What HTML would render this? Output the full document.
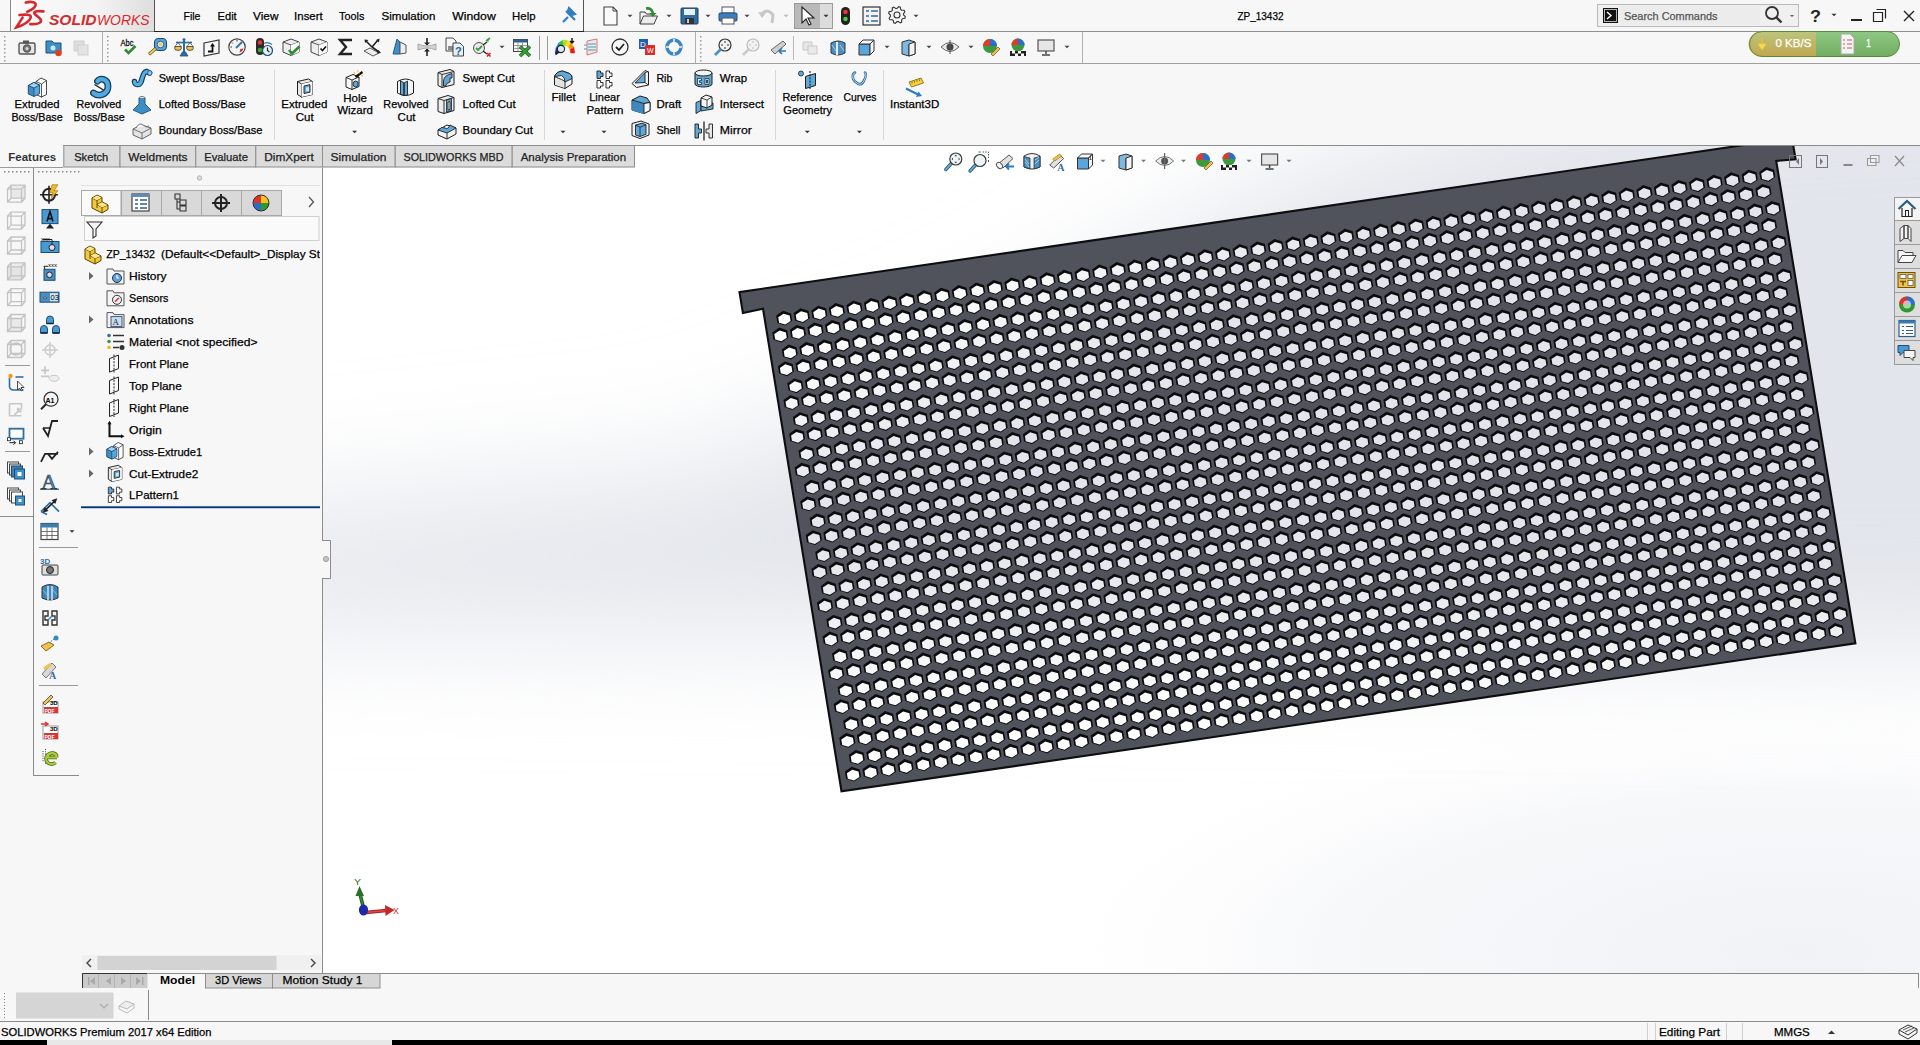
<!DOCTYPE html><html><head><meta charset="utf-8"><title>SOLIDWORKS</title><style>html,body{margin:0;padding:0;width:1920px;height:1045px;overflow:hidden;background:#f7f7f7}svg{display:block;font-family:"Liberation Sans",sans-serif}</style></head><body><svg width="1920" height="1045" viewBox="0 0 1920 1045"><rect x="0" y="0" width="1920" height="31" fill="#f7f7f7" /><defs><linearGradient id="lg" x1="0" x2="1" y1="0" y2="0"><stop offset="0" stop-color="#fbfbfb"/><stop offset=".6" stop-color="#f3f3f3"/><stop offset="1" stop-color="#dedede"/></linearGradient></defs><rect x="11" y="0" width="143" height="31" fill="url(#lg)" /><line x1="10.5" y1="0" x2="10.5" y2="31" stroke="#8a8a8a" stroke-width="1" /><line x1="154.5" y1="0" x2="154.5" y2="31" stroke="#8a8a8a" stroke-width="1" /><g fill="none" stroke="#d42a2f" stroke-linecap="round"><path d="M25.8 2.6C31 1.2 36.5 2 35.6 5.2 34.8 8 31 10.3 27.3 11.8" stroke-width="2.6"/><path d="M19.5 15C24.5 14.4 31 14.2 30.8 16.8 30.4 21 23 25.5 16.3 27.4L22.6 17.6" stroke-width="2.6"/><path d="M43.4 11.4C39.5 11 34.5 11 34.3 12.8 34.1 15 41.2 17.6 41 21 40.8 23.6 35.5 24.3 30.4 24.2" stroke-width="2.7"/></g><text x="49" y="24.5" font-size="15.5" font-weight="bold" font-style="italic" fill="#d52b2f" textLength="47.5" lengthAdjust="spacingAndGlyphs">SOLID</text><text x="97" y="24.5" font-size="15.5" font-style="italic" fill="#d52b2f" textLength="52.5" lengthAdjust="spacingAndGlyphs">WORKS</text><rect x="155" y="0" width="429" height="31" fill="#f7f7f7" /><line x1="154.5" y1="0" x2="154.5" y2="31.5" stroke="#555" stroke-width="1" /><line x1="583.5" y1="0" x2="583.5" y2="31.5" stroke="#555" stroke-width="1" /><line x1="154" y1="31.5" x2="584" y2="31.5" stroke="#222" stroke-width="1" /><text x="183.5" y="20.3" font-size="11.8" stroke="#000" stroke-width="0.25" textLength="16.9" lengthAdjust="spacingAndGlyphs">File</text><text x="217.5" y="20.3" font-size="11.8" stroke="#000" stroke-width="0.25" textLength="19.2" lengthAdjust="spacingAndGlyphs">Edit</text><text x="253.1" y="20.3" font-size="11.8" stroke="#000" stroke-width="0.25">View</text><text x="294.1" y="20.3" font-size="11.8" stroke="#000" stroke-width="0.25" textLength="28.6" lengthAdjust="spacingAndGlyphs">Insert</text><text x="339.1" y="20.3" font-size="11.8" stroke="#000" stroke-width="0.25" textLength="25.3" lengthAdjust="spacingAndGlyphs">Tools</text><text x="381.5" y="20.3" font-size="11.8" stroke="#000" stroke-width="0.25" textLength="53.9" lengthAdjust="spacingAndGlyphs">Simulation</text><text x="452.3" y="20.3" font-size="11.8" stroke="#000" stroke-width="0.25" textLength="43.4" lengthAdjust="spacingAndGlyphs">Window</text><text x="512.1" y="20.3" font-size="11.8" stroke="#000" stroke-width="0.25" textLength="23.4" lengthAdjust="spacingAndGlyphs">Help</text><path d="M563 22l5-5M566 11l9 9M569 8l6 6-3 1-4-4z" stroke="#2f7fc0" stroke-width="2.2" fill="#2f7fc0"/><g transform="translate(601 6)"><path d="M3 1h9l4 4v14H3z" fill="#fafafa" stroke="#444" stroke-width="1.1"/><path d="M12 1v4h4" fill="none" stroke="#444"/></g><path d="M627.5 14.75h5.0l-2.5 2.5z" fill="#444"/><g transform="translate(639 6)"><path d="M1 6h5l1.5 2H14v3" fill="#ddd" stroke="#444" stroke-width="1"/><path d="M1 18l3.5-8h14L15 18z" fill="#ececec" stroke="#444" stroke-width="1"/><path d="M1 6v12" stroke="#444"/><path d="M7 2.5q6-1 7 5" fill="none" stroke="#2e8b2e" stroke-width="2.6"/><path d="M10.5 7h7l-3.5 4z" fill="#2e8b2e"/></g><path d="M666.5 14.75h5.0l-2.5 2.5z" fill="#444"/><g transform="translate(680 6)"><rect x="1" y="2" width="17" height="16" rx="1" fill="#2f6ea3" stroke="#1c3f60"/><rect x="4" y="3" width="11" height="6" fill="#e8f1f8"/><rect x="5" y="12" width="9" height="6" fill="#333"/><rect x="7" y="13" width="2" height="4" fill="#ccc"/></g><path d="M705.5 14.75h5.0l-2.5 2.5z" fill="#444"/><g transform="translate(718 6)"><rect x="4" y="1" width="12" height="6" fill="#fff" stroke="#555"/><rect x="1" y="7" width="18" height="8" rx="1" fill="#3a7fc0" stroke="#244e78"/><rect x="4" y="12" width="12" height="6" fill="#fff" stroke="#555"/></g><path d="M744.5 14.75h5.0l-2.5 2.5z" fill="#444"/><g transform="translate(757 6)"><path d="M4 9q6-8 12 0l-1 8" fill="none" stroke="#c8c8c8" stroke-width="3"/><path d="M1 6l4 6 4-5z" fill="#c8c8c8"/></g><path d="M783.5 14.75h5.0l-2.5 2.5z" fill="#bbb"/><rect x="794.5" y="3.5" width="38" height="25" fill="#dcdcdc" stroke="#9a9a9a" stroke-width="1" /><rect x="795" y="4" width="25" height="24" fill="#b9b9b9" /><g transform="translate(799 6)"><path d="M3 1v16l4-4 3 6 2-1-3-6h6z" fill="#fff" stroke="#222" stroke-width="1.1"/></g><path d="M823.5 14.75h5.0l-2.5 2.5z" fill="#333"/><g transform="translate(836 6)"><rect x="5" y="1" width="9" height="18" rx="4.5" fill="#222"/><circle cx="9.5" cy="6" r="2.3" fill="#e33"/><circle cx="9.5" cy="13" r="2.3" fill="#4c4"/></g><g transform="translate(862 6)"><rect x="1" y="1" width="17" height="18" fill="#f3f3f3" stroke="#333" stroke-width="1.2"/><path d="M4 5h3M9 5h7M4 10h3M9 10h7M4 15h3M9 15h7" stroke="#2b6ea6" stroke-width="1.6"/></g><g transform="translate(887 5)"><path d="M10.0 3.4L11.7 1.7L13.3 2.1L13.7 4.5L14.7 5.3L17.1 5.3L17.9 6.7L16.5 8.7L16.6 10.0L18.3 11.7L17.9 13.3L15.5 13.7L14.7 14.7L14.7 17.1L13.3 17.9L11.3 16.5L10.0 16.6L8.3 18.3L6.7 17.9L6.3 15.5L5.3 14.7L2.9 14.7L2.1 13.3L3.5 11.3L3.4 10.0L1.7 8.3L2.1 6.7L4.5 6.3L5.3 5.3L5.3 2.9L6.7 2.1L8.7 3.5Z" fill="#f4f4f4" stroke="#333" stroke-width="1.1"/><circle cx="10" cy="10" r="3" fill="#f7f7f7" stroke="#333" stroke-width="1.1"/></g><path d="M913.5 14.75h5.0l-2.5 2.5z" fill="#444"/><text x="1237.5" y="19.8" font-size="11.5" stroke="#000" stroke-width="0.25" textLength="46.0" lengthAdjust="spacingAndGlyphs">ZP_13432</text><rect x="1597.5" y="4.5" width="201" height="22" fill="#f0f0f0" stroke="#b9b9b9" stroke-width="1" /><rect x="1620" y="6" width="140" height="19" fill="#ececec" /><g transform="translate(1602 7)"><rect x="1" y="1" width="15" height="15" fill="#111"/><rect x="2.5" y="2.5" width="12" height="12" fill="none" stroke="#ddd" stroke-width=".8"/><path d="M5 5l4 3.5-4 3.5" fill="none" stroke="#fff" stroke-width="1.4"/></g><text x="1624.0" y="19.8" font-size="11.5" fill="#555" stroke="#555" stroke-width="0.25" textLength="93.5" lengthAdjust="spacingAndGlyphs">Search Commands</text><g transform="translate(1764 5)"><circle cx="8" cy="8" r="6" fill="none" stroke="#333" stroke-width="1.8"/><path d="M12.5 12.5l5 5" stroke="#333" stroke-width="2.4"/></g><path d="M1789.8 14.9h4.4l-2.2 2.2z" fill="#666"/><text x="1810" y="22" font-size="16" font-weight="bold" fill="#222" textLength="11" lengthAdjust="spacingAndGlyphs">?</text><path d="M1831.5 13.75h5.0l-2.5 2.5z" fill="#333"/><rect x="1851" y="19" width="11" height="2" fill="#222" /><path d="M1876.5 9.5h9v9M1873.5 12.5h9v9h-9z" fill="none" stroke="#222" stroke-width="1.2"/><path d="M1904 11l10 10M1914 11l-10 10" stroke="#222" stroke-width="1.4"/><rect x="0" y="32" width="1920" height="31" fill="#f7f7f7" /><line x1="0" y1="31.5" x2="154" y2="31.5" stroke="#8f8f8f" stroke-width="1" /><line x1="584" y1="31.5" x2="1920" y2="31.5" stroke="#8f8f8f" stroke-width="1" /><line x1="0" y1="63.5" x2="1920" y2="63.5" stroke="#a0a0a0" stroke-width="1" /><rect x="4" y="36" width="1.5" height="1.5" fill="#999"/><rect x="4" y="40" width="1.5" height="1.5" fill="#999"/><rect x="4" y="44" width="1.5" height="1.5" fill="#999"/><rect x="4" y="48" width="1.5" height="1.5" fill="#999"/><rect x="4" y="52" width="1.5" height="1.5" fill="#999"/><rect x="4" y="56" width="1.5" height="1.5" fill="#999"/><rect x="4" y="60" width="1.5" height="1.5" fill="#999"/><rect x="107" y="36" width="1.5" height="1.5" fill="#999"/><rect x="107" y="40" width="1.5" height="1.5" fill="#999"/><rect x="107" y="44" width="1.5" height="1.5" fill="#999"/><rect x="107" y="48" width="1.5" height="1.5" fill="#999"/><rect x="107" y="52" width="1.5" height="1.5" fill="#999"/><rect x="107" y="56" width="1.5" height="1.5" fill="#999"/><rect x="107" y="60" width="1.5" height="1.5" fill="#999"/><line x1="102.5" y1="32" x2="102.5" y2="63" stroke="#b0b0b0" stroke-width="1" /><g transform="translate(17 37)"><rect x="2" y="6" width="16" height="11" rx="1.5" fill="#e8e8e8" stroke="#555" stroke-width="1.4"/><rect x="6" y="3.5" width="6" height="3" fill="#555"/><circle cx="10" cy="11.5" r="3.6" fill="#777" stroke="#555" stroke-width="1.2"/><circle cx="10" cy="11.5" r="1.5" fill="#ddd"/></g><g transform="translate(44 37)"><path d="M2 4h6l2 2h7v10H2z" fill="#3d8fc6" stroke="#1d4f78" stroke-width="1"/><circle cx="9" cy="11" r="2.5" fill="#cfe6f5"/><circle cx="14.5" cy="16" r="3.2" fill="#e0401f"/></g><g transform="translate(71 37)"><rect x="3" y="4" width="10" height="10" fill="#ddd" stroke="#cfcfcf"/><rect x="7" y="8" width="10" height="10" fill="#e4e4e4" stroke="#cfcfcf"/></g><g transform="translate(120 37)"><text x="0.5" y="8.5" font-size="9" font-family="Liberation Sans" fill="#111" stroke="#111" stroke-width=".3" textLength="13" lengthAdjust="spacingAndGlyphs">Abc</text><path d="M5 12.5l3.5 3.5 7-7" fill="none" stroke="#2e8b2e" stroke-width="2.6"/></g><g transform="translate(148 37)"><rect x="6.5" y="1.5" width="12" height="12" rx="4" fill="#5aa0d0" stroke="#1d4e78" stroke-width="1.1"/><circle cx="12.5" cy="7.5" r="3.3" fill="#cfe5f3" stroke="#1d4e78" stroke-width=".8"/><circle cx="12.5" cy="7.5" r="1.8" fill="#f2d040"/><path d="M7 12l-5 4.5" stroke="#6d5a10" stroke-width="3.2" stroke-linecap="round"/><path d="M7 12l-5 4.5" stroke="#e6cf5a" stroke-width="1.8" stroke-linecap="round"/></g><g transform="translate(174 37)"><path d="M10 2v13" stroke="#2f6ea3" stroke-width="2"/><path d="M2 5.5h16" stroke="#2f6ea3" stroke-width="1.6"/><circle cx="10" cy="2.5" r="1.5" fill="#2f6ea3"/><path d="M0.8 9.5h6.4v2.3a3.2 1.5 0 0 1-6.4 0zM12.8 9.5h6.4v2.3a3.2 1.5 0 0 1-6.4 0z" fill="#f2c14b" stroke="#333" stroke-width=".8"/><path d="M1 9.5l3-4 3 4M13 9.5l3-4 3 4" fill="none" stroke="#333" stroke-width=".6"/><path d="M6 19h8l-2.5-4h-3z" fill="#2f6ea3" stroke="#1d4e78" stroke-width=".8"/></g><g transform="translate(202 37)"><path d="M2 6l15-3v13L2 19z" fill="#f6f6f6" stroke="#333" stroke-width="1.2"/><path d="M6 14.5h4.5V9" fill="none" stroke="#111" stroke-width="1.8"/><path d="M8 9.5l2.5-3.5 2.5 3.5z" fill="#111"/></g><g transform="translate(227 37)"><circle cx="10" cy="10" r="8.2" fill="#f4f4f4" stroke="#444" stroke-width="1.2"/><path d="M5 5.5l1 1M10 3v1.5M3.5 10H5M15 5.5l-1 1" stroke="#333" stroke-width="1"/><path d="M9 11l6-6" stroke="#2f79b5" stroke-width="2"/><path d="M12.5 15.5a5.5 5.5 0 0 0 4-4l-3 .5z" fill="#c62828"/></g><g transform="translate(254 37)"><rect x="2" y="1" width="8" height="17" rx="4" fill="#2a2a2a"/><circle cx="6" cy="5.5" r="2.3" fill="#e33"/><circle cx="6" cy="13" r="2.3" fill="#3a3"/><circle cx="13.5" cy="13.5" r="5" fill="#e4eef6" stroke="#1d4e78" stroke-width="1.2"/><path d="M13.5 10.5v3l2 1.5" fill="none" stroke="#222" stroke-width="1.1"/><path d="M10 6.5q4-2 8 1" fill="none" stroke="#2f79b5" stroke-width="1.2"/></g><g transform="translate(281 37)"><path d="M2 5l8-3 8 3v10l-8 3.5-8-3.5z" fill="#eeeeee" stroke="#444" stroke-width="1"/><path d="M2 5l8 3 8-3M10 8v10.5" fill="none" stroke="#444" stroke-width=".9"/><path d="M10 8l8-3v10l-8 3.5z" fill="#fafafa"/><path d="M8 13l3 3.5 7.5-7" fill="none" stroke="#2e8b2e" stroke-width="2.6"/></g><g transform="translate(309 37)"><path d="M2 5l8-3 8 3v10l-8 3.5-8-3.5z" fill="#eeeeee" stroke="#444" stroke-width="1"/><path d="M2 5l8 3 8-3M10 8v10.5" fill="none" stroke="#444" stroke-width=".9"/><path d="M10 8l8-3v10l-8 3.5z" fill="#fafafa"/><path d="M11.5 11.5l2 2 3.5-4" fill="none" stroke="#111" stroke-width="1.6"/></g><g transform="translate(336 37)"><path d="M16 3H4l6 7-6 7h12" fill="none" stroke="#222" stroke-width="2.4" stroke-linejoin="miter"/></g><g transform="translate(363 37)"><path d="M1 14l6-3 9 5-6 3z" fill="#eee" stroke="#444" stroke-width=".9"/><path d="M9 10L3 4M9 10l6-7M9 10l7 5" stroke="#222" stroke-width="1.6"/><path d="M1.5 2.5l4 .5-3.5 3zM16.5 1.5l-.5 4-3-2.5zM18 16l-4 .5 1.5-3.5z" fill="#222"/></g><g transform="translate(390 37)"><path d="M3 17l4-15 3 3v12z" fill="#3f8fcb" stroke="#245c8a"/><path d="M10 5l6 3v8l-6 1z" fill="#eee" stroke="#555"/></g><g transform="translate(417 37)"><path d="M1 7q9 4 18 0v6q-9-4-18 0z" fill="#d4d4d4" stroke="#999" stroke-width=".8"/><path d="M10 1v7M10 19v-7" stroke="#222" stroke-width="1.6"/><path d="M7 5.5l3 3 3-3zM7 14.5l3-3 3 3z" fill="#222"/></g><g transform="translate(445 37)"><path d="M1 1h7l3 3v10H1z" fill="#f6f6f6" stroke="#333" stroke-width=".9"/><path d="M3 10h5M3 12h5" stroke="#222" stroke-width="1.2"/><path d="M8 6h7l3.5 3.5V19H8z" fill="#e6f0f7" stroke="#333" stroke-width=".9"/><text x="10" y="17.5" font-size="11" font-weight="bold" fill="#2a5f90" font-family="Liberation Sans">?</text></g><g transform="translate(472 37)"><circle cx="7" cy="11" r="5.5" fill="#e9e9e9" stroke="#555" stroke-width="1"/><path d="M4 11l2 2 4-4" stroke="#3a9e3a" stroke-width="1.8" fill="none"/><path d="M11 8l4-3M11 14l4 3" stroke="#222" stroke-width="1.3"/><path d="M14 4l4-3M15 3l1.5 1.5" stroke="#3a9e3a" stroke-width="1.6" fill="none"/><path d="M15 16l3.5 3.5M18.5 16L15 19.5" stroke="#d22" stroke-width="1.6"/></g><g transform="translate(512 37)"><rect x="1.5" y="2.5" width="14" height="12" fill="#fafafa" stroke="#333" stroke-width=".9"/><rect x="1.5" y="2.5" width="14" height="3" fill="#2f5f8a"/><path d="M1.5 8.5h14M1.5 11.5h14M6 5.5v9M10.5 5.5v9" stroke="#777" stroke-width=".7"/><path d="M8 9.5l10 9.5M18 9.5L8 19" stroke="#1f6e1f" stroke-width="3.6"/><path d="M8 9.5l10 9.5M18 9.5L8 19" stroke="#3aa23a" stroke-width="2"/></g><g transform="translate(555 37)"><path d="M0.2 16.0L1.2 10.4L4.9 12.7L4.4 16.0z" fill="#1a2fb0" stroke="#1a2fb0" stroke-width=".5"/><path d="M1.2 10.4L3.9 5.8L6.5 10.1L4.9 12.7z" fill="#1f7fe0" stroke="#1f7fe0" stroke-width=".5"/><path d="M3.9 5.8L7.8 3.3L8.7 8.7L6.5 10.1z" fill="#22c05a" stroke="#22c05a" stroke-width=".5"/><path d="M7.8 3.3L12.2 3.3L11.3 8.7L8.7 8.7z" fill="#a8e020" stroke="#a8e020" stroke-width=".5"/><path d="M12.2 3.3L16.1 5.8L13.5 10.1L11.3 8.7z" fill="#f8e020" stroke="#f8e020" stroke-width=".5"/><path d="M16.1 5.8L18.8 10.4L15.1 12.7L13.5 10.1z" fill="#f89010" stroke="#f89010" stroke-width=".5"/><path d="M18.8 10.4L19.8 16.0L15.6 16.0L15.1 12.7z" fill="#e02010" stroke="#e02010" stroke-width=".5"/><circle cx="6" cy="12" r="3.6" fill="#dfe8ee" stroke="#222" stroke-width="1.1"/><path d="M3.5 14.5l-3 3" stroke="#222" stroke-width="2"/><path d="M17 1v4M15 4l2 2 2-2" fill="none" stroke="#111" stroke-width="1.4"/></g><g transform="translate(583 37)"><path d="M4 4l10-2v13L4 18z" fill="#f3e7e4" stroke="#d05a5a" stroke-width=".8"/><path d="M5 7h8M5 10h8M5 13h8" stroke="#3ba0c6"/><path d="M1 8h3M1 12h3" stroke="#3ba0c6"/></g><g transform="translate(610 37)"><circle cx="10" cy="10" r="8" fill="#f7f7f7" stroke="#333" stroke-width="1.3"/><path d="M6 10l3 3 5-6" fill="none" stroke="#222" stroke-width="1.8"/></g><g transform="translate(637 37)"><rect x="2" y="2" width="9" height="10" fill="#1f5fb0"/><rect x="8" y="8" width="10" height="10" fill="#e02b2b"/><text x="3" y="10" font-size="8" fill="#fff" font-family="Liberation Sans">D</text><text x="10" y="16" font-size="7" fill="#fff" font-family="Liberation Sans">W</text></g><g transform="translate(664 37)"><circle cx="10" cy="10" r="7" fill="none" stroke="#3d86c6" stroke-width="3.4"/><path d="M10 2v4M10 14v4M2 10h4M14 10h4" stroke="#f4f4f4" stroke-width="1.5"/></g><g transform="translate(713 37)"><circle cx="12" cy="8" r="6" fill="#f2f2f2" stroke="#333" stroke-width="1.2"/><path d="M8 12l-6 6" stroke="#4a90c8" stroke-width="2.6"/><path d="M12 4v2M12 10v2M8 8h2M14 8h2" stroke="#333" stroke-width="1"/></g><g transform="translate(741 37)"><circle cx="12" cy="8" r="6" fill="#f2f2f2" stroke="#bbb" stroke-width="1.2"/><path d="M8 12l-6 6" stroke="#ccc" stroke-width="2.6"/><path d="M12 4v2M12 10v2M8 8h2M14 8h2" stroke="#bbb" stroke-width="1"/></g><g transform="translate(768 37)"><path d="M3 13l12-9 3 3-11 10z" fill="#cfcfcf" stroke="#666"/><path d="M11 14h7M14 11l-3 3 3 3" stroke="#2f79b5" stroke-width="1.6" fill="none"/></g><g transform="translate(800 37)"><path d="M3 5h9v8H3z" fill="#e6e6e6" stroke="#c8c8c8"/><path d="M8 9h9v8H8z" fill="#e9e9e9" stroke="#c8c8c8"/></g><g transform="translate(828 37)"><path d="M3 6q7-4 14 0v10q-7 4-14 0z" fill="#4a8fc4" stroke="#333"/><path d="M9 5v13" stroke="#eee" stroke-width="2"/><path d="M4 8l4 6M12 8l4 6" stroke="#9ed0ef" stroke-width="1"/></g><g transform="translate(856 37)"><path d="M3 7h11v11H3z" fill="#5aa6dc" stroke="#333"/><path d="M3 7l4-4h11l-4 4zM14 7l4-4v11l-4 4z" fill="#f0f6fb" stroke="#333"/></g><g transform="translate(898 37)"><path d="M4 5l7-2 6 2v12l-6 2-7-2z" fill="#7eb8e0" stroke="#333"/><path d="M11 7v12" stroke="#333"/><path d="M11 7l6-2v12l-6 2z" fill="#f3f3f3" stroke="#333"/></g><g transform="translate(940 37)"><path d="M1 10q9-9 18 0q-9 9-18 0z" fill="#e8e8e8" stroke="#666"/><circle cx="10" cy="10" r="3.5" fill="#444"/><path d="M10 3v14" stroke="#555"/></g><g transform="translate(981 37)"><circle cx="9" cy="9" r="7" fill="#3c9a3c"/><path d="M9 2a7 7 0 0 1 7 7H9z" fill="#2a6fd0"/><path d="M2 9a7 7 0 0 1 7-7v7z" fill="#e03a2a"/><path d="M10 17l7-7 2 2-7 7z" fill="#f0c040" stroke="#555" stroke-width=".7"/></g><g transform="translate(1008 37)"><circle cx="10" cy="8" r="6.5" fill="#3c9a3c"/><path d="M10 1.5a6.5 6.5 0 0 1 6.5 6.5H10z" fill="#2a6fd0"/><path d="M3.5 8a6.5 6.5 0 0 1 6.5-6.5V8z" fill="#e03a2a"/><path d="M2 14h16v5H2z" fill="#222"/><path d="M4 14h3v2.5H4zM10 14h3v2.5h-3zM7 16.5h3V19H7zM13 16.5h3V19h-3z" fill="#fff"/></g><g transform="translate(1036 37)"><rect x="2" y="3" width="16" height="11" fill="#e6e6e6" stroke="#555" stroke-width="1.2"/><path d="M10 14v3M6 18h8" stroke="#444" stroke-width="1.5"/></g><path d="M499.5 45.75h5.0l-2.5 2.5z" fill="#444"/><path d="M884.5 45.75h5.0l-2.5 2.5z" fill="#444"/><path d="M926.5 45.75h5.0l-2.5 2.5z" fill="#444"/><path d="M968.5 45.75h5.0l-2.5 2.5z" fill="#444"/><path d="M1064.5 45.75h5.0l-2.5 2.5z" fill="#444"/><line x1="539.5" y1="36" x2="539.5" y2="60" stroke="#9a9a9a" stroke-width="1" /><line x1="547.5" y1="36" x2="547.5" y2="60" stroke="#9a9a9a" stroke-width="1" /><line x1="695.5" y1="32" x2="695.5" y2="63" stroke="#b0b0b0" stroke-width="1" /><rect x="700" y="36" width="1.5" height="1.5" fill="#999"/><rect x="700" y="40" width="1.5" height="1.5" fill="#999"/><rect x="700" y="44" width="1.5" height="1.5" fill="#999"/><rect x="700" y="48" width="1.5" height="1.5" fill="#999"/><rect x="700" y="52" width="1.5" height="1.5" fill="#999"/><rect x="700" y="56" width="1.5" height="1.5" fill="#999"/><rect x="700" y="60" width="1.5" height="1.5" fill="#999"/><line x1="793.5" y1="36" x2="793.5" y2="60" stroke="#b8b8b8" stroke-width="1" /><line x1="1082.5" y1="32" x2="1082.5" y2="63" stroke="#b0b0b0" stroke-width="1" /><defs><linearGradient id="pg1" x1="0" x2="0" y1="0" y2="1"><stop offset="0" stop-color="#bcc57c"/><stop offset="1" stop-color="#c2a650"/></linearGradient><linearGradient id="pg2" x1="0" x2="0" y1="0" y2="1"><stop offset="0" stop-color="#8ec883"/><stop offset="1" stop-color="#72ad62"/></linearGradient></defs><path d="M1761 31.5h55v25h-55a12.5 12.5 0 0 1 0-25z" fill="url(#pg1)"/><path d="M1816 31.5h71a12.5 12.5 0 0 1 0 25h-71z" fill="url(#pg2)"/><rect x="1749.5" y="31.5" width="150" height="25" rx="12.5" fill="none" stroke="#5b8a3c"/><path d="M1762 38v9M1758 44l4 6 4-6z" fill="#f6e25a" stroke="#e8c93a"/><text x="1775.5" y="46.5" font-size="11.5" fill="#fff" stroke="#fff" stroke-width="0.25">0 KB/S</text><g transform="translate(1840 33)"><path d="M1 1h9l4 4v16H1z" fill="#f5f5f5" stroke="#aaa"/><path d="M3 7h2M7 7h5M3 11h2M7 11h5M3 15h2M7 15h5" stroke="#c55" stroke-width="1.2"/></g><text x="1866.0" y="46.5" font-size="11.5" fill="#fff" stroke="#fff" stroke-width="0.25" textLength="5.0" lengthAdjust="spacingAndGlyphs">1</text><rect x="0" y="64" width="1920" height="81" fill="#f7f7f7" /><line x1="63" y1="145.5" x2="1920" y2="145.5" stroke="#8c8c8c" stroke-width="1" /><line x1="274.5" y1="70" x2="274.5" y2="140" stroke="#d8d8d8" stroke-width="1" /><line x1="544.5" y1="70" x2="544.5" y2="140" stroke="#d8d8d8" stroke-width="1" /><line x1="775.5" y1="70" x2="775.5" y2="140" stroke="#d8d8d8" stroke-width="1" /><line x1="883.5" y1="70" x2="883.5" y2="140" stroke="#d8d8d8" stroke-width="1" /><g transform="translate(27.5 77)"><path d="M8.5 4.5l5-3.5 5.5 2.5v14l-5 2.5-5.5-2.5z" fill="#fdfdfd" stroke="#333" stroke-width=".9"/><path d="M8.5 4.5l5.5 2.5 5-3.5M14 7v13.5" fill="none" stroke="#333" stroke-width=".8"/><path d="M0.8 8.5l5.5-3 5.8 2.5v8.5l-5.5 3-5.8-2.6z" fill="#3f8fc7" stroke="#173e5e" stroke-width=".9"/><path d="M0.8 8.5l5.5-3 5.8 2.5-5.6 3z" fill="#9fd3f0" stroke="#173e5e" stroke-width=".8"/><path d="M6.5 11v8.5" stroke="#173e5e" stroke-width=".8"/><path d="M7 11.5l4.6-2.6v7.2l-4.6 2.6z" fill="#5aa7dc"/></g><g transform="translate(90 77)"><path d="M7.5 4.2C10 0.5 18 1.5 18 9.5 18 17 9 20.5 3.5 16" fill="none" stroke="#123f63" stroke-width="6.8" stroke-linecap="round"/><path d="M7.5 4.2C10 0.5 18 1.5 18 9.5 18 17 9 20.5 3.5 16" fill="none" stroke="#53a8dc" stroke-width="4.2" stroke-linecap="round"/><path d="M4.5 7.5l9 5.5" stroke="#1a1a1a" stroke-width="1.3"/></g><g transform="translate(132 68)"><path d="M2.5 13.5C3 17.5 7.5 17.5 9 14 10.5 10 11 4 14.5 3.5L17.5 5" fill="none" stroke="#123f63" stroke-width="5.6" stroke-linecap="round"/><path d="M2.5 13.5C3 17.5 7.5 17.5 9 14 10.5 10 11 4 14.5 3.5L17.5 5" fill="none" stroke="#5aaee0" stroke-width="3.2" stroke-linecap="round"/><ellipse cx="17.8" cy="5" rx="2.2" ry="2.4" fill="#8fcbef" stroke="#1d5d8e" stroke-width=".9"/></g><g transform="translate(132 95)"><ellipse cx="10" cy="3" rx="3" ry="1.5" fill="#e8f3fa" stroke="#555" stroke-width=".8"/><path d="M7 3v6l-6 6 9 4 9-4-6-6V3" fill="#3d8fc6" stroke="#1d4e7a" stroke-width=".9"/></g><g transform="translate(132 120)"><path d="M1 9l8-4 10 3v6l-9 5-9-4z" fill="#e4e4e4" stroke="#555" stroke-width=".9"/><path d="M1 9l9 4 9-5M10 13v6" fill="none" stroke="#555" stroke-width=".8"/><path d="M4 8q3-6 7-3t6 1" fill="#f6f6f6" stroke="#555" stroke-width=".8"/></g><g transform="translate(296 77)"><path d="M1.5 4.5l11-2.5 4 2.5v13l-11 2.5-4-2.5z" fill="#e9e9e9" stroke="#1e1e1e" stroke-width="1"/><path d="M1.5 4.5l4 2.5 11-2.5M5.5 7v13.5" fill="none" stroke="#1e1e1e" stroke-width=".9"/><path d="M5.5 7l11-2.5v13l-11 2.5z" fill="#fafafa"/><path d="M8 9l6-1.3v7.5L8 16.5z" fill="#5fa8d8" stroke="#1e1e1e" stroke-width=".9"/><path d="M10 10.5l3-.6v4l-3 .6z" fill="#cfe6f4"/></g><g transform="translate(345 70)"><path d="M1 7.5l7-3 6 2.5v9.5l-7 3-6-2.5z" fill="#fafafa" stroke="#1e1e1e" stroke-width="1"/><path d="M1 7.5l6 2.5 7-3M7 10v9.5" fill="none" stroke="#1e1e1e" stroke-width=".9"/><ellipse cx="10.6" cy="14" rx="2.6" ry="3" fill="#5fa8d8" stroke="#1e1e1e" stroke-width=".9"/><path d="M10.5 7l7-5" stroke="#111" stroke-width="2.2"/><path d="M9 3.5l1-1M12.5 1.5l.8-1M16.5 5.5l1.5.3M14 2.5l.6.8" stroke="#f0b820" stroke-width="1.3"/></g><g transform="translate(396 77)"><path d="M1.5 4.5q8-5 16 0v11.5q-8 5-16 0z" fill="#f4f4f4" stroke="#1e1e1e" stroke-width="1"/><path d="M4.5 3.6l3.5 2.5v12.5l-3.5-1.5zM8 6.1l3.5-2v14l-3.5.5z" fill="#5fa8d8" stroke="#1e1e1e" stroke-width=".9"/></g><g transform="translate(437 68)"><path d="M1 4.5l12-3 4 2v13l-12 3-4-2z" fill="#ececec" stroke="#1e1e1e" stroke-width="1"/><path d="M1 4.5l4 2 12-3M5 6.5V19.5" fill="none" stroke="#1e1e1e" stroke-width=".9"/><path d="M6.5 18V13Q7 7 15 5.5v4.5h-2v4q-4 1-4.5 4z" fill="#5fa8d8" stroke="#1e1e1e" stroke-width=".9"/></g><g transform="translate(437 94)"><path d="M1 4.5l10-3 6 2v13l-10 3-6-2z" fill="#ececec" stroke="#1e1e1e" stroke-width="1"/><path d="M1 4.5l6 2 10-3M7 6.5V19.5" fill="none" stroke="#1e1e1e" stroke-width=".9"/><path d="M9.5 6l5-1.5v12l-5 1.5zM11 8v8l2-.6V7.4z" fill="#5fa8d8" stroke="#1e1e1e" stroke-width=".8"/></g><g transform="translate(437 120)"><path d="M1 10l9-5 9 3v6l-9 5-9-4z" fill="#f3f3f3" stroke="#1e1e1e" stroke-width="1"/><path d="M1 10q4-4 7-2t5-3l6 3-9 5-9-3z" fill="#5fa8d8" stroke="#1e1e1e" stroke-width=".9"/><path d="M10 13v6" stroke="#1e1e1e" stroke-width=".9"/></g><g transform="translate(553.5 70)"><path d="M1 6.5Q3 1.5 9 1l7 2.5q3 1.5 2.5 5V14l-7 4.5L1 15z" fill="#f2f2f2" stroke="#1e1e1e" stroke-width="1"/><path d="M1.5 7l6.5 2.8 3.5 2.2V18l-10-3.3z" fill="#e4e4e4"/><path d="M9 1l7 2.5q3 1.5 2.5 5l-7 3.5q0-5-3.5-6.5L1 6.5Q3 1.5 9 1z" fill="#5fa8d8" stroke="#1e1e1e" stroke-width=".9"/><path d="M1 6.5l7 3q3.5 1.5 3.5 2.5V18.5" fill="none" stroke="#1e1e1e" stroke-width=".9"/></g><g transform="translate(595.5 70)"><path d="M1.5 1h3.5v2h2.5v3.5h-2.5v2h-3.5z" fill="#5fa8d8" stroke="#1e1e1e" stroke-width=".9"/><path d="M10.5 1h3.5v2h2.5v3.5h-2.5v2h-3.5zM1.5 10.5h3.5v2h2.5v3.5h-2.5v2h-3.5zM10.5 10.5h3.5v2h2.5v3.5h-2.5v2h-3.5z" fill="#fafafa" stroke="#1e1e1e" stroke-width=".9"/></g><g transform="translate(631 69)"><path d="M1 14.5l13-13 3.5 1.5v13l-12 2.5z" fill="#f2f2f2" stroke="#1e1e1e" stroke-width="1"/><path d="M4 14l10-10.5v10z" fill="#5fa8d8" stroke="#1e1e1e" stroke-width=".9"/><path d="M14 3.5l3.5-1M14 13.5l3.5 2.5" stroke="#1e1e1e" stroke-width=".8"/></g><g transform="translate(631 95)"><path d="M1 5l8-4 7 2 3 4.5v8l-6 3-12-3.5z" fill="#5fa8d8" stroke="#1e1e1e" stroke-width="1"/><path d="M1.5 5.5l11.5 3.5v10l-12-3.5z" fill="#3f88bd"/><path d="M1 5l12 3.5 6-1" fill="none" stroke="#1e1e1e" stroke-width=".9"/><path d="M13 8.5l6-1v8l-6 3z" fill="#f8f8f8" stroke="#1e1e1e" stroke-width=".9"/></g><g transform="translate(631 120)"><path d="M1 3.5l9-2.5 8 3v11l-9 3.5-8-3z" fill="#f4f4f4" stroke="#1e1e1e" stroke-width="1"/><path d="M4.5 5l6.5-1.8 4 1.6v9.5L9 16.5 4.5 15z" fill="#5fa8d8" stroke="#1e1e1e" stroke-width=".9"/><path d="M4.5 5l4.5 2.2 6-2.4M9 7.2v9.3" fill="none" stroke="#1e1e1e" stroke-width=".8"/></g><g transform="translate(694 69)"><path d="M1 4v11a8.5 3 0 0 0 17 0V4" fill="#5fa8d8" stroke="#1e1e1e" stroke-width="1"/><ellipse cx="9.5" cy="4" rx="8.5" ry="3" fill="#f4f4f4" stroke="#1e1e1e" stroke-width="1"/><path d="M3.5 9.5h4v2H5.5v2h2v2h-4zM11 9.5h4v6h-4zM12.5 11v3h1v-3z" fill="#d8eef9" stroke="#1e1e1e" stroke-width=".7"/></g><g transform="translate(695 94)"><path d="M1 8.5l5-2v10l-5 3z" fill="#5fa8d8" stroke="#1e1e1e" stroke-width=".9"/><path d="M6 9h12v6l-12 2z" fill="#5fa8d8" stroke="#1e1e1e" stroke-width=".9"/><path d="M6 4l5-3 6 2v8l-5 3-6-2z" fill="#f4f4f4" stroke="#1e1e1e" stroke-width="1"/><path d="M6 4l6 2 5-3M12 6v8" fill="none" stroke="#1e1e1e" stroke-width=".8"/></g><g transform="translate(694 121)"><path d="M1 3h3.5v5h3v4h-3v5H1z" fill="#5fa8d8" stroke="#1e1e1e" stroke-width=".9"/><path d="M10 0.5v19" stroke="#111" stroke-width="1.2"/><path d="M18.5 3H15v5h-3v4h3v5h3.5z" fill="#e6e6e6" stroke="#1e1e1e" stroke-width=".9"/></g><g transform="translate(797.5 70)"><circle cx="3.5" cy="3.5" r="2.5" fill="#5fa8d8" stroke="#1e1e1e" stroke-width=".8"/><path d="M8 6.5l10-3v12l-10 3z" fill="#5fa8d8" stroke="#1e1e1e" stroke-width="1"/><path d="M12.5 1v19" stroke="#111" stroke-width="1" stroke-dasharray="2 1.2"/></g><g transform="translate(850 70)"><path d="M5 2.5C2 4 2 9 5 11.5S11 16 13.5 11.5 17 4 15 2.5" fill="none" stroke="#2f6ea3" stroke-width="2.6" stroke-linecap="round"/><path d="M5 2.5C2 4 2 9 5 11.5S11 16 13.5 11.5 17 4 15 2.5" fill="none" stroke="#cfe8f8" stroke-width=".9" stroke-linecap="round"/></g><g transform="translate(905 77)"><path d="M4 5l12-4 2.5 5-12 4z" fill="#f2d040" stroke="#7a6000" stroke-width=".8"/><path d="M7 6.5v-2M9.5 5.7V4M12 4.8V2.8M14.5 4V2.3" stroke="#7a6000" stroke-width=".8"/><path d="M1 11.5l12 6" stroke="#2f7fc0" stroke-width="2.2"/><path d="M11 20l6-1-3.5-4.5z" fill="#2f7fc0"/></g><text x="14.6" y="108.0" font-size="11.5" stroke="#000" stroke-width="0.25" textLength="44.9" lengthAdjust="spacingAndGlyphs">Extruded</text><text x="11.4" y="121.4" font-size="11.5" stroke="#000" stroke-width="0.25" textLength="51.3" lengthAdjust="spacingAndGlyphs">Boss/Base</text><text x="76.6" y="108.0" font-size="11.5" stroke="#000" stroke-width="0.25" textLength="44.7" lengthAdjust="spacingAndGlyphs">Revolved</text><text x="73.6" y="121.4" font-size="11.5" stroke="#000" stroke-width="0.25" textLength="51.1" lengthAdjust="spacingAndGlyphs">Boss/Base</text><text x="158.7" y="82.0" font-size="11.5" stroke="#000" stroke-width="0.25" textLength="86.0" lengthAdjust="spacingAndGlyphs">Swept Boss/Base</text><text x="158.7" y="108.3" font-size="11.5" stroke="#000" stroke-width="0.25" textLength="87.0" lengthAdjust="spacingAndGlyphs">Lofted Boss/Base</text><text x="158.7" y="134.1" font-size="11.5" stroke="#000" stroke-width="0.25" textLength="103.8" lengthAdjust="spacingAndGlyphs">Boundary Boss/Base</text><text x="281.3" y="108.3" font-size="11.5" stroke="#000" stroke-width="0.25">Extruded</text><text x="295.7" y="121.1" font-size="11.5" stroke="#000" stroke-width="0.25">Cut</text><text x="343.3" y="101.5" font-size="11.5" stroke="#000" stroke-width="0.25">Hole</text><text x="337.2" y="114.3" font-size="11.5" stroke="#000" stroke-width="0.25">Wizard</text><text x="383.3" y="108.3" font-size="11.5" stroke="#000" stroke-width="0.25" textLength="45.3" lengthAdjust="spacingAndGlyphs">Revolved</text><text x="397.6" y="121.1" font-size="11.5" stroke="#000" stroke-width="0.25">Cut</text><text x="462.6" y="82.0" font-size="11.5" stroke="#000" stroke-width="0.25" textLength="52.1" lengthAdjust="spacingAndGlyphs">Swept Cut</text><text x="462.6" y="108.0" font-size="11.5" stroke="#000" stroke-width="0.25">Lofted Cut</text><text x="462.6" y="134.0" font-size="11.5" stroke="#000" stroke-width="0.25">Boundary Cut</text><text x="551.4" y="101.0" font-size="11.5" stroke="#000" stroke-width="0.25">Fillet</text><text x="589.2" y="101.0" font-size="11.5" stroke="#000" stroke-width="0.25" textLength="30.7" lengthAdjust="spacingAndGlyphs">Linear</text><text x="586.4" y="114.1" font-size="11.5" stroke="#000" stroke-width="0.25">Pattern</text><text x="656.4" y="82.0" font-size="11.5" stroke="#000" stroke-width="0.25" textLength="16.0" lengthAdjust="spacingAndGlyphs">Rib</text><text x="656.4" y="107.6" font-size="11.5" stroke="#000" stroke-width="0.25">Draft</text><text x="656.4" y="133.8" font-size="11.5" stroke="#000" stroke-width="0.25" textLength="24.0" lengthAdjust="spacingAndGlyphs">Shell</text><text x="719.8" y="82.0" font-size="11.5" stroke="#000" stroke-width="0.25">Wrap</text><text x="719.8" y="107.6" font-size="11.5" stroke="#000" stroke-width="0.25">Intersect</text><text x="719.8" y="133.8" font-size="11.5" stroke="#000" stroke-width="0.25" textLength="32.0" lengthAdjust="spacingAndGlyphs">Mirror</text><text x="782.4" y="101.0" font-size="11.5" stroke="#000" stroke-width="0.25" textLength="50.3" lengthAdjust="spacingAndGlyphs">Reference</text><text x="783.3" y="114.0" font-size="11.5" stroke="#000" stroke-width="0.25" textLength="48.7" lengthAdjust="spacingAndGlyphs">Geometry</text><text x="843.6" y="101.0" font-size="11.5" stroke="#000" stroke-width="0.25" textLength="32.9" lengthAdjust="spacingAndGlyphs">Curves</text><text x="890.0" y="108.0" font-size="11.5" stroke="#000" stroke-width="0.25">Instant3D</text><path d="M352.1 130.75h5.0l-2.5 2.5z" fill="#333"/><path d="M560.5 130.75h5.0l-2.5 2.5z" fill="#333"/><path d="M601.5 130.75h5.0l-2.5 2.5z" fill="#333"/><path d="M804.8 130.75h5.0l-2.5 2.5z" fill="#333"/><path d="M856.9 130.75h5.0l-2.5 2.5z" fill="#333"/><rect x="0" y="146" width="634" height="22" fill="#f7f7f7" /><rect x="0" y="168" width="323" height="805" fill="#f7f7f7" /><rect x="4" y="171" width="1.5" height="1.5" fill="#8a8a8a"/><rect x="8" y="171" width="1.5" height="1.5" fill="#8a8a8a"/><rect x="12" y="171" width="1.5" height="1.5" fill="#8a8a8a"/><rect x="16" y="171" width="1.5" height="1.5" fill="#8a8a8a"/><rect x="20" y="171" width="1.5" height="1.5" fill="#8a8a8a"/><rect x="24" y="171" width="1.5" height="1.5" fill="#8a8a8a"/><rect x="28" y="171" width="1.5" height="1.5" fill="#8a8a8a"/><rect x="38" y="171" width="1.5" height="1.5" fill="#8a8a8a"/><rect x="42" y="171" width="1.5" height="1.5" fill="#8a8a8a"/><rect x="46" y="171" width="1.5" height="1.5" fill="#8a8a8a"/><rect x="50" y="171" width="1.5" height="1.5" fill="#8a8a8a"/><rect x="54" y="171" width="1.5" height="1.5" fill="#8a8a8a"/><rect x="58" y="171" width="1.5" height="1.5" fill="#8a8a8a"/><rect x="62" y="171" width="1.5" height="1.5" fill="#8a8a8a"/><rect x="66" y="171" width="1.5" height="1.5" fill="#8a8a8a"/><rect x="70" y="171" width="1.5" height="1.5" fill="#8a8a8a"/><rect x="74" y="171" width="1.5" height="1.5" fill="#8a8a8a"/><rect x="78" y="171" width="1.5" height="1.5" fill="#8a8a8a"/><line x1="33.5" y1="168" x2="33.5" y2="776" stroke="#8a8a8a" stroke-width="1" /><line x1="0" y1="516.5" x2="33" y2="516.5" stroke="#8a8a8a" stroke-width="1" /><line x1="34" y1="775.5" x2="79" y2="775.5" stroke="#8a8a8a" stroke-width="1" /><line x1="5" y1="365.5" x2="30" y2="365.5" stroke="#9a9a9a" stroke-width="1" /><line x1="5" y1="451.5" x2="30" y2="451.5" stroke="#9a9a9a" stroke-width="1" /><line x1="39" y1="547.5" x2="78" y2="547.5" stroke="#9a9a9a" stroke-width="1" /><line x1="39" y1="685.5" x2="78" y2="685.5" stroke="#9a9a9a" stroke-width="1" /><g transform="translate(7 183.7)"><path d="M4 1.5h14v13H4z" fill="#e9e9e9"/><path d="M0.5 5.5h14v13h-14zM4 1.5h14v13H4zM0.5 5.5L4 1.5M14.5 5.5L18 1.5M14.5 18.5L18 14.5M0.5 18.5L4 14.5" fill="none" stroke="#c3c3c3" stroke-width="1.3"/></g><g transform="translate(7 210.6)"><path d="M0.5 5.5h14v13h-14zM4 1.5h14v13H4zM0.5 5.5L4 1.5M14.5 5.5L18 1.5M14.5 18.5L18 14.5M0.5 18.5L4 14.5" fill="none" stroke="#c3c3c3" stroke-width="1.3"/></g><g transform="translate(7 235.5)"><path d="M0.5 5.5h14v13h-14zM4 1.5h14v13H4zM0.5 5.5L4 1.5M14.5 5.5L18 1.5M14.5 18.5L18 14.5M0.5 18.5L4 14.5" fill="none" stroke="#c3c3c3" stroke-width="1.3"/></g><g transform="translate(7 261.3)"><path d="M4 1.5h14v13H4z" fill="#ececec"/><path d="M0.5 5.5h14v13h-14z" fill="#e4e4e4"/><path d="M0.5 5.5h14v13h-14zM4 1.5h14v13H4zM0.5 5.5L4 1.5M14.5 5.5L18 1.5M14.5 18.5L18 14.5M0.5 18.5L4 14.5" fill="none" stroke="#c3c3c3" stroke-width="1.3"/></g><g transform="translate(7 287.2)"><path d="M0.5 5.5h14v13h-14zM4 1.5h14v13H4zM0.5 5.5L4 1.5M14.5 5.5L18 1.5M14.5 18.5L18 14.5M0.5 18.5L4 14.5" fill="none" stroke="#c3c3c3" stroke-width="1.3"/></g><g transform="translate(7 313)"><path d="M0.5 5.5h14v13h-14z" fill="#e9e9e9"/><path d="M0.5 5.5h14v13h-14zM4 1.5h14v13H4zM0.5 5.5L4 1.5M14.5 5.5L18 1.5M14.5 18.5L18 14.5M0.5 18.5L4 14.5" fill="none" stroke="#c3c3c3" stroke-width="1.3"/></g><g transform="translate(7 339)"><path d="M0.5 5.5h14v13h-14zM4 1.5h14v13H4zM0.5 5.5L4 1.5M14.5 5.5L18 1.5M14.5 18.5L18 14.5M0.5 18.5L4 14.5" fill="none" stroke="#c3c3c3" stroke-width="1.3"/><circle cx="9" cy="10" r="6" fill="none" stroke="#c3c3c3" stroke-width="1.3"/></g><g transform="translate(6.5 373)"><path d="M3 5v8q0 4 4 4h10" fill="none" stroke="#2f6ea3" stroke-width="1.6"/><path d="M9 4h8" stroke="#2f6ea3" stroke-width="1.6"/><circle cx="4" cy="3" r="2.2" fill="#f39a1e"/><path d="M11 8v9l2-2 2 3 1-.5-1.5-3h3z" fill="#fff" stroke="#222" stroke-width=".8"/></g><g transform="translate(6.5 399.8)"><path d="M3 4h12v6M3 4v12h12" fill="none" stroke="#c8c8c8" stroke-width="1.6"/><path d="M8 15l6-6M12 8a2 2 0 1 0 3 3" fill="none" stroke="#c8c8c8" stroke-width="1.8"/></g><g transform="translate(6.5 425.7)"><rect x="3" y="3" width="14" height="10" fill="#fff" stroke="#2f6ea3" stroke-width="1.8"/><rect x="1" y="12" width="3" height="3" fill="#fff" stroke="#222" stroke-width=".8"/><path d="M3 17h6M7 15l2 2-2 2" fill="none" stroke="#222" stroke-width="1"/><rect x="13" y="15" width="3" height="3" fill="#fff" stroke="#222" stroke-width=".8"/></g><g transform="translate(6.5 460)"><rect x="1" y="2" width="11" height="11" fill="#fff" stroke="#444"/><rect x="3" y="4" width="11" height="11" fill="#ddd" stroke="#444"/><rect x="5" y="6" width="11" height="11" fill="#3d7fb3" stroke="#1d4e7a"/><rect x="8" y="9" width="10" height="10" fill="#3d8fc6" stroke="#1d4e7a"/><rect x="11" y="12" width="4" height="4" fill="#fff"/></g><g transform="translate(6.5 486)"><rect x="1" y="2" width="11" height="11" fill="#fff" stroke="#444"/><rect x="3" y="4" width="11" height="11" fill="#f4f4f4" stroke="#444"/><rect x="5" y="6" width="11" height="11" fill="#fff" stroke="#444"/><rect x="9" y="10" width="9" height="9" fill="#3d8fc6" stroke="#1d4e7a"/><rect x="12" y="13" width="3" height="3" fill="#fff"/></g><g transform="translate(40 183.7)"><circle cx="9" cy="11" r="6" fill="none" stroke="#222" stroke-width="2"/><path d="M9 2v18M0 11h18" stroke="#222" stroke-width="1.6"/><path d="M12 1l6 0-4 6h4l-7 8 2-6h-3z" fill="#f2b820" stroke="#a07000" stroke-width=".6"/></g><g transform="translate(40 208.6)"><rect x="2" y="1" width="16" height="14" fill="#4a9ad2" stroke="#1d4e7a"/><path d="M7 13l3-10 3 10M8 10h4" fill="none" stroke="#111" stroke-width="1.6"/><path d="M6 20l4-5 4 5z" fill="#222"/></g><g transform="translate(40 235.5)"><rect x="1" y="6" width="18" height="11" fill="#4a9ad2" stroke="#1d4e7a"/><circle cx="12" cy="12" r="3" fill="#dde" stroke="#222"/><path d="M12 9V4H3" fill="none" stroke="#222"/><text x="1" y="5" font-size="6" font-family="Liberation Sans">xxx</text></g><g transform="translate(40 261.3)"><rect x="4" y="8" width="11" height="11" fill="#4a8fc0" stroke="#1d4e7a"/><circle cx="9.5" cy="13.5" r="2.8" fill="#dde" stroke="#222"/><path d="M5 8l-1-3h4" fill="none" stroke="#222"/><text x="8" y="6" font-size="6" font-family="Liberation Sans">xxx</text></g><g transform="translate(40 287.2)"><rect x="0" y="5" width="19" height="10" fill="#4a8fc0" stroke="#1d4e7a"/><rect x="10" y="6" width="8" height="8" fill="#cfe5f3"/><text x="10.5" y="13" font-size="7.5" font-family="Liberation Sans">03</text><path d="M3 11q2-3 4 0z" fill="#fff" stroke="#222" stroke-width=".6"/></g><g transform="translate(40 314)"><path d="M6.5 9.5v-4a3.5 3.5 0 0 1 7 0v4zM0.5 19v-4a3.5 3.5 0 0 1 7 0v4zM12.5 19v-4a3.5 3.5 0 0 1 7 0v4z" fill="#4a9ad2" stroke="#1d4e7a" stroke-width="1"/><path d="M6.5 9.5h7M0.5 19h7M12.5 19h7" stroke="#123" stroke-width="1.3"/></g><g transform="translate(40 340)"><circle cx="10" cy="10" r="5" fill="none" stroke="#ccc" stroke-width="1.5"/><path d="M10 2v16M2 10h16" stroke="#ccc" stroke-width="1.5"/></g><g transform="translate(40 365.3)"><path d="M5 1v8M1 5h8M1 11h8" stroke="#c8c8c8" stroke-width="1.8"/><ellipse cx="14" cy="13" rx="5" ry="3" fill="#eee" stroke="#c8c8c8"/></g><g transform="translate(40 391.2)"><circle cx="11" cy="8" r="7" fill="#f3f3f3" stroke="#333" stroke-width="1.3"/><text x="5.5" y="12" font-size="7" font-weight="bold" font-family="Liberation Sans">A1</text><path d="M6 13l-5 5" stroke="#222" stroke-width="2"/></g><g transform="translate(40 418)"><path d="M3 10l5 8 4-15h6" fill="none" stroke="#222" stroke-width="1.8"/><path d="M3 10h8" stroke="#222" stroke-width="1.5"/></g><g transform="translate(40 443.9)"><path d="M1 18l4-8h13M8 10l4 5 6-7" fill="none" stroke="#222" stroke-width="1.8"/></g><g transform="translate(40 469.7)"><text x="1" y="19" font-size="22" font-family="Liberation Serif" fill="#4d8fc0" stroke="#234" stroke-width=".6">A</text><path d="M0 19.5h19" stroke="#234" stroke-width="1"/></g><g transform="translate(40 495.6)"><path d="M1 16l6 3M1 16l9-9 9 9" fill="none" stroke="#2f6ea3" stroke-width="1.7"/><path d="M6 14l8-8M4 16l3-1-2-2zM16 4l-3 1 2 2z" stroke="#222" stroke-width="1.6" fill="#222"/></g><g transform="translate(40 521.5)"><rect x="1" y="2" width="17" height="16" fill="#fff" stroke="#444" stroke-width="1.2"/><rect x="1" y="2" width="17" height="4" fill="#3a7fb3"/><path d="M1 10h17M1 14h17M7 6v12M12 6v12" stroke="#555" stroke-width=".8"/></g><g transform="translate(40 556)"><text x="0" y="8" font-size="8" font-weight="bold" fill="#2f6ea3" font-family="Liberation Sans">3D</text><rect x="2" y="9" width="16" height="10" rx="1" fill="#ddd" stroke="#444"/><circle cx="10" cy="14" r="3.5" fill="#777" stroke="#222"/></g><g transform="translate(40 582)"><path d="M2 5q8-5 16 0v11q-8 4-16 0z" fill="#3a88c0" stroke="#333"/><path d="M8 4v14M12 4v14" stroke="#ddd" stroke-width="1.6"/><path d="M3 8l4 5M13 8l4 5" stroke="#9cd" stroke-width=".8"/></g><g transform="translate(40 608)"><path d="M3 3h5v5H5v4h3v5H3zM17 3h-5v5h3v4h-3v5h5z" fill="none" stroke="#333" stroke-width="1.4"/><path d="M8 12l4-4" stroke="#3a88c0" stroke-width="1.6"/></g><g transform="translate(40 634)"><path d="M1 12l8-4 5 3-8 6z" fill="#f2c14b" stroke="#6a5000" stroke-width=".8"/><circle cx="16" cy="4" r="2.5" fill="#3a88c0"/><path d="M9 9l5-4" stroke="#3a88c0" stroke-dasharray="1.5 1"/></g><g transform="translate(40 660)"><path d="M2 14l10-11 4 4-10 11z" fill="#d8d8d8" stroke="#777"/><path d="M4 9l7-5" stroke="#f2c14b" stroke-width="3"/><text x="9" y="19" font-size="10" font-family="Liberation Serif" fill="#2f6ea3" font-weight="bold">A</text></g><g transform="translate(40 694)"><rect x="3" y="8" width="15" height="11" fill="#fff" stroke="#999"/><rect x="4" y="13" width="14" height="6" fill="#d33"/><text x="4.5" y="18.5" font-size="5" fill="#fff" font-family="Liberation Sans" font-weight="bold">PDF</text><text x="10" y="11" font-size="6" font-family="Liberation Sans" font-weight="bold">3D</text><path d="M3 9l8-8 2 2-8 8z" fill="#f2c14b" stroke="#333" stroke-width=".7"/></g><g transform="translate(40 720)"><rect x="3" y="6" width="15" height="13" fill="#fff" stroke="#999"/><rect x="4" y="13" width="14" height="6" fill="#d33"/><text x="4.5" y="18.5" font-size="5" fill="#fff" font-family="Liberation Sans" font-weight="bold">PDF</text><text x="10" y="11" font-size="6" font-family="Liberation Sans" font-weight="bold">3D</text><path d="M1 4h6M5 2l3 2-3 2" stroke="#d33" stroke-width="1.5" fill="none"/></g><g transform="translate(40 746)"><path d="M3 5v11M5.5 3v15" stroke="#444" stroke-dasharray="1 1.3"/><path d="M17 11.5H7.5a5 5 0 0 1 9.5-1.5M17 11.5A5.5 5.5 0 1 0 15.5 16.5" fill="none" stroke="#4c6b10" stroke-width="3.6"/><path d="M17 11.5H7.5a5 5 0 0 1 9.5-1.5M17 11.5A5.5 5.5 0 1 0 15.5 16.5" fill="none" stroke="#a8cc3c" stroke-width="2"/></g><path d="M69.5 530.25h5.0l-2.5 2.5z" fill="#333"/><circle cx="199.5" cy="178" r="2.2" fill="#ddd" stroke="#aaa" stroke-width=".8"/><line x1="81" y1="185.5" x2="320" y2="185.5" stroke="#e2e2e2" stroke-width="1" /><rect x="81.5" y="190.5" width="39.5" height="25" fill="#fafafa" stroke="#a8a8a8" stroke-width="1" /><g transform="translate(91 193)"><path d="M1 5l5-3 5 2.5v4.5l6 3v4.5l-6 3.5-10-5z" fill="#f0c93e" stroke="#5a4400" stroke-width="1"/><path d="M1 5l5 2.5 5-3M6 7.5V15M6 11.5l5-2.5 6 3M6 11.5l5 3 6-2.5M11 14.5V20" fill="none" stroke="#5a4400" stroke-width=".9"/><path d="M1.5 5.3l4.5-2.8 4.5 2.2-4.5 2.6zM6.5 11.4l4.5-2.2 5.5 2.8-5.5 2.4z" fill="#fbe58a"/></g><rect x="121.5" y="190.5" width="40" height="25" fill="#d9d9d9" stroke="#a8a8a8" stroke-width="1" /><rect x="161.5" y="190.5" width="40" height="25" fill="#d9d9d9" stroke="#a8a8a8" stroke-width="1" /><rect x="201.5" y="190.5" width="40" height="25" fill="#d9d9d9" stroke="#a8a8a8" stroke-width="1" /><rect x="241.5" y="190.5" width="40" height="25" fill="#d9d9d9" stroke="#a8a8a8" stroke-width="1" /><g transform="translate(131 193)"><rect x="1" y="1" width="17" height="17" fill="#fff" stroke="#333" stroke-width="1.1"/><rect x="1" y="1" width="17" height="3" fill="#5b8db8"/><path d="M4 7h3M9 7h7M4 11h3M9 11h7M4 15h3M9 15h7" stroke="#2f5f8a" stroke-width="1.4"/></g><g transform="translate(171 193)"><path d="M4 1h5v5H4zM9 7h6v5H9zM9 13h6v5H9zM6 6v10h3M6 9h3" fill="none" stroke="#333" stroke-width="1.1"/></g><g transform="translate(211 193)"><circle cx="10" cy="10" r="6" fill="none" stroke="#222" stroke-width="2"/><path d="M10 1v18M1 10h18" stroke="#222" stroke-width="2"/></g><g transform="translate(251 193)"><circle cx="10" cy="10" r="8" fill="#e0322a"/><path d="M10 2a8 8 0 0 1 8 8H10z" fill="#f3c21b"/><path d="M10 10h8a8 8 0 0 1-8 8z" fill="#2e9a2e"/><path d="M2 10a8 8 0 0 0 8 8v-8z" fill="#2a6fd0"/><circle cx="10" cy="10" r="8" fill="none" stroke="#333"/></g><path d="M309 197l4.5 5-4.5 5" fill="none" stroke="#555" stroke-width="1.3"/><rect x="84.5" y="216.5" width="234.5" height="24" fill="#fafafa" stroke="#d0d0d0" stroke-width="1" /><path d="M87 222h15l-6 7v7l-3 2v-9z" fill="#f5f5f5" stroke="#333" stroke-width="1.1"/><defs><clipPath id="tc"><rect x="80" y="240" width="240" height="30"/></clipPath></defs><g transform="translate(84 244)"><path d="M1 5l5-3 5 2.5v4.5l6 3v4.5l-6 3.5-10-5z" fill="#f0c93e" stroke="#5a4400" stroke-width="1"/><path d="M1 5l5 2.5 5-3M6 7.5V15M6 11.5l5-2.5 6 3M6 11.5l5 3 6-2.5M11 14.5V20" fill="none" stroke="#5a4400" stroke-width=".9"/><path d="M1.5 5.3l4.5-2.8 4.5 2.2-4.5 2.6zM6.5 11.4l4.5-2.2 5.5 2.8-5.5 2.4z" fill="#fbe58a"/></g><g clip-path="url(#tc)"><text x="106.2" y="258.0" font-size="11.5" stroke="#000" stroke-width="0.25" textLength="48.8" lengthAdjust="spacingAndGlyphs">ZP_13432</text><text x="161.0" y="258.0" font-size="11.5" stroke="#000" stroke-width="0.25" textLength="159.0" lengthAdjust="spacingAndGlyphs">(Default&lt;&lt;Default&gt;_Display St</text></g><g transform="translate(106 266)"><path d="M1 3h6l1 2h10v13H1z" fill="#f4f4f4" stroke="#555"/><circle cx="11" cy="12" r="4.5" fill="#5ea0d8" stroke="#234"/><path d="M11 9v3h2" stroke="#fff" stroke-width="1.2" fill="none"/></g><text x="129.1" y="280.0" font-size="11.5" stroke="#000" stroke-width="0.25" textLength="37.4" lengthAdjust="spacingAndGlyphs">History</text><path d="M89 272l4.5 4-4.5 4z" fill="#666"/><g transform="translate(106 287.8)"><path d="M1 3h6l1 2h10v13H1z" fill="#f4f4f4" stroke="#555"/><circle cx="11" cy="12" r="4.5" fill="#f4f4f4" stroke="#333"/><path d="M9 14l4-4" stroke="#d33" stroke-width="1.6"/></g><text x="129.1" y="301.8" font-size="11.5" stroke="#000" stroke-width="0.25" textLength="39.3" lengthAdjust="spacingAndGlyphs">Sensors</text><g transform="translate(106 309.6)"><path d="M1 3h6l1 2h10v13H1z" fill="#f4f4f4" stroke="#555"/><rect x="5" y="7" width="11" height="10" fill="#c7dff0" stroke="#457"/><text x="6.5" y="15.5" font-size="9" font-family="Liberation Serif" fill="#223">A</text></g><text x="129.1" y="323.6" font-size="11.5" stroke="#000" stroke-width="0.25" textLength="64.4" lengthAdjust="spacingAndGlyphs">Annotations</text><path d="M89 315.6l4.5 4-4.5 4z" fill="#666"/><g transform="translate(106 331.5)"><circle cx="3" cy="4" r="1.8" fill="#2f6ea3"/><circle cx="3" cy="10" r="1.8" fill="#3a9a3a"/><circle cx="3" cy="16" r="1.8" fill="#f2b820"/><path d="M7 4h11M7 10h11M7 16h6" stroke="#333" stroke-width="1.6"/><circle cx="16" cy="16" r="2.5" fill="#333"/></g><text x="129.1" y="345.5" font-size="11.5" stroke="#000" stroke-width="0.25" textLength="128.4" lengthAdjust="spacingAndGlyphs">Material &lt;not specified&gt;</text><g transform="translate(106 353.6)"><path d="M3.5 5l9-3.5v13.5l-9 3.5z" fill="none" stroke="#222" stroke-width="1"/><path d="M8 1v18" stroke="#222" stroke-width="1" stroke-dasharray="2 1.3"/></g><text x="129.1" y="367.6" font-size="11.5" stroke="#000" stroke-width="0.25">Front Plane</text><g transform="translate(106 375.5)"><path d="M3.5 5l9-3.5v13.5l-9 3.5z" fill="none" stroke="#222" stroke-width="1"/><path d="M8 1v18" stroke="#222" stroke-width="1" stroke-dasharray="2 1.3"/></g><text x="129.1" y="389.5" font-size="11.5" stroke="#000" stroke-width="0.25" textLength="52.7" lengthAdjust="spacingAndGlyphs">Top Plane</text><g transform="translate(106 398)"><path d="M3.5 5l9-3.5v13.5l-9 3.5z" fill="none" stroke="#222" stroke-width="1"/><path d="M8 1v18" stroke="#222" stroke-width="1" stroke-dasharray="2 1.3"/></g><text x="129.1" y="412.0" font-size="11.5" stroke="#000" stroke-width="0.25">Right Plane</text><g transform="translate(106 419.8)"><path d="M3.5 3v13.5H16" fill="none" stroke="#111" stroke-width="2"/><path d="M1.5 4.5l2-3.5 2 3.5zM15 14.5l3.5 2-3.5 2z" fill="#111"/></g><text x="129.1" y="433.8" font-size="11.5" stroke="#000" stroke-width="0.25" textLength="32.7" lengthAdjust="spacingAndGlyphs">Origin</text><g transform="translate(106 441.6)"><g transform="scale(.9)"><path d="M8.5 4.5l5-3.5 5.5 2.5v14l-5 2.5-5.5-2.5z" fill="#fdfdfd" stroke="#333" stroke-width=".9"/><path d="M8.5 4.5l5.5 2.5 5-3.5M14 7v13.5" fill="none" stroke="#333" stroke-width=".8"/><path d="M0.8 8.5l5.5-3 5.8 2.5v8.5l-5.5 3-5.8-2.6z" fill="#3f8fc7" stroke="#173e5e" stroke-width=".9"/><path d="M0.8 8.5l5.5-3 5.8 2.5-5.6 3z" fill="#9fd3f0" stroke="#173e5e" stroke-width=".8"/><path d="M6.5 11v8.5" stroke="#173e5e" stroke-width=".8"/><path d="M7 11.5l4.6-2.6v7.2l-4.6 2.6z" fill="#5aa7dc"/></g></g><text x="129.1" y="455.6" font-size="11.5" stroke="#000" stroke-width="0.25" textLength="73.1" lengthAdjust="spacingAndGlyphs">Boss-Extrude1</text><path d="M89 447.6l4.5 4-4.5 4z" fill="#666"/><g transform="translate(106 463.5)"><g transform="translate(1 0) scale(.9)"><path d="M1.5 4.5l11-2.5 4 2.5v13l-11 2.5-4-2.5z" fill="#e9e9e9" stroke="#1e1e1e" stroke-width="1"/><path d="M1.5 4.5l4 2.5 11-2.5M5.5 7v13.5" fill="none" stroke="#1e1e1e" stroke-width=".9"/><path d="M5.5 7l11-2.5v13l-11 2.5z" fill="#fafafa"/><path d="M8 9l6-1.3v7.5L8 16.5z" fill="#5fa8d8" stroke="#1e1e1e" stroke-width=".9"/><path d="M10 10.5l3-.6v4l-3 .6z" fill="#cfe6f4"/></g></g><text x="129.1" y="477.5" font-size="11.5" stroke="#000" stroke-width="0.25" textLength="69.1" lengthAdjust="spacingAndGlyphs">Cut-Extrude2</text><path d="M89 469.5l4.5 4-4.5 4z" fill="#666"/><g transform="translate(106 485.3)"><g transform="translate(1 1) scale(.9)"><path d="M1.5 1h3.5v2h2.5v3.5h-2.5v2h-3.5z" fill="#5fa8d8" stroke="#1e1e1e" stroke-width=".9"/><path d="M10.5 1h3.5v2h2.5v3.5h-2.5v2h-3.5zM1.5 10.5h3.5v2h2.5v3.5h-2.5v2h-3.5zM10.5 10.5h3.5v2h2.5v3.5h-2.5v2h-3.5z" fill="#fafafa" stroke="#1e1e1e" stroke-width=".9"/></g></g><text x="129.1" y="499.3" font-size="11.5" stroke="#000" stroke-width="0.25">LPattern1</text><rect x="81" y="506" width="239" height="1" fill="#3b74ba" /><rect x="81" y="507" width="239" height="1.2" fill="#12306e" /><line x1="322.5" y1="168" x2="322.5" y2="973" stroke="#8c8c8c" stroke-width="1" /><rect x="320" y="541" width="10" height="37" fill="#f7f7f7" /><path d="M322.5 540.5h8v38h-8" fill="none" stroke="#8c8c8c"/><circle cx="326" cy="559" r="2.6" fill="#c4c4c4" stroke="#8a8a8a" stroke-width=".7"/><rect x="82" y="955" width="239" height="15" fill="#f0f0f0" /><rect x="97.5" y="956" width="179" height="14" fill="#d3d3d3" /><path d="M91 959l-4 4 4 4M311 959l4 4-4 4" fill="none" stroke="#444" stroke-width="1.4"/><defs><filter id="bgblur" x="-50%" y="-50%" width="200%" height="200%"><feGaussianBlur stdDeviation="60"/></filter><clipPath id="gaclip"><rect x="323" y="146" width="1597" height="827"/></clipPath></defs><rect x="323" y="146" width="1597" height="827" fill="#ffffff" /><defs><radialGradient id="brg" cx="1800" cy="950" r="1" gradientUnits="userSpaceOnUse" gradientTransform="translate(1800 950) scale(800 260) translate(-1800 -950)"><stop offset="0" stop-color="#f0f2f5"/><stop offset=".6" stop-color="#f4f5f8" stop-opacity=".7"/><stop offset="1" stop-color="#ffffff" stop-opacity="0"/></radialGradient></defs><rect x="323" y="700" width="1597" height="273" fill="url(#brg)" /><g clip-path="url(#gaclip)"><path d="M200 520L700 470L1000 340L1300 170L1600 70L2100 40L2100 650L200 625Z" fill="#e2e5eb" filter="url(#bgblur)"/></g><defs><clipPath id="gclip"><rect x="323" y="146" width="1597" height="827"/></clipPath><mask id="hm" maskUnits="userSpaceOnUse" x="323" y="100" width="1597" height="873"><rect x="323" y="100" width="1597" height="873" fill="#fff"/><path d="M783.5 313.8l6.2 1.8l0.9 5.4l-5.3 3.5l-6.2 -1.8l-0.9 -5.4zM801.1 311.2l6.2 1.8l0.9 5.4l-5.4 3.6l-6.2 -1.9l-0.9 -5.4zM818.6 308.6l6.3 1.9l0.8 5.4l-5.3 3.5l-6.2 -1.8l-0.9 -5.4zM836.2 306.1l6.2 1.8l0.9 5.4l-5.3 3.5l-6.3 -1.8l-0.9 -5.4zM853.7 303.5l6.3 1.9l0.9 5.3l-5.4 3.6l-6.2 -1.9l-0.9 -5.4zM871.3 300.9l6.2 1.9l0.9 5.4l-5.3 3.5l-6.3 -1.8l-0.9 -5.4zM888.8 298.4l6.3 1.8l0.9 5.4l-5.4 3.5l-6.2 -1.8l-0.9 -5.4zM906.4 295.8l6.2 1.9l0.9 5.3l-5.3 3.6l-6.3 -1.9l-0.8 -5.4zM924 293.2l6.2 1.9l0.9 5.4l-5.4 3.5l-6.2 -1.8l-0.9 -5.4zM941.5 290.7l6.2 1.8l0.9 5.4l-5.3 3.5l-6.2 -1.8l-0.9 -5.4zM959.1 288.1l6.2 1.9l0.9 5.3l-5.4 3.6l-6.2 -1.9l-0.9 -5.4zM976.6 285.5l6.2 1.9l0.9 5.4l-5.3 3.5l-6.2 -1.8l-0.9 -5.4zM994.2 283l6.2 1.8l0.9 5.4l-5.4 3.5l-6.2 -1.8l-0.9 -5.4zM1011.7 280.4l6.3 1.9l0.8 5.3l-5.3 3.6l-6.2 -1.9l-0.9 -5.4zM1029.3 277.8l6.2 1.9l0.9 5.4l-5.3 3.5l-6.3 -1.8l-0.9 -5.4zM1046.8 275.3l6.3 1.8l0.9 5.4l-5.4 3.5l-6.2 -1.8l-0.9 -5.4zM1064.4 272.7l6.2 1.9l0.9 5.3l-5.3 3.6l-6.3 -1.9l-0.9 -5.3zM1081.9 270.2l6.3 1.8l0.9 5.4l-5.4 3.5l-6.2 -1.8l-0.9 -5.4zM1099.5 267.6l6.2 1.8l0.9 5.4l-5.3 3.5l-6.3 -1.8l-0.8 -5.4zM1117.1 265l6.2 1.9l0.9 5.3l-5.4 3.6l-6.2 -1.9l-0.9 -5.3zM1134.6 262.5l6.2 1.8l0.9 5.4l-5.3 3.5l-6.2 -1.8l-0.9 -5.4zM1152.2 259.9l6.2 1.8l0.9 5.4l-5.4 3.5l-6.2 -1.8l-0.9 -5.4zM1169.7 257.3l6.3 1.9l0.8 5.3l-5.3 3.6l-6.2 -1.9l-0.9 -5.3zM1187.3 254.8l6.2 1.8l0.9 5.4l-5.3 3.5l-6.3 -1.8l-0.9 -5.4zM1204.8 252.2l6.3 1.8l0.9 5.4l-5.4 3.5l-6.2 -1.8l-0.9 -5.4zM1222.4 249.6l6.2 1.9l0.9 5.3l-5.3 3.6l-6.3 -1.9l-0.9 -5.3zM1239.9 247.1l6.3 1.8l0.9 5.4l-5.4 3.5l-6.2 -1.8l-0.9 -5.4zM1257.5 244.5l6.2 1.8l0.9 5.4l-5.3 3.5l-6.3 -1.8l-0.8 -5.4zM1275.1 241.9l6.2 1.9l0.9 5.3l-5.4 3.6l-6.2 -1.9l-0.9 -5.3zM1292.6 239.4l6.2 1.8l0.9 5.4l-5.3 3.5l-6.2 -1.8l-0.9 -5.4zM1310.2 236.8l6.2 1.8l0.9 5.4l-5.4 3.5l-6.2 -1.8l-0.9 -5.4zM1327.7 234.2l6.2 1.9l0.9 5.3l-5.3 3.6l-6.2 -1.9l-0.9 -5.3zM1345.3 231.7l6.2 1.8l0.9 5.4l-5.4 3.5l-6.2 -1.8l-0.9 -5.4zM1362.8 229.1l6.3 1.8l0.8 5.4l-5.3 3.5l-6.2 -1.8l-0.9 -5.4zM1380.4 226.5l6.2 1.9l0.9 5.3l-5.3 3.6l-6.3 -1.9l-0.9 -5.3zM1397.9 224l6.3 1.8l0.9 5.4l-5.4 3.5l-6.2 -1.8l-0.9 -5.4zM1415.5 221.4l6.2 1.8l0.9 5.4l-5.3 3.6l-6.3 -1.9l-0.9 -5.4zM1433 218.8l6.3 1.9l0.9 5.4l-5.4 3.5l-6.2 -1.9l-0.9 -5.3zM1450.6 216.3l6.2 1.8l0.9 5.4l-5.3 3.5l-6.3 -1.8l-0.8 -5.4zM1468.2 213.7l6.2 1.8l0.9 5.4l-5.4 3.6l-6.2 -1.9l-0.9 -5.4zM1485.7 211.1l6.2 1.9l0.9 5.4l-5.3 3.5l-6.2 -1.9l-0.9 -5.3zM1503.3 208.6l6.2 1.8l0.9 5.4l-5.4 3.5l-6.2 -1.8l-0.9 -5.4zM1520.8 206l6.3 1.8l0.8 5.4l-5.3 3.6l-6.2 -1.9l-0.9 -5.4zM1538.4 203.4l6.2 1.9l0.9 5.4l-5.3 3.5l-6.3 -1.9l-0.9 -5.3zM1555.9 200.9l6.3 1.8l0.9 5.4l-5.4 3.5l-6.2 -1.8l-0.9 -5.4zM1573.5 198.3l6.2 1.8l0.9 5.4l-5.3 3.6l-6.3 -1.9l-0.9 -5.4zM1591 195.7l6.3 1.9l0.9 5.4l-5.4 3.5l-6.2 -1.9l-0.9 -5.3zM1608.6 193.2l6.2 1.8l0.9 5.4l-5.3 3.5l-6.3 -1.8l-0.8 -5.4zM1626.2 190.6l6.2 1.8l0.9 5.4l-5.4 3.6l-6.2 -1.9l-0.9 -5.4zM1643.7 188l6.2 1.9l0.9 5.4l-5.3 3.5l-6.2 -1.8l-0.9 -5.4zM1661.3 185.5l6.2 1.8l0.9 5.4l-5.4 3.5l-6.2 -1.8l-0.9 -5.4zM1678.8 182.9l6.2 1.8l0.9 5.4l-5.3 3.6l-6.2 -1.9l-0.9 -5.4zM1696.4 180.3l6.2 1.9l0.9 5.4l-5.4 3.5l-6.2 -1.8l-0.9 -5.4zM1713.9 177.8l6.3 1.8l0.8 5.4l-5.3 3.5l-6.2 -1.8l-0.9 -5.4zM1731.5 175.2l6.2 1.9l0.9 5.3l-5.3 3.6l-6.3 -1.9l-0.9 -5.4zM1749 172.6l6.3 1.9l0.9 5.4l-5.4 3.5l-6.2 -1.8l-0.9 -5.4zM1766.6 170.1l6.2 1.8l0.9 5.4l-5.3 3.5l-6.3 -1.8l-0.9 -5.4zM779.7 330.6l6.2 1.8l0.9 5.4l-5.4 3.5l-6.2 -1.8l-0.9 -5.4zM797.2 328l6.2 1.8l0.9 5.4l-5.3 3.6l-6.2 -1.9l-0.9 -5.4zM814.8 325.4l6.2 1.9l0.9 5.4l-5.4 3.5l-6.2 -1.9l-0.9 -5.3zM832.3 322.9l6.3 1.8l0.8 5.4l-5.3 3.5l-6.2 -1.8l-0.9 -5.4zM849.9 320.3l6.2 1.8l0.9 5.4l-5.3 3.6l-6.3 -1.9l-0.9 -5.4zM867.4 317.7l6.3 1.9l0.8 5.4l-5.3 3.5l-6.2 -1.9l-0.9 -5.3zM885 315.2l6.2 1.8l0.9 5.4l-5.3 3.5l-6.3 -1.8l-0.9 -5.4zM902.5 312.6l6.3 1.8l0.9 5.4l-5.4 3.6l-6.2 -1.9l-0.9 -5.4zM920.1 310l6.2 1.9l0.9 5.4l-5.3 3.5l-6.3 -1.9l-0.9 -5.3zM937.6 307.5l6.3 1.8l0.9 5.4l-5.4 3.5l-6.2 -1.8l-0.9 -5.4zM955.2 304.9l6.2 1.8l0.9 5.4l-5.3 3.6l-6.3 -1.9l-0.8 -5.4zM972.8 302.3l6.2 1.9l0.9 5.4l-5.4 3.5l-6.2 -1.8l-0.9 -5.4zM990.3 299.8l6.2 1.8l0.9 5.4l-5.3 3.5l-6.2 -1.8l-0.9 -5.4zM1007.9 297.2l6.2 1.8l0.9 5.4l-5.4 3.6l-6.2 -1.9l-0.9 -5.4zM1025.4 294.6l6.3 1.9l0.8 5.4l-5.3 3.5l-6.2 -1.8l-0.9 -5.4zM1043 292.1l6.2 1.8l0.9 5.4l-5.3 3.5l-6.3 -1.8l-0.9 -5.4zM1060.5 289.5l6.3 1.9l0.9 5.3l-5.4 3.6l-6.2 -1.9l-0.9 -5.4zM1078.1 286.9l6.2 1.9l0.9 5.4l-5.3 3.5l-6.3 -1.8l-0.9 -5.4zM1095.6 284.4l6.3 1.8l0.9 5.4l-5.4 3.5l-6.2 -1.8l-0.9 -5.4zM1113.2 281.8l6.2 1.9l0.9 5.3l-5.3 3.6l-6.3 -1.9l-0.8 -5.4zM1130.8 279.2l6.2 1.9l0.9 5.4l-5.4 3.5l-6.2 -1.8l-0.9 -5.4zM1148.3 276.7l6.2 1.8l0.9 5.4l-5.3 3.5l-6.2 -1.8l-0.9 -5.4zM1165.9 274.1l6.2 1.9l0.9 5.3l-5.4 3.6l-6.2 -1.9l-0.9 -5.4zM1183.4 271.5l6.3 1.9l0.8 5.4l-5.3 3.5l-6.2 -1.8l-0.9 -5.4zM1201 269l6.2 1.8l0.9 5.4l-5.3 3.5l-6.3 -1.8l-0.9 -5.4zM1218.5 266.4l6.3 1.9l0.8 5.3l-5.3 3.6l-6.2 -1.9l-0.9 -5.4zM1236.1 263.8l6.2 1.9l0.9 5.4l-5.3 3.5l-6.3 -1.8l-0.9 -5.4zM1253.6 261.3l6.3 1.8l0.9 5.4l-5.4 3.5l-6.2 -1.8l-0.9 -5.4zM1271.2 258.7l6.2 1.9l0.9 5.3l-5.3 3.6l-6.3 -1.9l-0.9 -5.3zM1288.7 256.2l6.3 1.8l0.9 5.4l-5.4 3.5l-6.2 -1.8l-0.9 -5.4zM1306.3 253.6l6.2 1.8l0.9 5.4l-5.3 3.5l-6.3 -1.8l-0.8 -5.4zM1323.9 251l6.2 1.9l0.9 5.3l-5.4 3.6l-6.2 -1.9l-0.9 -5.3zM1341.4 248.5l6.2 1.8l0.9 5.4l-5.3 3.5l-6.2 -1.8l-0.9 -5.4zM1359 245.9l6.2 1.8l0.9 5.4l-5.4 3.5l-6.2 -1.8l-0.9 -5.4zM1376.5 243.3l6.3 1.9l0.8 5.3l-5.3 3.6l-6.2 -1.9l-0.9 -5.3zM1394.1 240.8l6.2 1.8l0.9 5.4l-5.3 3.5l-6.3 -1.8l-0.9 -5.4zM1411.6 238.2l6.3 1.8l0.9 5.4l-5.4 3.5l-6.2 -1.8l-0.9 -5.4zM1429.2 235.6l6.2 1.9l0.9 5.3l-5.3 3.6l-6.3 -1.9l-0.9 -5.3zM1446.7 233.1l6.3 1.8l0.9 5.4l-5.4 3.5l-6.2 -1.8l-0.9 -5.4zM1464.3 230.5l6.2 1.8l0.9 5.4l-5.3 3.5l-6.3 -1.8l-0.8 -5.4zM1481.9 227.9l6.2 1.9l0.9 5.3l-5.4 3.6l-6.2 -1.9l-0.9 -5.3zM1499.4 225.4l6.2 1.8l0.9 5.4l-5.3 3.5l-6.2 -1.8l-0.9 -5.4zM1517 222.8l6.2 1.8l0.9 5.4l-5.4 3.5l-6.2 -1.8l-0.9 -5.4zM1534.5 220.2l6.3 1.9l0.8 5.3l-5.3 3.6l-6.2 -1.9l-0.9 -5.3zM1552.1 217.7l6.2 1.8l0.9 5.4l-5.3 3.5l-6.3 -1.8l-0.9 -5.4zM1569.6 215.1l6.3 1.8l0.8 5.4l-5.3 3.5l-6.2 -1.8l-0.9 -5.4zM1587.2 212.5l6.2 1.9l0.9 5.3l-5.3 3.6l-6.3 -1.9l-0.9 -5.3zM1604.7 210l6.3 1.8l0.9 5.4l-5.4 3.5l-6.2 -1.8l-0.9 -5.4zM1622.3 207.4l6.2 1.8l0.9 5.4l-5.3 3.6l-6.3 -1.9l-0.9 -5.4zM1639.8 204.8l6.3 1.9l0.9 5.4l-5.4 3.5l-6.2 -1.9l-0.9 -5.3zM1657.4 202.3l6.2 1.8l0.9 5.4l-5.3 3.5l-6.3 -1.8l-0.8 -5.4zM1675 199.7l6.2 1.8l0.9 5.4l-5.4 3.6l-6.2 -1.9l-0.9 -5.4zM1692.5 197.1l6.2 1.9l0.9 5.4l-5.3 3.5l-6.2 -1.9l-0.9 -5.3zM1710.1 194.6l6.2 1.8l0.9 5.4l-5.4 3.5l-6.2 -1.8l-0.9 -5.4zM1727.6 192l6.3 1.8l0.8 5.4l-5.3 3.6l-6.2 -1.9l-0.9 -5.4zM1745.2 189.4l6.2 1.9l0.9 5.4l-5.3 3.5l-6.3 -1.9l-0.9 -5.3zM1762.7 186.9l6.3 1.8l0.9 5.4l-5.4 3.5l-6.2 -1.8l-0.9 -5.4zM789.1 347.6l6.2 1.8l0.9 5.4l-5.3 3.5l-6.3 -1.8l-0.8 -5.4zM806.7 345l6.2 1.8l0.9 5.4l-5.4 3.5l-6.2 -1.8l-0.9 -5.4zM824.2 342.4l6.2 1.9l0.9 5.3l-5.3 3.6l-6.3 -1.9l-0.8 -5.3zM841.8 339.9l6.2 1.8l0.9 5.4l-5.4 3.5l-6.2 -1.8l-0.9 -5.4zM859.3 337.3l6.2 1.8l0.9 5.4l-5.3 3.5l-6.2 -1.8l-0.9 -5.4zM876.9 334.7l6.2 1.9l0.9 5.3l-5.4 3.6l-6.2 -1.9l-0.9 -5.3zM894.4 332.2l6.3 1.8l0.8 5.4l-5.3 3.5l-6.2 -1.8l-0.9 -5.4zM912 329.6l6.2 1.8l0.9 5.4l-5.3 3.5l-6.3 -1.8l-0.9 -5.4zM929.5 327l6.3 1.9l0.9 5.3l-5.4 3.6l-6.2 -1.9l-0.9 -5.3zM947.1 324.5l6.2 1.8l0.9 5.4l-5.3 3.5l-6.3 -1.8l-0.9 -5.4zM964.6 321.9l6.3 1.8l0.9 5.4l-5.4 3.6l-6.2 -1.9l-0.9 -5.4zM982.2 319.3l6.2 1.9l0.9 5.4l-5.3 3.5l-6.3 -1.9l-0.8 -5.3zM999.8 316.8l6.2 1.8l0.9 5.4l-5.4 3.5l-6.2 -1.8l-0.9 -5.4zM1017.3 314.2l6.2 1.8l0.9 5.4l-5.3 3.6l-6.2 -1.9l-0.9 -5.4zM1034.9 311.6l6.2 1.9l0.9 5.4l-5.4 3.5l-6.2 -1.9l-0.9 -5.3zM1052.4 309.1l6.3 1.8l0.8 5.4l-5.3 3.5l-6.2 -1.8l-0.9 -5.4zM1070 306.5l6.2 1.8l0.9 5.4l-5.3 3.6l-6.3 -1.9l-0.9 -5.4zM1087.5 303.9l6.3 1.9l0.9 5.4l-5.4 3.5l-6.2 -1.9l-0.9 -5.3zM1105.1 301.4l6.2 1.8l0.9 5.4l-5.3 3.5l-6.3 -1.8l-0.9 -5.4zM1122.6 298.8l6.3 1.8l0.9 5.4l-5.4 3.6l-6.2 -1.9l-0.9 -5.4zM1140.2 296.2l6.2 1.9l0.9 5.4l-5.3 3.5l-6.3 -1.9l-0.8 -5.3zM1157.8 293.7l6.2 1.8l0.9 5.4l-5.4 3.5l-6.2 -1.8l-0.9 -5.4zM1175.3 291.1l6.2 1.8l0.9 5.4l-5.3 3.6l-6.3 -1.9l-0.8 -5.4zM1192.9 288.5l6.2 1.9l0.9 5.4l-5.4 3.5l-6.2 -1.8l-0.9 -5.4zM1210.4 286l6.2 1.8l0.9 5.4l-5.3 3.5l-6.2 -1.8l-0.9 -5.4zM1228 283.4l6.2 1.8l0.9 5.4l-5.4 3.6l-6.2 -1.9l-0.9 -5.4zM1245.5 280.8l6.3 1.9l0.8 5.4l-5.3 3.5l-6.2 -1.8l-0.9 -5.4zM1263.1 278.3l6.2 1.8l0.9 5.4l-5.3 3.5l-6.3 -1.8l-0.9 -5.4zM1280.6 275.7l6.3 1.9l0.9 5.3l-5.4 3.6l-6.2 -1.9l-0.9 -5.4zM1298.2 273.1l6.2 1.9l0.9 5.4l-5.3 3.5l-6.3 -1.8l-0.9 -5.4zM1315.7 270.6l6.3 1.8l0.9 5.4l-5.4 3.5l-6.2 -1.8l-0.9 -5.4zM1333.3 268l6.2 1.9l0.9 5.3l-5.3 3.6l-6.3 -1.9l-0.8 -5.4zM1350.9 265.4l6.2 1.9l0.9 5.4l-5.4 3.5l-6.2 -1.8l-0.9 -5.4zM1368.4 262.9l6.2 1.8l0.9 5.4l-5.3 3.5l-6.2 -1.8l-0.9 -5.4zM1386 260.3l6.2 1.9l0.9 5.3l-5.4 3.6l-6.2 -1.9l-0.9 -5.4zM1403.5 257.7l6.3 1.9l0.8 5.4l-5.3 3.5l-6.2 -1.8l-0.9 -5.4zM1421.1 255.2l6.2 1.8l0.9 5.4l-5.3 3.5l-6.3 -1.8l-0.9 -5.4zM1438.6 252.6l6.3 1.9l0.9 5.3l-5.4 3.6l-6.2 -1.9l-0.9 -5.4zM1456.2 250l6.2 1.9l0.9 5.4l-5.3 3.5l-6.3 -1.8l-0.9 -5.4zM1473.7 247.5l6.3 1.8l0.9 5.4l-5.4 3.5l-6.2 -1.8l-0.9 -5.4zM1491.3 244.9l6.2 1.9l0.9 5.3l-5.3 3.6l-6.3 -1.9l-0.8 -5.3zM1508.9 242.4l6.2 1.8l0.9 5.4l-5.4 3.5l-6.2 -1.8l-0.9 -5.4zM1526.4 239.8l6.2 1.8l0.9 5.4l-5.3 3.5l-6.3 -1.8l-0.8 -5.4zM1544 237.2l6.2 1.9l0.9 5.3l-5.4 3.6l-6.2 -1.9l-0.9 -5.3zM1561.5 234.7l6.2 1.8l0.9 5.4l-5.3 3.5l-6.2 -1.8l-0.9 -5.4zM1579.1 232.1l6.2 1.8l0.9 5.4l-5.4 3.5l-6.2 -1.8l-0.9 -5.4zM1596.6 229.5l6.3 1.9l0.8 5.3l-5.3 3.6l-6.2 -1.9l-0.9 -5.3zM1614.2 227l6.2 1.8l0.9 5.4l-5.3 3.5l-6.3 -1.8l-0.9 -5.4zM1631.7 224.4l6.3 1.8l0.9 5.4l-5.4 3.5l-6.2 -1.8l-0.9 -5.4zM1649.3 221.8l6.2 1.9l0.9 5.3l-5.3 3.6l-6.3 -1.9l-0.9 -5.3zM1666.8 219.3l6.3 1.8l0.9 5.4l-5.4 3.5l-6.2 -1.8l-0.9 -5.4zM1684.4 216.7l6.2 1.8l0.9 5.4l-5.3 3.5l-6.3 -1.8l-0.8 -5.4zM1702 214.1l6.2 1.9l0.9 5.3l-5.4 3.6l-6.2 -1.9l-0.9 -5.3zM1719.5 211.6l6.2 1.8l0.9 5.4l-5.3 3.5l-6.2 -1.8l-0.9 -5.4zM1737.1 209l6.2 1.8l0.9 5.4l-5.4 3.5l-6.2 -1.8l-0.9 -5.4zM1754.6 206.4l6.3 1.9l0.8 5.3l-5.3 3.6l-6.2 -1.9l-0.9 -5.3zM1772.2 203.9l6.2 1.8l0.9 5.4l-5.3 3.5l-6.3 -1.8l-0.9 -5.4zM785.2 364.3l6.3 1.9l0.9 5.4l-5.4 3.5l-6.2 -1.8l-0.9 -5.4zM802.8 361.8l6.2 1.8l0.9 5.4l-5.3 3.5l-6.3 -1.8l-0.9 -5.4zM820.3 359.2l6.3 1.9l0.9 5.3l-5.4 3.6l-6.2 -1.9l-0.9 -5.3zM837.9 356.7l6.2 1.8l0.9 5.4l-5.3 3.5l-6.3 -1.8l-0.8 -5.4zM855.5 354.1l6.2 1.8l0.9 5.4l-5.4 3.5l-6.2 -1.8l-0.9 -5.4zM873 351.5l6.2 1.9l0.9 5.3l-5.3 3.6l-6.2 -1.9l-0.9 -5.3zM890.6 349l6.2 1.8l0.9 5.4l-5.4 3.5l-6.2 -1.8l-0.9 -5.4zM908.1 346.4l6.3 1.8l0.8 5.4l-5.3 3.5l-6.2 -1.8l-0.9 -5.4zM925.7 343.8l6.2 1.9l0.9 5.3l-5.3 3.6l-6.3 -1.9l-0.9 -5.3zM943.2 341.3l6.3 1.8l0.9 5.4l-5.4 3.5l-6.2 -1.8l-0.9 -5.4zM960.8 338.7l6.2 1.8l0.9 5.4l-5.3 3.5l-6.3 -1.8l-0.9 -5.4zM978.3 336.1l6.3 1.9l0.9 5.3l-5.4 3.6l-6.2 -1.9l-0.9 -5.3zM995.9 333.6l6.2 1.8l0.9 5.4l-5.3 3.5l-6.3 -1.8l-0.8 -5.4zM1013.5 331l6.2 1.8l0.9 5.4l-5.4 3.5l-6.2 -1.8l-0.9 -5.4zM1031 328.4l6.2 1.9l0.9 5.3l-5.3 3.6l-6.2 -1.9l-0.9 -5.3zM1048.6 325.9l6.2 1.8l0.9 5.4l-5.4 3.5l-6.2 -1.8l-0.9 -5.4zM1066.1 323.3l6.3 1.8l0.8 5.4l-5.3 3.5l-6.2 -1.8l-0.9 -5.4zM1083.7 320.7l6.2 1.9l0.9 5.3l-5.4 3.6l-6.2 -1.9l-0.9 -5.3zM1101.2 318.2l6.3 1.8l0.8 5.4l-5.3 3.5l-6.2 -1.8l-0.9 -5.4zM1118.8 315.6l6.2 1.8l0.9 5.4l-5.3 3.5l-6.3 -1.8l-0.9 -5.4zM1136.3 313l6.3 1.9l0.9 5.3l-5.4 3.6l-6.2 -1.9l-0.9 -5.3zM1153.9 310.5l6.2 1.8l0.9 5.4l-5.3 3.5l-6.3 -1.8l-0.9 -5.4zM1171.4 307.9l6.3 1.8l0.9 5.4l-5.4 3.6l-6.2 -1.9l-0.9 -5.4zM1189 305.3l6.2 1.9l0.9 5.4l-5.3 3.5l-6.3 -1.9l-0.8 -5.3zM1206.6 302.8l6.2 1.8l0.9 5.4l-5.4 3.5l-6.2 -1.8l-0.9 -5.4zM1224.1 300.2l6.2 1.8l0.9 5.4l-5.3 3.6l-6.2 -1.9l-0.9 -5.4zM1241.7 297.6l6.2 1.9l0.9 5.4l-5.4 3.5l-6.2 -1.9l-0.9 -5.3zM1259.2 295.1l6.3 1.8l0.8 5.4l-5.3 3.5l-6.2 -1.8l-0.9 -5.4zM1276.8 292.5l6.2 1.8l0.9 5.4l-5.3 3.6l-6.3 -1.9l-0.9 -5.4zM1294.3 289.9l6.3 1.9l0.9 5.4l-5.4 3.5l-6.2 -1.9l-0.9 -5.3zM1311.9 287.4l6.2 1.8l0.9 5.4l-5.3 3.5l-6.3 -1.8l-0.9 -5.4zM1329.4 284.8l6.3 1.8l0.9 5.4l-5.4 3.6l-6.2 -1.9l-0.9 -5.4zM1347 282.2l6.2 1.9l0.9 5.4l-5.3 3.5l-6.3 -1.9l-0.8 -5.3zM1364.6 279.7l6.2 1.8l0.9 5.4l-5.4 3.5l-6.2 -1.8l-0.9 -5.4zM1382.1 277.1l6.2 1.8l0.9 5.4l-5.3 3.6l-6.2 -1.9l-0.9 -5.4zM1399.7 274.5l6.2 1.9l0.9 5.4l-5.4 3.5l-6.2 -1.8l-0.9 -5.4zM1417.2 272l6.3 1.8l0.8 5.4l-5.3 3.5l-6.2 -1.8l-0.9 -5.4zM1434.8 269.4l6.2 1.8l0.9 5.4l-5.4 3.6l-6.2 -1.9l-0.9 -5.4zM1452.3 266.8l6.3 1.9l0.8 5.4l-5.3 3.5l-6.2 -1.8l-0.9 -5.4zM1469.9 264.3l6.2 1.8l0.9 5.4l-5.3 3.5l-6.3 -1.8l-0.9 -5.4zM1487.4 261.7l6.3 1.9l0.9 5.3l-5.4 3.6l-6.2 -1.9l-0.9 -5.4zM1505 259.1l6.2 1.9l0.9 5.4l-5.3 3.5l-6.3 -1.8l-0.9 -5.4zM1522.5 256.6l6.3 1.8l0.9 5.4l-5.4 3.5l-6.2 -1.8l-0.9 -5.4zM1540.1 254l6.2 1.9l0.9 5.3l-5.3 3.6l-6.3 -1.9l-0.8 -5.4zM1557.7 251.4l6.2 1.9l0.9 5.4l-5.4 3.5l-6.2 -1.8l-0.9 -5.4zM1575.2 248.9l6.2 1.8l0.9 5.4l-5.3 3.5l-6.2 -1.8l-0.9 -5.4zM1592.8 246.3l6.2 1.9l0.9 5.3l-5.4 3.6l-6.2 -1.9l-0.9 -5.4zM1610.3 243.7l6.3 1.9l0.8 5.4l-5.3 3.5l-6.2 -1.8l-0.9 -5.4zM1627.9 241.2l6.2 1.8l0.9 5.4l-5.3 3.5l-6.3 -1.8l-0.9 -5.4zM1645.4 238.6l6.3 1.9l0.9 5.3l-5.4 3.6l-6.2 -1.9l-0.9 -5.4zM1663 236l6.2 1.9l0.9 5.4l-5.3 3.5l-6.3 -1.8l-0.9 -5.4zM1680.5 233.5l6.3 1.8l0.9 5.4l-5.4 3.5l-6.2 -1.8l-0.9 -5.4zM1698.1 230.9l6.2 1.9l0.9 5.3l-5.3 3.6l-6.3 -1.9l-0.8 -5.3zM1715.7 228.4l6.2 1.8l0.9 5.4l-5.4 3.5l-6.2 -1.8l-0.9 -5.4zM1733.2 225.8l6.2 1.8l0.9 5.4l-5.3 3.5l-6.2 -1.8l-0.9 -5.4zM1750.8 223.2l6.2 1.9l0.9 5.3l-5.4 3.6l-6.2 -1.9l-0.9 -5.3zM1768.3 220.7l6.3 1.8l0.8 5.4l-5.3 3.5l-6.2 -1.8l-0.9 -5.4zM794.7 381.3l6.2 1.9l0.9 5.4l-5.3 3.5l-6.3 -1.8l-0.9 -5.4zM812.2 378.8l6.3 1.8l0.9 5.4l-5.4 3.5l-6.2 -1.8l-0.9 -5.4zM829.8 376.2l6.2 1.9l0.9 5.3l-5.3 3.6l-6.3 -1.9l-0.9 -5.4zM847.3 373.6l6.3 1.9l0.9 5.4l-5.4 3.5l-6.2 -1.8l-0.9 -5.4zM864.9 371.1l6.2 1.8l0.9 5.4l-5.3 3.5l-6.3 -1.8l-0.8 -5.4zM882.5 368.5l6.2 1.9l0.9 5.3l-5.4 3.6l-6.2 -1.9l-0.9 -5.4zM900 365.9l6.2 1.9l0.9 5.4l-5.3 3.5l-6.2 -1.8l-0.9 -5.4zM917.6 363.4l6.2 1.8l0.9 5.4l-5.4 3.5l-6.2 -1.8l-0.9 -5.4zM935.1 360.8l6.3 1.9l0.8 5.3l-5.3 3.6l-6.2 -1.9l-0.9 -5.4zM952.7 358.2l6.2 1.9l0.9 5.4l-5.3 3.5l-6.3 -1.8l-0.9 -5.4zM970.2 355.7l6.3 1.8l0.9 5.4l-5.4 3.5l-6.2 -1.8l-0.9 -5.4zM987.8 353.1l6.2 1.9l0.9 5.3l-5.3 3.6l-6.3 -1.9l-0.9 -5.4zM1005.3 350.5l6.3 1.9l0.9 5.4l-5.4 3.5l-6.2 -1.8l-0.9 -5.4zM1022.9 348l6.2 1.8l0.9 5.4l-5.3 3.5l-6.3 -1.8l-0.8 -5.4zM1040.4 345.4l6.3 1.9l0.9 5.3l-5.4 3.6l-6.2 -1.9l-0.9 -5.3zM1058 342.9l6.2 1.8l0.9 5.4l-5.3 3.5l-6.3 -1.8l-0.8 -5.4zM1075.6 340.3l6.2 1.8l0.9 5.4l-5.4 3.5l-6.2 -1.8l-0.9 -5.4zM1093.1 337.7l6.2 1.9l0.9 5.3l-5.3 3.6l-6.2 -1.9l-0.9 -5.3zM1110.7 335.2l6.2 1.8l0.9 5.4l-5.4 3.5l-6.2 -1.8l-0.9 -5.4zM1128.2 332.6l6.3 1.8l0.8 5.4l-5.3 3.5l-6.2 -1.8l-0.9 -5.4zM1145.8 330l6.2 1.9l0.9 5.3l-5.3 3.6l-6.3 -1.9l-0.9 -5.3zM1163.3 327.5l6.3 1.8l0.9 5.4l-5.4 3.5l-6.2 -1.8l-0.9 -5.4zM1180.9 324.9l6.2 1.8l0.9 5.4l-5.3 3.5l-6.3 -1.8l-0.9 -5.4zM1198.4 322.3l6.3 1.9l0.9 5.3l-5.4 3.6l-6.2 -1.9l-0.9 -5.3zM1216 319.8l6.2 1.8l0.9 5.4l-5.3 3.5l-6.3 -1.8l-0.8 -5.4zM1233.6 317.2l6.2 1.8l0.9 5.4l-5.4 3.5l-6.2 -1.8l-0.9 -5.4zM1251.1 314.6l6.2 1.9l0.9 5.3l-5.3 3.6l-6.2 -1.9l-0.9 -5.3zM1268.7 312.1l6.2 1.8l0.9 5.4l-5.4 3.5l-6.2 -1.8l-0.9 -5.4zM1286.2 309.5l6.3 1.8l0.8 5.4l-5.3 3.5l-6.2 -1.8l-0.9 -5.4zM1303.8 306.9l6.2 1.9l0.9 5.3l-5.3 3.6l-6.3 -1.9l-0.9 -5.3zM1321.3 304.4l6.3 1.8l0.9 5.4l-5.4 3.5l-6.2 -1.8l-0.9 -5.4zM1338.9 301.8l6.2 1.8l0.9 5.4l-5.3 3.5l-6.3 -1.8l-0.9 -5.4zM1356.4 299.2l6.3 1.9l0.9 5.3l-5.4 3.6l-6.2 -1.9l-0.9 -5.3zM1374 296.7l6.2 1.8l0.9 5.4l-5.3 3.5l-6.3 -1.8l-0.8 -5.4zM1391.5 294.1l6.3 1.8l0.9 5.4l-5.4 3.6l-6.2 -1.9l-0.9 -5.4zM1409.1 291.5l6.2 1.9l0.9 5.4l-5.3 3.5l-6.3 -1.9l-0.8 -5.3zM1426.7 289l6.2 1.8l0.9 5.4l-5.4 3.5l-6.2 -1.8l-0.9 -5.4zM1444.2 286.4l6.2 1.8l0.9 5.4l-5.3 3.6l-6.2 -1.9l-0.9 -5.4zM1461.8 283.8l6.2 1.9l0.9 5.4l-5.4 3.5l-6.2 -1.9l-0.9 -5.3zM1479.3 281.3l6.3 1.8l0.8 5.4l-5.3 3.5l-6.2 -1.8l-0.9 -5.4zM1496.9 278.7l6.2 1.8l0.9 5.4l-5.3 3.6l-6.3 -1.9l-0.9 -5.4zM1514.4 276.1l6.3 1.9l0.9 5.4l-5.4 3.5l-6.2 -1.9l-0.9 -5.3zM1532 273.6l6.2 1.8l0.9 5.4l-5.3 3.5l-6.3 -1.8l-0.9 -5.4zM1549.5 271l6.3 1.8l0.9 5.4l-5.4 3.6l-6.2 -1.9l-0.9 -5.4zM1567.1 268.4l6.2 1.9l0.9 5.4l-5.3 3.5l-6.3 -1.9l-0.8 -5.3zM1584.7 265.9l6.2 1.8l0.9 5.4l-5.4 3.5l-6.2 -1.8l-0.9 -5.4zM1602.2 263.3l6.2 1.8l0.9 5.4l-5.3 3.6l-6.2 -1.9l-0.9 -5.4zM1619.8 260.7l6.2 1.9l0.9 5.4l-5.4 3.5l-6.2 -1.8l-0.9 -5.4zM1637.3 258.2l6.3 1.8l0.8 5.4l-5.3 3.5l-6.2 -1.8l-0.9 -5.4zM1654.9 255.6l6.2 1.8l0.9 5.4l-5.3 3.6l-6.3 -1.9l-0.9 -5.4zM1672.4 253l6.3 1.9l0.9 5.4l-5.4 3.5l-6.2 -1.8l-0.9 -5.4zM1690 250.5l6.2 1.8l0.9 5.4l-5.3 3.5l-6.3 -1.8l-0.9 -5.4zM1707.5 247.9l6.3 1.9l0.9 5.3l-5.4 3.6l-6.2 -1.9l-0.9 -5.4zM1725.1 245.3l6.2 1.9l0.9 5.4l-5.3 3.5l-6.3 -1.8l-0.8 -5.4zM1742.6 242.8l6.3 1.8l0.9 5.4l-5.4 3.5l-6.2 -1.8l-0.9 -5.4zM1760.2 240.2l6.2 1.9l0.9 5.3l-5.3 3.6l-6.3 -1.9l-0.8 -5.4zM1777.8 237.6l6.2 1.9l0.9 5.4l-5.4 3.5l-6.2 -1.8l-0.9 -5.4zM790.8 398.1l6.3 1.9l0.8 5.4l-5.3 3.5l-6.2 -1.9l-0.9 -5.3zM808.4 395.6l6.2 1.8l0.9 5.4l-5.3 3.5l-6.3 -1.8l-0.9 -5.4zM825.9 393l6.3 1.8l0.9 5.4l-5.4 3.6l-6.2 -1.9l-0.9 -5.4zM843.5 390.4l6.2 1.9l0.9 5.4l-5.3 3.5l-6.3 -1.9l-0.9 -5.3zM861 387.9l6.3 1.8l0.9 5.4l-5.4 3.5l-6.2 -1.8l-0.9 -5.4zM878.6 385.3l6.2 1.8l0.9 5.4l-5.3 3.6l-6.3 -1.9l-0.8 -5.4zM896.2 382.7l6.2 1.9l0.9 5.4l-5.4 3.5l-6.2 -1.9l-0.9 -5.3zM913.7 380.2l6.2 1.8l0.9 5.4l-5.3 3.5l-6.2 -1.8l-0.9 -5.4zM931.3 377.6l6.2 1.8l0.9 5.4l-5.4 3.6l-6.2 -1.9l-0.9 -5.4zM948.8 375l6.2 1.9l0.9 5.4l-5.3 3.5l-6.2 -1.8l-0.9 -5.4zM966.4 372.5l6.2 1.8l0.9 5.4l-5.4 3.5l-6.2 -1.8l-0.9 -5.4zM983.9 369.9l6.3 1.8l0.8 5.4l-5.3 3.6l-6.2 -1.9l-0.9 -5.4zM1001.5 367.3l6.2 1.9l0.9 5.4l-5.3 3.5l-6.3 -1.8l-0.9 -5.4zM1019 364.8l6.3 1.8l0.9 5.4l-5.4 3.5l-6.2 -1.8l-0.9 -5.4zM1036.6 362.2l6.2 1.9l0.9 5.3l-5.3 3.6l-6.3 -1.9l-0.9 -5.4zM1054.1 359.6l6.3 1.9l0.9 5.4l-5.4 3.5l-6.2 -1.8l-0.9 -5.4zM1071.7 357.1l6.2 1.8l0.9 5.4l-5.3 3.5l-6.3 -1.8l-0.8 -5.4zM1089.3 354.5l6.2 1.9l0.9 5.3l-5.4 3.6l-6.2 -1.9l-0.9 -5.4zM1106.8 351.9l6.2 1.9l0.9 5.4l-5.3 3.5l-6.2 -1.8l-0.9 -5.4zM1124.4 349.4l6.2 1.8l0.9 5.4l-5.4 3.5l-6.2 -1.8l-0.9 -5.4zM1141.9 346.8l6.3 1.9l0.8 5.3l-5.3 3.6l-6.2 -1.9l-0.9 -5.4zM1159.5 344.2l6.2 1.9l0.9 5.4l-5.3 3.5l-6.3 -1.8l-0.9 -5.4zM1177 341.7l6.3 1.8l0.9 5.4l-5.4 3.5l-6.2 -1.8l-0.9 -5.4zM1194.6 339.1l6.2 1.9l0.9 5.3l-5.3 3.6l-6.3 -1.9l-0.9 -5.4zM1212.1 336.5l6.3 1.9l0.9 5.4l-5.4 3.5l-6.2 -1.8l-0.9 -5.4zM1229.7 334l6.2 1.8l0.9 5.4l-5.3 3.5l-6.3 -1.8l-0.8 -5.4zM1247.3 331.4l6.2 1.9l0.9 5.3l-5.4 3.6l-6.2 -1.9l-0.9 -5.3zM1264.8 328.9l6.2 1.8l0.9 5.4l-5.3 3.5l-6.2 -1.8l-0.9 -5.4zM1282.4 326.3l6.2 1.8l0.9 5.4l-5.4 3.5l-6.2 -1.8l-0.9 -5.4zM1299.9 323.7l6.2 1.9l0.9 5.3l-5.3 3.6l-6.2 -1.9l-0.9 -5.3zM1317.5 321.2l6.2 1.8l0.9 5.4l-5.4 3.5l-6.2 -1.8l-0.9 -5.4zM1335 318.6l6.3 1.8l0.8 5.4l-5.3 3.5l-6.2 -1.8l-0.9 -5.4zM1352.6 316l6.2 1.9l0.9 5.3l-5.3 3.6l-6.3 -1.9l-0.9 -5.3zM1370.1 313.5l6.3 1.8l0.9 5.4l-5.4 3.5l-6.2 -1.8l-0.9 -5.4zM1387.7 310.9l6.2 1.8l0.9 5.4l-5.3 3.5l-6.3 -1.8l-0.9 -5.4zM1405.2 308.3l6.3 1.9l0.9 5.3l-5.4 3.6l-6.2 -1.9l-0.9 -5.3zM1422.8 305.8l6.2 1.8l0.9 5.4l-5.3 3.5l-6.3 -1.8l-0.8 -5.4zM1440.4 303.2l6.2 1.8l0.9 5.4l-5.4 3.5l-6.2 -1.8l-0.9 -5.4zM1457.9 300.6l6.2 1.9l0.9 5.3l-5.3 3.6l-6.2 -1.9l-0.9 -5.3zM1475.5 298.1l6.2 1.8l0.9 5.4l-5.4 3.5l-6.2 -1.8l-0.9 -5.4zM1493 295.5l6.3 1.8l0.8 5.4l-5.3 3.5l-6.2 -1.8l-0.9 -5.4zM1510.6 292.9l6.2 1.9l0.9 5.3l-5.3 3.6l-6.3 -1.9l-0.9 -5.3zM1528.1 290.4l6.3 1.8l0.9 5.4l-5.4 3.5l-6.2 -1.8l-0.9 -5.4zM1545.7 287.8l6.2 1.8l0.9 5.4l-5.3 3.5l-6.3 -1.8l-0.9 -5.4zM1563.2 285.2l6.3 1.9l0.9 5.3l-5.4 3.6l-6.2 -1.9l-0.9 -5.3zM1580.8 282.7l6.2 1.8l0.9 5.4l-5.3 3.5l-6.3 -1.8l-0.8 -5.4zM1598.4 280.1l6.2 1.8l0.9 5.4l-5.4 3.6l-6.2 -1.9l-0.9 -5.4zM1615.9 277.5l6.2 1.9l0.9 5.4l-5.3 3.5l-6.2 -1.9l-0.9 -5.3zM1633.5 275l6.2 1.8l0.9 5.4l-5.4 3.5l-6.2 -1.8l-0.9 -5.4zM1651 272.4l6.2 1.8l0.9 5.4l-5.3 3.6l-6.2 -1.9l-0.9 -5.4zM1668.6 269.8l6.2 1.9l0.9 5.4l-5.4 3.5l-6.2 -1.9l-0.9 -5.3zM1686.1 267.3l6.3 1.8l0.8 5.4l-5.3 3.5l-6.2 -1.8l-0.9 -5.4zM1703.7 264.7l6.2 1.8l0.9 5.4l-5.3 3.6l-6.3 -1.9l-0.9 -5.4zM1721.2 262.1l6.3 1.9l0.9 5.4l-5.4 3.5l-6.2 -1.9l-0.9 -5.3zM1738.8 259.6l6.2 1.8l0.9 5.4l-5.3 3.5l-6.3 -1.8l-0.9 -5.4zM1756.3 257l6.3 1.8l0.9 5.4l-5.4 3.6l-6.2 -1.9l-0.9 -5.4zM1773.9 254.4l6.2 1.9l0.9 5.4l-5.3 3.5l-6.3 -1.9l-0.8 -5.3zM800.3 415.1l6.2 1.9l0.9 5.3l-5.4 3.6l-6.2 -1.9l-0.9 -5.3zM817.8 412.6l6.3 1.8l0.8 5.4l-5.3 3.5l-6.2 -1.8l-0.9 -5.4zM835.4 410l6.2 1.8l0.9 5.4l-5.3 3.5l-6.3 -1.8l-0.9 -5.4zM852.9 407.4l6.3 1.9l0.8 5.3l-5.3 3.6l-6.2 -1.9l-0.9 -5.3zM870.5 404.9l6.2 1.8l0.9 5.4l-5.3 3.5l-6.3 -1.8l-0.9 -5.4zM888 402.3l6.3 1.8l0.9 5.4l-5.4 3.5l-6.2 -1.8l-0.9 -5.4zM905.6 399.7l6.2 1.9l0.9 5.3l-5.3 3.6l-6.3 -1.9l-0.9 -5.3zM923.1 397.2l6.3 1.8l0.9 5.4l-5.4 3.5l-6.2 -1.8l-0.9 -5.4zM940.7 394.6l6.2 1.8l0.9 5.4l-5.3 3.6l-6.3 -1.9l-0.8 -5.4zM958.3 392l6.2 1.9l0.9 5.4l-5.4 3.5l-6.2 -1.9l-0.9 -5.3zM975.8 389.5l6.2 1.8l0.9 5.4l-5.3 3.5l-6.2 -1.8l-0.9 -5.4zM993.4 386.9l6.2 1.8l0.9 5.4l-5.4 3.6l-6.2 -1.9l-0.9 -5.4zM1010.9 384.3l6.3 1.9l0.8 5.4l-5.3 3.5l-6.2 -1.9l-0.9 -5.3zM1028.5 381.8l6.2 1.8l0.9 5.4l-5.3 3.5l-6.3 -1.8l-0.9 -5.4zM1046 379.2l6.3 1.8l0.9 5.4l-5.4 3.6l-6.2 -1.9l-0.9 -5.4zM1063.6 376.6l6.2 1.9l0.9 5.4l-5.3 3.5l-6.3 -1.9l-0.9 -5.3zM1081.1 374.1l6.3 1.8l0.9 5.4l-5.4 3.5l-6.2 -1.8l-0.9 -5.4zM1098.7 371.5l6.2 1.8l0.9 5.4l-5.3 3.6l-6.3 -1.9l-0.8 -5.4zM1116.3 368.9l6.2 1.9l0.9 5.4l-5.4 3.5l-6.2 -1.9l-0.9 -5.3zM1133.8 366.4l6.2 1.8l0.9 5.4l-5.3 3.5l-6.2 -1.8l-0.9 -5.4zM1151.4 363.8l6.2 1.8l0.9 5.4l-5.4 3.6l-6.2 -1.9l-0.9 -5.4zM1168.9 361.2l6.3 1.9l0.8 5.4l-5.3 3.5l-6.2 -1.8l-0.9 -5.4zM1186.5 358.7l6.2 1.8l0.9 5.4l-5.3 3.5l-6.3 -1.8l-0.9 -5.4zM1204 356.1l6.3 1.8l0.8 5.4l-5.3 3.6l-6.2 -1.9l-0.9 -5.4zM1221.6 353.5l6.2 1.9l0.9 5.4l-5.3 3.5l-6.3 -1.8l-0.9 -5.4zM1239.1 351l6.3 1.8l0.9 5.4l-5.4 3.5l-6.2 -1.8l-0.9 -5.4zM1256.7 348.4l6.2 1.9l0.9 5.3l-5.3 3.6l-6.3 -1.9l-0.9 -5.4zM1274.2 345.8l6.3 1.9l0.9 5.4l-5.4 3.5l-6.2 -1.8l-0.9 -5.4zM1291.8 343.3l6.2 1.8l0.9 5.4l-5.3 3.5l-6.3 -1.8l-0.8 -5.4zM1309.4 340.7l6.2 1.9l0.9 5.3l-5.4 3.6l-6.2 -1.9l-0.9 -5.4zM1326.9 338.1l6.2 1.9l0.9 5.4l-5.3 3.5l-6.2 -1.8l-0.9 -5.4zM1344.5 335.6l6.2 1.8l0.9 5.4l-5.4 3.5l-6.2 -1.8l-0.9 -5.4zM1362 333l6.3 1.9l0.8 5.3l-5.3 3.6l-6.2 -1.9l-0.9 -5.4zM1379.6 330.4l6.2 1.9l0.9 5.4l-5.3 3.5l-6.3 -1.8l-0.9 -5.4zM1397.1 327.9l6.3 1.8l0.9 5.4l-5.4 3.5l-6.2 -1.8l-0.9 -5.4zM1414.7 325.3l6.2 1.9l0.9 5.3l-5.3 3.6l-6.3 -1.9l-0.9 -5.4zM1432.2 322.7l6.3 1.9l0.9 5.4l-5.4 3.5l-6.2 -1.8l-0.9 -5.4zM1449.8 320.2l6.2 1.8l0.9 5.4l-5.3 3.5l-6.3 -1.8l-0.8 -5.4zM1467.4 317.6l6.2 1.9l0.9 5.3l-5.4 3.6l-6.2 -1.9l-0.9 -5.3zM1484.9 315.1l6.2 1.8l0.9 5.4l-5.3 3.5l-6.2 -1.8l-0.9 -5.4zM1502.5 312.5l6.2 1.8l0.9 5.4l-5.4 3.5l-6.2 -1.8l-0.9 -5.4zM1520 309.9l6.3 1.9l0.8 5.3l-5.3 3.6l-6.2 -1.9l-0.9 -5.3zM1537.6 307.4l6.2 1.8l0.9 5.4l-5.3 3.5l-6.3 -1.8l-0.9 -5.4zM1555.1 304.8l6.3 1.8l0.8 5.4l-5.3 3.5l-6.2 -1.8l-0.9 -5.4zM1572.7 302.2l6.2 1.9l0.9 5.3l-5.3 3.6l-6.3 -1.9l-0.9 -5.3zM1590.2 299.7l6.3 1.8l0.9 5.4l-5.4 3.5l-6.2 -1.8l-0.9 -5.4zM1607.8 297.1l6.2 1.8l0.9 5.4l-5.3 3.5l-6.3 -1.8l-0.9 -5.4zM1625.3 294.5l6.3 1.9l0.9 5.3l-5.4 3.6l-6.2 -1.9l-0.9 -5.3zM1642.9 292l6.2 1.8l0.9 5.4l-5.3 3.5l-6.3 -1.8l-0.8 -5.4zM1660.5 289.4l6.2 1.8l0.9 5.4l-5.4 3.5l-6.2 -1.8l-0.9 -5.4zM1678 286.8l6.2 1.9l0.9 5.3l-5.3 3.6l-6.2 -1.9l-0.9 -5.3zM1695.6 284.3l6.2 1.8l0.9 5.4l-5.4 3.5l-6.2 -1.8l-0.9 -5.4zM1713.1 281.7l6.3 1.8l0.8 5.4l-5.3 3.5l-6.2 -1.8l-0.9 -5.4zM1730.7 279.1l6.2 1.9l0.9 5.3l-5.3 3.6l-6.3 -1.9l-0.9 -5.3zM1748.2 276.6l6.3 1.8l0.9 5.4l-5.4 3.5l-6.2 -1.8l-0.9 -5.4zM1765.8 274l6.2 1.8l0.9 5.4l-5.3 3.5l-6.3 -1.8l-0.9 -5.4zM1783.3 271.4l6.3 1.9l0.9 5.3l-5.4 3.6l-6.2 -1.9l-0.9 -5.3zM796.4 431.9l6.2 1.9l0.9 5.3l-5.3 3.6l-6.3 -1.9l-0.8 -5.3zM814 429.4l6.2 1.8l0.9 5.4l-5.4 3.5l-6.2 -1.8l-0.9 -5.4zM831.5 426.8l6.2 1.8l0.9 5.4l-5.3 3.5l-6.2 -1.8l-0.9 -5.4zM849.1 424.2l6.2 1.9l0.9 5.3l-5.4 3.6l-6.2 -1.9l-0.9 -5.3zM866.6 421.7l6.3 1.8l0.8 5.4l-5.3 3.5l-6.2 -1.8l-0.9 -5.4zM884.2 419.1l6.2 1.8l0.9 5.4l-5.3 3.5l-6.3 -1.8l-0.9 -5.4zM901.7 416.5l6.3 1.9l0.9 5.3l-5.4 3.6l-6.2 -1.9l-0.9 -5.3zM919.3 414l6.2 1.8l0.9 5.4l-5.3 3.5l-6.3 -1.8l-0.9 -5.4zM936.8 411.4l6.3 1.8l0.9 5.4l-5.4 3.5l-6.2 -1.8l-0.9 -5.4zM954.4 408.8l6.2 1.9l0.9 5.3l-5.3 3.6l-6.3 -1.9l-0.8 -5.3zM972 406.3l6.2 1.8l0.9 5.4l-5.4 3.5l-6.2 -1.8l-0.9 -5.4zM989.5 403.7l6.2 1.8l0.9 5.4l-5.3 3.5l-6.2 -1.8l-0.9 -5.4zM1007.1 401.1l6.2 1.9l0.9 5.3l-5.4 3.6l-6.2 -1.9l-0.9 -5.3zM1024.6 398.6l6.3 1.8l0.8 5.4l-5.3 3.5l-6.2 -1.8l-0.9 -5.4zM1042.2 396l6.2 1.8l0.9 5.4l-5.3 3.5l-6.3 -1.8l-0.9 -5.4zM1059.7 393.4l6.3 1.9l0.9 5.3l-5.4 3.6l-6.2 -1.9l-0.9 -5.3zM1077.3 390.9l6.2 1.8l0.9 5.4l-5.3 3.5l-6.3 -1.8l-0.9 -5.4zM1094.8 388.3l6.3 1.8l0.9 5.4l-5.4 3.5l-6.2 -1.8l-0.9 -5.4zM1112.4 385.7l6.2 1.9l0.9 5.3l-5.3 3.6l-6.3 -1.9l-0.8 -5.3zM1130 383.2l6.2 1.8l0.9 5.4l-5.4 3.5l-6.2 -1.8l-0.9 -5.4zM1147.5 380.6l6.2 1.8l0.9 5.4l-5.3 3.6l-6.3 -1.9l-0.8 -5.4zM1165.1 378l6.2 1.9l0.9 5.4l-5.4 3.5l-6.2 -1.9l-0.9 -5.3zM1182.6 375.5l6.2 1.8l0.9 5.4l-5.3 3.5l-6.2 -1.8l-0.9 -5.4zM1200.2 372.9l6.2 1.8l0.9 5.4l-5.4 3.6l-6.2 -1.9l-0.9 -5.4zM1217.7 370.3l6.3 1.9l0.8 5.4l-5.3 3.5l-6.2 -1.9l-0.9 -5.3zM1235.3 367.8l6.2 1.8l0.9 5.4l-5.3 3.5l-6.3 -1.8l-0.9 -5.4zM1252.8 365.2l6.3 1.8l0.9 5.4l-5.4 3.6l-6.2 -1.9l-0.9 -5.4zM1270.4 362.6l6.2 1.9l0.9 5.4l-5.3 3.5l-6.3 -1.9l-0.9 -5.3zM1287.9 360.1l6.3 1.8l0.9 5.4l-5.4 3.5l-6.2 -1.8l-0.9 -5.4zM1305.5 357.5l6.2 1.8l0.9 5.4l-5.3 3.6l-6.3 -1.9l-0.8 -5.4zM1323.1 354.9l6.2 1.9l0.9 5.4l-5.4 3.5l-6.2 -1.9l-0.9 -5.3zM1340.6 352.4l6.2 1.8l0.9 5.4l-5.3 3.5l-6.2 -1.8l-0.9 -5.4zM1358.2 349.8l6.2 1.8l0.9 5.4l-5.4 3.6l-6.2 -1.9l-0.9 -5.4zM1375.7 347.2l6.3 1.9l0.8 5.4l-5.3 3.5l-6.2 -1.8l-0.9 -5.4zM1393.3 344.7l6.2 1.8l0.9 5.4l-5.3 3.5l-6.3 -1.8l-0.9 -5.4zM1410.8 342.1l6.3 1.8l0.9 5.4l-5.4 3.6l-6.2 -1.9l-0.9 -5.4zM1428.4 339.5l6.2 1.9l0.9 5.4l-5.3 3.5l-6.3 -1.8l-0.9 -5.4zM1445.9 337l6.3 1.8l0.9 5.4l-5.4 3.5l-6.2 -1.8l-0.9 -5.4zM1463.5 334.4l6.2 1.9l0.9 5.3l-5.3 3.6l-6.3 -1.9l-0.8 -5.4zM1481.1 331.8l6.2 1.9l0.9 5.4l-5.4 3.5l-6.2 -1.8l-0.9 -5.4zM1498.6 329.3l6.2 1.8l0.9 5.4l-5.3 3.5l-6.3 -1.8l-0.8 -5.4zM1516.2 326.7l6.2 1.9l0.9 5.3l-5.4 3.6l-6.2 -1.9l-0.9 -5.4zM1533.7 324.1l6.2 1.9l0.9 5.4l-5.3 3.5l-6.2 -1.8l-0.9 -5.4zM1551.3 321.6l6.2 1.8l0.9 5.4l-5.4 3.5l-6.2 -1.8l-0.9 -5.4zM1568.8 319l6.3 1.9l0.8 5.3l-5.3 3.6l-6.2 -1.9l-0.9 -5.4zM1586.4 316.4l6.2 1.9l0.9 5.4l-5.3 3.5l-6.3 -1.8l-0.9 -5.4zM1603.9 313.9l6.3 1.8l0.9 5.4l-5.4 3.5l-6.2 -1.8l-0.9 -5.4zM1621.5 311.3l6.2 1.9l0.9 5.3l-5.3 3.6l-6.3 -1.9l-0.9 -5.4zM1639 308.7l6.3 1.9l0.9 5.4l-5.4 3.5l-6.2 -1.8l-0.9 -5.4zM1656.6 306.2l6.2 1.8l0.9 5.4l-5.3 3.5l-6.3 -1.8l-0.8 -5.4zM1674.2 303.6l6.2 1.9l0.9 5.3l-5.4 3.6l-6.2 -1.9l-0.9 -5.3zM1691.7 301.1l6.2 1.8l0.9 5.4l-5.3 3.5l-6.2 -1.8l-0.9 -5.4zM1709.3 298.5l6.2 1.8l0.9 5.4l-5.4 3.5l-6.2 -1.8l-0.9 -5.4zM1726.8 295.9l6.3 1.9l0.8 5.3l-5.3 3.6l-6.2 -1.9l-0.9 -5.3zM1744.4 293.4l6.2 1.8l0.9 5.4l-5.3 3.5l-6.3 -1.8l-0.9 -5.4zM1761.9 290.8l6.3 1.8l0.9 5.4l-5.4 3.5l-6.2 -1.8l-0.9 -5.4zM1779.5 288.2l6.2 1.9l0.9 5.3l-5.3 3.6l-6.3 -1.9l-0.9 -5.3zM805.8 448.9l6.3 1.9l0.9 5.3l-5.4 3.6l-6.2 -1.9l-0.9 -5.4zM823.4 446.3l6.2 1.9l0.9 5.4l-5.3 3.5l-6.3 -1.8l-0.8 -5.4zM841 443.8l6.2 1.8l0.9 5.4l-5.4 3.5l-6.2 -1.8l-0.9 -5.4zM858.5 441.2l6.2 1.9l0.9 5.3l-5.3 3.6l-6.2 -1.9l-0.9 -5.4zM876.1 438.6l6.2 1.9l0.9 5.4l-5.4 3.5l-6.2 -1.8l-0.9 -5.4zM893.6 436.1l6.3 1.8l0.8 5.4l-5.3 3.5l-6.2 -1.8l-0.9 -5.4zM911.2 433.5l6.2 1.9l0.9 5.3l-5.3 3.6l-6.3 -1.9l-0.9 -5.4zM928.7 430.9l6.3 1.9l0.9 5.4l-5.4 3.5l-6.2 -1.8l-0.9 -5.4zM946.3 428.4l6.2 1.8l0.9 5.4l-5.3 3.5l-6.3 -1.8l-0.9 -5.4zM963.8 425.8l6.3 1.9l0.9 5.3l-5.4 3.6l-6.2 -1.9l-0.9 -5.4zM981.4 423.2l6.2 1.9l0.9 5.4l-5.3 3.5l-6.3 -1.8l-0.8 -5.4zM999 420.7l6.2 1.8l0.9 5.4l-5.4 3.5l-6.2 -1.8l-0.9 -5.4zM1016.5 418.1l6.2 1.9l0.9 5.3l-5.3 3.6l-6.2 -1.9l-0.9 -5.3zM1034.1 415.6l6.2 1.8l0.9 5.4l-5.4 3.5l-6.2 -1.8l-0.9 -5.4zM1051.6 413l6.3 1.8l0.8 5.4l-5.3 3.5l-6.2 -1.8l-0.9 -5.4zM1069.2 410.4l6.2 1.9l0.9 5.3l-5.4 3.6l-6.2 -1.9l-0.9 -5.3zM1086.7 407.9l6.3 1.8l0.8 5.4l-5.3 3.5l-6.2 -1.8l-0.9 -5.4zM1104.3 405.3l6.2 1.8l0.9 5.4l-5.3 3.5l-6.3 -1.8l-0.9 -5.4zM1121.8 402.7l6.3 1.9l0.9 5.3l-5.4 3.6l-6.2 -1.9l-0.9 -5.3zM1139.4 400.2l6.2 1.8l0.9 5.4l-5.3 3.5l-6.3 -1.8l-0.9 -5.4zM1156.9 397.6l6.3 1.8l0.9 5.4l-5.4 3.5l-6.2 -1.8l-0.9 -5.4zM1174.5 395l6.2 1.9l0.9 5.3l-5.3 3.6l-6.3 -1.9l-0.8 -5.3zM1192.1 392.5l6.2 1.8l0.9 5.4l-5.4 3.5l-6.2 -1.8l-0.9 -5.4zM1209.6 389.9l6.2 1.8l0.9 5.4l-5.3 3.5l-6.2 -1.8l-0.9 -5.4zM1227.2 387.3l6.2 1.9l0.9 5.3l-5.4 3.6l-6.2 -1.9l-0.9 -5.3zM1244.7 384.8l6.3 1.8l0.8 5.4l-5.3 3.5l-6.2 -1.8l-0.9 -5.4zM1262.3 382.2l6.2 1.8l0.9 5.4l-5.3 3.5l-6.3 -1.8l-0.9 -5.4zM1279.8 379.6l6.3 1.9l0.9 5.3l-5.4 3.6l-6.2 -1.9l-0.9 -5.3zM1297.4 377.1l6.2 1.8l0.9 5.4l-5.3 3.5l-6.3 -1.8l-0.9 -5.4zM1314.9 374.5l6.3 1.8l0.9 5.4l-5.4 3.5l-6.2 -1.8l-0.9 -5.4zM1332.5 371.9l6.2 1.9l0.9 5.3l-5.3 3.6l-6.3 -1.9l-0.8 -5.3zM1350.1 369.4l6.2 1.8l0.9 5.4l-5.4 3.5l-6.2 -1.8l-0.9 -5.4zM1367.6 366.8l6.2 1.8l0.9 5.4l-5.3 3.6l-6.2 -1.9l-0.9 -5.4zM1385.2 364.2l6.2 1.9l0.9 5.4l-5.4 3.5l-6.2 -1.9l-0.9 -5.3zM1402.7 361.7l6.3 1.8l0.8 5.4l-5.3 3.5l-6.2 -1.8l-0.9 -5.4zM1420.3 359.1l6.2 1.8l0.9 5.4l-5.4 3.6l-6.2 -1.9l-0.9 -5.4zM1437.8 356.5l6.3 1.9l0.8 5.4l-5.3 3.5l-6.2 -1.9l-0.9 -5.3zM1455.4 354l6.2 1.8l0.9 5.4l-5.3 3.5l-6.3 -1.8l-0.9 -5.4zM1472.9 351.4l6.3 1.8l0.9 5.4l-5.4 3.6l-6.2 -1.9l-0.9 -5.4zM1490.5 348.8l6.2 1.9l0.9 5.4l-5.3 3.5l-6.3 -1.9l-0.9 -5.3zM1508 346.3l6.3 1.8l0.9 5.4l-5.4 3.5l-6.2 -1.8l-0.9 -5.4zM1525.6 343.7l6.2 1.8l0.9 5.4l-5.3 3.6l-6.3 -1.9l-0.8 -5.4zM1543.2 341.1l6.2 1.9l0.9 5.4l-5.4 3.5l-6.2 -1.9l-0.9 -5.3zM1560.7 338.6l6.2 1.8l0.9 5.4l-5.3 3.5l-6.2 -1.8l-0.9 -5.4zM1578.3 336l6.2 1.8l0.9 5.4l-5.4 3.6l-6.2 -1.9l-0.9 -5.4zM1595.8 333.4l6.3 1.9l0.8 5.4l-5.3 3.5l-6.2 -1.8l-0.9 -5.4zM1613.4 330.9l6.2 1.8l0.9 5.4l-5.3 3.5l-6.3 -1.8l-0.9 -5.4zM1630.9 328.3l6.3 1.8l0.9 5.4l-5.4 3.6l-6.2 -1.9l-0.9 -5.4zM1648.5 325.7l6.2 1.9l0.9 5.4l-5.3 3.5l-6.3 -1.8l-0.9 -5.4zM1666 323.2l6.3 1.8l0.9 5.4l-5.4 3.5l-6.2 -1.8l-0.9 -5.4zM1683.6 320.6l6.2 1.9l0.9 5.3l-5.3 3.6l-6.3 -1.9l-0.8 -5.4zM1701.2 318l6.2 1.9l0.9 5.4l-5.4 3.5l-6.2 -1.8l-0.9 -5.4zM1718.7 315.5l6.2 1.8l0.9 5.4l-5.3 3.5l-6.2 -1.8l-0.9 -5.4zM1736.3 312.9l6.2 1.9l0.9 5.3l-5.4 3.6l-6.2 -1.9l-0.9 -5.4zM1753.8 310.3l6.3 1.9l0.8 5.4l-5.3 3.5l-6.2 -1.8l-0.9 -5.4zM1771.4 307.8l6.2 1.8l0.9 5.4l-5.4 3.5l-6.2 -1.8l-0.9 -5.4zM1788.9 305.2l6.3 1.9l0.8 5.3l-5.3 3.6l-6.2 -1.9l-0.9 -5.4zM802 465.7l6.2 1.8l0.9 5.4l-5.3 3.6l-6.3 -1.9l-0.9 -5.4zM819.5 463.1l6.3 1.9l0.9 5.4l-5.4 3.5l-6.2 -1.9l-0.9 -5.3zM837.1 460.6l6.2 1.8l0.9 5.4l-5.3 3.5l-6.3 -1.8l-0.8 -5.4zM854.7 458l6.2 1.8l0.9 5.4l-5.4 3.6l-6.2 -1.9l-0.9 -5.4zM872.2 455.4l6.2 1.9l0.9 5.4l-5.3 3.5l-6.2 -1.9l-0.9 -5.3zM889.8 452.9l6.2 1.8l0.9 5.4l-5.4 3.5l-6.2 -1.8l-0.9 -5.4zM907.3 450.3l6.3 1.8l0.8 5.4l-5.3 3.6l-6.2 -1.9l-0.9 -5.4zM924.9 447.7l6.2 1.9l0.9 5.4l-5.3 3.5l-6.3 -1.8l-0.9 -5.4zM942.4 445.2l6.3 1.8l0.9 5.4l-5.4 3.5l-6.2 -1.8l-0.9 -5.4zM960 442.6l6.2 1.8l0.9 5.4l-5.3 3.6l-6.3 -1.9l-0.9 -5.4zM977.5 440l6.3 1.9l0.9 5.4l-5.4 3.5l-6.2 -1.8l-0.9 -5.4zM995.1 437.5l6.2 1.8l0.9 5.4l-5.3 3.5l-6.3 -1.8l-0.8 -5.4zM1012.6 434.9l6.3 1.9l0.9 5.3l-5.4 3.6l-6.2 -1.9l-0.9 -5.4zM1030.2 432.3l6.2 1.9l0.9 5.4l-5.3 3.5l-6.3 -1.8l-0.8 -5.4zM1047.8 429.8l6.2 1.8l0.9 5.4l-5.4 3.5l-6.2 -1.8l-0.9 -5.4zM1065.3 427.2l6.2 1.9l0.9 5.3l-5.3 3.6l-6.2 -1.9l-0.9 -5.4zM1082.9 424.6l6.2 1.9l0.9 5.4l-5.4 3.5l-6.2 -1.8l-0.9 -5.4zM1100.4 422.1l6.3 1.8l0.8 5.4l-5.3 3.5l-6.2 -1.8l-0.9 -5.4zM1118 419.5l6.2 1.9l0.9 5.3l-5.3 3.6l-6.3 -1.9l-0.9 -5.4zM1135.5 416.9l6.3 1.9l0.9 5.4l-5.4 3.5l-6.2 -1.8l-0.9 -5.4zM1153.1 414.4l6.2 1.8l0.9 5.4l-5.3 3.5l-6.3 -1.8l-0.9 -5.4zM1170.6 411.8l6.3 1.9l0.9 5.3l-5.4 3.6l-6.2 -1.9l-0.9 -5.4zM1188.2 409.2l6.2 1.9l0.9 5.4l-5.3 3.5l-6.3 -1.8l-0.8 -5.4zM1205.8 406.7l6.2 1.8l0.9 5.4l-5.4 3.5l-6.2 -1.8l-0.9 -5.4zM1223.3 404.1l6.2 1.9l0.9 5.3l-5.3 3.6l-6.2 -1.9l-0.9 -5.3zM1240.9 401.6l6.2 1.8l0.9 5.4l-5.4 3.5l-6.2 -1.8l-0.9 -5.4zM1258.4 399l6.3 1.8l0.8 5.4l-5.3 3.5l-6.2 -1.8l-0.9 -5.4zM1276 396.4l6.2 1.9l0.9 5.3l-5.3 3.6l-6.3 -1.9l-0.9 -5.3zM1293.5 393.9l6.3 1.8l0.9 5.4l-5.4 3.5l-6.2 -1.8l-0.9 -5.4zM1311.1 391.3l6.2 1.8l0.9 5.4l-5.3 3.5l-6.3 -1.8l-0.9 -5.4zM1328.6 388.7l6.3 1.9l0.9 5.3l-5.4 3.6l-6.2 -1.9l-0.9 -5.3zM1346.2 386.2l6.2 1.8l0.9 5.4l-5.3 3.5l-6.3 -1.8l-0.8 -5.4zM1363.7 383.6l6.3 1.8l0.9 5.4l-5.4 3.5l-6.2 -1.8l-0.9 -5.4zM1381.3 381l6.2 1.9l0.9 5.3l-5.3 3.6l-6.3 -1.9l-0.8 -5.3zM1398.9 378.5l6.2 1.8l0.9 5.4l-5.4 3.5l-6.2 -1.8l-0.9 -5.4zM1416.4 375.9l6.2 1.8l0.9 5.4l-5.3 3.5l-6.2 -1.8l-0.9 -5.4zM1434 373.3l6.2 1.9l0.9 5.3l-5.4 3.6l-6.2 -1.9l-0.9 -5.3zM1451.5 370.8l6.3 1.8l0.8 5.4l-5.3 3.5l-6.2 -1.8l-0.9 -5.4zM1469.1 368.2l6.2 1.8l0.9 5.4l-5.3 3.5l-6.3 -1.8l-0.9 -5.4zM1486.6 365.6l6.3 1.9l0.9 5.3l-5.4 3.6l-6.2 -1.9l-0.9 -5.3zM1504.2 363.1l6.2 1.8l0.9 5.4l-5.3 3.5l-6.3 -1.8l-0.9 -5.4zM1521.7 360.5l6.3 1.8l0.9 5.4l-5.4 3.5l-6.2 -1.8l-0.9 -5.4zM1539.3 357.9l6.2 1.9l0.9 5.3l-5.3 3.6l-6.3 -1.9l-0.8 -5.3zM1556.9 355.4l6.2 1.8l0.9 5.4l-5.4 3.5l-6.2 -1.8l-0.9 -5.4zM1574.4 352.8l6.2 1.8l0.9 5.4l-5.3 3.6l-6.2 -1.9l-0.9 -5.4zM1592 350.2l6.2 1.9l0.9 5.4l-5.4 3.5l-6.2 -1.9l-0.9 -5.3zM1609.5 347.7l6.3 1.8l0.8 5.4l-5.3 3.5l-6.2 -1.8l-0.9 -5.4zM1627.1 345.1l6.2 1.8l0.9 5.4l-5.3 3.6l-6.3 -1.9l-0.9 -5.4zM1644.6 342.5l6.3 1.9l0.9 5.4l-5.4 3.5l-6.2 -1.9l-0.9 -5.3zM1662.2 340l6.2 1.8l0.9 5.4l-5.3 3.5l-6.3 -1.8l-0.9 -5.4zM1679.7 337.4l6.3 1.8l0.9 5.4l-5.4 3.6l-6.2 -1.9l-0.9 -5.4zM1697.3 334.8l6.2 1.9l0.9 5.4l-5.3 3.5l-6.3 -1.9l-0.8 -5.3zM1714.8 332.3l6.3 1.8l0.9 5.4l-5.4 3.5l-6.2 -1.8l-0.9 -5.4zM1732.4 329.7l6.2 1.8l0.9 5.4l-5.3 3.6l-6.3 -1.9l-0.8 -5.4zM1750 327.1l6.2 1.9l0.9 5.4l-5.4 3.5l-6.2 -1.9l-0.9 -5.3zM1767.5 324.6l6.2 1.8l0.9 5.4l-5.3 3.5l-6.2 -1.8l-0.9 -5.4zM1785.1 322l6.2 1.8l0.9 5.4l-5.4 3.6l-6.2 -1.9l-0.9 -5.4zM811.4 482.7l6.3 1.8l0.9 5.4l-5.4 3.5l-6.2 -1.8l-0.9 -5.4zM829 480.1l6.2 1.9l0.9 5.3l-5.3 3.6l-6.3 -1.9l-0.9 -5.3zM846.5 477.6l6.3 1.8l0.9 5.4l-5.4 3.5l-6.2 -1.8l-0.9 -5.4zM864.1 475l6.2 1.8l0.9 5.4l-5.3 3.5l-6.3 -1.8l-0.8 -5.4zM881.7 472.4l6.2 1.9l0.9 5.3l-5.4 3.6l-6.2 -1.9l-0.9 -5.3zM899.2 469.9l6.2 1.8l0.9 5.4l-5.3 3.5l-6.2 -1.8l-0.9 -5.4zM916.8 467.3l6.2 1.8l0.9 5.4l-5.4 3.6l-6.2 -1.9l-0.9 -5.4zM934.3 464.7l6.2 1.9l0.9 5.4l-5.3 3.5l-6.2 -1.9l-0.9 -5.3zM951.9 462.2l6.2 1.8l0.9 5.4l-5.4 3.5l-6.2 -1.8l-0.9 -5.4zM969.4 459.6l6.3 1.8l0.8 5.4l-5.3 3.6l-6.2 -1.9l-0.9 -5.4zM987 457l6.2 1.9l0.9 5.4l-5.3 3.5l-6.3 -1.9l-0.9 -5.3zM1004.5 454.5l6.3 1.8l0.9 5.4l-5.4 3.5l-6.2 -1.8l-0.9 -5.4zM1022.1 451.9l6.2 1.8l0.9 5.4l-5.3 3.6l-6.3 -1.9l-0.9 -5.4zM1039.6 449.3l6.3 1.9l0.9 5.4l-5.4 3.5l-6.2 -1.9l-0.9 -5.3zM1057.2 446.8l6.2 1.8l0.9 5.4l-5.3 3.5l-6.3 -1.8l-0.8 -5.4zM1074.8 444.2l6.2 1.8l0.9 5.4l-5.4 3.6l-6.2 -1.9l-0.9 -5.4zM1092.3 441.6l6.2 1.9l0.9 5.4l-5.3 3.5l-6.2 -1.9l-0.9 -5.3zM1109.9 439.1l6.2 1.8l0.9 5.4l-5.4 3.5l-6.2 -1.8l-0.9 -5.4zM1127.4 436.5l6.3 1.8l0.8 5.4l-5.3 3.6l-6.2 -1.9l-0.9 -5.4zM1145 433.9l6.2 1.9l0.9 5.4l-5.3 3.5l-6.3 -1.8l-0.9 -5.4zM1162.5 431.4l6.3 1.8l0.9 5.4l-5.4 3.5l-6.2 -1.8l-0.9 -5.4zM1180.1 428.8l6.2 1.8l0.9 5.4l-5.3 3.6l-6.3 -1.9l-0.9 -5.4zM1197.6 426.2l6.3 1.9l0.9 5.4l-5.4 3.5l-6.2 -1.8l-0.9 -5.4zM1215.2 423.7l6.2 1.8l0.9 5.4l-5.3 3.5l-6.3 -1.8l-0.8 -5.4zM1232.8 421.1l6.2 1.9l0.9 5.3l-5.4 3.6l-6.2 -1.9l-0.9 -5.4zM1250.3 418.5l6.2 1.9l0.9 5.4l-5.3 3.5l-6.2 -1.8l-0.9 -5.4zM1267.9 416l6.2 1.8l0.9 5.4l-5.4 3.5l-6.2 -1.8l-0.9 -5.4zM1285.4 413.4l6.2 1.9l0.9 5.3l-5.3 3.6l-6.2 -1.9l-0.9 -5.4zM1303 410.8l6.2 1.9l0.9 5.4l-5.4 3.5l-6.2 -1.8l-0.9 -5.4zM1320.5 408.3l6.3 1.8l0.8 5.4l-5.3 3.5l-6.2 -1.8l-0.9 -5.4zM1338.1 405.7l6.2 1.9l0.9 5.3l-5.3 3.6l-6.3 -1.9l-0.9 -5.4zM1355.6 403.1l6.3 1.9l0.9 5.4l-5.4 3.5l-6.2 -1.8l-0.9 -5.4zM1373.2 400.6l6.2 1.8l0.9 5.4l-5.3 3.5l-6.3 -1.8l-0.9 -5.4zM1390.7 398l6.3 1.9l0.9 5.3l-5.4 3.6l-6.2 -1.9l-0.9 -5.4zM1408.3 395.4l6.2 1.9l0.9 5.4l-5.3 3.5l-6.3 -1.8l-0.8 -5.4zM1425.9 392.9l6.2 1.8l0.9 5.4l-5.4 3.5l-6.2 -1.8l-0.9 -5.4zM1443.4 390.3l6.2 1.9l0.9 5.3l-5.3 3.6l-6.2 -1.9l-0.9 -5.3zM1461 387.8l6.2 1.8l0.9 5.4l-5.4 3.5l-6.2 -1.8l-0.9 -5.4zM1478.5 385.2l6.3 1.8l0.8 5.4l-5.3 3.5l-6.2 -1.8l-0.9 -5.4zM1496.1 382.6l6.2 1.9l0.9 5.3l-5.3 3.6l-6.3 -1.9l-0.9 -5.3zM1513.6 380.1l6.3 1.8l0.9 5.4l-5.4 3.5l-6.2 -1.8l-0.9 -5.4zM1531.2 377.5l6.2 1.8l0.9 5.4l-5.3 3.5l-6.3 -1.8l-0.9 -5.4zM1548.7 374.9l6.3 1.9l0.9 5.3l-5.4 3.6l-6.2 -1.9l-0.9 -5.3zM1566.3 372.4l6.2 1.8l0.9 5.4l-5.3 3.5l-6.3 -1.8l-0.8 -5.4zM1583.9 369.8l6.2 1.8l0.9 5.4l-5.4 3.5l-6.2 -1.8l-0.9 -5.4zM1601.4 367.2l6.2 1.9l0.9 5.3l-5.3 3.6l-6.2 -1.9l-0.9 -5.3zM1619 364.7l6.2 1.8l0.9 5.4l-5.4 3.5l-6.2 -1.8l-0.9 -5.4zM1636.5 362.1l6.2 1.8l0.9 5.4l-5.3 3.5l-6.2 -1.8l-0.9 -5.4zM1654.1 359.5l6.2 1.9l0.9 5.3l-5.4 3.6l-6.2 -1.9l-0.9 -5.3zM1671.6 357l6.3 1.8l0.8 5.4l-5.3 3.5l-6.2 -1.8l-0.9 -5.4zM1689.2 354.4l6.2 1.8l0.9 5.4l-5.3 3.5l-6.3 -1.8l-0.9 -5.4zM1706.7 351.8l6.3 1.9l0.9 5.3l-5.4 3.6l-6.2 -1.9l-0.9 -5.3zM1724.3 349.3l6.2 1.8l0.9 5.4l-5.3 3.5l-6.3 -1.8l-0.9 -5.4zM1741.8 346.7l6.3 1.8l0.9 5.4l-5.4 3.5l-6.2 -1.8l-0.9 -5.4zM1759.4 344.1l6.2 1.9l0.9 5.3l-5.3 3.6l-6.3 -1.9l-0.8 -5.3zM1777 341.6l6.2 1.8l0.9 5.4l-5.4 3.5l-6.2 -1.8l-0.9 -5.4zM1794.5 339l6.2 1.8l0.9 5.4l-5.3 3.6l-6.2 -1.9l-0.9 -5.4zM807.6 499.5l6.2 1.8l0.9 5.4l-5.3 3.5l-6.3 -1.8l-0.9 -5.4zM825.1 496.9l6.3 1.9l0.8 5.3l-5.3 3.6l-6.2 -1.9l-0.9 -5.3zM842.7 494.4l6.2 1.8l0.9 5.4l-5.3 3.5l-6.3 -1.8l-0.9 -5.4zM860.2 491.8l6.3 1.8l0.9 5.4l-5.4 3.5l-6.2 -1.8l-0.9 -5.4zM877.8 489.2l6.2 1.9l0.9 5.3l-5.3 3.6l-6.3 -1.9l-0.9 -5.3zM895.3 486.7l6.3 1.8l0.9 5.4l-5.4 3.5l-6.2 -1.8l-0.9 -5.4zM912.9 484.1l6.2 1.8l0.9 5.4l-5.3 3.5l-6.3 -1.8l-0.8 -5.4zM930.5 481.5l6.2 1.9l0.9 5.3l-5.4 3.6l-6.2 -1.9l-0.9 -5.3zM948 479l6.2 1.8l0.9 5.4l-5.3 3.5l-6.2 -1.8l-0.9 -5.4zM965.6 476.4l6.2 1.8l0.9 5.4l-5.4 3.5l-6.2 -1.8l-0.9 -5.4zM983.1 473.8l6.3 1.9l0.8 5.3l-5.3 3.6l-6.2 -1.9l-0.9 -5.3zM1000.7 471.3l6.2 1.8l0.9 5.4l-5.3 3.5l-6.3 -1.8l-0.9 -5.4zM1018.2 468.7l6.3 1.8l0.9 5.4l-5.4 3.5l-6.2 -1.8l-0.9 -5.4zM1035.8 466.1l6.2 1.9l0.9 5.3l-5.3 3.6l-6.3 -1.9l-0.9 -5.3zM1053.3 463.6l6.3 1.8l0.9 5.4l-5.4 3.5l-6.2 -1.8l-0.9 -5.4zM1070.9 461l6.2 1.8l0.9 5.4l-5.3 3.5l-6.3 -1.8l-0.8 -5.4zM1088.5 458.4l6.2 1.9l0.9 5.3l-5.4 3.6l-6.2 -1.9l-0.9 -5.3zM1106 455.9l6.2 1.8l0.9 5.4l-5.3 3.5l-6.2 -1.8l-0.9 -5.4zM1123.6 453.3l6.2 1.8l0.9 5.4l-5.4 3.6l-6.2 -1.9l-0.9 -5.4zM1141.1 450.7l6.3 1.9l0.8 5.4l-5.3 3.5l-6.2 -1.9l-0.9 -5.3zM1158.7 448.2l6.2 1.8l0.9 5.4l-5.3 3.5l-6.3 -1.8l-0.9 -5.4zM1176.2 445.6l6.3 1.8l0.8 5.4l-5.3 3.6l-6.2 -1.9l-0.9 -5.4zM1193.8 443l6.2 1.9l0.9 5.4l-5.3 3.5l-6.3 -1.9l-0.9 -5.3zM1211.3 440.5l6.3 1.8l0.9 5.4l-5.4 3.5l-6.2 -1.8l-0.9 -5.4zM1228.9 437.9l6.2 1.8l0.9 5.4l-5.3 3.6l-6.3 -1.9l-0.9 -5.4zM1246.4 435.3l6.3 1.9l0.9 5.4l-5.4 3.5l-6.2 -1.9l-0.9 -5.3zM1264 432.8l6.2 1.8l0.9 5.4l-5.3 3.5l-6.3 -1.8l-0.8 -5.4zM1281.6 430.2l6.2 1.8l0.9 5.4l-5.4 3.6l-6.2 -1.9l-0.9 -5.4zM1299.1 427.6l6.2 1.9l0.9 5.4l-5.3 3.5l-6.2 -1.9l-0.9 -5.3zM1316.7 425.1l6.2 1.8l0.9 5.4l-5.4 3.5l-6.2 -1.8l-0.9 -5.4zM1334.2 422.5l6.3 1.8l0.8 5.4l-5.3 3.6l-6.2 -1.9l-0.9 -5.4zM1351.8 419.9l6.2 1.9l0.9 5.4l-5.3 3.5l-6.3 -1.8l-0.9 -5.4zM1369.3 417.4l6.3 1.8l0.9 5.4l-5.4 3.5l-6.2 -1.8l-0.9 -5.4zM1386.9 414.8l6.2 1.8l0.9 5.4l-5.3 3.6l-6.3 -1.9l-0.9 -5.4zM1404.4 412.2l6.3 1.9l0.9 5.4l-5.4 3.5l-6.2 -1.8l-0.9 -5.4zM1422 409.7l6.2 1.8l0.9 5.4l-5.3 3.5l-6.3 -1.8l-0.8 -5.4zM1439.6 407.1l6.2 1.9l0.9 5.3l-5.4 3.6l-6.2 -1.9l-0.9 -5.4zM1457.1 404.5l6.2 1.9l0.9 5.4l-5.3 3.5l-6.2 -1.8l-0.9 -5.4zM1474.7 402l6.2 1.8l0.9 5.4l-5.4 3.5l-6.2 -1.8l-0.9 -5.4zM1492.2 399.4l6.3 1.9l0.8 5.3l-5.3 3.6l-6.2 -1.9l-0.9 -5.4zM1509.8 396.8l6.2 1.9l0.9 5.4l-5.3 3.5l-6.3 -1.8l-0.9 -5.4zM1527.3 394.3l6.3 1.8l0.8 5.4l-5.3 3.5l-6.2 -1.8l-0.9 -5.4zM1544.9 391.7l6.2 1.9l0.9 5.3l-5.3 3.6l-6.3 -1.9l-0.9 -5.4zM1562.4 389.1l6.3 1.9l0.9 5.4l-5.4 3.5l-6.2 -1.8l-0.9 -5.4zM1580 386.6l6.2 1.8l0.9 5.4l-5.3 3.5l-6.3 -1.8l-0.9 -5.4zM1597.5 384l6.3 1.9l0.9 5.3l-5.4 3.6l-6.2 -1.9l-0.9 -5.4zM1615.1 381.4l6.2 1.9l0.9 5.4l-5.3 3.5l-6.3 -1.8l-0.8 -5.4zM1632.7 378.9l6.2 1.8l0.9 5.4l-5.4 3.5l-6.2 -1.8l-0.9 -5.4zM1650.2 376.3l6.2 1.9l0.9 5.3l-5.3 3.6l-6.2 -1.9l-0.9 -5.3zM1667.8 373.8l6.2 1.8l0.9 5.4l-5.4 3.5l-6.2 -1.8l-0.9 -5.4zM1685.3 371.2l6.3 1.8l0.8 5.4l-5.3 3.5l-6.2 -1.8l-0.9 -5.4zM1702.9 368.6l6.2 1.9l0.9 5.3l-5.3 3.6l-6.3 -1.9l-0.9 -5.3zM1720.4 366.1l6.3 1.8l0.9 5.4l-5.4 3.5l-6.2 -1.8l-0.9 -5.4zM1738 363.5l6.2 1.8l0.9 5.4l-5.3 3.5l-6.3 -1.8l-0.9 -5.4zM1755.5 360.9l6.3 1.9l0.9 5.3l-5.4 3.6l-6.2 -1.9l-0.9 -5.3zM1773.1 358.4l6.2 1.8l0.9 5.4l-5.3 3.5l-6.3 -1.8l-0.8 -5.4zM1790.7 355.8l6.2 1.8l0.9 5.4l-5.4 3.5l-6.2 -1.8l-0.9 -5.4zM817 516.5l6.2 1.8l0.9 5.4l-5.3 3.5l-6.2 -1.8l-0.9 -5.4zM834.6 513.9l6.2 1.9l0.9 5.3l-5.4 3.6l-6.2 -1.9l-0.9 -5.4zM852.1 511.3l6.3 1.9l0.8 5.4l-5.3 3.5l-6.2 -1.8l-0.9 -5.4zM869.7 508.8l6.2 1.8l0.9 5.4l-5.3 3.5l-6.3 -1.8l-0.9 -5.4zM887.2 506.2l6.3 1.9l0.9 5.3l-5.4 3.6l-6.2 -1.9l-0.9 -5.4zM904.8 503.6l6.2 1.9l0.9 5.4l-5.3 3.5l-6.3 -1.8l-0.9 -5.4zM922.3 501.1l6.3 1.8l0.9 5.4l-5.4 3.5l-6.2 -1.8l-0.9 -5.4zM939.9 498.5l6.2 1.9l0.9 5.3l-5.3 3.6l-6.3 -1.9l-0.8 -5.4zM957.5 495.9l6.2 1.9l0.9 5.4l-5.4 3.5l-6.2 -1.8l-0.9 -5.4zM975 493.4l6.2 1.8l0.9 5.4l-5.3 3.5l-6.2 -1.8l-0.9 -5.4zM992.6 490.8l6.2 1.9l0.9 5.3l-5.4 3.6l-6.2 -1.9l-0.9 -5.3zM1010.1 488.3l6.3 1.8l0.8 5.4l-5.3 3.5l-6.2 -1.8l-0.9 -5.4zM1027.7 485.7l6.2 1.8l0.9 5.4l-5.3 3.5l-6.3 -1.8l-0.9 -5.4zM1045.2 483.1l6.3 1.9l0.9 5.3l-5.4 3.6l-6.2 -1.9l-0.9 -5.3zM1062.8 480.6l6.2 1.8l0.9 5.4l-5.3 3.5l-6.3 -1.8l-0.9 -5.4zM1080.3 478l6.3 1.8l0.9 5.4l-5.4 3.5l-6.2 -1.8l-0.9 -5.4zM1097.9 475.4l6.2 1.9l0.9 5.3l-5.3 3.6l-6.3 -1.9l-0.8 -5.3zM1115.5 472.9l6.2 1.8l0.9 5.4l-5.4 3.5l-6.2 -1.8l-0.9 -5.4zM1133 470.3l6.2 1.8l0.9 5.4l-5.3 3.5l-6.3 -1.8l-0.8 -5.4zM1150.6 467.7l6.2 1.9l0.9 5.3l-5.4 3.6l-6.2 -1.9l-0.9 -5.3zM1168.1 465.2l6.2 1.8l0.9 5.4l-5.3 3.5l-6.2 -1.8l-0.9 -5.4zM1185.7 462.6l6.2 1.8l0.9 5.4l-5.4 3.5l-6.2 -1.8l-0.9 -5.4zM1203.2 460l6.3 1.9l0.8 5.3l-5.3 3.6l-6.2 -1.9l-0.9 -5.3zM1220.8 457.5l6.2 1.8l0.9 5.4l-5.3 3.5l-6.3 -1.8l-0.9 -5.4zM1238.3 454.9l6.3 1.8l0.9 5.4l-5.4 3.5l-6.2 -1.8l-0.9 -5.4zM1255.9 452.3l6.2 1.9l0.9 5.3l-5.3 3.6l-6.3 -1.9l-0.9 -5.3zM1273.4 449.8l6.3 1.8l0.9 5.4l-5.4 3.5l-6.2 -1.8l-0.9 -5.4zM1291 447.2l6.2 1.8l0.9 5.4l-5.3 3.5l-6.3 -1.8l-0.8 -5.4zM1308.6 444.6l6.2 1.9l0.9 5.3l-5.4 3.6l-6.2 -1.9l-0.9 -5.3zM1326.1 442.1l6.2 1.8l0.9 5.4l-5.3 3.5l-6.2 -1.8l-0.9 -5.4zM1343.7 439.5l6.2 1.8l0.9 5.4l-5.4 3.6l-6.2 -1.9l-0.9 -5.4zM1361.2 436.9l6.3 1.9l0.8 5.4l-5.3 3.5l-6.2 -1.9l-0.9 -5.3zM1378.8 434.4l6.2 1.8l0.9 5.4l-5.3 3.5l-6.3 -1.8l-0.9 -5.4zM1396.3 431.8l6.3 1.8l0.9 5.4l-5.4 3.6l-6.2 -1.9l-0.9 -5.4zM1413.9 429.2l6.2 1.9l0.9 5.4l-5.3 3.5l-6.3 -1.9l-0.9 -5.3zM1431.4 426.7l6.3 1.8l0.9 5.4l-5.4 3.5l-6.2 -1.8l-0.9 -5.4zM1449 424.1l6.2 1.8l0.9 5.4l-5.3 3.6l-6.3 -1.9l-0.8 -5.4zM1466.6 421.5l6.2 1.9l0.9 5.4l-5.4 3.5l-6.2 -1.9l-0.9 -5.3zM1484.1 419l6.2 1.8l0.9 5.4l-5.3 3.5l-6.3 -1.8l-0.8 -5.4zM1501.7 416.4l6.2 1.8l0.9 5.4l-5.4 3.6l-6.2 -1.9l-0.9 -5.4zM1519.2 413.8l6.2 1.9l0.9 5.4l-5.3 3.5l-6.2 -1.9l-0.9 -5.3zM1536.8 411.3l6.2 1.8l0.9 5.4l-5.4 3.5l-6.2 -1.8l-0.9 -5.4zM1554.3 408.7l6.3 1.8l0.8 5.4l-5.3 3.6l-6.2 -1.9l-0.9 -5.4zM1571.9 406.1l6.2 1.9l0.9 5.4l-5.3 3.5l-6.3 -1.8l-0.9 -5.4zM1589.4 403.6l6.3 1.8l0.9 5.4l-5.4 3.5l-6.2 -1.8l-0.9 -5.4zM1607 401l6.2 1.8l0.9 5.4l-5.3 3.6l-6.3 -1.9l-0.9 -5.4zM1624.5 398.4l6.3 1.9l0.9 5.4l-5.4 3.5l-6.2 -1.8l-0.9 -5.4zM1642.1 395.9l6.2 1.8l0.9 5.4l-5.3 3.5l-6.3 -1.8l-0.8 -5.4zM1659.7 393.3l6.2 1.9l0.9 5.3l-5.4 3.6l-6.2 -1.9l-0.9 -5.4zM1677.2 390.7l6.2 1.9l0.9 5.4l-5.3 3.5l-6.2 -1.8l-0.9 -5.4zM1694.8 388.2l6.2 1.8l0.9 5.4l-5.4 3.5l-6.2 -1.8l-0.9 -5.4zM1712.3 385.6l6.3 1.9l0.8 5.3l-5.3 3.6l-6.2 -1.9l-0.9 -5.4zM1729.9 383l6.2 1.9l0.9 5.4l-5.3 3.5l-6.3 -1.8l-0.9 -5.4zM1747.4 380.5l6.3 1.8l0.9 5.4l-5.4 3.5l-6.2 -1.8l-0.9 -5.4zM1765 377.9l6.2 1.9l0.9 5.3l-5.3 3.6l-6.3 -1.9l-0.9 -5.4zM1782.5 375.3l6.3 1.9l0.9 5.4l-5.4 3.5l-6.2 -1.8l-0.9 -5.4zM1800.1 372.8l6.2 1.8l0.9 5.4l-5.3 3.5l-6.3 -1.8l-0.8 -5.4zM813.2 533.3l6.2 1.8l0.9 5.4l-5.4 3.5l-6.2 -1.8l-0.9 -5.4zM830.7 530.7l6.2 1.8l0.9 5.4l-5.3 3.6l-6.2 -1.9l-0.9 -5.4zM848.3 528.1l6.2 1.9l0.9 5.4l-5.4 3.5l-6.2 -1.9l-0.9 -5.3zM865.8 525.6l6.3 1.8l0.8 5.4l-5.3 3.5l-6.2 -1.8l-0.9 -5.4zM883.4 523l6.2 1.8l0.9 5.4l-5.3 3.6l-6.3 -1.9l-0.9 -5.4zM900.9 520.4l6.3 1.9l0.9 5.4l-5.4 3.5l-6.2 -1.8l-0.9 -5.4zM918.5 517.9l6.2 1.8l0.9 5.4l-5.3 3.5l-6.3 -1.8l-0.9 -5.4zM936 515.3l6.3 1.8l0.9 5.4l-5.4 3.6l-6.2 -1.9l-0.9 -5.4zM953.6 512.7l6.2 1.9l0.9 5.4l-5.3 3.5l-6.3 -1.8l-0.8 -5.4zM971.2 510.2l6.2 1.8l0.9 5.4l-5.4 3.5l-6.2 -1.8l-0.9 -5.4zM988.7 507.6l6.2 1.9l0.9 5.3l-5.3 3.6l-6.2 -1.9l-0.9 -5.4zM1006.3 505l6.2 1.9l0.9 5.4l-5.4 3.5l-6.2 -1.8l-0.9 -5.4zM1023.8 502.5l6.3 1.8l0.8 5.4l-5.3 3.5l-6.2 -1.8l-0.9 -5.4zM1041.4 499.9l6.2 1.9l0.9 5.3l-5.4 3.6l-6.2 -1.9l-0.9 -5.4zM1058.9 497.3l6.3 1.9l0.8 5.4l-5.3 3.5l-6.2 -1.8l-0.9 -5.4zM1076.5 494.8l6.2 1.8l0.9 5.4l-5.3 3.5l-6.3 -1.8l-0.9 -5.4zM1094 492.2l6.3 1.9l0.9 5.3l-5.4 3.6l-6.2 -1.9l-0.9 -5.4zM1111.6 489.6l6.2 1.9l0.9 5.4l-5.3 3.5l-6.3 -1.8l-0.9 -5.4zM1129.1 487.1l6.3 1.8l0.9 5.4l-5.4 3.5l-6.2 -1.8l-0.9 -5.4zM1146.7 484.5l6.2 1.9l0.9 5.3l-5.3 3.6l-6.3 -1.9l-0.8 -5.4zM1164.3 481.9l6.2 1.9l0.9 5.4l-5.4 3.5l-6.2 -1.8l-0.9 -5.4zM1181.8 479.4l6.2 1.8l0.9 5.4l-5.3 3.5l-6.2 -1.8l-0.9 -5.4zM1199.4 476.8l6.2 1.9l0.9 5.3l-5.4 3.6l-6.2 -1.9l-0.9 -5.3zM1216.9 474.3l6.3 1.8l0.8 5.4l-5.3 3.5l-6.2 -1.8l-0.9 -5.4zM1234.5 471.7l6.2 1.8l0.9 5.4l-5.3 3.5l-6.3 -1.8l-0.9 -5.4zM1252 469.1l6.3 1.9l0.9 5.3l-5.4 3.6l-6.2 -1.9l-0.9 -5.3zM1269.6 466.6l6.2 1.8l0.9 5.4l-5.3 3.5l-6.3 -1.8l-0.9 -5.4zM1287.1 464l6.3 1.8l0.9 5.4l-5.4 3.5l-6.2 -1.8l-0.9 -5.4zM1304.7 461.4l6.2 1.9l0.9 5.3l-5.3 3.6l-6.3 -1.9l-0.8 -5.3zM1322.3 458.9l6.2 1.8l0.9 5.4l-5.4 3.5l-6.2 -1.8l-0.9 -5.4zM1339.8 456.3l6.2 1.8l0.9 5.4l-5.3 3.5l-6.2 -1.8l-0.9 -5.4zM1357.4 453.7l6.2 1.9l0.9 5.3l-5.4 3.6l-6.2 -1.9l-0.9 -5.3zM1374.9 451.2l6.3 1.8l0.8 5.4l-5.3 3.5l-6.2 -1.8l-0.9 -5.4zM1392.5 448.6l6.2 1.8l0.9 5.4l-5.4 3.5l-6.2 -1.8l-0.9 -5.4zM1410 446l6.3 1.9l0.8 5.3l-5.3 3.6l-6.2 -1.9l-0.9 -5.3zM1427.6 443.5l6.2 1.8l0.9 5.4l-5.3 3.5l-6.3 -1.8l-0.9 -5.4zM1445.1 440.9l6.3 1.8l0.9 5.4l-5.4 3.5l-6.2 -1.8l-0.9 -5.4zM1462.7 438.3l6.2 1.9l0.9 5.3l-5.3 3.6l-6.3 -1.9l-0.9 -5.3zM1480.2 435.8l6.3 1.8l0.9 5.4l-5.4 3.5l-6.2 -1.8l-0.9 -5.4zM1497.8 433.2l6.2 1.8l0.9 5.4l-5.3 3.5l-6.3 -1.8l-0.8 -5.4zM1515.4 430.6l6.2 1.9l0.9 5.3l-5.4 3.6l-6.2 -1.9l-0.9 -5.3zM1532.9 428.1l6.2 1.8l0.9 5.4l-5.3 3.5l-6.2 -1.8l-0.9 -5.4zM1550.5 425.5l6.2 1.8l0.9 5.4l-5.4 3.6l-6.2 -1.9l-0.9 -5.4zM1568 422.9l6.3 1.9l0.8 5.4l-5.3 3.5l-6.2 -1.9l-0.9 -5.3zM1585.6 420.4l6.2 1.8l0.9 5.4l-5.3 3.5l-6.3 -1.8l-0.9 -5.4zM1603.1 417.8l6.3 1.8l0.9 5.4l-5.4 3.6l-6.2 -1.9l-0.9 -5.4zM1620.7 415.2l6.2 1.9l0.9 5.4l-5.3 3.5l-6.3 -1.9l-0.9 -5.3zM1638.2 412.7l6.3 1.8l0.9 5.4l-5.4 3.5l-6.2 -1.8l-0.9 -5.4zM1655.8 410.1l6.2 1.8l0.9 5.4l-5.3 3.6l-6.3 -1.9l-0.8 -5.4zM1673.4 407.5l6.2 1.9l0.9 5.4l-5.4 3.5l-6.2 -1.9l-0.9 -5.3zM1690.9 405l6.2 1.8l0.9 5.4l-5.3 3.5l-6.2 -1.8l-0.9 -5.4zM1708.5 402.4l6.2 1.8l0.9 5.4l-5.4 3.6l-6.2 -1.9l-0.9 -5.4zM1726 399.8l6.3 1.9l0.8 5.4l-5.3 3.5l-6.2 -1.9l-0.9 -5.3zM1743.6 397.3l6.2 1.8l0.9 5.4l-5.4 3.5l-6.2 -1.8l-0.9 -5.4zM1761.1 394.7l6.3 1.8l0.8 5.4l-5.3 3.6l-6.2 -1.9l-0.9 -5.4zM1778.7 392.1l6.2 1.9l0.9 5.4l-5.3 3.5l-6.3 -1.8l-0.9 -5.4zM1796.2 389.6l6.3 1.8l0.9 5.4l-5.4 3.5l-6.2 -1.8l-0.9 -5.4zM822.6 550.3l6.2 1.8l0.9 5.4l-5.3 3.5l-6.3 -1.8l-0.8 -5.4zM840.2 547.7l6.2 1.8l0.9 5.4l-5.4 3.5l-6.2 -1.8l-0.9 -5.4zM857.7 545.1l6.2 1.9l0.9 5.3l-5.3 3.6l-6.2 -1.9l-0.9 -5.3zM875.3 542.6l6.2 1.8l0.9 5.4l-5.4 3.5l-6.2 -1.8l-0.9 -5.4zM892.8 540l6.3 1.8l0.8 5.4l-5.3 3.6l-6.2 -1.9l-0.9 -5.4zM910.4 537.4l6.2 1.9l0.9 5.4l-5.3 3.5l-6.3 -1.9l-0.9 -5.3zM927.9 534.9l6.3 1.8l0.9 5.4l-5.4 3.5l-6.2 -1.8l-0.9 -5.4zM945.5 532.3l6.2 1.8l0.9 5.4l-5.3 3.6l-6.3 -1.9l-0.9 -5.4zM963 529.7l6.3 1.9l0.9 5.4l-5.4 3.5l-6.2 -1.9l-0.9 -5.3zM980.6 527.2l6.2 1.8l0.9 5.4l-5.3 3.5l-6.3 -1.8l-0.8 -5.4zM998.1 524.6l6.3 1.8l0.9 5.4l-5.4 3.6l-6.2 -1.9l-0.9 -5.4zM1015.7 522l6.2 1.9l0.9 5.4l-5.3 3.5l-6.3 -1.9l-0.8 -5.3zM1033.3 519.5l6.2 1.8l0.9 5.4l-5.4 3.5l-6.2 -1.8l-0.9 -5.4zM1050.8 516.9l6.2 1.8l0.9 5.4l-5.3 3.6l-6.2 -1.9l-0.9 -5.4zM1068.4 514.3l6.2 1.9l0.9 5.4l-5.4 3.5l-6.2 -1.9l-0.9 -5.3zM1085.9 511.8l6.3 1.8l0.8 5.4l-5.3 3.5l-6.2 -1.8l-0.9 -5.4zM1103.5 509.2l6.2 1.8l0.9 5.4l-5.3 3.6l-6.3 -1.9l-0.9 -5.4zM1121 506.6l6.3 1.9l0.9 5.4l-5.4 3.5l-6.2 -1.8l-0.9 -5.4zM1138.6 504.1l6.2 1.8l0.9 5.4l-5.3 3.5l-6.3 -1.8l-0.9 -5.4zM1156.1 501.5l6.3 1.8l0.9 5.4l-5.4 3.6l-6.2 -1.9l-0.9 -5.4zM1173.7 498.9l6.2 1.9l0.9 5.4l-5.3 3.5l-6.3 -1.8l-0.8 -5.4zM1191.3 496.4l6.2 1.8l0.9 5.4l-5.4 3.5l-6.2 -1.8l-0.9 -5.4zM1208.8 493.8l6.2 1.9l0.9 5.3l-5.3 3.6l-6.2 -1.9l-0.9 -5.4zM1226.4 491.2l6.2 1.9l0.9 5.4l-5.4 3.5l-6.2 -1.8l-0.9 -5.4zM1243.9 488.7l6.3 1.8l0.8 5.4l-5.3 3.5l-6.2 -1.8l-0.9 -5.4zM1261.5 486.1l6.2 1.9l0.9 5.3l-5.3 3.6l-6.3 -1.9l-0.9 -5.4zM1279 483.5l6.3 1.9l0.9 5.4l-5.4 3.5l-6.2 -1.8l-0.9 -5.4zM1296.6 481l6.2 1.8l0.9 5.4l-5.3 3.5l-6.3 -1.8l-0.9 -5.4zM1314.1 478.4l6.3 1.9l0.9 5.3l-5.4 3.6l-6.2 -1.9l-0.9 -5.4zM1331.7 475.8l6.2 1.9l0.9 5.4l-5.3 3.5l-6.3 -1.8l-0.8 -5.4zM1349.2 473.3l6.3 1.8l0.9 5.4l-5.4 3.5l-6.2 -1.8l-0.9 -5.4zM1366.8 470.7l6.2 1.9l0.9 5.3l-5.3 3.6l-6.3 -1.9l-0.8 -5.4zM1384.4 468.1l6.2 1.9l0.9 5.4l-5.4 3.5l-6.2 -1.8l-0.9 -5.4zM1401.9 465.6l6.2 1.8l0.9 5.4l-5.3 3.5l-6.2 -1.8l-0.9 -5.4zM1419.5 463l6.2 1.9l0.9 5.3l-5.4 3.6l-6.2 -1.9l-0.9 -5.3zM1437 460.5l6.3 1.8l0.8 5.4l-5.3 3.5l-6.2 -1.8l-0.9 -5.4zM1454.6 457.9l6.2 1.8l0.9 5.4l-5.3 3.5l-6.3 -1.8l-0.9 -5.4zM1472.1 455.3l6.3 1.9l0.9 5.3l-5.4 3.6l-6.2 -1.9l-0.9 -5.3zM1489.7 452.8l6.2 1.8l0.9 5.4l-5.3 3.5l-6.3 -1.8l-0.9 -5.4zM1507.2 450.2l6.3 1.8l0.9 5.4l-5.4 3.5l-6.2 -1.8l-0.9 -5.4zM1524.8 447.6l6.2 1.9l0.9 5.3l-5.3 3.6l-6.3 -1.9l-0.8 -5.3zM1542.4 445.1l6.2 1.8l0.9 5.4l-5.4 3.5l-6.2 -1.8l-0.9 -5.4zM1559.9 442.5l6.2 1.8l0.9 5.4l-5.3 3.5l-6.2 -1.8l-0.9 -5.4zM1577.5 439.9l6.2 1.9l0.9 5.3l-5.4 3.6l-6.2 -1.9l-0.9 -5.3zM1595 437.4l6.3 1.8l0.8 5.4l-5.3 3.5l-6.2 -1.8l-0.9 -5.4zM1612.6 434.8l6.2 1.8l0.9 5.4l-5.3 3.5l-6.3 -1.8l-0.9 -5.4zM1630.1 432.2l6.3 1.9l0.9 5.3l-5.4 3.6l-6.2 -1.9l-0.9 -5.3zM1647.7 429.7l6.2 1.8l0.9 5.4l-5.3 3.5l-6.3 -1.8l-0.9 -5.4zM1665.2 427.1l6.3 1.8l0.9 5.4l-5.4 3.5l-6.2 -1.8l-0.9 -5.4zM1682.8 424.5l6.2 1.9l0.9 5.3l-5.3 3.6l-6.3 -1.9l-0.8 -5.3zM1700.3 422l6.3 1.8l0.9 5.4l-5.4 3.5l-6.2 -1.8l-0.9 -5.4zM1717.9 419.4l6.2 1.8l0.9 5.4l-5.3 3.5l-6.3 -1.8l-0.8 -5.4zM1735.5 416.8l6.2 1.9l0.9 5.3l-5.4 3.6l-6.2 -1.9l-0.9 -5.3zM1753 414.3l6.2 1.8l0.9 5.4l-5.3 3.5l-6.2 -1.8l-0.9 -5.4zM1770.6 411.7l6.2 1.8l0.9 5.4l-5.4 3.6l-6.2 -1.9l-0.9 -5.4zM1788.1 409.1l6.3 1.9l0.8 5.4l-5.3 3.5l-6.2 -1.9l-0.9 -5.3zM1805.7 406.6l6.2 1.8l0.9 5.4l-5.3 3.5l-6.3 -1.8l-0.9 -5.4zM818.7 567.1l6.3 1.8l0.9 5.4l-5.4 3.5l-6.2 -1.8l-0.9 -5.4zM836.3 564.5l6.2 1.8l0.9 5.4l-5.3 3.5l-6.3 -1.8l-0.8 -5.4zM853.9 561.9l6.2 1.9l0.9 5.3l-5.4 3.6l-6.2 -1.9l-0.9 -5.3zM871.4 559.4l6.2 1.8l0.9 5.4l-5.3 3.5l-6.2 -1.8l-0.9 -5.4zM889 556.8l6.2 1.8l0.9 5.4l-5.4 3.5l-6.2 -1.8l-0.9 -5.4zM906.5 554.2l6.2 1.9l0.9 5.3l-5.3 3.6l-6.2 -1.9l-0.9 -5.3zM924.1 551.7l6.2 1.8l0.9 5.4l-5.4 3.5l-6.2 -1.8l-0.9 -5.4zM941.6 549.1l6.3 1.8l0.8 5.4l-5.3 3.5l-6.2 -1.8l-0.9 -5.4zM959.2 546.5l6.2 1.9l0.9 5.3l-5.3 3.6l-6.3 -1.9l-0.9 -5.3zM976.7 544l6.3 1.8l0.9 5.4l-5.4 3.5l-6.2 -1.8l-0.9 -5.4zM994.3 541.4l6.2 1.8l0.9 5.4l-5.3 3.5l-6.3 -1.8l-0.9 -5.4zM1011.8 538.8l6.3 1.9l0.9 5.3l-5.4 3.6l-6.2 -1.9l-0.9 -5.3zM1029.4 536.3l6.2 1.8l0.9 5.4l-5.3 3.5l-6.3 -1.8l-0.8 -5.4zM1047 533.7l6.2 1.8l0.9 5.4l-5.4 3.5l-6.2 -1.8l-0.9 -5.4zM1064.5 531.1l6.2 1.9l0.9 5.3l-5.3 3.6l-6.2 -1.9l-0.9 -5.3zM1082.1 528.6l6.2 1.8l0.9 5.4l-5.4 3.5l-6.2 -1.8l-0.9 -5.4zM1099.6 526l6.3 1.8l0.8 5.4l-5.3 3.6l-6.2 -1.9l-0.9 -5.4zM1117.2 523.4l6.2 1.9l0.9 5.4l-5.3 3.5l-6.3 -1.9l-0.9 -5.3zM1134.7 520.9l6.3 1.8l0.9 5.4l-5.4 3.5l-6.2 -1.8l-0.9 -5.4zM1152.3 518.3l6.2 1.8l0.9 5.4l-5.3 3.6l-6.3 -1.9l-0.9 -5.4zM1169.8 515.7l6.3 1.9l0.9 5.4l-5.4 3.5l-6.2 -1.9l-0.9 -5.3zM1187.4 513.2l6.2 1.8l0.9 5.4l-5.3 3.5l-6.3 -1.8l-0.8 -5.4zM1205 510.6l6.2 1.8l0.9 5.4l-5.4 3.6l-6.2 -1.9l-0.9 -5.4zM1222.5 508l6.2 1.9l0.9 5.4l-5.3 3.5l-6.2 -1.9l-0.9 -5.3zM1240.1 505.5l6.2 1.8l0.9 5.4l-5.4 3.5l-6.2 -1.8l-0.9 -5.4zM1257.6 502.9l6.2 1.8l0.9 5.4l-5.3 3.6l-6.2 -1.9l-0.9 -5.4zM1275.2 500.3l6.2 1.9l0.9 5.4l-5.4 3.5l-6.2 -1.9l-0.9 -5.3zM1292.7 497.8l6.3 1.8l0.8 5.4l-5.3 3.5l-6.2 -1.8l-0.9 -5.4zM1310.3 495.2l6.2 1.8l0.9 5.4l-5.3 3.6l-6.3 -1.9l-0.9 -5.4zM1327.8 492.6l6.3 1.9l0.9 5.4l-5.4 3.5l-6.2 -1.8l-0.9 -5.4zM1345.4 490.1l6.2 1.8l0.9 5.4l-5.3 3.5l-6.3 -1.8l-0.9 -5.4zM1362.9 487.5l6.3 1.8l0.9 5.4l-5.4 3.6l-6.2 -1.9l-0.9 -5.4zM1380.5 484.9l6.2 1.9l0.9 5.4l-5.3 3.5l-6.3 -1.8l-0.8 -5.4zM1398.1 482.4l6.2 1.8l0.9 5.4l-5.4 3.5l-6.2 -1.8l-0.9 -5.4zM1415.6 479.8l6.2 1.9l0.9 5.3l-5.3 3.6l-6.2 -1.9l-0.9 -5.4zM1433.2 477.2l6.2 1.9l0.9 5.4l-5.4 3.5l-6.2 -1.8l-0.9 -5.4zM1450.7 474.7l6.3 1.8l0.8 5.4l-5.3 3.5l-6.2 -1.8l-0.9 -5.4zM1468.3 472.1l6.2 1.9l0.9 5.3l-5.3 3.6l-6.3 -1.9l-0.9 -5.4zM1485.8 469.5l6.3 1.9l0.9 5.4l-5.4 3.5l-6.2 -1.8l-0.9 -5.4zM1503.4 467l6.2 1.8l0.9 5.4l-5.3 3.5l-6.3 -1.8l-0.9 -5.4zM1520.9 464.4l6.3 1.9l0.9 5.3l-5.4 3.6l-6.2 -1.9l-0.9 -5.4zM1538.5 461.8l6.2 1.9l0.9 5.4l-5.3 3.5l-6.3 -1.8l-0.8 -5.4zM1556.1 459.3l6.2 1.8l0.9 5.4l-5.4 3.5l-6.2 -1.8l-0.9 -5.4zM1573.6 456.7l6.2 1.9l0.9 5.3l-5.3 3.6l-6.2 -1.9l-0.9 -5.4zM1591.2 454.1l6.2 1.9l0.9 5.4l-5.4 3.5l-6.2 -1.8l-0.9 -5.4zM1608.7 451.6l6.2 1.8l0.9 5.4l-5.3 3.5l-6.2 -1.8l-0.9 -5.4zM1626.3 449l6.2 1.9l0.9 5.3l-5.4 3.6l-6.2 -1.9l-0.9 -5.3zM1643.8 446.5l6.3 1.8l0.8 5.4l-5.3 3.5l-6.2 -1.8l-0.9 -5.4zM1661.4 443.9l6.2 1.8l0.9 5.4l-5.3 3.5l-6.3 -1.8l-0.9 -5.4zM1678.9 441.3l6.3 1.9l0.9 5.3l-5.4 3.6l-6.2 -1.9l-0.9 -5.3zM1696.5 438.8l6.2 1.8l0.9 5.4l-5.3 3.5l-6.3 -1.8l-0.9 -5.4zM1714 436.2l6.3 1.8l0.9 5.4l-5.4 3.5l-6.2 -1.8l-0.9 -5.4zM1731.6 433.6l6.2 1.9l0.9 5.3l-5.3 3.6l-6.3 -1.9l-0.8 -5.3zM1749.2 431.1l6.2 1.8l0.9 5.4l-5.4 3.5l-6.2 -1.8l-0.9 -5.4zM1766.7 428.5l6.2 1.8l0.9 5.4l-5.3 3.5l-6.2 -1.8l-0.9 -5.4zM1784.3 425.9l6.2 1.9l0.9 5.3l-5.4 3.6l-6.2 -1.9l-0.9 -5.3zM1801.8 423.4l6.3 1.8l0.8 5.4l-5.3 3.5l-6.2 -1.8l-0.9 -5.4zM828.2 584l6.2 1.9l0.9 5.4l-5.3 3.5l-6.3 -1.8l-0.9 -5.4zM845.7 581.5l6.3 1.8l0.9 5.4l-5.4 3.5l-6.2 -1.8l-0.9 -5.4zM863.3 578.9l6.2 1.9l0.9 5.3l-5.3 3.6l-6.3 -1.9l-0.9 -5.4zM880.8 576.3l6.3 1.9l0.9 5.4l-5.4 3.5l-6.2 -1.8l-0.9 -5.4zM898.4 573.8l6.2 1.8l0.9 5.4l-5.3 3.5l-6.3 -1.8l-0.8 -5.4zM916 571.2l6.2 1.9l0.9 5.3l-5.4 3.6l-6.2 -1.9l-0.9 -5.4zM933.5 568.6l6.2 1.9l0.9 5.4l-5.3 3.5l-6.2 -1.8l-0.9 -5.4zM951.1 566.1l6.2 1.8l0.9 5.4l-5.4 3.5l-6.2 -1.8l-0.9 -5.4zM968.6 563.5l6.3 1.9l0.8 5.3l-5.3 3.6l-6.2 -1.9l-0.9 -5.3zM986.2 561l6.2 1.8l0.9 5.4l-5.3 3.5l-6.3 -1.8l-0.9 -5.4zM1003.7 558.4l6.3 1.8l0.9 5.4l-5.4 3.5l-6.2 -1.8l-0.9 -5.4zM1021.3 555.8l6.2 1.9l0.9 5.3l-5.3 3.6l-6.3 -1.9l-0.9 -5.3zM1038.8 553.3l6.3 1.8l0.9 5.4l-5.4 3.5l-6.2 -1.8l-0.9 -5.4zM1056.4 550.7l6.2 1.8l0.9 5.4l-5.3 3.5l-6.3 -1.8l-0.8 -5.4zM1074 548.1l6.2 1.9l0.9 5.3l-5.4 3.6l-6.2 -1.9l-0.9 -5.3zM1091.5 545.6l6.2 1.8l0.9 5.4l-5.3 3.5l-6.2 -1.8l-0.9 -5.4zM1109.1 543l6.2 1.8l0.9 5.4l-5.4 3.5l-6.2 -1.8l-0.9 -5.4zM1126.6 540.4l6.3 1.9l0.8 5.3l-5.3 3.6l-6.2 -1.9l-0.9 -5.3zM1144.2 537.9l6.2 1.8l0.9 5.4l-5.3 3.5l-6.3 -1.8l-0.9 -5.4zM1161.7 535.3l6.3 1.8l0.8 5.4l-5.3 3.5l-6.2 -1.8l-0.9 -5.4zM1179.3 532.7l6.2 1.9l0.9 5.3l-5.3 3.6l-6.3 -1.9l-0.9 -5.3zM1196.8 530.2l6.3 1.8l0.9 5.4l-5.4 3.5l-6.2 -1.8l-0.9 -5.4zM1214.4 527.6l6.2 1.8l0.9 5.4l-5.3 3.5l-6.3 -1.8l-0.9 -5.4zM1231.9 525l6.3 1.9l0.9 5.3l-5.4 3.6l-6.2 -1.9l-0.9 -5.3zM1249.5 522.5l6.2 1.8l0.9 5.4l-5.3 3.5l-6.3 -1.8l-0.8 -5.4zM1267.1 519.9l6.2 1.8l0.9 5.4l-5.4 3.5l-6.2 -1.8l-0.9 -5.4zM1284.6 517.3l6.2 1.9l0.9 5.3l-5.3 3.6l-6.2 -1.9l-0.9 -5.3zM1302.2 514.8l6.2 1.8l0.9 5.4l-5.4 3.5l-6.2 -1.8l-0.9 -5.4zM1319.7 512.2l6.3 1.8l0.8 5.4l-5.3 3.6l-6.2 -1.9l-0.9 -5.4zM1337.3 509.6l6.2 1.9l0.9 5.4l-5.3 3.5l-6.3 -1.9l-0.9 -5.3zM1354.8 507.1l6.3 1.8l0.9 5.4l-5.4 3.5l-6.2 -1.8l-0.9 -5.4zM1372.4 504.5l6.2 1.8l0.9 5.4l-5.3 3.6l-6.3 -1.9l-0.9 -5.4zM1389.9 501.9l6.3 1.9l0.9 5.4l-5.4 3.5l-6.2 -1.9l-0.9 -5.3zM1407.5 499.4l6.2 1.8l0.9 5.4l-5.3 3.5l-6.3 -1.8l-0.8 -5.4zM1425.1 496.8l6.2 1.8l0.9 5.4l-5.4 3.6l-6.2 -1.9l-0.9 -5.4zM1442.6 494.2l6.2 1.9l0.9 5.4l-5.3 3.5l-6.2 -1.9l-0.9 -5.3zM1460.2 491.7l6.2 1.8l0.9 5.4l-5.4 3.5l-6.2 -1.8l-0.9 -5.4zM1477.7 489.1l6.3 1.8l0.8 5.4l-5.3 3.6l-6.2 -1.9l-0.9 -5.4zM1495.3 486.5l6.2 1.9l0.9 5.4l-5.3 3.5l-6.3 -1.9l-0.9 -5.3zM1512.8 484l6.3 1.8l0.8 5.4l-5.3 3.5l-6.2 -1.8l-0.9 -5.4zM1530.4 481.4l6.2 1.8l0.9 5.4l-5.3 3.6l-6.3 -1.9l-0.9 -5.4zM1547.9 478.8l6.3 1.9l0.9 5.4l-5.4 3.5l-6.2 -1.8l-0.9 -5.4zM1565.5 476.3l6.2 1.8l0.9 5.4l-5.3 3.5l-6.3 -1.8l-0.9 -5.4zM1583 473.7l6.3 1.8l0.9 5.4l-5.4 3.6l-6.2 -1.9l-0.9 -5.4zM1600.6 471.1l6.2 1.9l0.9 5.4l-5.3 3.5l-6.3 -1.8l-0.8 -5.4zM1618.2 468.6l6.2 1.8l0.9 5.4l-5.4 3.5l-6.2 -1.8l-0.9 -5.4zM1635.7 466l6.2 1.9l0.9 5.3l-5.3 3.6l-6.2 -1.9l-0.9 -5.4zM1653.3 463.4l6.2 1.9l0.9 5.4l-5.4 3.5l-6.2 -1.8l-0.9 -5.4zM1670.8 460.9l6.3 1.8l0.8 5.4l-5.3 3.5l-6.2 -1.8l-0.9 -5.4zM1688.4 458.3l6.2 1.9l0.9 5.3l-5.3 3.6l-6.3 -1.9l-0.9 -5.4zM1705.9 455.7l6.3 1.9l0.9 5.4l-5.4 3.5l-6.2 -1.8l-0.9 -5.4zM1723.5 453.2l6.2 1.8l0.9 5.4l-5.3 3.5l-6.3 -1.8l-0.9 -5.4zM1741 450.6l6.3 1.9l0.9 5.3l-5.4 3.6l-6.2 -1.9l-0.9 -5.4zM1758.6 448l6.2 1.9l0.9 5.4l-5.3 3.5l-6.3 -1.8l-0.8 -5.4zM1776.2 445.5l6.2 1.8l0.9 5.4l-5.4 3.5l-6.2 -1.8l-0.9 -5.4zM1793.7 442.9l6.2 1.9l0.9 5.3l-5.3 3.6l-6.2 -1.9l-0.9 -5.4zM1811.3 440.3l6.2 1.9l0.9 5.4l-5.4 3.5l-6.2 -1.8l-0.9 -5.4zM824.3 600.8l6.3 1.9l0.8 5.4l-5.3 3.5l-6.2 -1.9l-0.9 -5.3zM841.9 598.3l6.2 1.8l0.9 5.4l-5.3 3.5l-6.3 -1.8l-0.9 -5.4zM859.4 595.7l6.3 1.8l0.9 5.4l-5.4 3.6l-6.2 -1.9l-0.9 -5.4zM877 593.1l6.2 1.9l0.9 5.4l-5.3 3.5l-6.3 -1.8l-0.9 -5.4zM894.5 590.6l6.3 1.8l0.9 5.4l-5.4 3.5l-6.2 -1.8l-0.9 -5.4zM912.1 588l6.2 1.8l0.9 5.4l-5.3 3.6l-6.3 -1.9l-0.8 -5.4zM929.7 585.4l6.2 1.9l0.9 5.4l-5.4 3.5l-6.2 -1.8l-0.9 -5.4zM947.2 582.9l6.2 1.8l0.9 5.4l-5.3 3.5l-6.2 -1.8l-0.9 -5.4zM964.8 580.3l6.2 1.9l0.9 5.3l-5.4 3.6l-6.2 -1.9l-0.9 -5.4zM982.3 577.7l6.3 1.9l0.8 5.4l-5.3 3.5l-6.2 -1.8l-0.9 -5.4zM999.9 575.2l6.2 1.8l0.9 5.4l-5.3 3.5l-6.3 -1.8l-0.9 -5.4zM1017.4 572.6l6.3 1.9l0.9 5.3l-5.4 3.6l-6.2 -1.9l-0.9 -5.4zM1035 570l6.2 1.9l0.9 5.4l-5.3 3.5l-6.3 -1.8l-0.9 -5.4zM1052.5 567.5l6.3 1.8l0.9 5.4l-5.4 3.5l-6.2 -1.8l-0.9 -5.4zM1070.1 564.9l6.2 1.9l0.9 5.3l-5.3 3.6l-6.3 -1.9l-0.8 -5.4zM1087.7 562.3l6.2 1.9l0.9 5.4l-5.4 3.5l-6.2 -1.8l-0.9 -5.4zM1105.2 559.8l6.2 1.8l0.9 5.4l-5.3 3.5l-6.3 -1.8l-0.8 -5.4zM1122.8 557.2l6.2 1.9l0.9 5.3l-5.4 3.6l-6.2 -1.9l-0.9 -5.4zM1140.3 554.6l6.2 1.9l0.9 5.4l-5.3 3.5l-6.2 -1.8l-0.9 -5.4zM1157.9 552.1l6.2 1.8l0.9 5.4l-5.4 3.5l-6.2 -1.8l-0.9 -5.4zM1175.4 549.5l6.3 1.9l0.8 5.3l-5.3 3.6l-6.2 -1.9l-0.9 -5.3zM1193 547l6.2 1.8l0.9 5.4l-5.3 3.5l-6.3 -1.8l-0.9 -5.4zM1210.5 544.4l6.3 1.8l0.9 5.4l-5.4 3.5l-6.2 -1.8l-0.9 -5.4zM1228.1 541.8l6.2 1.9l0.9 5.3l-5.3 3.6l-6.3 -1.9l-0.9 -5.3zM1245.6 539.3l6.3 1.8l0.9 5.4l-5.4 3.5l-6.2 -1.8l-0.9 -5.4zM1263.2 536.7l6.2 1.8l0.9 5.4l-5.3 3.5l-6.3 -1.8l-0.8 -5.4zM1280.8 534.1l6.2 1.9l0.9 5.3l-5.4 3.6l-6.2 -1.9l-0.9 -5.3zM1298.3 531.6l6.2 1.8l0.9 5.4l-5.3 3.5l-6.2 -1.8l-0.9 -5.4zM1315.9 529l6.2 1.8l0.9 5.4l-5.4 3.5l-6.2 -1.8l-0.9 -5.4zM1333.4 526.4l6.3 1.9l0.8 5.3l-5.3 3.6l-6.2 -1.9l-0.9 -5.3zM1351 523.9l6.2 1.8l0.9 5.4l-5.3 3.5l-6.3 -1.8l-0.9 -5.4zM1368.5 521.3l6.3 1.8l0.9 5.4l-5.4 3.5l-6.2 -1.8l-0.9 -5.4zM1386.1 518.7l6.2 1.9l0.9 5.3l-5.3 3.6l-6.3 -1.9l-0.9 -5.3zM1403.6 516.2l6.3 1.8l0.9 5.4l-5.4 3.5l-6.2 -1.8l-0.9 -5.4zM1421.2 513.6l6.2 1.8l0.9 5.4l-5.3 3.5l-6.3 -1.8l-0.8 -5.4zM1438.8 511l6.2 1.9l0.9 5.3l-5.4 3.6l-6.2 -1.9l-0.9 -5.3zM1456.3 508.5l6.2 1.8l0.9 5.4l-5.3 3.5l-6.3 -1.8l-0.8 -5.4zM1473.9 505.9l6.2 1.8l0.9 5.4l-5.4 3.5l-6.2 -1.8l-0.9 -5.4zM1491.4 503.3l6.2 1.9l0.9 5.3l-5.3 3.6l-6.2 -1.9l-0.9 -5.3zM1509 500.8l6.2 1.8l0.9 5.4l-5.4 3.5l-6.2 -1.8l-0.9 -5.4zM1526.5 498.2l6.3 1.8l0.8 5.4l-5.3 3.6l-6.2 -1.9l-0.9 -5.4zM1544.1 495.6l6.2 1.9l0.9 5.4l-5.3 3.5l-6.3 -1.9l-0.9 -5.3zM1561.6 493.1l6.3 1.8l0.9 5.4l-5.4 3.5l-6.2 -1.8l-0.9 -5.4zM1579.2 490.5l6.2 1.8l0.9 5.4l-5.3 3.6l-6.3 -1.9l-0.9 -5.4zM1596.7 487.9l6.3 1.9l0.9 5.4l-5.4 3.5l-6.2 -1.9l-0.9 -5.3zM1614.3 485.4l6.2 1.8l0.9 5.4l-5.3 3.5l-6.3 -1.8l-0.8 -5.4zM1631.9 482.8l6.2 1.8l0.9 5.4l-5.4 3.6l-6.2 -1.9l-0.9 -5.4zM1649.4 480.2l6.2 1.9l0.9 5.4l-5.3 3.5l-6.2 -1.9l-0.9 -5.3zM1667 477.7l6.2 1.8l0.9 5.4l-5.4 3.5l-6.2 -1.8l-0.9 -5.4zM1684.5 475.1l6.3 1.8l0.8 5.4l-5.3 3.6l-6.2 -1.9l-0.9 -5.4zM1702.1 472.5l6.2 1.9l0.9 5.4l-5.3 3.5l-6.3 -1.9l-0.9 -5.3zM1719.6 470l6.3 1.8l0.9 5.4l-5.4 3.5l-6.2 -1.8l-0.9 -5.4zM1737.2 467.4l6.2 1.8l0.9 5.4l-5.3 3.6l-6.3 -1.9l-0.9 -5.4zM1754.7 464.8l6.3 1.9l0.9 5.4l-5.4 3.5l-6.2 -1.8l-0.9 -5.4zM1772.3 462.3l6.2 1.8l0.9 5.4l-5.3 3.5l-6.3 -1.8l-0.8 -5.4zM1789.9 459.7l6.2 1.8l0.9 5.4l-5.4 3.6l-6.2 -1.9l-0.9 -5.4zM1807.4 457.1l6.2 1.9l0.9 5.4l-5.3 3.5l-6.3 -1.8l-0.8 -5.4zM833.8 617.8l6.2 1.9l0.9 5.3l-5.4 3.6l-6.2 -1.9l-0.9 -5.3zM851.3 615.3l6.3 1.8l0.8 5.4l-5.3 3.5l-6.2 -1.8l-0.9 -5.4zM868.9 612.7l6.2 1.8l0.9 5.4l-5.3 3.6l-6.3 -1.9l-0.9 -5.4zM886.4 610.1l6.3 1.9l0.9 5.4l-5.4 3.5l-6.2 -1.9l-0.9 -5.3zM904 607.6l6.2 1.8l0.9 5.4l-5.3 3.5l-6.3 -1.8l-0.9 -5.4zM921.5 605l6.3 1.8l0.9 5.4l-5.4 3.6l-6.2 -1.9l-0.9 -5.4zM939.1 602.4l6.2 1.9l0.9 5.4l-5.3 3.5l-6.3 -1.9l-0.8 -5.3zM956.7 599.9l6.2 1.8l0.9 5.4l-5.4 3.5l-6.2 -1.8l-0.9 -5.4zM974.2 597.3l6.2 1.8l0.9 5.4l-5.3 3.6l-6.2 -1.9l-0.9 -5.4zM991.8 594.7l6.2 1.9l0.9 5.4l-5.4 3.5l-6.2 -1.9l-0.9 -5.3zM1009.3 592.2l6.3 1.8l0.8 5.4l-5.3 3.5l-6.2 -1.8l-0.9 -5.4zM1026.9 589.6l6.2 1.8l0.9 5.4l-5.4 3.6l-6.2 -1.9l-0.9 -5.4zM1044.4 587l6.3 1.9l0.8 5.4l-5.3 3.5l-6.2 -1.9l-0.9 -5.3zM1062 584.5l6.2 1.8l0.9 5.4l-5.3 3.5l-6.3 -1.8l-0.9 -5.4zM1079.5 581.9l6.3 1.8l0.9 5.4l-5.4 3.6l-6.2 -1.9l-0.9 -5.4zM1097.1 579.3l6.2 1.9l0.9 5.4l-5.3 3.5l-6.3 -1.8l-0.9 -5.4zM1114.6 576.8l6.3 1.8l0.9 5.4l-5.4 3.5l-6.2 -1.8l-0.9 -5.4zM1132.2 574.2l6.2 1.8l0.9 5.4l-5.3 3.6l-6.3 -1.9l-0.8 -5.4zM1149.8 571.6l6.2 1.9l0.9 5.4l-5.4 3.5l-6.2 -1.8l-0.9 -5.4zM1167.3 569.1l6.2 1.8l0.9 5.4l-5.3 3.5l-6.2 -1.8l-0.9 -5.4zM1184.9 566.5l6.2 1.9l0.9 5.3l-5.4 3.6l-6.2 -1.9l-0.9 -5.4zM1202.4 563.9l6.3 1.9l0.8 5.4l-5.3 3.5l-6.2 -1.8l-0.9 -5.4zM1220 561.4l6.2 1.8l0.9 5.4l-5.3 3.5l-6.3 -1.8l-0.9 -5.4zM1237.5 558.8l6.3 1.9l0.9 5.3l-5.4 3.6l-6.2 -1.9l-0.9 -5.4zM1255.1 556.2l6.2 1.9l0.9 5.4l-5.3 3.5l-6.3 -1.8l-0.9 -5.4zM1272.6 553.7l6.3 1.8l0.9 5.4l-5.4 3.5l-6.2 -1.8l-0.9 -5.4zM1290.2 551.1l6.2 1.9l0.9 5.3l-5.3 3.6l-6.3 -1.9l-0.8 -5.4zM1307.8 548.5l6.2 1.9l0.9 5.4l-5.4 3.5l-6.2 -1.8l-0.9 -5.4zM1325.3 546l6.2 1.8l0.9 5.4l-5.3 3.5l-6.2 -1.8l-0.9 -5.4zM1342.9 543.4l6.2 1.9l0.9 5.3l-5.4 3.6l-6.2 -1.9l-0.9 -5.4zM1360.4 540.8l6.3 1.9l0.8 5.4l-5.3 3.5l-6.2 -1.8l-0.9 -5.4zM1378 538.3l6.2 1.8l0.9 5.4l-5.4 3.5l-6.2 -1.8l-0.9 -5.4zM1395.5 535.7l6.3 1.9l0.8 5.3l-5.3 3.6l-6.2 -1.9l-0.9 -5.3zM1413.1 533.2l6.2 1.8l0.9 5.4l-5.3 3.5l-6.3 -1.8l-0.9 -5.4zM1430.6 530.6l6.3 1.8l0.9 5.4l-5.4 3.5l-6.2 -1.8l-0.9 -5.4zM1448.2 528l6.2 1.9l0.9 5.3l-5.3 3.6l-6.3 -1.9l-0.9 -5.3zM1465.7 525.5l6.3 1.8l0.9 5.4l-5.4 3.5l-6.2 -1.8l-0.9 -5.4zM1483.3 522.9l6.2 1.8l0.9 5.4l-5.3 3.5l-6.3 -1.8l-0.8 -5.4zM1500.9 520.3l6.2 1.9l0.9 5.3l-5.4 3.6l-6.2 -1.9l-0.9 -5.3zM1518.4 517.8l6.2 1.8l0.9 5.4l-5.3 3.5l-6.2 -1.8l-0.9 -5.4zM1536 515.2l6.2 1.8l0.9 5.4l-5.4 3.5l-6.2 -1.8l-0.9 -5.4zM1553.5 512.6l6.3 1.9l0.8 5.3l-5.3 3.6l-6.2 -1.9l-0.9 -5.3zM1571.1 510.1l6.2 1.8l0.9 5.4l-5.3 3.5l-6.3 -1.8l-0.9 -5.4zM1588.6 507.5l6.3 1.8l0.9 5.4l-5.4 3.5l-6.2 -1.8l-0.9 -5.4zM1606.2 504.9l6.2 1.9l0.9 5.3l-5.3 3.6l-6.3 -1.9l-0.9 -5.3zM1623.7 502.4l6.3 1.8l0.9 5.4l-5.4 3.5l-6.2 -1.8l-0.9 -5.4zM1641.3 499.8l6.2 1.8l0.9 5.4l-5.3 3.5l-6.3 -1.8l-0.8 -5.4zM1658.9 497.2l6.2 1.9l0.9 5.3l-5.4 3.6l-6.2 -1.9l-0.9 -5.3zM1676.4 494.7l6.2 1.8l0.9 5.4l-5.3 3.5l-6.2 -1.8l-0.9 -5.4zM1694 492.1l6.2 1.8l0.9 5.4l-5.4 3.5l-6.2 -1.8l-0.9 -5.4zM1711.5 489.5l6.3 1.9l0.8 5.3l-5.3 3.6l-6.2 -1.9l-0.9 -5.3zM1729.1 487l6.2 1.8l0.9 5.4l-5.4 3.5l-6.2 -1.8l-0.9 -5.4zM1746.6 484.4l6.3 1.8l0.8 5.4l-5.3 3.6l-6.2 -1.9l-0.9 -5.4zM1764.2 481.8l6.2 1.9l0.9 5.4l-5.3 3.5l-6.3 -1.9l-0.9 -5.3zM1781.7 479.3l6.3 1.8l0.9 5.4l-5.4 3.5l-6.2 -1.8l-0.9 -5.4zM1799.3 476.7l6.2 1.8l0.9 5.4l-5.3 3.6l-6.3 -1.9l-0.9 -5.4zM1816.8 474.1l6.3 1.9l0.9 5.4l-5.4 3.5l-6.2 -1.9l-0.9 -5.3zM829.9 634.6l6.2 1.9l0.9 5.3l-5.3 3.6l-6.2 -1.9l-0.9 -5.3zM847.5 632.1l6.2 1.8l0.9 5.4l-5.4 3.5l-6.2 -1.8l-0.9 -5.4zM865 629.5l6.3 1.8l0.8 5.4l-5.3 3.5l-6.2 -1.8l-0.9 -5.4zM882.6 626.9l6.2 1.9l0.9 5.3l-5.3 3.6l-6.3 -1.9l-0.9 -5.3zM900.1 624.4l6.3 1.8l0.9 5.4l-5.4 3.5l-6.2 -1.8l-0.9 -5.4zM917.7 621.8l6.2 1.8l0.9 5.4l-5.3 3.5l-6.3 -1.8l-0.9 -5.4zM935.2 619.2l6.3 1.9l0.9 5.3l-5.4 3.6l-6.2 -1.9l-0.9 -5.3zM952.8 616.7l6.2 1.8l0.9 5.4l-5.3 3.5l-6.3 -1.8l-0.8 -5.4zM970.3 614.1l6.3 1.8l0.9 5.4l-5.4 3.5l-6.2 -1.8l-0.9 -5.4zM987.9 611.5l6.2 1.9l0.9 5.3l-5.3 3.6l-6.3 -1.9l-0.8 -5.3zM1005.5 609l6.2 1.8l0.9 5.4l-5.4 3.5l-6.2 -1.8l-0.9 -5.4zM1023 606.4l6.2 1.8l0.9 5.4l-5.3 3.5l-6.2 -1.8l-0.9 -5.4zM1040.6 603.8l6.2 1.9l0.9 5.3l-5.4 3.6l-6.2 -1.9l-0.9 -5.3zM1058.1 601.3l6.3 1.8l0.8 5.4l-5.3 3.5l-6.2 -1.8l-0.9 -5.4zM1075.7 598.7l6.2 1.8l0.9 5.4l-5.3 3.6l-6.3 -1.9l-0.9 -5.4zM1093.2 596.1l6.3 1.9l0.9 5.4l-5.4 3.5l-6.2 -1.9l-0.9 -5.3zM1110.8 593.6l6.2 1.8l0.9 5.4l-5.3 3.5l-6.3 -1.8l-0.9 -5.4zM1128.3 591l6.3 1.8l0.9 5.4l-5.4 3.6l-6.2 -1.9l-0.9 -5.4zM1145.9 588.4l6.2 1.9l0.9 5.4l-5.3 3.5l-6.3 -1.9l-0.8 -5.3zM1163.5 585.9l6.2 1.8l0.9 5.4l-5.4 3.5l-6.2 -1.8l-0.9 -5.4zM1181 583.3l6.2 1.8l0.9 5.4l-5.3 3.6l-6.2 -1.9l-0.9 -5.4zM1198.6 580.7l6.2 1.9l0.9 5.4l-5.4 3.5l-6.2 -1.9l-0.9 -5.3zM1216.1 578.2l6.3 1.8l0.8 5.4l-5.3 3.5l-6.2 -1.8l-0.9 -5.4zM1233.7 575.6l6.2 1.8l0.9 5.4l-5.3 3.6l-6.3 -1.9l-0.9 -5.4zM1251.2 573l6.3 1.9l0.9 5.4l-5.4 3.5l-6.2 -1.9l-0.9 -5.3zM1268.8 570.5l6.2 1.8l0.9 5.4l-5.3 3.5l-6.3 -1.8l-0.9 -5.4zM1286.3 567.9l6.3 1.8l0.9 5.4l-5.4 3.6l-6.2 -1.9l-0.9 -5.4zM1303.9 565.3l6.2 1.9l0.9 5.4l-5.3 3.5l-6.3 -1.8l-0.8 -5.4zM1321.4 562.8l6.3 1.8l0.9 5.4l-5.4 3.5l-6.2 -1.8l-0.9 -5.4zM1339 560.2l6.2 1.8l0.9 5.4l-5.3 3.6l-6.3 -1.9l-0.8 -5.4zM1356.6 557.6l6.2 1.9l0.9 5.4l-5.4 3.5l-6.2 -1.8l-0.9 -5.4zM1374.1 555.1l6.2 1.8l0.9 5.4l-5.3 3.5l-6.2 -1.8l-0.9 -5.4zM1391.7 552.5l6.2 1.9l0.9 5.3l-5.4 3.6l-6.2 -1.9l-0.9 -5.4zM1409.2 549.9l6.3 1.9l0.8 5.4l-5.3 3.5l-6.2 -1.8l-0.9 -5.4zM1426.8 547.4l6.2 1.8l0.9 5.4l-5.3 3.5l-6.3 -1.8l-0.9 -5.4zM1444.3 544.8l6.3 1.9l0.9 5.3l-5.4 3.6l-6.2 -1.9l-0.9 -5.4zM1461.9 542.2l6.2 1.9l0.9 5.4l-5.3 3.5l-6.3 -1.8l-0.9 -5.4zM1479.4 539.7l6.3 1.8l0.9 5.4l-5.4 3.5l-6.2 -1.8l-0.9 -5.4zM1497 537.1l6.2 1.9l0.9 5.3l-5.3 3.6l-6.3 -1.9l-0.8 -5.4zM1514.6 534.5l6.2 1.9l0.9 5.4l-5.4 3.5l-6.2 -1.8l-0.9 -5.4zM1532.1 532l6.2 1.8l0.9 5.4l-5.3 3.5l-6.2 -1.8l-0.9 -5.4zM1549.7 529.4l6.2 1.9l0.9 5.3l-5.4 3.6l-6.2 -1.9l-0.9 -5.4zM1567.2 526.8l6.3 1.9l0.8 5.4l-5.3 3.5l-6.2 -1.8l-0.9 -5.4zM1584.8 524.3l6.2 1.8l0.9 5.4l-5.3 3.5l-6.3 -1.8l-0.9 -5.4zM1602.3 521.7l6.3 1.9l0.9 5.3l-5.4 3.6l-6.2 -1.9l-0.9 -5.3zM1619.9 519.2l6.2 1.8l0.9 5.4l-5.3 3.5l-6.3 -1.8l-0.9 -5.4zM1637.4 516.6l6.3 1.8l0.9 5.4l-5.4 3.5l-6.2 -1.8l-0.9 -5.4zM1655 514l6.2 1.9l0.9 5.3l-5.3 3.6l-6.3 -1.9l-0.8 -5.3zM1672.5 511.5l6.3 1.8l0.9 5.4l-5.4 3.5l-6.2 -1.8l-0.9 -5.4zM1690.1 508.9l6.2 1.8l0.9 5.4l-5.3 3.5l-6.3 -1.8l-0.8 -5.4zM1707.7 506.3l6.2 1.9l0.9 5.3l-5.4 3.6l-6.2 -1.9l-0.9 -5.3zM1725.2 503.8l6.2 1.8l0.9 5.4l-5.3 3.5l-6.2 -1.8l-0.9 -5.4zM1742.8 501.2l6.2 1.8l0.9 5.4l-5.4 3.5l-6.2 -1.8l-0.9 -5.4zM1760.3 498.6l6.3 1.9l0.8 5.3l-5.3 3.6l-6.2 -1.9l-0.9 -5.3zM1777.9 496.1l6.2 1.8l0.9 5.4l-5.3 3.5l-6.3 -1.8l-0.9 -5.4zM1795.4 493.5l6.3 1.8l0.9 5.4l-5.4 3.5l-6.2 -1.8l-0.9 -5.4zM1813 490.9l6.2 1.9l0.9 5.3l-5.3 3.6l-6.3 -1.9l-0.9 -5.3zM839.4 651.6l6.2 1.9l0.9 5.3l-5.4 3.6l-6.2 -1.9l-0.9 -5.4zM856.9 649l6.2 1.9l0.9 5.4l-5.3 3.5l-6.2 -1.8l-0.9 -5.4zM874.5 646.5l6.2 1.8l0.9 5.4l-5.4 3.5l-6.2 -1.8l-0.9 -5.4zM892 643.9l6.2 1.9l0.9 5.3l-5.3 3.6l-6.2 -1.9l-0.9 -5.4zM909.6 641.3l6.2 1.9l0.9 5.4l-5.4 3.5l-6.2 -1.8l-0.9 -5.4zM927.1 638.8l6.3 1.8l0.8 5.4l-5.3 3.5l-6.2 -1.8l-0.9 -5.4zM944.7 636.2l6.2 1.9l0.9 5.3l-5.3 3.6l-6.3 -1.9l-0.9 -5.3zM962.2 633.7l6.3 1.8l0.9 5.4l-5.4 3.5l-6.2 -1.8l-0.9 -5.4zM979.8 631.1l6.2 1.8l0.9 5.4l-5.3 3.5l-6.3 -1.8l-0.9 -5.4zM997.3 628.5l6.3 1.9l0.9 5.3l-5.4 3.6l-6.2 -1.9l-0.9 -5.3zM1014.9 626l6.2 1.8l0.9 5.4l-5.3 3.5l-6.3 -1.8l-0.8 -5.4zM1032.5 623.4l6.2 1.8l0.9 5.4l-5.4 3.5l-6.2 -1.8l-0.9 -5.4zM1050 620.8l6.2 1.9l0.9 5.3l-5.3 3.6l-6.2 -1.9l-0.9 -5.3zM1067.6 618.3l6.2 1.8l0.9 5.4l-5.4 3.5l-6.2 -1.8l-0.9 -5.4zM1085.1 615.7l6.3 1.8l0.8 5.4l-5.3 3.5l-6.2 -1.8l-0.9 -5.4zM1102.7 613.1l6.2 1.9l0.9 5.3l-5.3 3.6l-6.3 -1.9l-0.9 -5.3zM1120.2 610.6l6.3 1.8l0.9 5.4l-5.4 3.5l-6.2 -1.8l-0.9 -5.4zM1137.8 608l6.2 1.8l0.9 5.4l-5.3 3.5l-6.3 -1.8l-0.9 -5.4zM1155.3 605.4l6.3 1.9l0.9 5.3l-5.4 3.6l-6.2 -1.9l-0.9 -5.3zM1172.9 602.9l6.2 1.8l0.9 5.4l-5.3 3.5l-6.3 -1.8l-0.8 -5.4zM1190.5 600.3l6.2 1.8l0.9 5.4l-5.4 3.5l-6.2 -1.8l-0.9 -5.4zM1208 597.7l6.2 1.9l0.9 5.3l-5.3 3.6l-6.2 -1.9l-0.9 -5.3zM1225.6 595.2l6.2 1.8l0.9 5.4l-5.4 3.5l-6.2 -1.8l-0.9 -5.4zM1243.1 592.6l6.2 1.8l0.9 5.4l-5.3 3.5l-6.2 -1.8l-0.9 -5.4zM1260.7 590l6.2 1.9l0.9 5.3l-5.4 3.6l-6.2 -1.9l-0.9 -5.3zM1278.2 587.5l6.3 1.8l0.8 5.4l-5.3 3.5l-6.2 -1.8l-0.9 -5.4zM1295.8 584.9l6.2 1.8l0.9 5.4l-5.3 3.6l-6.3 -1.9l-0.9 -5.4zM1313.3 582.3l6.3 1.9l0.9 5.4l-5.4 3.5l-6.2 -1.9l-0.9 -5.3zM1330.9 579.8l6.2 1.8l0.9 5.4l-5.3 3.5l-6.3 -1.8l-0.9 -5.4zM1348.4 577.2l6.3 1.8l0.9 5.4l-5.4 3.6l-6.2 -1.9l-0.9 -5.4zM1366 574.6l6.2 1.9l0.9 5.4l-5.3 3.5l-6.3 -1.9l-0.8 -5.3zM1383.6 572.1l6.2 1.8l0.9 5.4l-5.4 3.5l-6.2 -1.8l-0.9 -5.4zM1401.1 569.5l6.2 1.8l0.9 5.4l-5.3 3.6l-6.2 -1.9l-0.9 -5.4zM1418.7 566.9l6.2 1.9l0.9 5.4l-5.4 3.5l-6.2 -1.9l-0.9 -5.3zM1436.2 564.4l6.3 1.8l0.8 5.4l-5.3 3.5l-6.2 -1.8l-0.9 -5.4zM1453.8 561.8l6.2 1.8l0.9 5.4l-5.3 3.6l-6.3 -1.9l-0.9 -5.4zM1471.3 559.2l6.3 1.9l0.9 5.4l-5.4 3.5l-6.2 -1.9l-0.9 -5.3zM1488.9 556.7l6.2 1.8l0.9 5.4l-5.3 3.5l-6.3 -1.8l-0.9 -5.4zM1506.4 554.1l6.3 1.8l0.9 5.4l-5.4 3.6l-6.2 -1.9l-0.9 -5.4zM1524 551.5l6.2 1.9l0.9 5.4l-5.3 3.5l-6.3 -1.8l-0.8 -5.4zM1541.6 549l6.2 1.8l0.9 5.4l-5.4 3.5l-6.2 -1.8l-0.9 -5.4zM1559.1 546.4l6.2 1.8l0.9 5.4l-5.3 3.6l-6.2 -1.9l-0.9 -5.4zM1576.7 543.8l6.2 1.9l0.9 5.4l-5.4 3.5l-6.2 -1.8l-0.9 -5.4zM1594.2 541.3l6.2 1.8l0.9 5.4l-5.3 3.5l-6.2 -1.8l-0.9 -5.4zM1611.8 538.7l6.2 1.9l0.9 5.3l-5.4 3.6l-6.2 -1.9l-0.9 -5.4zM1629.3 536.1l6.3 1.9l0.8 5.4l-5.3 3.5l-6.2 -1.8l-0.9 -5.4zM1646.9 533.6l6.2 1.8l0.9 5.4l-5.3 3.5l-6.3 -1.8l-0.9 -5.4zM1664.4 531l6.3 1.9l0.9 5.3l-5.4 3.6l-6.2 -1.9l-0.9 -5.4zM1682 528.4l6.2 1.9l0.9 5.4l-5.3 3.5l-6.3 -1.8l-0.9 -5.4zM1699.5 525.9l6.3 1.8l0.9 5.4l-5.4 3.5l-6.2 -1.8l-0.9 -5.4zM1717.1 523.3l6.2 1.9l0.9 5.3l-5.3 3.6l-6.3 -1.9l-0.8 -5.4zM1734.7 520.7l6.2 1.9l0.9 5.4l-5.4 3.5l-6.2 -1.8l-0.9 -5.4zM1752.2 518.2l6.2 1.8l0.9 5.4l-5.3 3.5l-6.2 -1.8l-0.9 -5.4zM1769.8 515.6l6.2 1.9l0.9 5.3l-5.4 3.6l-6.2 -1.9l-0.9 -5.4zM1787.3 513l6.3 1.9l0.8 5.4l-5.3 3.5l-6.2 -1.8l-0.9 -5.4zM1804.9 510.5l6.2 1.8l0.9 5.4l-5.3 3.5l-6.3 -1.8l-0.9 -5.4zM1822.4 507.9l6.3 1.9l0.9 5.3l-5.4 3.6l-6.2 -1.9l-0.9 -5.3zM835.5 668.4l6.2 1.8l0.9 5.4l-5.3 3.6l-6.3 -1.9l-0.9 -5.4zM853 665.8l6.3 1.9l0.9 5.4l-5.4 3.5l-6.2 -1.8l-0.9 -5.4zM870.6 663.3l6.2 1.8l0.9 5.4l-5.3 3.5l-6.3 -1.8l-0.8 -5.4zM888.2 660.7l6.2 1.8l0.9 5.4l-5.4 3.6l-6.2 -1.9l-0.9 -5.4zM905.7 658.1l6.2 1.9l0.9 5.4l-5.3 3.5l-6.2 -1.8l-0.9 -5.4zM923.3 655.6l6.2 1.8l0.9 5.4l-5.4 3.5l-6.2 -1.8l-0.9 -5.4zM940.8 653l6.3 1.9l0.8 5.3l-5.3 3.6l-6.2 -1.9l-0.9 -5.4zM958.4 650.4l6.2 1.9l0.9 5.4l-5.3 3.5l-6.3 -1.8l-0.9 -5.4zM975.9 647.9l6.3 1.8l0.9 5.4l-5.4 3.5l-6.2 -1.8l-0.9 -5.4zM993.5 645.3l6.2 1.9l0.9 5.3l-5.3 3.6l-6.3 -1.9l-0.9 -5.4zM1011 642.7l6.3 1.9l0.9 5.4l-5.4 3.5l-6.2 -1.8l-0.9 -5.4zM1028.6 640.2l6.2 1.8l0.9 5.4l-5.3 3.5l-6.3 -1.8l-0.8 -5.4zM1046.2 637.6l6.2 1.9l0.9 5.3l-5.4 3.6l-6.2 -1.9l-0.9 -5.4zM1063.7 635l6.2 1.9l0.9 5.4l-5.3 3.5l-6.2 -1.8l-0.9 -5.4zM1081.3 632.5l6.2 1.8l0.9 5.4l-5.4 3.5l-6.2 -1.8l-0.9 -5.4zM1098.8 629.9l6.3 1.9l0.8 5.3l-5.3 3.6l-6.2 -1.9l-0.9 -5.4zM1116.4 627.3l6.2 1.9l0.9 5.4l-5.3 3.5l-6.3 -1.8l-0.9 -5.4zM1133.9 624.8l6.3 1.8l0.8 5.4l-5.3 3.5l-6.2 -1.8l-0.9 -5.4zM1151.5 622.2l6.2 1.9l0.9 5.3l-5.3 3.6l-6.3 -1.9l-0.9 -5.3zM1169 619.7l6.3 1.8l0.9 5.4l-5.4 3.5l-6.2 -1.8l-0.9 -5.4zM1186.6 617.1l6.2 1.8l0.9 5.4l-5.3 3.5l-6.3 -1.8l-0.9 -5.4zM1204.1 614.5l6.3 1.9l0.9 5.3l-5.4 3.6l-6.2 -1.9l-0.9 -5.3zM1221.7 612l6.2 1.8l0.9 5.4l-5.3 3.5l-6.3 -1.8l-0.8 -5.4zM1239.3 609.4l6.2 1.8l0.9 5.4l-5.4 3.5l-6.2 -1.8l-0.9 -5.4zM1256.8 606.8l6.2 1.9l0.9 5.3l-5.3 3.6l-6.2 -1.9l-0.9 -5.3zM1274.4 604.3l6.2 1.8l0.9 5.4l-5.4 3.5l-6.2 -1.8l-0.9 -5.4zM1291.9 601.7l6.3 1.8l0.8 5.4l-5.3 3.5l-6.2 -1.8l-0.9 -5.4zM1309.5 599.1l6.2 1.9l0.9 5.3l-5.3 3.6l-6.3 -1.9l-0.9 -5.3zM1327 596.6l6.3 1.8l0.9 5.4l-5.4 3.5l-6.2 -1.8l-0.9 -5.4zM1344.6 594l6.2 1.8l0.9 5.4l-5.3 3.5l-6.3 -1.8l-0.9 -5.4zM1362.1 591.4l6.3 1.9l0.9 5.3l-5.4 3.6l-6.2 -1.9l-0.9 -5.3zM1379.7 588.9l6.2 1.8l0.9 5.4l-5.3 3.5l-6.3 -1.8l-0.8 -5.4zM1397.3 586.3l6.2 1.8l0.9 5.4l-5.4 3.5l-6.2 -1.8l-0.9 -5.4zM1414.8 583.7l6.2 1.9l0.9 5.3l-5.3 3.6l-6.2 -1.9l-0.9 -5.3zM1432.4 581.2l6.2 1.8l0.9 5.4l-5.4 3.5l-6.2 -1.8l-0.9 -5.4zM1449.9 578.6l6.3 1.8l0.8 5.4l-5.3 3.5l-6.2 -1.8l-0.9 -5.4zM1467.5 576l6.2 1.9l0.9 5.3l-5.3 3.6l-6.3 -1.9l-0.9 -5.3zM1485 573.5l6.3 1.8l0.8 5.4l-5.3 3.5l-6.2 -1.8l-0.9 -5.4zM1502.6 570.9l6.2 1.8l0.9 5.4l-5.3 3.6l-6.3 -1.9l-0.9 -5.4zM1520.1 568.3l6.3 1.9l0.9 5.4l-5.4 3.5l-6.2 -1.9l-0.9 -5.3zM1537.7 565.8l6.2 1.8l0.9 5.4l-5.3 3.5l-6.3 -1.8l-0.9 -5.4zM1555.2 563.2l6.3 1.8l0.9 5.4l-5.4 3.6l-6.2 -1.9l-0.9 -5.4zM1572.8 560.6l6.2 1.9l0.9 5.4l-5.3 3.5l-6.3 -1.9l-0.8 -5.3zM1590.4 558.1l6.2 1.8l0.9 5.4l-5.4 3.5l-6.2 -1.8l-0.9 -5.4zM1607.9 555.5l6.2 1.8l0.9 5.4l-5.3 3.6l-6.2 -1.9l-0.9 -5.4zM1625.5 552.9l6.2 1.9l0.9 5.4l-5.4 3.5l-6.2 -1.9l-0.9 -5.3zM1643 550.4l6.3 1.8l0.8 5.4l-5.3 3.5l-6.2 -1.8l-0.9 -5.4zM1660.6 547.8l6.2 1.8l0.9 5.4l-5.3 3.6l-6.3 -1.9l-0.9 -5.4zM1678.1 545.2l6.3 1.9l0.9 5.4l-5.4 3.5l-6.2 -1.9l-0.9 -5.3zM1695.7 542.7l6.2 1.8l0.9 5.4l-5.3 3.5l-6.3 -1.8l-0.9 -5.4zM1713.2 540.1l6.3 1.8l0.9 5.4l-5.4 3.6l-6.2 -1.9l-0.9 -5.4zM1730.8 537.5l6.2 1.9l0.9 5.4l-5.3 3.5l-6.3 -1.8l-0.8 -5.4zM1748.4 535l6.2 1.8l0.9 5.4l-5.4 3.5l-6.2 -1.8l-0.9 -5.4zM1765.9 532.4l6.2 1.8l0.9 5.4l-5.3 3.6l-6.2 -1.9l-0.9 -5.4zM1783.5 529.8l6.2 1.9l0.9 5.4l-5.4 3.5l-6.2 -1.8l-0.9 -5.4zM1801 527.3l6.3 1.8l0.8 5.4l-5.3 3.5l-6.2 -1.8l-0.9 -5.4zM1818.6 524.7l6.2 1.9l0.9 5.3l-5.3 3.6l-6.3 -1.9l-0.9 -5.4zM844.9 685.4l6.3 1.8l0.9 5.4l-5.4 3.6l-6.2 -1.9l-0.9 -5.4zM862.5 682.8l6.2 1.9l0.9 5.4l-5.3 3.5l-6.3 -1.9l-0.9 -5.3zM880 680.3l6.3 1.8l0.9 5.4l-5.4 3.5l-6.2 -1.8l-0.9 -5.4zM897.6 677.7l6.2 1.8l0.9 5.4l-5.3 3.6l-6.3 -1.9l-0.8 -5.4zM915.2 675.1l6.2 1.9l0.9 5.4l-5.4 3.5l-6.2 -1.9l-0.9 -5.3zM932.7 672.6l6.2 1.8l0.9 5.4l-5.3 3.5l-6.2 -1.8l-0.9 -5.4zM950.3 670l6.2 1.8l0.9 5.4l-5.4 3.6l-6.2 -1.9l-0.9 -5.4zM967.8 667.4l6.3 1.9l0.8 5.4l-5.3 3.5l-6.2 -1.9l-0.9 -5.3zM985.4 664.9l6.2 1.8l0.9 5.4l-5.3 3.5l-6.3 -1.8l-0.9 -5.4zM1002.9 662.3l6.3 1.8l0.9 5.4l-5.4 3.6l-6.2 -1.9l-0.9 -5.4zM1020.5 659.7l6.2 1.9l0.9 5.4l-5.3 3.5l-6.3 -1.9l-0.9 -5.3zM1038 657.2l6.3 1.8l0.9 5.4l-5.4 3.5l-6.2 -1.8l-0.9 -5.4zM1055.6 654.6l6.2 1.8l0.9 5.4l-5.3 3.6l-6.3 -1.9l-0.8 -5.4zM1073.2 652l6.2 1.9l0.9 5.4l-5.4 3.5l-6.2 -1.8l-0.9 -5.4zM1090.7 649.5l6.2 1.8l0.9 5.4l-5.3 3.5l-6.3 -1.8l-0.8 -5.4zM1108.3 646.9l6.2 1.8l0.9 5.4l-5.4 3.6l-6.2 -1.9l-0.9 -5.4zM1125.8 644.3l6.2 1.9l0.9 5.4l-5.3 3.5l-6.2 -1.8l-0.9 -5.4zM1143.4 641.8l6.2 1.8l0.9 5.4l-5.4 3.5l-6.2 -1.8l-0.9 -5.4zM1160.9 639.2l6.3 1.9l0.8 5.3l-5.3 3.6l-6.2 -1.9l-0.9 -5.4zM1178.5 636.6l6.2 1.9l0.9 5.4l-5.3 3.5l-6.3 -1.8l-0.9 -5.4zM1196 634.1l6.3 1.8l0.9 5.4l-5.4 3.5l-6.2 -1.8l-0.9 -5.4zM1213.6 631.5l6.2 1.9l0.9 5.3l-5.3 3.6l-6.3 -1.9l-0.9 -5.4zM1231.1 628.9l6.3 1.9l0.9 5.4l-5.4 3.5l-6.2 -1.8l-0.9 -5.4zM1248.7 626.4l6.2 1.8l0.9 5.4l-5.3 3.5l-6.3 -1.8l-0.8 -5.4zM1266.3 623.8l6.2 1.9l0.9 5.3l-5.4 3.6l-6.2 -1.9l-0.9 -5.4zM1283.8 621.2l6.2 1.9l0.9 5.4l-5.3 3.5l-6.2 -1.8l-0.9 -5.4zM1301.4 618.7l6.2 1.8l0.9 5.4l-5.4 3.5l-6.2 -1.8l-0.9 -5.4zM1318.9 616.1l6.3 1.9l0.8 5.3l-5.3 3.6l-6.2 -1.9l-0.9 -5.4zM1336.5 613.5l6.2 1.9l0.9 5.4l-5.3 3.5l-6.3 -1.8l-0.9 -5.4zM1354 611l6.3 1.8l0.9 5.4l-5.4 3.5l-6.2 -1.8l-0.9 -5.4zM1371.6 608.4l6.2 1.9l0.9 5.3l-5.3 3.6l-6.3 -1.9l-0.9 -5.3zM1389.1 605.9l6.3 1.8l0.9 5.4l-5.4 3.5l-6.2 -1.8l-0.9 -5.4zM1406.7 603.3l6.2 1.8l0.9 5.4l-5.3 3.5l-6.3 -1.8l-0.8 -5.4zM1424.3 600.7l6.2 1.9l0.9 5.3l-5.4 3.6l-6.2 -1.9l-0.9 -5.3zM1441.8 598.2l6.2 1.8l0.9 5.4l-5.3 3.5l-6.3 -1.8l-0.8 -5.4zM1459.4 595.6l6.2 1.8l0.9 5.4l-5.4 3.5l-6.2 -1.8l-0.9 -5.4zM1476.9 593l6.2 1.9l0.9 5.3l-5.3 3.6l-6.2 -1.9l-0.9 -5.3zM1494.5 590.5l6.2 1.8l0.9 5.4l-5.4 3.5l-6.2 -1.8l-0.9 -5.4zM1512 587.9l6.3 1.8l0.8 5.4l-5.3 3.5l-6.2 -1.8l-0.9 -5.4zM1529.6 585.3l6.2 1.9l0.9 5.3l-5.3 3.6l-6.3 -1.9l-0.9 -5.3zM1547.1 582.8l6.3 1.8l0.9 5.4l-5.4 3.5l-6.2 -1.8l-0.9 -5.4zM1564.7 580.2l6.2 1.8l0.9 5.4l-5.3 3.5l-6.3 -1.8l-0.9 -5.4zM1582.2 577.6l6.3 1.9l0.9 5.3l-5.4 3.6l-6.2 -1.9l-0.9 -5.3zM1599.8 575.1l6.2 1.8l0.9 5.4l-5.3 3.5l-6.3 -1.8l-0.8 -5.4zM1617.4 572.5l6.2 1.8l0.9 5.4l-5.4 3.5l-6.2 -1.8l-0.9 -5.4zM1634.9 569.9l6.2 1.9l0.9 5.3l-5.3 3.6l-6.2 -1.9l-0.9 -5.3zM1652.5 567.4l6.2 1.8l0.9 5.4l-5.4 3.5l-6.2 -1.8l-0.9 -5.4zM1670 564.8l6.3 1.8l0.8 5.4l-5.3 3.5l-6.2 -1.8l-0.9 -5.4zM1687.6 562.2l6.2 1.9l0.9 5.3l-5.3 3.6l-6.3 -1.9l-0.9 -5.3zM1705.1 559.7l6.3 1.8l0.9 5.4l-5.4 3.5l-6.2 -1.8l-0.9 -5.4zM1722.7 557.1l6.2 1.8l0.9 5.4l-5.3 3.6l-6.3 -1.9l-0.9 -5.4zM1740.2 554.5l6.3 1.9l0.9 5.4l-5.4 3.5l-6.2 -1.9l-0.9 -5.3zM1757.8 552l6.2 1.8l0.9 5.4l-5.3 3.5l-6.3 -1.8l-0.8 -5.4zM1775.4 549.4l6.2 1.8l0.9 5.4l-5.4 3.6l-6.2 -1.9l-0.9 -5.4zM1792.9 546.8l6.2 1.9l0.9 5.4l-5.3 3.5l-6.3 -1.9l-0.8 -5.3zM1810.5 544.3l6.2 1.8l0.9 5.4l-5.4 3.5l-6.2 -1.8l-0.9 -5.4zM1828 541.7l6.2 1.8l0.9 5.4l-5.3 3.6l-6.2 -1.9l-0.9 -5.4zM841.1 702.2l6.2 1.8l0.9 5.4l-5.3 3.5l-6.3 -1.8l-0.9 -5.4zM858.6 699.6l6.3 1.9l0.9 5.3l-5.4 3.6l-6.2 -1.9l-0.9 -5.3zM876.2 697.1l6.2 1.8l0.9 5.4l-5.3 3.5l-6.3 -1.8l-0.9 -5.4zM893.7 694.5l6.3 1.8l0.9 5.4l-5.4 3.5l-6.2 -1.8l-0.9 -5.4zM911.3 691.9l6.2 1.9l0.9 5.3l-5.3 3.6l-6.3 -1.9l-0.8 -5.3zM928.9 689.4l6.2 1.8l0.9 5.4l-5.4 3.5l-6.2 -1.8l-0.9 -5.4zM946.4 686.8l6.2 1.8l0.9 5.4l-5.3 3.5l-6.2 -1.8l-0.9 -5.4zM964 684.2l6.2 1.9l0.9 5.3l-5.4 3.6l-6.2 -1.9l-0.9 -5.3zM981.5 681.7l6.3 1.8l0.8 5.4l-5.3 3.5l-6.2 -1.8l-0.9 -5.4zM999.1 679.1l6.2 1.8l0.9 5.4l-5.4 3.5l-6.2 -1.8l-0.9 -5.4zM1016.6 676.5l6.3 1.9l0.8 5.3l-5.3 3.6l-6.2 -1.9l-0.9 -5.3zM1034.2 674l6.2 1.8l0.9 5.4l-5.3 3.5l-6.3 -1.8l-0.9 -5.4zM1051.7 671.4l6.3 1.8l0.9 5.4l-5.4 3.6l-6.2 -1.9l-0.9 -5.4zM1069.3 668.8l6.2 1.9l0.9 5.4l-5.3 3.5l-6.3 -1.9l-0.9 -5.3zM1086.8 666.3l6.3 1.8l0.9 5.4l-5.4 3.5l-6.2 -1.8l-0.9 -5.4zM1104.4 663.7l6.2 1.8l0.9 5.4l-5.3 3.6l-6.3 -1.9l-0.8 -5.4zM1122 661.1l6.2 1.9l0.9 5.4l-5.4 3.5l-6.2 -1.9l-0.9 -5.3zM1139.5 658.6l6.2 1.8l0.9 5.4l-5.3 3.5l-6.2 -1.8l-0.9 -5.4zM1157.1 656l6.2 1.8l0.9 5.4l-5.4 3.6l-6.2 -1.9l-0.9 -5.4zM1174.6 653.4l6.3 1.9l0.8 5.4l-5.3 3.5l-6.2 -1.9l-0.9 -5.3zM1192.2 650.9l6.2 1.8l0.9 5.4l-5.3 3.5l-6.3 -1.8l-0.9 -5.4zM1209.7 648.3l6.3 1.8l0.9 5.4l-5.4 3.6l-6.2 -1.9l-0.9 -5.4zM1227.3 645.7l6.2 1.9l0.9 5.4l-5.3 3.5l-6.3 -1.9l-0.9 -5.3zM1244.8 643.2l6.3 1.8l0.9 5.4l-5.4 3.5l-6.2 -1.8l-0.9 -5.4zM1262.4 640.6l6.2 1.8l0.9 5.4l-5.3 3.6l-6.3 -1.9l-0.8 -5.4zM1280 638l6.2 1.9l0.9 5.4l-5.4 3.5l-6.2 -1.8l-0.9 -5.4zM1297.5 635.5l6.2 1.8l0.9 5.4l-5.3 3.5l-6.2 -1.8l-0.9 -5.4zM1315.1 632.9l6.2 1.8l0.9 5.4l-5.4 3.6l-6.2 -1.9l-0.9 -5.4zM1332.6 630.3l6.3 1.9l0.8 5.4l-5.3 3.5l-6.2 -1.8l-0.9 -5.4zM1350.2 627.8l6.2 1.8l0.9 5.4l-5.4 3.5l-6.2 -1.8l-0.9 -5.4zM1367.7 625.2l6.3 1.9l0.8 5.3l-5.3 3.6l-6.2 -1.9l-0.9 -5.4zM1385.3 622.6l6.2 1.9l0.9 5.4l-5.3 3.5l-6.3 -1.8l-0.9 -5.4zM1402.8 620.1l6.3 1.8l0.9 5.4l-5.4 3.5l-6.2 -1.8l-0.9 -5.4zM1420.4 617.5l6.2 1.9l0.9 5.3l-5.3 3.6l-6.3 -1.9l-0.9 -5.4zM1437.9 614.9l6.3 1.9l0.9 5.4l-5.4 3.5l-6.2 -1.8l-0.9 -5.4zM1455.5 612.4l6.2 1.8l0.9 5.4l-5.3 3.5l-6.3 -1.8l-0.8 -5.4zM1473.1 609.8l6.2 1.9l0.9 5.3l-5.4 3.6l-6.2 -1.9l-0.9 -5.4zM1490.6 607.2l6.2 1.9l0.9 5.4l-5.3 3.5l-6.2 -1.8l-0.9 -5.4zM1508.2 604.7l6.2 1.8l0.9 5.4l-5.4 3.5l-6.2 -1.8l-0.9 -5.4zM1525.7 602.1l6.3 1.9l0.8 5.3l-5.3 3.6l-6.2 -1.9l-0.9 -5.4zM1543.3 599.5l6.2 1.9l0.9 5.4l-5.3 3.5l-6.3 -1.8l-0.9 -5.4zM1560.8 597l6.3 1.8l0.9 5.4l-5.4 3.5l-6.2 -1.8l-0.9 -5.4zM1578.4 594.4l6.2 1.9l0.9 5.3l-5.3 3.6l-6.3 -1.9l-0.9 -5.3zM1595.9 591.9l6.3 1.8l0.9 5.4l-5.4 3.5l-6.2 -1.8l-0.9 -5.4zM1613.5 589.3l6.2 1.8l0.9 5.4l-5.3 3.5l-6.3 -1.8l-0.8 -5.4zM1631.1 586.7l6.2 1.9l0.9 5.3l-5.4 3.6l-6.2 -1.9l-0.9 -5.3zM1648.6 584.2l6.2 1.8l0.9 5.4l-5.3 3.5l-6.2 -1.8l-0.9 -5.4zM1666.2 581.6l6.2 1.8l0.9 5.4l-5.4 3.5l-6.2 -1.8l-0.9 -5.4zM1683.7 579l6.3 1.9l0.8 5.3l-5.3 3.6l-6.2 -1.9l-0.9 -5.3zM1701.3 576.5l6.2 1.8l0.9 5.4l-5.4 3.5l-6.2 -1.8l-0.9 -5.4zM1718.8 573.9l6.3 1.8l0.8 5.4l-5.3 3.5l-6.2 -1.8l-0.9 -5.4zM1736.4 571.3l6.2 1.9l0.9 5.3l-5.3 3.6l-6.3 -1.9l-0.9 -5.3zM1753.9 568.8l6.3 1.8l0.9 5.4l-5.4 3.5l-6.2 -1.8l-0.9 -5.4zM1771.5 566.2l6.2 1.8l0.9 5.4l-5.3 3.5l-6.3 -1.8l-0.9 -5.4zM1789 563.6l6.3 1.9l0.9 5.3l-5.4 3.6l-6.2 -1.9l-0.9 -5.3zM1806.6 561.1l6.2 1.8l0.9 5.4l-5.3 3.5l-6.3 -1.8l-0.8 -5.4zM1824.2 558.5l6.2 1.8l0.9 5.4l-5.4 3.5l-6.2 -1.8l-0.9 -5.4zM850.5 719.2l6.3 1.8l0.8 5.4l-5.3 3.5l-6.2 -1.8l-0.9 -5.4zM868.1 716.6l6.2 1.9l0.9 5.3l-5.3 3.6l-6.3 -1.9l-0.9 -5.4zM885.6 714l6.3 1.9l0.9 5.4l-5.4 3.5l-6.2 -1.8l-0.9 -5.4zM903.2 711.5l6.2 1.8l0.9 5.4l-5.3 3.5l-6.3 -1.8l-0.9 -5.4zM920.7 708.9l6.3 1.9l0.9 5.3l-5.4 3.6l-6.2 -1.9l-0.9 -5.3zM938.3 706.4l6.2 1.8l0.9 5.4l-5.3 3.5l-6.3 -1.8l-0.8 -5.4zM955.8 703.8l6.3 1.8l0.9 5.4l-5.4 3.5l-6.2 -1.8l-0.9 -5.4zM973.4 701.2l6.2 1.9l0.9 5.3l-5.3 3.6l-6.3 -1.9l-0.8 -5.3zM991 698.7l6.2 1.8l0.9 5.4l-5.4 3.5l-6.2 -1.8l-0.9 -5.4zM1008.5 696.1l6.2 1.8l0.9 5.4l-5.3 3.5l-6.2 -1.8l-0.9 -5.4zM1026.1 693.5l6.2 1.9l0.9 5.3l-5.4 3.6l-6.2 -1.9l-0.9 -5.3zM1043.6 691l6.3 1.8l0.8 5.4l-5.3 3.5l-6.2 -1.8l-0.9 -5.4zM1061.2 688.4l6.2 1.8l0.9 5.4l-5.3 3.5l-6.3 -1.8l-0.9 -5.4zM1078.7 685.8l6.3 1.9l0.9 5.3l-5.4 3.6l-6.2 -1.9l-0.9 -5.3zM1096.3 683.3l6.2 1.8l0.9 5.4l-5.3 3.5l-6.3 -1.8l-0.9 -5.4zM1113.8 680.7l6.3 1.8l0.9 5.4l-5.4 3.5l-6.2 -1.8l-0.9 -5.4zM1131.4 678.1l6.2 1.9l0.9 5.3l-5.3 3.6l-6.3 -1.9l-0.8 -5.3zM1149 675.6l6.2 1.8l0.9 5.4l-5.4 3.5l-6.2 -1.8l-0.9 -5.4zM1166.5 673l6.2 1.8l0.9 5.4l-5.3 3.5l-6.2 -1.8l-0.9 -5.4zM1184.1 670.4l6.2 1.9l0.9 5.3l-5.4 3.6l-6.2 -1.9l-0.9 -5.3zM1201.6 667.9l6.3 1.8l0.8 5.4l-5.3 3.5l-6.2 -1.8l-0.9 -5.4zM1219.2 665.3l6.2 1.8l0.9 5.4l-5.3 3.5l-6.3 -1.8l-0.9 -5.4zM1236.7 662.7l6.3 1.9l0.9 5.3l-5.4 3.6l-6.2 -1.9l-0.9 -5.3zM1254.3 660.2l6.2 1.8l0.9 5.4l-5.3 3.5l-6.3 -1.8l-0.9 -5.4zM1271.8 657.6l6.3 1.8l0.9 5.4l-5.4 3.6l-6.2 -1.9l-0.9 -5.4zM1289.4 655l6.2 1.9l0.9 5.4l-5.3 3.5l-6.3 -1.9l-0.8 -5.3zM1306.9 652.5l6.3 1.8l0.9 5.4l-5.4 3.5l-6.2 -1.8l-0.9 -5.4zM1324.5 649.9l6.2 1.8l0.9 5.4l-5.3 3.6l-6.3 -1.9l-0.8 -5.4zM1342.1 647.3l6.2 1.9l0.9 5.4l-5.4 3.5l-6.2 -1.9l-0.9 -5.3zM1359.6 644.8l6.2 1.8l0.9 5.4l-5.3 3.5l-6.2 -1.8l-0.9 -5.4zM1377.2 642.2l6.2 1.8l0.9 5.4l-5.4 3.6l-6.2 -1.9l-0.9 -5.4zM1394.7 639.6l6.3 1.9l0.8 5.4l-5.3 3.5l-6.2 -1.9l-0.9 -5.3zM1412.3 637.1l6.2 1.8l0.9 5.4l-5.3 3.5l-6.3 -1.8l-0.9 -5.4zM1429.8 634.5l6.3 1.8l0.9 5.4l-5.4 3.6l-6.2 -1.9l-0.9 -5.4zM1447.4 631.9l6.2 1.9l0.9 5.4l-5.3 3.5l-6.3 -1.9l-0.9 -5.3zM1464.9 629.4l6.3 1.8l0.9 5.4l-5.4 3.5l-6.2 -1.8l-0.9 -5.4zM1482.5 626.8l6.2 1.8l0.9 5.4l-5.3 3.6l-6.3 -1.9l-0.8 -5.4zM1500.1 624.2l6.2 1.9l0.9 5.4l-5.4 3.5l-6.2 -1.8l-0.9 -5.4zM1517.6 621.7l6.2 1.8l0.9 5.4l-5.3 3.5l-6.2 -1.8l-0.9 -5.4zM1535.2 619.1l6.2 1.8l0.9 5.4l-5.4 3.6l-6.2 -1.9l-0.9 -5.4zM1552.7 616.5l6.3 1.9l0.8 5.4l-5.3 3.5l-6.2 -1.8l-0.9 -5.4zM1570.3 614l6.2 1.8l0.9 5.4l-5.3 3.5l-6.3 -1.8l-0.9 -5.4zM1587.8 611.4l6.3 1.9l0.9 5.3l-5.4 3.6l-6.2 -1.9l-0.9 -5.4zM1605.4 608.8l6.2 1.9l0.9 5.4l-5.3 3.5l-6.3 -1.8l-0.9 -5.4zM1622.9 606.3l6.3 1.8l0.9 5.4l-5.4 3.5l-6.2 -1.8l-0.9 -5.4zM1640.5 603.7l6.2 1.9l0.9 5.3l-5.3 3.6l-6.3 -1.9l-0.8 -5.4zM1658 601.1l6.3 1.9l0.9 5.4l-5.4 3.5l-6.2 -1.8l-0.9 -5.4zM1675.6 598.6l6.2 1.8l0.9 5.4l-5.3 3.5l-6.3 -1.8l-0.8 -5.4zM1693.2 596l6.2 1.9l0.9 5.3l-5.4 3.6l-6.2 -1.9l-0.9 -5.4zM1710.7 593.4l6.2 1.9l0.9 5.4l-5.3 3.5l-6.2 -1.8l-0.9 -5.4zM1728.3 590.9l6.2 1.8l0.9 5.4l-5.4 3.5l-6.2 -1.8l-0.9 -5.4zM1745.8 588.3l6.3 1.9l0.8 5.3l-5.3 3.6l-6.2 -1.9l-0.9 -5.4zM1763.4 585.7l6.2 1.9l0.9 5.4l-5.3 3.5l-6.3 -1.8l-0.9 -5.4zM1780.9 583.2l6.3 1.8l0.9 5.4l-5.4 3.5l-6.2 -1.8l-0.9 -5.4zM1798.5 580.6l6.2 1.9l0.9 5.3l-5.3 3.6l-6.3 -1.9l-0.9 -5.3zM1816 578.1l6.3 1.8l0.9 5.4l-5.4 3.5l-6.2 -1.8l-0.9 -5.4zM1833.6 575.5l6.2 1.8l0.9 5.4l-5.3 3.5l-6.3 -1.8l-0.8 -5.4zM846.7 736l6.2 1.8l0.9 5.4l-5.4 3.5l-6.2 -1.8l-0.9 -5.4zM864.2 733.4l6.2 1.8l0.9 5.4l-5.3 3.6l-6.2 -1.9l-0.9 -5.4zM881.8 730.8l6.2 1.9l0.9 5.4l-5.4 3.5l-6.2 -1.8l-0.9 -5.4zM899.3 728.3l6.3 1.8l0.8 5.4l-5.3 3.5l-6.2 -1.8l-0.9 -5.4zM916.9 725.7l6.2 1.9l0.9 5.3l-5.3 3.6l-6.3 -1.9l-0.9 -5.4zM934.4 723.1l6.3 1.9l0.9 5.4l-5.4 3.5l-6.2 -1.8l-0.9 -5.4zM952 720.6l6.2 1.8l0.9 5.4l-5.3 3.5l-6.3 -1.8l-0.9 -5.4zM969.5 718l6.3 1.9l0.9 5.3l-5.4 3.6l-6.2 -1.9l-0.9 -5.4zM987.1 715.4l6.2 1.9l0.9 5.4l-5.3 3.5l-6.3 -1.8l-0.8 -5.4zM1004.7 712.9l6.2 1.8l0.9 5.4l-5.4 3.5l-6.2 -1.8l-0.9 -5.4zM1022.2 710.3l6.2 1.9l0.9 5.3l-5.3 3.6l-6.2 -1.9l-0.9 -5.4zM1039.8 707.7l6.2 1.9l0.9 5.4l-5.4 3.5l-6.2 -1.8l-0.9 -5.4zM1057.3 705.2l6.3 1.8l0.8 5.4l-5.3 3.5l-6.2 -1.8l-0.9 -5.4zM1074.9 702.6l6.2 1.9l0.9 5.3l-5.3 3.6l-6.3 -1.9l-0.9 -5.4zM1092.4 700l6.3 1.9l0.9 5.4l-5.4 3.5l-6.2 -1.8l-0.9 -5.4zM1110 697.5l6.2 1.8l0.9 5.4l-5.3 3.5l-6.3 -1.8l-0.9 -5.4zM1127.5 694.9l6.3 1.9l0.9 5.3l-5.4 3.6l-6.2 -1.9l-0.9 -5.3zM1145.1 692.4l6.2 1.8l0.9 5.4l-5.3 3.5l-6.3 -1.8l-0.8 -5.4zM1162.7 689.8l6.2 1.8l0.9 5.4l-5.4 3.5l-6.2 -1.8l-0.9 -5.4zM1180.2 687.2l6.2 1.9l0.9 5.3l-5.3 3.6l-6.2 -1.9l-0.9 -5.3zM1197.8 684.7l6.2 1.8l0.9 5.4l-5.4 3.5l-6.2 -1.8l-0.9 -5.4zM1215.3 682.1l6.2 1.8l0.9 5.4l-5.3 3.5l-6.2 -1.8l-0.9 -5.4zM1232.9 679.5l6.2 1.9l0.9 5.3l-5.4 3.6l-6.2 -1.9l-0.9 -5.3zM1250.4 677l6.3 1.8l0.8 5.4l-5.3 3.5l-6.2 -1.8l-0.9 -5.4zM1268 674.4l6.2 1.8l0.9 5.4l-5.3 3.5l-6.3 -1.8l-0.9 -5.4zM1285.5 671.8l6.3 1.9l0.9 5.3l-5.4 3.6l-6.2 -1.9l-0.9 -5.3zM1303.1 669.3l6.2 1.8l0.9 5.4l-5.3 3.5l-6.3 -1.8l-0.9 -5.4zM1320.6 666.7l6.3 1.8l0.9 5.4l-5.4 3.5l-6.2 -1.8l-0.9 -5.4zM1338.2 664.1l6.2 1.9l0.9 5.3l-5.3 3.6l-6.3 -1.9l-0.8 -5.3zM1355.8 661.6l6.2 1.8l0.9 5.4l-5.4 3.5l-6.2 -1.8l-0.9 -5.4zM1373.3 659l6.2 1.8l0.9 5.4l-5.3 3.5l-6.2 -1.8l-0.9 -5.4zM1390.9 656.4l6.2 1.9l0.9 5.3l-5.4 3.6l-6.2 -1.9l-0.9 -5.3zM1408.4 653.9l6.3 1.8l0.8 5.4l-5.3 3.5l-6.2 -1.8l-0.9 -5.4zM1426 651.3l6.2 1.8l0.9 5.4l-5.3 3.5l-6.3 -1.8l-0.9 -5.4zM1443.5 648.7l6.3 1.9l0.9 5.3l-5.4 3.6l-6.2 -1.9l-0.9 -5.3zM1461.1 646.2l6.2 1.8l0.9 5.4l-5.3 3.5l-6.3 -1.8l-0.9 -5.4zM1478.6 643.6l6.3 1.8l0.9 5.4l-5.4 3.6l-6.2 -1.9l-0.9 -5.4zM1496.2 641l6.2 1.9l0.9 5.4l-5.3 3.5l-6.3 -1.9l-0.8 -5.3zM1513.8 638.5l6.2 1.8l0.9 5.4l-5.4 3.5l-6.2 -1.8l-0.9 -5.4zM1531.3 635.9l6.2 1.8l0.9 5.4l-5.3 3.6l-6.2 -1.9l-0.9 -5.4zM1548.9 633.3l6.2 1.9l0.9 5.4l-5.4 3.5l-6.2 -1.9l-0.9 -5.3zM1566.4 630.8l6.2 1.8l0.9 5.4l-5.3 3.5l-6.2 -1.8l-0.9 -5.4zM1584 628.2l6.2 1.8l0.9 5.4l-5.4 3.6l-6.2 -1.9l-0.9 -5.4zM1601.5 625.6l6.3 1.9l0.8 5.4l-5.3 3.5l-6.2 -1.9l-0.9 -5.3zM1619.1 623.1l6.2 1.8l0.9 5.4l-5.3 3.5l-6.3 -1.8l-0.9 -5.4zM1636.6 620.5l6.3 1.8l0.9 5.4l-5.4 3.6l-6.2 -1.9l-0.9 -5.4zM1654.2 617.9l6.2 1.9l0.9 5.4l-5.3 3.5l-6.3 -1.9l-0.9 -5.3zM1671.7 615.4l6.3 1.8l0.9 5.4l-5.4 3.5l-6.2 -1.8l-0.9 -5.4zM1689.3 612.8l6.2 1.8l0.9 5.4l-5.3 3.6l-6.3 -1.9l-0.8 -5.4zM1706.9 610.2l6.2 1.9l0.9 5.4l-5.4 3.5l-6.2 -1.8l-0.9 -5.4zM1724.4 607.7l6.2 1.8l0.9 5.4l-5.3 3.5l-6.2 -1.8l-0.9 -5.4zM1742 605.1l6.2 1.8l0.9 5.4l-5.4 3.6l-6.2 -1.9l-0.9 -5.4zM1759.5 602.5l6.3 1.9l0.8 5.4l-5.3 3.5l-6.2 -1.8l-0.9 -5.4zM1777.1 600l6.2 1.8l0.9 5.4l-5.3 3.5l-6.3 -1.8l-0.9 -5.4zM1794.6 597.4l6.3 1.9l0.9 5.3l-5.4 3.6l-6.2 -1.9l-0.9 -5.4zM1812.2 594.8l6.2 1.9l0.9 5.4l-5.3 3.5l-6.3 -1.8l-0.9 -5.4zM1829.7 592.3l6.3 1.8l0.9 5.4l-5.4 3.5l-6.2 -1.8l-0.9 -5.4zM856.1 753l6.2 1.8l0.9 5.4l-5.3 3.5l-6.3 -1.8l-0.8 -5.4zM873.7 750.4l6.2 1.8l0.9 5.4l-5.4 3.6l-6.2 -1.9l-0.9 -5.4zM891.2 747.8l6.2 1.9l0.9 5.4l-5.3 3.5l-6.2 -1.9l-0.9 -5.3zM908.8 745.3l6.2 1.8l0.9 5.4l-5.4 3.5l-6.2 -1.8l-0.9 -5.4zM926.3 742.7l6.3 1.8l0.8 5.4l-5.3 3.6l-6.2 -1.9l-0.9 -5.4zM943.9 740.1l6.2 1.9l0.9 5.4l-5.3 3.5l-6.3 -1.9l-0.9 -5.3zM961.4 737.6l6.3 1.8l0.9 5.4l-5.4 3.5l-6.2 -1.8l-0.9 -5.4zM979 735l6.2 1.8l0.9 5.4l-5.3 3.6l-6.3 -1.9l-0.9 -5.4zM996.5 732.4l6.3 1.9l0.9 5.4l-5.4 3.5l-6.2 -1.9l-0.9 -5.3zM1014.1 729.9l6.2 1.8l0.9 5.4l-5.3 3.5l-6.3 -1.8l-0.8 -5.4zM1031.7 727.3l6.2 1.8l0.9 5.4l-5.4 3.6l-6.2 -1.9l-0.9 -5.4zM1049.2 724.7l6.2 1.9l0.9 5.4l-5.3 3.5l-6.2 -1.8l-0.9 -5.4zM1066.8 722.2l6.2 1.8l0.9 5.4l-5.4 3.5l-6.2 -1.8l-0.9 -5.4zM1084.3 719.6l6.3 1.8l0.8 5.4l-5.3 3.6l-6.2 -1.9l-0.9 -5.4zM1101.9 717l6.2 1.9l0.9 5.4l-5.3 3.5l-6.3 -1.8l-0.9 -5.4zM1119.4 714.5l6.3 1.8l0.8 5.4l-5.3 3.5l-6.2 -1.8l-0.9 -5.4zM1137 711.9l6.2 1.9l0.9 5.3l-5.3 3.6l-6.3 -1.9l-0.9 -5.4zM1154.5 709.3l6.3 1.9l0.9 5.4l-5.4 3.5l-6.2 -1.8l-0.9 -5.4zM1172.1 706.8l6.2 1.8l0.9 5.4l-5.3 3.5l-6.3 -1.8l-0.9 -5.4zM1189.6 704.2l6.3 1.9l0.9 5.3l-5.4 3.6l-6.2 -1.9l-0.9 -5.4zM1207.2 701.6l6.2 1.9l0.9 5.4l-5.3 3.5l-6.3 -1.8l-0.8 -5.4zM1224.8 699.1l6.2 1.8l0.9 5.4l-5.4 3.5l-6.2 -1.8l-0.9 -5.4zM1242.3 696.5l6.2 1.9l0.9 5.3l-5.3 3.6l-6.2 -1.9l-0.9 -5.4zM1259.9 693.9l6.2 1.9l0.9 5.4l-5.4 3.5l-6.2 -1.8l-0.9 -5.4zM1277.4 691.4l6.3 1.8l0.8 5.4l-5.3 3.5l-6.2 -1.8l-0.9 -5.4zM1295 688.8l6.2 1.9l0.9 5.3l-5.3 3.6l-6.3 -1.9l-0.9 -5.4zM1312.5 686.2l6.3 1.9l0.9 5.4l-5.4 3.5l-6.2 -1.8l-0.9 -5.4zM1330.1 683.7l6.2 1.8l0.9 5.4l-5.3 3.5l-6.3 -1.8l-0.9 -5.4zM1347.6 681.1l6.3 1.9l0.9 5.3l-5.4 3.6l-6.2 -1.9l-0.9 -5.3zM1365.2 678.6l6.2 1.8l0.9 5.4l-5.3 3.5l-6.3 -1.8l-0.8 -5.4zM1382.8 676l6.2 1.8l0.9 5.4l-5.4 3.5l-6.2 -1.8l-0.9 -5.4zM1400.3 673.4l6.2 1.9l0.9 5.3l-5.3 3.6l-6.2 -1.9l-0.9 -5.3zM1417.9 670.9l6.2 1.8l0.9 5.4l-5.4 3.5l-6.2 -1.8l-0.9 -5.4zM1435.4 668.3l6.3 1.8l0.8 5.4l-5.3 3.5l-6.2 -1.8l-0.9 -5.4zM1453 665.7l6.2 1.9l0.9 5.3l-5.3 3.6l-6.3 -1.9l-0.9 -5.3zM1470.5 663.2l6.3 1.8l0.8 5.4l-5.3 3.5l-6.2 -1.8l-0.9 -5.4zM1488.1 660.6l6.2 1.8l0.9 5.4l-5.3 3.5l-6.3 -1.8l-0.9 -5.4zM1505.6 658l6.3 1.9l0.9 5.3l-5.4 3.6l-6.2 -1.9l-0.9 -5.3zM1523.2 655.5l6.2 1.8l0.9 5.4l-5.3 3.5l-6.3 -1.8l-0.9 -5.4zM1540.7 652.9l6.3 1.8l0.9 5.4l-5.4 3.5l-6.2 -1.8l-0.9 -5.4zM1558.3 650.3l6.2 1.9l0.9 5.3l-5.3 3.6l-6.3 -1.9l-0.8 -5.3zM1575.9 647.8l6.2 1.8l0.9 5.4l-5.4 3.5l-6.2 -1.8l-0.9 -5.4zM1593.4 645.2l6.2 1.8l0.9 5.4l-5.3 3.5l-6.2 -1.8l-0.9 -5.4zM1611 642.6l6.2 1.9l0.9 5.3l-5.4 3.6l-6.2 -1.9l-0.9 -5.3zM1628.5 640.1l6.3 1.8l0.8 5.4l-5.3 3.5l-6.2 -1.8l-0.9 -5.4zM1646.1 637.5l6.2 1.8l0.9 5.4l-5.3 3.5l-6.3 -1.8l-0.9 -5.4zM1663.6 634.9l6.3 1.9l0.9 5.3l-5.4 3.6l-6.2 -1.9l-0.9 -5.3zM1681.2 632.4l6.2 1.8l0.9 5.4l-5.3 3.5l-6.3 -1.8l-0.9 -5.4zM1698.7 629.8l6.3 1.8l0.9 5.4l-5.4 3.6l-6.2 -1.9l-0.9 -5.4zM1716.3 627.2l6.2 1.9l0.9 5.4l-5.3 3.5l-6.3 -1.9l-0.8 -5.3zM1733.9 624.7l6.2 1.8l0.9 5.4l-5.4 3.5l-6.2 -1.8l-0.9 -5.4zM1751.4 622.1l6.2 1.8l0.9 5.4l-5.3 3.6l-6.2 -1.9l-0.9 -5.4zM1769 619.5l6.2 1.9l0.9 5.4l-5.4 3.5l-6.2 -1.9l-0.9 -5.3zM1786.5 617l6.3 1.8l0.8 5.4l-5.3 3.5l-6.2 -1.8l-0.9 -5.4zM1804.1 614.4l6.2 1.8l0.9 5.4l-5.3 3.6l-6.3 -1.9l-0.9 -5.4zM1821.6 611.8l6.3 1.9l0.8 5.4l-5.3 3.5l-6.2 -1.9l-0.9 -5.3zM1839.2 609.3l6.2 1.8l0.9 5.4l-5.3 3.5l-6.3 -1.8l-0.9 -5.4zM852.2 769.8l6.3 1.8l0.9 5.4l-5.4 3.5l-6.2 -1.8l-0.9 -5.4zM869.8 767.2l6.2 1.8l0.9 5.4l-5.3 3.5l-6.3 -1.8l-0.8 -5.4zM887.4 764.6l6.2 1.9l0.9 5.3l-5.4 3.6l-6.2 -1.9l-0.9 -5.3zM904.9 762.1l6.2 1.8l0.9 5.4l-5.3 3.5l-6.2 -1.8l-0.9 -5.4zM922.5 759.5l6.2 1.8l0.9 5.4l-5.4 3.5l-6.2 -1.8l-0.9 -5.4zM940 756.9l6.3 1.9l0.8 5.3l-5.3 3.6l-6.2 -1.9l-0.9 -5.3zM957.6 754.4l6.2 1.8l0.9 5.4l-5.3 3.5l-6.3 -1.8l-0.9 -5.4zM975.1 751.8l6.3 1.8l0.9 5.4l-5.4 3.5l-6.2 -1.8l-0.9 -5.4zM992.7 749.2l6.2 1.9l0.9 5.3l-5.3 3.6l-6.3 -1.9l-0.9 -5.3zM1010.2 746.7l6.3 1.8l0.9 5.4l-5.4 3.5l-6.2 -1.8l-0.9 -5.4zM1027.8 744.1l6.2 1.8l0.9 5.4l-5.3 3.6l-6.3 -1.9l-0.8 -5.4zM1045.4 741.5l6.2 1.9l0.9 5.4l-5.4 3.5l-6.2 -1.9l-0.9 -5.3zM1062.9 739l6.2 1.8l0.9 5.4l-5.3 3.5l-6.3 -1.8l-0.8 -5.4zM1080.5 736.4l6.2 1.8l0.9 5.4l-5.4 3.6l-6.2 -1.9l-0.9 -5.4zM1098 733.8l6.2 1.9l0.9 5.4l-5.3 3.5l-6.2 -1.9l-0.9 -5.3zM1115.6 731.3l6.2 1.8l0.9 5.4l-5.4 3.5l-6.2 -1.8l-0.9 -5.4zM1133.1 728.7l6.3 1.8l0.8 5.4l-5.3 3.6l-6.2 -1.9l-0.9 -5.4zM1150.7 726.1l6.2 1.9l0.9 5.4l-5.3 3.5l-6.3 -1.9l-0.9 -5.3zM1168.2 723.6l6.3 1.8l0.9 5.4l-5.4 3.5l-6.2 -1.8l-0.9 -5.4zM1185.8 721l6.2 1.8l0.9 5.4l-5.3 3.6l-6.3 -1.9l-0.9 -5.4zM1203.3 718.4l6.3 1.9l0.9 5.4l-5.4 3.5l-6.2 -1.9l-0.9 -5.3zM1220.9 715.9l6.2 1.8l0.9 5.4l-5.3 3.5l-6.3 -1.8l-0.8 -5.4zM1238.5 713.3l6.2 1.8l0.9 5.4l-5.4 3.6l-6.2 -1.9l-0.9 -5.4zM1256 710.7l6.2 1.9l0.9 5.4l-5.3 3.5l-6.2 -1.8l-0.9 -5.4zM1273.6 708.2l6.2 1.8l0.9 5.4l-5.4 3.5l-6.2 -1.8l-0.9 -5.4zM1291.1 705.6l6.3 1.8l0.8 5.4l-5.3 3.6l-6.2 -1.9l-0.9 -5.4zM1308.7 703l6.2 1.9l0.9 5.4l-5.3 3.5l-6.3 -1.8l-0.9 -5.4zM1326.2 700.5l6.3 1.8l0.9 5.4l-5.4 3.5l-6.2 -1.8l-0.9 -5.4zM1343.8 697.9l6.2 1.9l0.9 5.3l-5.3 3.6l-6.3 -1.9l-0.9 -5.4zM1361.3 695.3l6.3 1.9l0.9 5.4l-5.4 3.5l-6.2 -1.8l-0.9 -5.4zM1378.9 692.8l6.2 1.8l0.9 5.4l-5.3 3.5l-6.3 -1.8l-0.8 -5.4zM1396.5 690.2l6.2 1.9l0.9 5.3l-5.4 3.6l-6.2 -1.9l-0.9 -5.4zM1414 687.6l6.2 1.9l0.9 5.4l-5.3 3.5l-6.3 -1.8l-0.8 -5.4zM1431.6 685.1l6.2 1.8l0.9 5.4l-5.4 3.5l-6.2 -1.8l-0.9 -5.4zM1449.1 682.5l6.2 1.9l0.9 5.3l-5.3 3.6l-6.2 -1.9l-0.9 -5.4zM1466.7 679.9l6.2 1.9l0.9 5.4l-5.4 3.5l-6.2 -1.8l-0.9 -5.4zM1484.2 677.4l6.3 1.8l0.8 5.4l-5.3 3.5l-6.2 -1.8l-0.9 -5.4zM1501.8 674.8l6.2 1.9l0.9 5.3l-5.3 3.6l-6.3 -1.9l-0.9 -5.4zM1519.3 672.2l6.3 1.9l0.9 5.4l-5.4 3.5l-6.2 -1.8l-0.9 -5.4zM1536.9 669.7l6.2 1.8l0.9 5.4l-5.3 3.5l-6.3 -1.8l-0.9 -5.4zM1554.4 667.1l6.3 1.9l0.9 5.3l-5.4 3.6l-6.2 -1.9l-0.9 -5.3zM1572 664.6l6.2 1.8l0.9 5.4l-5.3 3.5l-6.3 -1.8l-0.8 -5.4zM1589.6 662l6.2 1.8l0.9 5.4l-5.4 3.5l-6.2 -1.8l-0.9 -5.4zM1607.1 659.4l6.2 1.9l0.9 5.3l-5.3 3.6l-6.2 -1.9l-0.9 -5.3zM1624.7 656.9l6.2 1.8l0.9 5.4l-5.4 3.5l-6.2 -1.8l-0.9 -5.4zM1642.2 654.3l6.3 1.8l0.8 5.4l-5.3 3.5l-6.2 -1.8l-0.9 -5.4zM1659.8 651.7l6.2 1.9l0.9 5.3l-5.3 3.6l-6.3 -1.9l-0.9 -5.3zM1677.3 649.2l6.3 1.8l0.9 5.4l-5.4 3.5l-6.2 -1.8l-0.9 -5.4zM1694.9 646.6l6.2 1.8l0.9 5.4l-5.3 3.5l-6.3 -1.8l-0.9 -5.4zM1712.4 644l6.3 1.9l0.9 5.3l-5.4 3.6l-6.2 -1.9l-0.9 -5.3zM1730 641.5l6.2 1.8l0.9 5.4l-5.3 3.5l-6.3 -1.8l-0.8 -5.4zM1747.6 638.9l6.2 1.8l0.9 5.4l-5.4 3.5l-6.2 -1.8l-0.9 -5.4zM1765.1 636.3l6.2 1.9l0.9 5.3l-5.3 3.6l-6.3 -1.9l-0.8 -5.3zM1782.7 633.8l6.2 1.8l0.9 5.4l-5.4 3.5l-6.2 -1.8l-0.9 -5.4zM1800.2 631.2l6.2 1.8l0.9 5.4l-5.3 3.5l-6.2 -1.8l-0.9 -5.4zM1817.8 628.6l6.2 1.9l0.9 5.3l-5.4 3.6l-6.2 -1.9l-0.9 -5.3zM1835.3 626.1l6.3 1.8l0.8 5.4l-5.3 3.5l-6.2 -1.8l-0.9 -5.4z" fill="#000"/></mask></defs><g clip-path="url(#gclip)"><g mask="url(#hm)"><path d="M739.5 292.1 L1792 138 L1795.6 159.4 L1776.2 160.9 L1855.4 643.3 L841.5 791.4 L763 308.7 L742.9 313Z" fill="#50535c" stroke="#0e0e10" stroke-width="2.1" stroke-linejoin="miter"/><path d="M783 310.8l8 2.6l1.2 7.4l-6.8 4.8l-8 -2.6l-1.2 -7.4zM800.5 308.2l8.1 2.6l1.2 7.4l-6.8 4.8l-8.1 -2.6l-1.2 -7.4zM818.1 305.7l8 2.6l1.2 7.4l-6.8 4.8l-8 -2.6l-1.2 -7.4zM835.6 303.1l8.1 2.6l1.2 7.4l-6.8 4.8l-8 -2.6l-1.3 -7.4zM853.2 300.5l8 2.7l1.3 7.4l-6.9 4.7l-8 -2.6l-1.2 -7.4zM870.8 298l8 2.6l1.2 7.4l-6.8 4.8l-8 -2.6l-1.3 -7.4zM888.3 295.4l8 2.6l1.3 7.4l-6.8 4.8l-8.1 -2.6l-1.2 -7.4zM905.9 292.8l8 2.7l1.2 7.4l-6.8 4.7l-8 -2.6l-1.2 -7.4zM923.4 290.3l8 2.6l1.3 7.4l-6.8 4.8l-8.1 -2.6l-1.2 -7.4zM941 287.7l8 2.6l1.2 7.4l-6.8 4.8l-8 -2.6l-1.2 -7.4zM958.5 285.1l8.1 2.7l1.2 7.4l-6.8 4.7l-8.1 -2.6l-1.2 -7.4zM976.1 282.6l8 2.6l1.2 7.4l-6.8 4.8l-8 -2.6l-1.2 -7.4zM993.6 280l8.1 2.6l1.2 7.4l-6.8 4.8l-8 -2.6l-1.3 -7.4zM1011.2 277.4l8 2.7l1.2 7.4l-6.8 4.7l-8 -2.6l-1.2 -7.4zM1028.7 274.9l8.1 2.6l1.2 7.4l-6.8 4.8l-8 -2.6l-1.3 -7.4zM1046.3 272.3l8 2.6l1.3 7.4l-6.9 4.8l-8 -2.6l-1.2 -7.4zM1063.9 269.7l8 2.7l1.2 7.4l-6.8 4.7l-8 -2.6l-1.3 -7.4zM1081.4 267.2l8 2.6l1.3 7.4l-6.8 4.8l-8.1 -2.6l-1.2 -7.4zM1099 264.6l8 2.6l1.2 7.4l-6.8 4.8l-8 -2.6l-1.2 -7.4zM1116.5 262l8.1 2.7l1.2 7.4l-6.8 4.7l-8.1 -2.6l-1.2 -7.4zM1134.1 259.5l8 2.6l1.2 7.4l-6.8 4.8l-8 -2.6l-1.2 -7.4zM1151.6 256.9l8.1 2.6l1.2 7.4l-6.8 4.8l-8.1 -2.6l-1.2 -7.4zM1169.2 254.3l8 2.7l1.2 7.4l-6.8 4.7l-8 -2.6l-1.2 -7.4zM1186.7 251.8l8.1 2.6l1.2 7.4l-6.8 4.8l-8 -2.6l-1.3 -7.4zM1204.3 249.2l8 2.6l1.3 7.4l-6.9 4.8l-8 -2.6l-1.2 -7.4zM1221.9 246.7l8 2.6l1.2 7.4l-6.8 4.7l-8 -2.6l-1.3 -7.4zM1239.4 244.1l8 2.6l1.3 7.4l-6.8 4.8l-8.1 -2.6l-1.2 -7.4zM1257 241.5l8 2.6l1.2 7.4l-6.8 4.8l-8 -2.6l-1.2 -7.4zM1274.5 239l8 2.6l1.3 7.4l-6.8 4.8l-8.1 -2.7l-1.2 -7.4zM1292.1 236.4l8 2.6l1.2 7.4l-6.8 4.8l-8 -2.6l-1.2 -7.4zM1309.6 233.8l8.1 2.6l1.2 7.4l-6.8 4.8l-8.1 -2.6l-1.2 -7.4zM1327.2 231.3l8 2.6l1.2 7.4l-6.8 4.8l-8 -2.7l-1.2 -7.4zM1344.7 228.7l8.1 2.6l1.2 7.4l-6.8 4.8l-8 -2.6l-1.3 -7.4zM1362.3 226.1l8 2.6l1.2 7.4l-6.8 4.8l-8 -2.6l-1.2 -7.4zM1379.8 223.6l8.1 2.6l1.2 7.4l-6.8 4.8l-8 -2.7l-1.3 -7.4zM1397.4 221l8 2.6l1.3 7.4l-6.9 4.8l-8 -2.6l-1.2 -7.4zM1415 218.4l8 2.6l1.2 7.4l-6.8 4.8l-8 -2.6l-1.3 -7.4zM1432.5 215.9l8 2.6l1.3 7.4l-6.8 4.8l-8.1 -2.7l-1.2 -7.4zM1450.1 213.3l8 2.6l1.2 7.4l-6.8 4.8l-8 -2.6l-1.2 -7.4zM1467.6 210.7l8.1 2.6l1.2 7.4l-6.8 4.8l-8.1 -2.6l-1.2 -7.4zM1485.2 208.2l8 2.6l1.2 7.4l-6.8 4.8l-8 -2.7l-1.2 -7.4zM1502.7 205.6l8.1 2.6l1.2 7.4l-6.8 4.8l-8.1 -2.6l-1.2 -7.4zM1520.3 203l8 2.6l1.2 7.4l-6.8 4.8l-8 -2.6l-1.2 -7.4zM1537.8 200.5l8.1 2.6l1.2 7.4l-6.8 4.8l-8 -2.7l-1.3 -7.4zM1555.4 197.9l8 2.6l1.3 7.4l-6.9 4.8l-8 -2.6l-1.2 -7.4zM1573 195.3l8 2.6l1.2 7.4l-6.8 4.8l-8 -2.6l-1.3 -7.4zM1590.5 192.8l8 2.6l1.3 7.4l-6.8 4.8l-8.1 -2.7l-1.2 -7.4zM1608.1 190.2l8 2.6l1.2 7.4l-6.8 4.8l-8 -2.6l-1.2 -7.4zM1625.6 187.6l8 2.6l1.3 7.4l-6.8 4.8l-8.1 -2.6l-1.2 -7.4zM1643.2 185.1l8 2.6l1.2 7.4l-6.8 4.8l-8 -2.6l-1.2 -7.4zM1660.7 182.5l8.1 2.6l1.2 7.4l-6.8 4.8l-8.1 -2.6l-1.2 -7.4zM1678.3 179.9l8 2.6l1.2 7.4l-6.8 4.8l-8 -2.6l-1.2 -7.4zM1695.8 177.4l8.1 2.6l1.2 7.4l-6.8 4.8l-8 -2.6l-1.3 -7.4zM1713.4 174.8l8 2.6l1.2 7.4l-6.8 4.8l-8 -2.6l-1.2 -7.4zM1730.9 172.2l8.1 2.7l1.2 7.4l-6.8 4.7l-8 -2.6l-1.3 -7.4zM1748.5 169.7l8 2.6l1.3 7.4l-6.9 4.8l-8 -2.6l-1.2 -7.4zM1766.1 167.1l8 2.6l1.2 7.4l-6.8 4.8l-8 -2.6l-1.3 -7.4zM779.1 327.6l8.1 2.6l1.2 7.4l-6.8 4.8l-8.1 -2.6l-1.2 -7.4zM796.7 325l8 2.6l1.2 7.4l-6.8 4.8l-8 -2.6l-1.2 -7.4zM814.2 322.5l8.1 2.6l1.2 7.4l-6.8 4.8l-8.1 -2.7l-1.2 -7.4zM831.8 319.9l8 2.6l1.2 7.4l-6.8 4.8l-8 -2.6l-1.2 -7.4zM849.3 317.3l8.1 2.6l1.2 7.4l-6.8 4.8l-8 -2.6l-1.3 -7.4zM866.9 314.8l8 2.6l1.2 7.4l-6.8 4.8l-8 -2.7l-1.2 -7.4zM884.4 312.2l8.1 2.6l1.2 7.4l-6.8 4.8l-8 -2.6l-1.3 -7.4zM902 309.6l8 2.6l1.3 7.4l-6.8 4.8l-8.1 -2.6l-1.2 -7.4zM919.6 307.1l8 2.6l1.2 7.4l-6.8 4.8l-8 -2.7l-1.3 -7.4zM937.1 304.5l8 2.6l1.3 7.4l-6.8 4.8l-8.1 -2.6l-1.2 -7.4zM954.7 301.9l8 2.6l1.2 7.4l-6.8 4.8l-8 -2.6l-1.2 -7.4zM972.2 299.4l8.1 2.6l1.2 7.4l-6.8 4.8l-8.1 -2.6l-1.2 -7.4zM989.8 296.8l8 2.6l1.2 7.4l-6.8 4.8l-8 -2.6l-1.2 -7.4zM1007.3 294.2l8.1 2.6l1.2 7.4l-6.8 4.8l-8.1 -2.6l-1.2 -7.4zM1024.9 291.7l8 2.6l1.2 7.4l-6.8 4.8l-8 -2.6l-1.2 -7.4zM1042.4 289.1l8.1 2.6l1.2 7.4l-6.8 4.8l-8 -2.6l-1.3 -7.4zM1060 286.5l8 2.7l1.3 7.4l-6.9 4.7l-8 -2.6l-1.2 -7.4zM1077.6 284l8 2.6l1.2 7.4l-6.8 4.8l-8 -2.6l-1.3 -7.4zM1095.1 281.4l8 2.6l1.3 7.4l-6.8 4.8l-8.1 -2.6l-1.2 -7.4zM1112.7 278.8l8 2.7l1.2 7.4l-6.8 4.7l-8 -2.6l-1.2 -7.4zM1130.2 276.3l8.1 2.6l1.2 7.4l-6.8 4.8l-8.1 -2.6l-1.2 -7.4zM1147.8 273.7l8 2.6l1.2 7.4l-6.8 4.8l-8 -2.6l-1.2 -7.4zM1165.3 271.1l8.1 2.7l1.2 7.4l-6.8 4.7l-8.1 -2.6l-1.2 -7.4zM1182.9 268.6l8 2.6l1.2 7.4l-6.8 4.8l-8 -2.6l-1.2 -7.4zM1200.4 266l8.1 2.6l1.2 7.4l-6.8 4.8l-8 -2.6l-1.3 -7.4zM1218 263.4l8 2.7l1.2 7.4l-6.8 4.7l-8 -2.6l-1.2 -7.4zM1235.5 260.9l8.1 2.6l1.2 7.4l-6.8 4.8l-8 -2.6l-1.3 -7.4zM1253.1 258.3l8 2.6l1.3 7.4l-6.8 4.8l-8.1 -2.6l-1.2 -7.4zM1270.7 255.7l8 2.7l1.2 7.4l-6.8 4.7l-8 -2.6l-1.3 -7.4zM1288.2 253.2l8 2.6l1.3 7.4l-6.8 4.8l-8.1 -2.6l-1.2 -7.4zM1305.8 250.6l8 2.6l1.2 7.4l-6.8 4.8l-8 -2.6l-1.2 -7.4zM1323.3 248l8.1 2.7l1.2 7.4l-6.8 4.7l-8.1 -2.6l-1.2 -7.4zM1340.9 245.5l8 2.6l1.2 7.4l-6.8 4.8l-8 -2.6l-1.2 -7.4zM1358.4 242.9l8.1 2.6l1.2 7.4l-6.8 4.8l-8.1 -2.6l-1.2 -7.4zM1376 240.3l8 2.7l1.2 7.4l-6.8 4.7l-8 -2.6l-1.2 -7.4zM1393.5 237.8l8.1 2.6l1.2 7.4l-6.8 4.8l-8 -2.6l-1.3 -7.4zM1411.1 235.2l8 2.6l1.3 7.4l-6.9 4.8l-8 -2.6l-1.2 -7.4zM1428.7 232.7l8 2.6l1.2 7.4l-6.8 4.7l-8 -2.6l-1.3 -7.4zM1446.2 230.1l8 2.6l1.3 7.4l-6.8 4.8l-8.1 -2.6l-1.2 -7.4zM1463.8 227.5l8 2.6l1.2 7.4l-6.8 4.8l-8 -2.6l-1.2 -7.4zM1481.3 225l8.1 2.6l1.2 7.4l-6.8 4.8l-8.1 -2.7l-1.2 -7.4zM1498.9 222.4l8 2.6l1.2 7.4l-6.8 4.8l-8 -2.6l-1.2 -7.4zM1516.4 219.8l8.1 2.6l1.2 7.4l-6.8 4.8l-8.1 -2.6l-1.2 -7.4zM1534 217.3l8 2.6l1.2 7.4l-6.8 4.8l-8 -2.7l-1.2 -7.4zM1551.5 214.7l8.1 2.6l1.2 7.4l-6.8 4.8l-8 -2.6l-1.3 -7.4zM1569.1 212.1l8 2.6l1.2 7.4l-6.8 4.8l-8 -2.6l-1.2 -7.4zM1586.6 209.6l8.1 2.6l1.2 7.4l-6.8 4.8l-8 -2.7l-1.3 -7.4zM1604.2 207l8 2.6l1.3 7.4l-6.8 4.8l-8.1 -2.6l-1.2 -7.4zM1621.8 204.4l8 2.6l1.2 7.4l-6.8 4.8l-8 -2.6l-1.3 -7.4zM1639.3 201.9l8 2.6l1.3 7.4l-6.8 4.8l-8.1 -2.7l-1.2 -7.4zM1656.9 199.3l8 2.6l1.2 7.4l-6.8 4.8l-8 -2.6l-1.2 -7.4zM1674.4 196.7l8.1 2.6l1.2 7.4l-6.8 4.8l-8.1 -2.6l-1.2 -7.4zM1692 194.2l8 2.6l1.2 7.4l-6.8 4.8l-8 -2.7l-1.2 -7.4zM1709.5 191.6l8.1 2.6l1.2 7.4l-6.8 4.8l-8.1 -2.6l-1.2 -7.4zM1727.1 189l8 2.6l1.2 7.4l-6.8 4.8l-8 -2.6l-1.2 -7.4zM1744.6 186.5l8.1 2.6l1.2 7.4l-6.8 4.8l-8 -2.7l-1.3 -7.4zM1762.2 183.9l8 2.6l1.3 7.4l-6.9 4.8l-8 -2.6l-1.2 -7.4zM788.6 344.6l8 2.6l1.2 7.4l-6.8 4.8l-8 -2.6l-1.2 -7.4zM806.1 342l8 2.6l1.3 7.4l-6.8 4.8l-8.1 -2.6l-1.2 -7.4zM823.7 339.5l8 2.6l1.2 7.4l-6.8 4.8l-8 -2.7l-1.2 -7.4zM841.2 336.9l8.1 2.6l1.2 7.4l-6.8 4.8l-8.1 -2.6l-1.2 -7.4zM858.8 334.3l8 2.6l1.2 7.4l-6.8 4.8l-8 -2.6l-1.2 -7.4zM876.3 331.8l8.1 2.6l1.2 7.4l-6.8 4.8l-8.1 -2.7l-1.2 -7.4zM893.9 329.2l8 2.6l1.2 7.4l-6.8 4.8l-8 -2.6l-1.2 -7.4zM911.4 326.6l8.1 2.6l1.2 7.4l-6.8 4.8l-8 -2.6l-1.3 -7.4zM929 324.1l8 2.6l1.3 7.4l-6.9 4.8l-8 -2.7l-1.2 -7.4zM946.6 321.5l8 2.6l1.2 7.4l-6.8 4.8l-8 -2.6l-1.3 -7.4zM964.1 318.9l8 2.6l1.3 7.4l-6.8 4.8l-8.1 -2.6l-1.2 -7.4zM981.7 316.4l8 2.6l1.2 7.4l-6.8 4.8l-8 -2.7l-1.2 -7.4zM999.2 313.8l8.1 2.6l1.2 7.4l-6.8 4.8l-8.1 -2.6l-1.2 -7.4zM1016.8 311.2l8 2.6l1.2 7.4l-6.8 4.8l-8 -2.6l-1.2 -7.4zM1034.3 308.7l8.1 2.6l1.2 7.4l-6.8 4.8l-8.1 -2.7l-1.2 -7.4zM1051.9 306.1l8 2.6l1.2 7.4l-6.8 4.8l-8 -2.6l-1.2 -7.4zM1069.4 303.5l8.1 2.6l1.2 7.4l-6.8 4.8l-8 -2.6l-1.3 -7.4zM1087 301l8 2.6l1.3 7.4l-6.9 4.8l-8 -2.7l-1.2 -7.4zM1104.6 298.4l8 2.6l1.2 7.4l-6.8 4.8l-8 -2.6l-1.3 -7.4zM1122.1 295.8l8 2.6l1.3 7.4l-6.8 4.8l-8.1 -2.6l-1.2 -7.4zM1139.7 293.3l8 2.6l1.2 7.4l-6.8 4.8l-8 -2.7l-1.2 -7.4zM1157.2 290.7l8 2.6l1.3 7.4l-6.8 4.8l-8.1 -2.6l-1.2 -7.4zM1174.8 288.1l8 2.6l1.2 7.4l-6.8 4.8l-8 -2.6l-1.2 -7.4zM1192.3 285.6l8.1 2.6l1.2 7.4l-6.8 4.8l-8.1 -2.6l-1.2 -7.4zM1209.9 283l8 2.6l1.2 7.4l-6.8 4.8l-8 -2.6l-1.2 -7.4zM1227.4 280.4l8.1 2.6l1.2 7.4l-6.8 4.8l-8.1 -2.6l-1.2 -7.4zM1245 277.9l8 2.6l1.2 7.4l-6.8 4.8l-8 -2.6l-1.2 -7.4zM1262.5 275.3l8.1 2.6l1.2 7.4l-6.8 4.8l-8 -2.6l-1.3 -7.4zM1280.1 272.7l8 2.7l1.3 7.4l-6.9 4.7l-8 -2.6l-1.2 -7.4zM1297.7 270.2l8 2.6l1.2 7.4l-6.8 4.8l-8 -2.6l-1.3 -7.4zM1315.2 267.6l8 2.6l1.3 7.4l-6.8 4.8l-8.1 -2.6l-1.2 -7.4zM1332.8 265l8 2.7l1.2 7.4l-6.8 4.7l-8 -2.6l-1.2 -7.4zM1350.3 262.5l8.1 2.6l1.2 7.4l-6.8 4.8l-8.1 -2.6l-1.2 -7.4zM1367.9 259.9l8 2.6l1.2 7.4l-6.8 4.8l-8 -2.6l-1.2 -7.4zM1385.4 257.3l8.1 2.7l1.2 7.4l-6.8 4.7l-8.1 -2.6l-1.2 -7.4zM1403 254.8l8 2.6l1.2 7.4l-6.8 4.8l-8 -2.6l-1.2 -7.4zM1420.5 252.2l8.1 2.6l1.2 7.4l-6.8 4.8l-8 -2.6l-1.3 -7.4zM1438.1 249.6l8 2.7l1.3 7.4l-6.9 4.7l-8 -2.6l-1.2 -7.4zM1455.7 247.1l8 2.6l1.2 7.4l-6.8 4.8l-8 -2.6l-1.3 -7.4zM1473.2 244.5l8 2.6l1.3 7.4l-6.8 4.8l-8.1 -2.6l-1.2 -7.4zM1490.8 241.9l8 2.7l1.2 7.4l-6.8 4.7l-8 -2.6l-1.2 -7.4zM1508.3 239.4l8 2.6l1.3 7.4l-6.8 4.8l-8.1 -2.6l-1.2 -7.4zM1525.9 236.8l8 2.6l1.2 7.4l-6.8 4.8l-8 -2.6l-1.2 -7.4zM1543.4 234.2l8.1 2.7l1.2 7.4l-6.8 4.7l-8.1 -2.6l-1.2 -7.4zM1561 231.7l8 2.6l1.2 7.4l-6.8 4.8l-8 -2.6l-1.2 -7.4zM1578.5 229.1l8.1 2.6l1.2 7.4l-6.8 4.8l-8.1 -2.6l-1.2 -7.4zM1596.1 226.5l8 2.7l1.2 7.4l-6.8 4.7l-8 -2.6l-1.2 -7.4zM1613.6 224l8.1 2.6l1.2 7.4l-6.8 4.8l-8 -2.6l-1.3 -7.4zM1631.2 221.4l8 2.6l1.3 7.4l-6.9 4.8l-8 -2.6l-1.2 -7.4zM1648.8 218.9l8 2.6l1.2 7.4l-6.8 4.7l-8 -2.6l-1.3 -7.4zM1666.3 216.3l8 2.6l1.3 7.4l-6.8 4.8l-8.1 -2.6l-1.2 -7.4zM1683.9 213.7l8 2.6l1.2 7.4l-6.8 4.8l-8 -2.6l-1.2 -7.4zM1701.4 211.2l8.1 2.6l1.2 7.4l-6.8 4.8l-8.1 -2.7l-1.2 -7.4zM1719 208.6l8 2.6l1.2 7.4l-6.8 4.8l-8 -2.6l-1.2 -7.4zM1736.5 206l8.1 2.6l1.2 7.4l-6.8 4.8l-8.1 -2.6l-1.2 -7.4zM1754.1 203.5l8 2.6l1.2 7.4l-6.8 4.8l-8 -2.7l-1.2 -7.4zM1771.6 200.9l8.1 2.6l1.2 7.4l-6.8 4.8l-8 -2.6l-1.3 -7.4zM784.7 361.4l8 2.6l1.3 7.4l-6.9 4.8l-8 -2.6l-1.2 -7.4zM802.3 358.8l8 2.6l1.2 7.4l-6.8 4.8l-8 -2.6l-1.3 -7.4zM819.8 356.2l8 2.7l1.3 7.4l-6.8 4.7l-8.1 -2.6l-1.2 -7.4zM837.4 353.7l8 2.6l1.2 7.4l-6.8 4.8l-8 -2.6l-1.2 -7.4zM854.9 351.1l8.1 2.6l1.2 7.4l-6.8 4.8l-8.1 -2.6l-1.2 -7.4zM872.5 348.5l8 2.7l1.2 7.4l-6.8 4.7l-8 -2.6l-1.2 -7.4zM890 346l8.1 2.6l1.2 7.4l-6.8 4.8l-8.1 -2.6l-1.2 -7.4zM907.6 343.4l8 2.6l1.2 7.4l-6.8 4.8l-8 -2.6l-1.2 -7.4zM925.1 340.8l8.1 2.7l1.2 7.4l-6.8 4.7l-8 -2.6l-1.3 -7.4zM942.7 338.3l8 2.6l1.3 7.4l-6.9 4.8l-8 -2.6l-1.2 -7.4zM960.3 335.7l8 2.6l1.2 7.4l-6.8 4.8l-8 -2.6l-1.3 -7.4zM977.8 333.2l8 2.6l1.3 7.4l-6.8 4.7l-8.1 -2.6l-1.2 -7.4zM995.4 330.6l8 2.6l1.2 7.4l-6.8 4.8l-8 -2.6l-1.2 -7.4zM1012.9 328l8.1 2.6l1.2 7.4l-6.8 4.8l-8.1 -2.6l-1.2 -7.4zM1030.5 325.5l8 2.6l1.2 7.4l-6.8 4.8l-8 -2.7l-1.2 -7.4zM1048 322.9l8.1 2.6l1.2 7.4l-6.8 4.8l-8.1 -2.6l-1.2 -7.4zM1065.6 320.3l8 2.6l1.2 7.4l-6.8 4.8l-8 -2.6l-1.2 -7.4zM1083.1 317.8l8.1 2.6l1.2 7.4l-6.8 4.8l-8 -2.7l-1.3 -7.4zM1100.7 315.2l8 2.6l1.2 7.4l-6.8 4.8l-8 -2.6l-1.2 -7.4zM1118.2 312.6l8.1 2.6l1.2 7.4l-6.8 4.8l-8 -2.6l-1.3 -7.4zM1135.8 310.1l8 2.6l1.3 7.4l-6.9 4.8l-8 -2.7l-1.2 -7.4zM1153.4 307.5l8 2.6l1.2 7.4l-6.8 4.8l-8 -2.6l-1.3 -7.4zM1170.9 304.9l8 2.6l1.3 7.4l-6.8 4.8l-8.1 -2.6l-1.2 -7.4zM1188.5 302.4l8 2.6l1.2 7.4l-6.8 4.8l-8 -2.7l-1.2 -7.4zM1206 299.8l8.1 2.6l1.2 7.4l-6.8 4.8l-8.1 -2.6l-1.2 -7.4zM1223.6 297.2l8 2.6l1.2 7.4l-6.8 4.8l-8 -2.6l-1.2 -7.4zM1241.1 294.7l8.1 2.6l1.2 7.4l-6.8 4.8l-8.1 -2.7l-1.2 -7.4zM1258.7 292.1l8 2.6l1.2 7.4l-6.8 4.8l-8 -2.6l-1.2 -7.4zM1276.2 289.5l8.1 2.6l1.2 7.4l-6.8 4.8l-8 -2.6l-1.3 -7.4zM1293.8 287l8 2.6l1.3 7.4l-6.9 4.8l-8 -2.7l-1.2 -7.4zM1311.4 284.4l8 2.6l1.2 7.4l-6.8 4.8l-8 -2.6l-1.3 -7.4zM1328.9 281.8l8 2.6l1.3 7.4l-6.8 4.8l-8.1 -2.6l-1.2 -7.4zM1346.5 279.3l8 2.6l1.2 7.4l-6.8 4.8l-8 -2.7l-1.2 -7.4zM1364 276.7l8.1 2.6l1.2 7.4l-6.8 4.8l-8.1 -2.6l-1.2 -7.4zM1381.6 274.1l8 2.6l1.2 7.4l-6.8 4.8l-8 -2.6l-1.2 -7.4zM1399.1 271.6l8.1 2.6l1.2 7.4l-6.8 4.8l-8.1 -2.6l-1.2 -7.4zM1416.7 269l8 2.6l1.2 7.4l-6.8 4.8l-8 -2.6l-1.2 -7.4zM1434.2 266.4l8.1 2.6l1.2 7.4l-6.8 4.8l-8 -2.6l-1.3 -7.4zM1451.8 263.9l8 2.6l1.2 7.4l-6.8 4.8l-8 -2.6l-1.2 -7.4zM1469.3 261.3l8.1 2.6l1.2 7.4l-6.8 4.8l-8 -2.6l-1.3 -7.4zM1486.9 258.7l8 2.7l1.3 7.4l-6.9 4.7l-8 -2.6l-1.2 -7.4zM1504.5 256.2l8 2.6l1.2 7.4l-6.8 4.8l-8 -2.6l-1.3 -7.4zM1522 253.6l8 2.6l1.3 7.4l-6.8 4.8l-8.1 -2.6l-1.2 -7.4zM1539.6 251l8 2.7l1.2 7.4l-6.8 4.7l-8 -2.6l-1.2 -7.4zM1557.1 248.5l8.1 2.6l1.2 7.4l-6.8 4.8l-8.1 -2.6l-1.2 -7.4zM1574.7 245.9l8 2.6l1.2 7.4l-6.8 4.8l-8 -2.6l-1.2 -7.4zM1592.2 243.3l8.1 2.7l1.2 7.4l-6.8 4.7l-8.1 -2.6l-1.2 -7.4zM1609.8 240.8l8 2.6l1.2 7.4l-6.8 4.8l-8 -2.6l-1.2 -7.4zM1627.3 238.2l8.1 2.6l1.2 7.4l-6.8 4.8l-8 -2.6l-1.3 -7.4zM1644.9 235.6l8 2.7l1.3 7.4l-6.9 4.7l-8 -2.6l-1.2 -7.4zM1662.5 233.1l8 2.6l1.2 7.4l-6.8 4.8l-8 -2.6l-1.3 -7.4zM1680 230.5l8 2.6l1.3 7.4l-6.8 4.8l-8.1 -2.6l-1.2 -7.4zM1697.6 227.9l8 2.7l1.2 7.4l-6.8 4.7l-8 -2.6l-1.2 -7.4zM1715.1 225.4l8.1 2.6l1.2 7.4l-6.8 4.8l-8.1 -2.6l-1.2 -7.4zM1732.7 222.8l8 2.6l1.2 7.4l-6.8 4.8l-8 -2.6l-1.2 -7.4zM1750.2 220.2l8.1 2.7l1.2 7.4l-6.8 4.7l-8.1 -2.6l-1.2 -7.4zM1767.8 217.7l8 2.6l1.2 7.4l-6.8 4.8l-8 -2.6l-1.2 -7.4zM794.1 378.4l8.1 2.6l1.2 7.4l-6.8 4.8l-8 -2.6l-1.3 -7.4zM811.7 375.8l8 2.6l1.3 7.4l-6.9 4.8l-8 -2.6l-1.2 -7.4zM829.3 373.2l8 2.7l1.2 7.4l-6.8 4.7l-8 -2.6l-1.3 -7.4zM846.8 370.7l8 2.6l1.3 7.4l-6.8 4.8l-8.1 -2.6l-1.2 -7.4zM864.4 368.1l8 2.6l1.2 7.4l-6.8 4.8l-8 -2.6l-1.2 -7.4zM881.9 365.5l8.1 2.7l1.2 7.4l-6.8 4.7l-8.1 -2.6l-1.2 -7.4zM899.5 363l8 2.6l1.2 7.4l-6.8 4.8l-8 -2.6l-1.2 -7.4zM917 360.4l8.1 2.6l1.2 7.4l-6.8 4.8l-8.1 -2.6l-1.2 -7.4zM934.6 357.8l8 2.7l1.2 7.4l-6.8 4.7l-8 -2.6l-1.2 -7.4zM952.1 355.3l8.1 2.6l1.2 7.4l-6.8 4.8l-8 -2.6l-1.3 -7.4zM969.7 352.7l8 2.6l1.3 7.4l-6.9 4.8l-8 -2.6l-1.2 -7.4zM987.2 350.1l8.1 2.7l1.2 7.4l-6.8 4.7l-8 -2.6l-1.3 -7.4zM1004.8 347.6l8 2.6l1.3 7.4l-6.8 4.8l-8.1 -2.6l-1.2 -7.4zM1022.4 345l8 2.6l1.2 7.4l-6.8 4.8l-8 -2.6l-1.2 -7.4zM1039.9 342.4l8 2.7l1.3 7.4l-6.8 4.7l-8.1 -2.6l-1.2 -7.4zM1057.5 339.9l8 2.6l1.2 7.4l-6.8 4.8l-8 -2.6l-1.2 -7.4zM1075 337.3l8.1 2.6l1.2 7.4l-6.8 4.8l-8.1 -2.6l-1.2 -7.4zM1092.6 334.7l8 2.7l1.2 7.4l-6.8 4.7l-8 -2.6l-1.2 -7.4zM1110.1 332.2l8.1 2.6l1.2 7.4l-6.8 4.8l-8.1 -2.6l-1.2 -7.4zM1127.7 329.6l8 2.6l1.2 7.4l-6.8 4.8l-8 -2.6l-1.2 -7.4zM1145.2 327l8.1 2.7l1.2 7.4l-6.8 4.7l-8 -2.6l-1.3 -7.4zM1162.8 324.5l8 2.6l1.3 7.4l-6.9 4.8l-8 -2.6l-1.2 -7.4zM1180.4 321.9l8 2.6l1.2 7.4l-6.8 4.8l-8 -2.6l-1.3 -7.4zM1197.9 319.4l8 2.6l1.3 7.4l-6.8 4.7l-8.1 -2.6l-1.2 -7.4zM1215.5 316.8l8 2.6l1.2 7.4l-6.8 4.8l-8 -2.6l-1.2 -7.4zM1233 314.2l8.1 2.6l1.2 7.4l-6.8 4.8l-8.1 -2.6l-1.2 -7.4zM1250.6 311.7l8 2.6l1.2 7.4l-6.8 4.8l-8 -2.7l-1.2 -7.4zM1268.1 309.1l8.1 2.6l1.2 7.4l-6.8 4.8l-8.1 -2.6l-1.2 -7.4zM1285.7 306.5l8 2.6l1.2 7.4l-6.8 4.8l-8 -2.6l-1.2 -7.4zM1303.2 304l8.1 2.6l1.2 7.4l-6.8 4.8l-8 -2.7l-1.3 -7.4zM1320.8 301.4l8 2.6l1.3 7.4l-6.9 4.8l-8 -2.6l-1.2 -7.4zM1338.3 298.8l8.1 2.6l1.2 7.4l-6.8 4.8l-8 -2.6l-1.3 -7.4zM1355.9 296.3l8 2.6l1.3 7.4l-6.8 4.8l-8.1 -2.7l-1.2 -7.4zM1373.5 293.7l8 2.6l1.2 7.4l-6.8 4.8l-8 -2.6l-1.2 -7.4zM1391 291.1l8 2.6l1.3 7.4l-6.8 4.8l-8.1 -2.6l-1.2 -7.4zM1408.6 288.6l8 2.6l1.2 7.4l-6.8 4.8l-8 -2.7l-1.2 -7.4zM1426.1 286l8.1 2.6l1.2 7.4l-6.8 4.8l-8.1 -2.6l-1.2 -7.4zM1443.7 283.4l8 2.6l1.2 7.4l-6.8 4.8l-8 -2.6l-1.2 -7.4zM1461.2 280.9l8.1 2.6l1.2 7.4l-6.8 4.8l-8.1 -2.7l-1.2 -7.4zM1478.8 278.3l8 2.6l1.2 7.4l-6.8 4.8l-8 -2.6l-1.2 -7.4zM1496.3 275.7l8.1 2.6l1.2 7.4l-6.8 4.8l-8 -2.6l-1.3 -7.4zM1513.9 273.2l8 2.6l1.3 7.4l-6.9 4.8l-8 -2.7l-1.2 -7.4zM1531.5 270.6l8 2.6l1.2 7.4l-6.8 4.8l-8 -2.6l-1.3 -7.4zM1549 268l8 2.6l1.3 7.4l-6.8 4.8l-8.1 -2.6l-1.2 -7.4zM1566.6 265.5l8 2.6l1.2 7.4l-6.8 4.8l-8 -2.7l-1.2 -7.4zM1584.1 262.9l8.1 2.6l1.2 7.4l-6.8 4.8l-8.1 -2.6l-1.2 -7.4zM1601.7 260.3l8 2.6l1.2 7.4l-6.8 4.8l-8 -2.6l-1.2 -7.4zM1619.2 257.8l8.1 2.6l1.2 7.4l-6.8 4.8l-8.1 -2.6l-1.2 -7.4zM1636.8 255.2l8 2.6l1.2 7.4l-6.8 4.8l-8 -2.6l-1.2 -7.4zM1654.3 252.6l8.1 2.6l1.2 7.4l-6.8 4.8l-8 -2.6l-1.3 -7.4zM1671.9 250.1l8 2.6l1.3 7.4l-6.9 4.8l-8 -2.6l-1.2 -7.4zM1689.4 247.5l8.1 2.6l1.2 7.4l-6.8 4.8l-8 -2.6l-1.3 -7.4zM1707 244.9l8 2.7l1.3 7.4l-6.8 4.7l-8.1 -2.6l-1.2 -7.4zM1724.6 242.4l8 2.6l1.2 7.4l-6.8 4.8l-8 -2.6l-1.2 -7.4zM1742.1 239.8l8 2.6l1.3 7.4l-6.8 4.8l-8.1 -2.6l-1.2 -7.4zM1759.7 237.2l8 2.7l1.2 7.4l-6.8 4.7l-8 -2.6l-1.2 -7.4zM1777.2 234.7l8.1 2.6l1.2 7.4l-6.8 4.8l-8.1 -2.6l-1.2 -7.4zM790.3 395.2l8 2.6l1.2 7.4l-6.8 4.8l-8 -2.7l-1.2 -7.4zM807.8 392.6l8.1 2.6l1.2 7.4l-6.8 4.8l-8 -2.6l-1.3 -7.4zM825.4 390l8 2.6l1.3 7.4l-6.9 4.8l-8 -2.6l-1.2 -7.4zM843 387.5l8 2.6l1.2 7.4l-6.8 4.8l-8 -2.7l-1.3 -7.4zM860.5 384.9l8 2.6l1.3 7.4l-6.8 4.8l-8.1 -2.6l-1.2 -7.4zM878.1 382.3l8 2.6l1.2 7.4l-6.8 4.8l-8 -2.6l-1.2 -7.4zM895.6 379.8l8 2.6l1.3 7.4l-6.8 4.8l-8.1 -2.7l-1.2 -7.4zM913.2 377.2l8 2.6l1.2 7.4l-6.8 4.8l-8 -2.6l-1.2 -7.4zM930.7 374.6l8.1 2.6l1.2 7.4l-6.8 4.8l-8.1 -2.6l-1.2 -7.4zM948.3 372.1l8 2.6l1.2 7.4l-6.8 4.8l-8 -2.6l-1.2 -7.4zM965.8 369.5l8.1 2.6l1.2 7.4l-6.8 4.8l-8 -2.6l-1.3 -7.4zM983.4 366.9l8 2.6l1.2 7.4l-6.8 4.8l-8 -2.6l-1.2 -7.4zM1000.9 364.4l8.1 2.6l1.2 7.4l-6.8 4.8l-8 -2.6l-1.3 -7.4zM1018.5 361.8l8 2.6l1.3 7.4l-6.9 4.8l-8 -2.6l-1.2 -7.4zM1036.1 359.2l8 2.7l1.2 7.4l-6.8 4.7l-8 -2.6l-1.3 -7.4zM1053.6 356.7l8 2.6l1.3 7.4l-6.8 4.8l-8.1 -2.6l-1.2 -7.4zM1071.2 354.1l8 2.6l1.2 7.4l-6.8 4.8l-8 -2.6l-1.2 -7.4zM1088.7 351.5l8.1 2.7l1.2 7.4l-6.8 4.7l-8.1 -2.6l-1.2 -7.4zM1106.3 349l8 2.6l1.2 7.4l-6.8 4.8l-8 -2.6l-1.2 -7.4zM1123.8 346.4l8.1 2.6l1.2 7.4l-6.8 4.8l-8.1 -2.6l-1.2 -7.4zM1141.4 343.8l8 2.7l1.2 7.4l-6.8 4.7l-8 -2.6l-1.2 -7.4zM1158.9 341.3l8.1 2.6l1.2 7.4l-6.8 4.8l-8 -2.6l-1.3 -7.4zM1176.5 338.7l8 2.6l1.3 7.4l-6.9 4.8l-8 -2.6l-1.2 -7.4zM1194.1 336.1l8 2.7l1.2 7.4l-6.8 4.7l-8 -2.6l-1.3 -7.4zM1211.6 333.6l8 2.6l1.3 7.4l-6.8 4.8l-8.1 -2.6l-1.2 -7.4zM1229.2 331l8 2.6l1.2 7.4l-6.8 4.8l-8 -2.6l-1.2 -7.4zM1246.7 328.4l8 2.7l1.3 7.4l-6.8 4.7l-8.1 -2.6l-1.2 -7.4zM1264.3 325.9l8 2.6l1.2 7.4l-6.8 4.8l-8 -2.6l-1.2 -7.4zM1281.8 323.3l8.1 2.6l1.2 7.4l-6.8 4.8l-8.1 -2.6l-1.2 -7.4zM1299.4 320.7l8 2.7l1.2 7.4l-6.8 4.7l-8 -2.6l-1.2 -7.4zM1316.9 318.2l8.1 2.6l1.2 7.4l-6.8 4.8l-8 -2.6l-1.3 -7.4zM1334.5 315.6l8 2.6l1.2 7.4l-6.8 4.8l-8 -2.6l-1.2 -7.4zM1352 313l8.1 2.7l1.2 7.4l-6.8 4.7l-8 -2.6l-1.3 -7.4zM1369.6 310.5l8 2.6l1.3 7.4l-6.9 4.8l-8 -2.6l-1.2 -7.4zM1387.2 307.9l8 2.6l1.2 7.4l-6.8 4.8l-8 -2.6l-1.3 -7.4zM1404.7 305.4l8 2.6l1.3 7.4l-6.8 4.7l-8.1 -2.6l-1.2 -7.4zM1422.3 302.8l8 2.6l1.2 7.4l-6.8 4.8l-8 -2.6l-1.2 -7.4zM1439.8 300.2l8.1 2.6l1.2 7.4l-6.8 4.8l-8.1 -2.6l-1.2 -7.4zM1457.4 297.7l8 2.6l1.2 7.4l-6.8 4.8l-8 -2.7l-1.2 -7.4zM1474.9 295.1l8.1 2.6l1.2 7.4l-6.8 4.8l-8.1 -2.6l-1.2 -7.4zM1492.5 292.5l8 2.6l1.2 7.4l-6.8 4.8l-8 -2.6l-1.2 -7.4zM1510 290l8.1 2.6l1.2 7.4l-6.8 4.8l-8 -2.7l-1.3 -7.4zM1527.6 287.4l8 2.6l1.3 7.4l-6.9 4.8l-8 -2.6l-1.2 -7.4zM1545.2 284.8l8 2.6l1.2 7.4l-6.8 4.8l-8 -2.6l-1.3 -7.4zM1562.7 282.3l8 2.6l1.3 7.4l-6.8 4.8l-8.1 -2.7l-1.2 -7.4zM1580.3 279.7l8 2.6l1.2 7.4l-6.8 4.8l-8 -2.6l-1.2 -7.4zM1597.8 277.1l8 2.6l1.3 7.4l-6.8 4.8l-8.1 -2.6l-1.2 -7.4zM1615.4 274.6l8 2.6l1.2 7.4l-6.8 4.8l-8 -2.7l-1.2 -7.4zM1632.9 272l8.1 2.6l1.2 7.4l-6.8 4.8l-8.1 -2.6l-1.2 -7.4zM1650.5 269.4l8 2.6l1.2 7.4l-6.8 4.8l-8 -2.6l-1.2 -7.4zM1668 266.9l8.1 2.6l1.2 7.4l-6.8 4.8l-8 -2.7l-1.3 -7.4zM1685.6 264.3l8 2.6l1.2 7.4l-6.8 4.8l-8 -2.6l-1.2 -7.4zM1703.1 261.7l8.1 2.6l1.2 7.4l-6.8 4.8l-8 -2.6l-1.3 -7.4zM1720.7 259.2l8 2.6l1.3 7.4l-6.9 4.8l-8 -2.7l-1.2 -7.4zM1738.3 256.6l8 2.6l1.2 7.4l-6.8 4.8l-8 -2.6l-1.3 -7.4zM1755.8 254l8 2.6l1.3 7.4l-6.8 4.8l-8.1 -2.6l-1.2 -7.4zM1773.4 251.5l8 2.6l1.2 7.4l-6.8 4.8l-8 -2.7l-1.2 -7.4zM799.7 412.2l8.1 2.6l1.2 7.4l-6.8 4.8l-8.1 -2.7l-1.2 -7.4zM817.3 409.6l8 2.6l1.2 7.4l-6.8 4.8l-8 -2.6l-1.2 -7.4zM834.8 407l8.1 2.6l1.2 7.4l-6.8 4.8l-8 -2.6l-1.3 -7.4zM852.4 404.5l8 2.6l1.2 7.4l-6.8 4.8l-8 -2.7l-1.2 -7.4zM869.9 401.9l8.1 2.6l1.2 7.4l-6.8 4.8l-8 -2.6l-1.3 -7.4zM887.5 399.3l8 2.6l1.3 7.4l-6.8 4.8l-8.1 -2.6l-1.2 -7.4zM905.1 396.8l8 2.6l1.2 7.4l-6.8 4.8l-8 -2.7l-1.3 -7.4zM922.6 394.2l8 2.6l1.3 7.4l-6.8 4.8l-8.1 -2.6l-1.2 -7.4zM940.2 391.6l8 2.6l1.2 7.4l-6.8 4.8l-8 -2.6l-1.2 -7.4zM957.7 389.1l8.1 2.6l1.2 7.4l-6.8 4.8l-8.1 -2.7l-1.2 -7.4zM975.3 386.5l8 2.6l1.2 7.4l-6.8 4.8l-8 -2.6l-1.2 -7.4zM992.8 383.9l8.1 2.6l1.2 7.4l-6.8 4.8l-8.1 -2.6l-1.2 -7.4zM1010.4 381.4l8 2.6l1.2 7.4l-6.8 4.8l-8 -2.7l-1.2 -7.4zM1027.9 378.8l8.1 2.6l1.2 7.4l-6.8 4.8l-8 -2.6l-1.3 -7.4zM1045.5 376.2l8 2.6l1.3 7.4l-6.9 4.8l-8 -2.6l-1.2 -7.4zM1063.1 373.7l8 2.6l1.2 7.4l-6.8 4.8l-8 -2.7l-1.3 -7.4zM1080.6 371.1l8 2.6l1.3 7.4l-6.8 4.8l-8.1 -2.6l-1.2 -7.4zM1098.2 368.5l8 2.6l1.2 7.4l-6.8 4.8l-8 -2.6l-1.2 -7.4zM1115.7 366l8.1 2.6l1.2 7.4l-6.8 4.8l-8.1 -2.7l-1.2 -7.4zM1133.3 363.4l8 2.6l1.2 7.4l-6.8 4.8l-8 -2.6l-1.2 -7.4zM1150.8 360.8l8.1 2.6l1.2 7.4l-6.8 4.8l-8.1 -2.6l-1.2 -7.4zM1168.4 358.3l8 2.6l1.2 7.4l-6.8 4.8l-8 -2.6l-1.2 -7.4zM1185.9 355.7l8.1 2.6l1.2 7.4l-6.8 4.8l-8 -2.6l-1.3 -7.4zM1203.5 353.1l8 2.6l1.2 7.4l-6.8 4.8l-8 -2.6l-1.2 -7.4zM1221 350.6l8.1 2.6l1.2 7.4l-6.8 4.8l-8 -2.6l-1.3 -7.4zM1238.6 348l8 2.6l1.3 7.4l-6.8 4.8l-8.1 -2.6l-1.2 -7.4zM1256.2 345.4l8 2.7l1.2 7.4l-6.8 4.7l-8 -2.6l-1.3 -7.4zM1273.7 342.9l8 2.6l1.3 7.4l-6.8 4.8l-8.1 -2.6l-1.2 -7.4zM1291.3 340.3l8 2.6l1.2 7.4l-6.8 4.8l-8 -2.6l-1.2 -7.4zM1308.8 337.7l8.1 2.7l1.2 7.4l-6.8 4.7l-8.1 -2.6l-1.2 -7.4zM1326.4 335.2l8 2.6l1.2 7.4l-6.8 4.8l-8 -2.6l-1.2 -7.4zM1343.9 332.6l8.1 2.6l1.2 7.4l-6.8 4.8l-8.1 -2.6l-1.2 -7.4zM1361.5 330l8 2.7l1.2 7.4l-6.8 4.7l-8 -2.6l-1.2 -7.4zM1379 327.5l8.1 2.6l1.2 7.4l-6.8 4.8l-8 -2.6l-1.3 -7.4zM1396.6 324.9l8 2.6l1.3 7.4l-6.9 4.8l-8 -2.6l-1.2 -7.4zM1414.2 322.3l8 2.7l1.2 7.4l-6.8 4.7l-8 -2.6l-1.3 -7.4zM1431.7 319.8l8 2.6l1.3 7.4l-6.8 4.8l-8.1 -2.6l-1.2 -7.4zM1449.3 317.2l8 2.6l1.2 7.4l-6.8 4.8l-8 -2.6l-1.2 -7.4zM1466.8 314.6l8.1 2.7l1.2 7.4l-6.8 4.7l-8.1 -2.6l-1.2 -7.4zM1484.4 312.1l8 2.6l1.2 7.4l-6.8 4.8l-8 -2.6l-1.2 -7.4zM1501.9 309.5l8.1 2.6l1.2 7.4l-6.8 4.8l-8.1 -2.6l-1.2 -7.4zM1519.5 306.9l8 2.7l1.2 7.4l-6.8 4.7l-8 -2.6l-1.2 -7.4zM1537 304.4l8.1 2.6l1.2 7.4l-6.8 4.8l-8 -2.6l-1.3 -7.4zM1554.6 301.8l8 2.6l1.2 7.4l-6.8 4.8l-8 -2.6l-1.2 -7.4zM1572.1 299.2l8.1 2.7l1.2 7.4l-6.8 4.7l-8 -2.6l-1.3 -7.4zM1589.7 296.7l8 2.6l1.3 7.4l-6.8 4.8l-8.1 -2.6l-1.2 -7.4zM1607.3 294.1l8 2.6l1.2 7.4l-6.8 4.8l-8 -2.6l-1.3 -7.4zM1624.8 291.6l8 2.6l1.3 7.4l-6.8 4.7l-8.1 -2.6l-1.2 -7.4zM1642.4 289l8 2.6l1.2 7.4l-6.8 4.8l-8 -2.6l-1.2 -7.4zM1659.9 286.4l8.1 2.6l1.2 7.4l-6.8 4.8l-8.1 -2.6l-1.2 -7.4zM1677.5 283.9l8 2.6l1.2 7.4l-6.8 4.8l-8 -2.7l-1.2 -7.4zM1695 281.3l8.1 2.6l1.2 7.4l-6.8 4.8l-8.1 -2.6l-1.2 -7.4zM1712.6 278.7l8 2.6l1.2 7.4l-6.8 4.8l-8 -2.6l-1.2 -7.4zM1730.1 276.2l8.1 2.6l1.2 7.4l-6.8 4.8l-8 -2.7l-1.3 -7.4zM1747.7 273.6l8 2.6l1.3 7.4l-6.9 4.8l-8 -2.6l-1.2 -7.4zM1765.3 271l8 2.6l1.2 7.4l-6.8 4.8l-8 -2.6l-1.3 -7.4zM1782.8 268.5l8 2.6l1.3 7.4l-6.8 4.8l-8.1 -2.7l-1.2 -7.4zM795.9 428.9l8 2.7l1.2 7.4l-6.8 4.7l-8 -2.6l-1.2 -7.4zM813.4 426.4l8.1 2.6l1.2 7.4l-6.8 4.8l-8.1 -2.6l-1.2 -7.4zM831 423.8l8 2.6l1.2 7.4l-6.8 4.8l-8 -2.6l-1.2 -7.4zM848.5 421.2l8.1 2.7l1.2 7.4l-6.8 4.7l-8.1 -2.6l-1.2 -7.4zM866.1 418.7l8 2.6l1.2 7.4l-6.8 4.8l-8 -2.6l-1.2 -7.4zM883.6 416.1l8.1 2.6l1.2 7.4l-6.8 4.8l-8 -2.6l-1.3 -7.4zM901.2 413.5l8 2.7l1.3 7.4l-6.9 4.7l-8 -2.6l-1.2 -7.4zM918.8 411l8 2.6l1.2 7.4l-6.8 4.8l-8 -2.6l-1.3 -7.4zM936.3 408.4l8 2.6l1.3 7.4l-6.8 4.8l-8.1 -2.6l-1.2 -7.4zM953.9 405.9l8 2.6l1.2 7.4l-6.8 4.7l-8 -2.6l-1.2 -7.4zM971.4 403.3l8.1 2.6l1.2 7.4l-6.8 4.8l-8.1 -2.6l-1.2 -7.4zM989 400.7l8 2.6l1.2 7.4l-6.8 4.8l-8 -2.6l-1.2 -7.4zM1006.5 398.2l8.1 2.6l1.2 7.4l-6.8 4.8l-8.1 -2.7l-1.2 -7.4zM1024.1 395.6l8 2.6l1.2 7.4l-6.8 4.8l-8 -2.6l-1.2 -7.4zM1041.6 393l8.1 2.6l1.2 7.4l-6.8 4.8l-8 -2.6l-1.3 -7.4zM1059.2 390.5l8 2.6l1.3 7.4l-6.9 4.8l-8 -2.7l-1.2 -7.4zM1076.8 387.9l8 2.6l1.2 7.4l-6.8 4.8l-8 -2.6l-1.3 -7.4zM1094.3 385.3l8 2.6l1.3 7.4l-6.8 4.8l-8.1 -2.6l-1.2 -7.4zM1111.9 382.8l8 2.6l1.2 7.4l-6.8 4.8l-8 -2.7l-1.2 -7.4zM1129.4 380.2l8 2.6l1.3 7.4l-6.8 4.8l-8.1 -2.6l-1.2 -7.4zM1147 377.6l8 2.6l1.2 7.4l-6.8 4.8l-8 -2.6l-1.2 -7.4zM1164.5 375.1l8.1 2.6l1.2 7.4l-6.8 4.8l-8.1 -2.7l-1.2 -7.4zM1182.1 372.5l8 2.6l1.2 7.4l-6.8 4.8l-8 -2.6l-1.2 -7.4zM1199.6 369.9l8.1 2.6l1.2 7.4l-6.8 4.8l-8.1 -2.6l-1.2 -7.4zM1217.2 367.4l8 2.6l1.2 7.4l-6.8 4.8l-8 -2.7l-1.2 -7.4zM1234.7 364.8l8.1 2.6l1.2 7.4l-6.8 4.8l-8 -2.6l-1.3 -7.4zM1252.3 362.2l8 2.6l1.3 7.4l-6.9 4.8l-8 -2.6l-1.2 -7.4zM1269.9 359.7l8 2.6l1.2 7.4l-6.8 4.8l-8 -2.7l-1.3 -7.4zM1287.4 357.1l8 2.6l1.3 7.4l-6.8 4.8l-8.1 -2.6l-1.2 -7.4zM1305 354.5l8 2.6l1.2 7.4l-6.8 4.8l-8 -2.6l-1.2 -7.4zM1322.5 352l8.1 2.6l1.2 7.4l-6.8 4.8l-8.1 -2.7l-1.2 -7.4zM1340.1 349.4l8 2.6l1.2 7.4l-6.8 4.8l-8 -2.6l-1.2 -7.4zM1357.6 346.8l8.1 2.6l1.2 7.4l-6.8 4.8l-8.1 -2.6l-1.2 -7.4zM1375.2 344.3l8 2.6l1.2 7.4l-6.8 4.8l-8 -2.6l-1.2 -7.4zM1392.7 341.7l8.1 2.6l1.2 7.4l-6.8 4.8l-8 -2.6l-1.3 -7.4zM1410.3 339.1l8 2.6l1.3 7.4l-6.9 4.8l-8 -2.6l-1.2 -7.4zM1427.9 336.6l8 2.6l1.2 7.4l-6.8 4.8l-8 -2.6l-1.3 -7.4zM1445.4 334l8 2.6l1.3 7.4l-6.8 4.8l-8.1 -2.6l-1.2 -7.4zM1463 331.4l8 2.7l1.2 7.4l-6.8 4.7l-8 -2.6l-1.2 -7.4zM1480.5 328.9l8 2.6l1.3 7.4l-6.8 4.8l-8.1 -2.6l-1.2 -7.4zM1498.1 326.3l8 2.6l1.2 7.4l-6.8 4.8l-8 -2.6l-1.2 -7.4zM1515.6 323.7l8.1 2.7l1.2 7.4l-6.8 4.7l-8.1 -2.6l-1.2 -7.4zM1533.2 321.2l8 2.6l1.2 7.4l-6.8 4.8l-8 -2.6l-1.2 -7.4zM1550.7 318.6l8.1 2.6l1.2 7.4l-6.8 4.8l-8.1 -2.6l-1.2 -7.4zM1568.3 316l8 2.7l1.2 7.4l-6.8 4.7l-8 -2.6l-1.2 -7.4zM1585.8 313.5l8.1 2.6l1.2 7.4l-6.8 4.8l-8 -2.6l-1.3 -7.4zM1603.4 310.9l8 2.6l1.3 7.4l-6.9 4.8l-8 -2.6l-1.2 -7.4zM1621 308.3l8 2.7l1.2 7.4l-6.8 4.7l-8 -2.6l-1.3 -7.4zM1638.5 305.8l8 2.6l1.3 7.4l-6.8 4.8l-8.1 -2.6l-1.2 -7.4zM1656.1 303.2l8 2.6l1.2 7.4l-6.8 4.8l-8 -2.6l-1.2 -7.4zM1673.6 300.6l8.1 2.7l1.2 7.4l-6.8 4.7l-8.1 -2.6l-1.2 -7.4zM1691.2 298.1l8 2.6l1.2 7.4l-6.8 4.8l-8 -2.6l-1.2 -7.4zM1708.7 295.5l8.1 2.6l1.2 7.4l-6.8 4.8l-8.1 -2.6l-1.2 -7.4zM1726.3 292.9l8 2.7l1.2 7.4l-6.8 4.7l-8 -2.6l-1.2 -7.4zM1743.8 290.4l8.1 2.6l1.2 7.4l-6.8 4.8l-8 -2.6l-1.3 -7.4zM1761.4 287.8l8 2.6l1.3 7.4l-6.9 4.8l-8 -2.6l-1.2 -7.4zM1779 285.2l8 2.7l1.2 7.4l-6.8 4.7l-8 -2.6l-1.3 -7.4zM805.3 445.9l8 2.7l1.3 7.4l-6.8 4.7l-8.1 -2.6l-1.2 -7.4zM822.9 443.4l8 2.6l1.2 7.4l-6.8 4.8l-8 -2.6l-1.2 -7.4zM840.4 440.8l8.1 2.6l1.2 7.4l-6.8 4.8l-8.1 -2.6l-1.2 -7.4zM858 438.2l8 2.7l1.2 7.4l-6.8 4.7l-8 -2.6l-1.2 -7.4zM875.5 435.7l8.1 2.6l1.2 7.4l-6.8 4.8l-8.1 -2.6l-1.2 -7.4zM893.1 433.1l8 2.6l1.2 7.4l-6.8 4.8l-8 -2.6l-1.2 -7.4zM910.6 430.5l8.1 2.7l1.2 7.4l-6.8 4.7l-8 -2.6l-1.3 -7.4zM928.2 428l8 2.6l1.3 7.4l-6.9 4.8l-8 -2.6l-1.2 -7.4zM945.8 425.4l8 2.6l1.2 7.4l-6.8 4.8l-8 -2.6l-1.3 -7.4zM963.3 422.8l8 2.7l1.3 7.4l-6.8 4.7l-8.1 -2.6l-1.2 -7.4zM980.9 420.3l8 2.6l1.2 7.4l-6.8 4.8l-8 -2.6l-1.2 -7.4zM998.4 417.7l8.1 2.6l1.2 7.4l-6.8 4.8l-8.1 -2.6l-1.2 -7.4zM1016 415.1l8 2.7l1.2 7.4l-6.8 4.7l-8 -2.6l-1.2 -7.4zM1033.5 412.6l8.1 2.6l1.2 7.4l-6.8 4.8l-8.1 -2.6l-1.2 -7.4zM1051.1 410l8 2.6l1.2 7.4l-6.8 4.8l-8 -2.6l-1.2 -7.4zM1068.6 407.4l8.1 2.7l1.2 7.4l-6.8 4.7l-8 -2.6l-1.3 -7.4zM1086.2 404.9l8 2.6l1.2 7.4l-6.8 4.8l-8 -2.6l-1.2 -7.4zM1103.7 402.3l8.1 2.6l1.2 7.4l-6.8 4.8l-8 -2.6l-1.3 -7.4zM1121.3 399.7l8 2.7l1.3 7.4l-6.9 4.7l-8 -2.6l-1.2 -7.4zM1138.9 397.2l8 2.6l1.2 7.4l-6.8 4.8l-8 -2.6l-1.3 -7.4zM1156.4 394.6l8 2.6l1.3 7.4l-6.8 4.8l-8.1 -2.6l-1.2 -7.4zM1174 392.1l8 2.6l1.2 7.4l-6.8 4.7l-8 -2.6l-1.2 -7.4zM1191.5 389.5l8.1 2.6l1.2 7.4l-6.8 4.8l-8.1 -2.6l-1.2 -7.4zM1209.1 386.9l8 2.6l1.2 7.4l-6.8 4.8l-8 -2.6l-1.2 -7.4zM1226.6 384.4l8.1 2.6l1.2 7.4l-6.8 4.8l-8.1 -2.7l-1.2 -7.4zM1244.2 381.8l8 2.6l1.2 7.4l-6.8 4.8l-8 -2.6l-1.2 -7.4zM1261.7 379.2l8.1 2.6l1.2 7.4l-6.8 4.8l-8 -2.6l-1.3 -7.4zM1279.3 376.7l8 2.6l1.3 7.4l-6.9 4.8l-8 -2.7l-1.2 -7.4zM1296.9 374.1l8 2.6l1.2 7.4l-6.8 4.8l-8 -2.6l-1.3 -7.4zM1314.4 371.5l8 2.6l1.3 7.4l-6.8 4.8l-8.1 -2.6l-1.2 -7.4zM1332 369l8 2.6l1.2 7.4l-6.8 4.8l-8 -2.7l-1.2 -7.4zM1349.5 366.4l8.1 2.6l1.2 7.4l-6.8 4.8l-8.1 -2.6l-1.2 -7.4zM1367.1 363.8l8 2.6l1.2 7.4l-6.8 4.8l-8 -2.6l-1.2 -7.4zM1384.6 361.3l8.1 2.6l1.2 7.4l-6.8 4.8l-8.1 -2.7l-1.2 -7.4zM1402.2 358.7l8 2.6l1.2 7.4l-6.8 4.8l-8 -2.6l-1.2 -7.4zM1419.7 356.1l8.1 2.6l1.2 7.4l-6.8 4.8l-8 -2.6l-1.3 -7.4zM1437.3 353.6l8 2.6l1.2 7.4l-6.8 4.8l-8 -2.7l-1.2 -7.4zM1454.8 351l8.1 2.6l1.2 7.4l-6.8 4.8l-8 -2.6l-1.3 -7.4zM1472.4 348.4l8 2.6l1.3 7.4l-6.9 4.8l-8 -2.6l-1.2 -7.4zM1490 345.9l8 2.6l1.2 7.4l-6.8 4.8l-8 -2.7l-1.3 -7.4zM1507.5 343.3l8 2.6l1.3 7.4l-6.8 4.8l-8.1 -2.6l-1.2 -7.4zM1525.1 340.7l8 2.6l1.2 7.4l-6.8 4.8l-8 -2.6l-1.2 -7.4zM1542.6 338.2l8.1 2.6l1.2 7.4l-6.8 4.8l-8.1 -2.7l-1.2 -7.4zM1560.2 335.6l8 2.6l1.2 7.4l-6.8 4.8l-8 -2.6l-1.2 -7.4zM1577.7 333l8.1 2.6l1.2 7.4l-6.8 4.8l-8.1 -2.6l-1.2 -7.4zM1595.3 330.5l8 2.6l1.2 7.4l-6.8 4.8l-8 -2.6l-1.2 -7.4zM1612.8 327.9l8.1 2.6l1.2 7.4l-6.8 4.8l-8 -2.6l-1.3 -7.4zM1630.4 325.3l8 2.6l1.3 7.4l-6.9 4.8l-8 -2.6l-1.2 -7.4zM1648 322.8l8 2.6l1.2 7.4l-6.8 4.8l-8 -2.6l-1.3 -7.4zM1665.5 320.2l8 2.6l1.3 7.4l-6.8 4.8l-8.1 -2.6l-1.2 -7.4zM1683.1 317.6l8 2.7l1.2 7.4l-6.8 4.7l-8 -2.6l-1.2 -7.4zM1700.6 315.1l8.1 2.6l1.2 7.4l-6.8 4.8l-8.1 -2.6l-1.2 -7.4zM1718.2 312.5l8 2.6l1.2 7.4l-6.8 4.8l-8 -2.6l-1.2 -7.4zM1735.7 309.9l8.1 2.7l1.2 7.4l-6.8 4.7l-8.1 -2.6l-1.2 -7.4zM1753.3 307.4l8 2.6l1.2 7.4l-6.8 4.8l-8 -2.6l-1.2 -7.4zM1770.8 304.8l8.1 2.6l1.2 7.4l-6.8 4.8l-8 -2.6l-1.3 -7.4zM1788.4 302.2l8 2.7l1.2 7.4l-6.8 4.7l-8 -2.6l-1.2 -7.4zM801.5 462.7l8 2.6l1.2 7.4l-6.8 4.8l-8 -2.6l-1.3 -7.4zM819 460.2l8 2.6l1.3 7.4l-6.8 4.8l-8.1 -2.7l-1.2 -7.4zM836.6 457.6l8 2.6l1.2 7.4l-6.8 4.8l-8 -2.6l-1.2 -7.4zM854.1 455l8.1 2.6l1.2 7.4l-6.8 4.8l-8.1 -2.6l-1.2 -7.4zM871.7 452.5l8 2.6l1.2 7.4l-6.8 4.8l-8 -2.7l-1.2 -7.4zM889.2 449.9l8.1 2.6l1.2 7.4l-6.8 4.8l-8.1 -2.6l-1.2 -7.4zM906.8 447.3l8 2.6l1.2 7.4l-6.8 4.8l-8 -2.6l-1.2 -7.4zM924.3 444.8l8.1 2.6l1.2 7.4l-6.8 4.8l-8 -2.6l-1.3 -7.4zM941.9 442.2l8 2.6l1.3 7.4l-6.9 4.8l-8 -2.6l-1.2 -7.4zM959.4 439.6l8.1 2.6l1.2 7.4l-6.8 4.8l-8 -2.6l-1.3 -7.4zM977 437.1l8 2.6l1.3 7.4l-6.8 4.8l-8.1 -2.6l-1.2 -7.4zM994.6 434.5l8 2.6l1.2 7.4l-6.8 4.8l-8 -2.6l-1.2 -7.4zM1012.1 431.9l8 2.7l1.3 7.4l-6.8 4.7l-8.1 -2.6l-1.2 -7.4zM1029.7 429.4l8 2.6l1.2 7.4l-6.8 4.8l-8 -2.6l-1.2 -7.4zM1047.2 426.8l8.1 2.6l1.2 7.4l-6.8 4.8l-8.1 -2.6l-1.2 -7.4zM1064.8 424.2l8 2.7l1.2 7.4l-6.8 4.7l-8 -2.6l-1.2 -7.4zM1082.3 421.7l8.1 2.6l1.2 7.4l-6.8 4.8l-8.1 -2.6l-1.2 -7.4zM1099.9 419.1l8 2.6l1.2 7.4l-6.8 4.8l-8 -2.6l-1.2 -7.4zM1117.4 416.5l8.1 2.7l1.2 7.4l-6.8 4.7l-8 -2.6l-1.3 -7.4zM1135 414l8 2.6l1.3 7.4l-6.9 4.8l-8 -2.6l-1.2 -7.4zM1152.6 411.4l8 2.6l1.2 7.4l-6.8 4.8l-8 -2.6l-1.3 -7.4zM1170.1 408.8l8 2.7l1.3 7.4l-6.8 4.7l-8.1 -2.6l-1.2 -7.4zM1187.7 406.3l8 2.6l1.2 7.4l-6.8 4.8l-8 -2.6l-1.2 -7.4zM1205.2 403.7l8.1 2.6l1.2 7.4l-6.8 4.8l-8.1 -2.6l-1.2 -7.4zM1222.8 401.1l8 2.7l1.2 7.4l-6.8 4.7l-8 -2.6l-1.2 -7.4zM1240.3 398.6l8.1 2.6l1.2 7.4l-6.8 4.8l-8.1 -2.6l-1.2 -7.4zM1257.9 396l8 2.6l1.2 7.4l-6.8 4.8l-8 -2.6l-1.2 -7.4zM1275.4 393.4l8.1 2.7l1.2 7.4l-6.8 4.7l-8 -2.6l-1.3 -7.4zM1293 390.9l8 2.6l1.3 7.4l-6.9 4.8l-8 -2.6l-1.2 -7.4zM1310.5 388.3l8.1 2.6l1.2 7.4l-6.8 4.8l-8 -2.6l-1.3 -7.4zM1328.1 385.7l8 2.7l1.3 7.4l-6.8 4.7l-8.1 -2.6l-1.2 -7.4zM1345.7 383.2l8 2.6l1.2 7.4l-6.8 4.8l-8 -2.6l-1.2 -7.4zM1363.2 380.6l8 2.6l1.3 7.4l-6.8 4.8l-8.1 -2.6l-1.2 -7.4zM1380.8 378.1l8 2.6l1.2 7.4l-6.8 4.7l-8 -2.6l-1.2 -7.4zM1398.3 375.5l8.1 2.6l1.2 7.4l-6.8 4.8l-8.1 -2.6l-1.2 -7.4zM1415.9 372.9l8 2.6l1.2 7.4l-6.8 4.8l-8 -2.6l-1.2 -7.4zM1433.4 370.4l8.1 2.6l1.2 7.4l-6.8 4.8l-8.1 -2.7l-1.2 -7.4zM1451 367.8l8 2.6l1.2 7.4l-6.8 4.8l-8 -2.6l-1.2 -7.4zM1468.5 365.2l8.1 2.6l1.2 7.4l-6.8 4.8l-8 -2.6l-1.3 -7.4zM1486.1 362.7l8 2.6l1.3 7.4l-6.9 4.8l-8 -2.7l-1.2 -7.4zM1503.7 360.1l8 2.6l1.2 7.4l-6.8 4.8l-8 -2.6l-1.3 -7.4zM1521.2 357.5l8 2.6l1.3 7.4l-6.8 4.8l-8.1 -2.6l-1.2 -7.4zM1538.8 355l8 2.6l1.2 7.4l-6.8 4.8l-8 -2.7l-1.2 -7.4zM1556.3 352.4l8.1 2.6l1.2 7.4l-6.8 4.8l-8.1 -2.6l-1.2 -7.4zM1573.9 349.8l8 2.6l1.2 7.4l-6.8 4.8l-8 -2.6l-1.2 -7.4zM1591.4 347.3l8.1 2.6l1.2 7.4l-6.8 4.8l-8.1 -2.7l-1.2 -7.4zM1609 344.7l8 2.6l1.2 7.4l-6.8 4.8l-8 -2.6l-1.2 -7.4zM1626.5 342.1l8.1 2.6l1.2 7.4l-6.8 4.8l-8 -2.6l-1.3 -7.4zM1644.1 339.6l8 2.6l1.3 7.4l-6.9 4.8l-8 -2.7l-1.2 -7.4zM1661.6 337l8.1 2.6l1.2 7.4l-6.8 4.8l-8 -2.6l-1.3 -7.4zM1679.2 334.4l8 2.6l1.3 7.4l-6.8 4.8l-8.1 -2.6l-1.2 -7.4zM1696.8 331.9l8 2.6l1.2 7.4l-6.8 4.8l-8 -2.7l-1.2 -7.4zM1714.3 329.3l8 2.6l1.3 7.4l-6.8 4.8l-8.1 -2.6l-1.2 -7.4zM1731.9 326.7l8 2.6l1.2 7.4l-6.8 4.8l-8 -2.6l-1.2 -7.4zM1749.4 324.2l8.1 2.6l1.2 7.4l-6.8 4.8l-8.1 -2.7l-1.2 -7.4zM1767 321.6l8 2.6l1.2 7.4l-6.8 4.8l-8 -2.6l-1.2 -7.4zM1784.5 319l8.1 2.6l1.2 7.4l-6.8 4.8l-8.1 -2.6l-1.2 -7.4zM810.9 479.7l8 2.6l1.3 7.4l-6.9 4.8l-8 -2.6l-1.2 -7.4zM828.5 477.2l8 2.6l1.2 7.4l-6.8 4.8l-8 -2.7l-1.3 -7.4zM846 474.6l8 2.6l1.3 7.4l-6.8 4.8l-8.1 -2.6l-1.2 -7.4zM863.6 472l8 2.6l1.2 7.4l-6.8 4.8l-8 -2.6l-1.2 -7.4zM881.1 469.5l8 2.6l1.3 7.4l-6.8 4.8l-8.1 -2.7l-1.2 -7.4zM898.7 466.9l8 2.6l1.2 7.4l-6.8 4.8l-8 -2.6l-1.2 -7.4zM916.2 464.3l8.1 2.6l1.2 7.4l-6.8 4.8l-8.1 -2.6l-1.2 -7.4zM933.8 461.8l8 2.6l1.2 7.4l-6.8 4.8l-8 -2.7l-1.2 -7.4zM951.3 459.2l8.1 2.6l1.2 7.4l-6.8 4.8l-8 -2.6l-1.3 -7.4zM968.9 456.6l8 2.6l1.2 7.4l-6.8 4.8l-8 -2.6l-1.2 -7.4zM986.4 454.1l8.1 2.6l1.2 7.4l-6.8 4.8l-8 -2.7l-1.3 -7.4zM1004 451.5l8 2.6l1.3 7.4l-6.9 4.8l-8 -2.6l-1.2 -7.4zM1021.6 448.9l8 2.6l1.2 7.4l-6.8 4.8l-8 -2.6l-1.3 -7.4zM1039.1 446.4l8 2.6l1.3 7.4l-6.8 4.8l-8.1 -2.7l-1.2 -7.4zM1056.7 443.8l8 2.6l1.2 7.4l-6.8 4.8l-8 -2.6l-1.2 -7.4zM1074.2 441.2l8.1 2.6l1.2 7.4l-6.8 4.8l-8.1 -2.6l-1.2 -7.4zM1091.8 438.7l8 2.6l1.2 7.4l-6.8 4.8l-8 -2.7l-1.2 -7.4zM1109.3 436.1l8.1 2.6l1.2 7.4l-6.8 4.8l-8.1 -2.6l-1.2 -7.4zM1126.9 433.5l8 2.6l1.2 7.4l-6.8 4.8l-8 -2.6l-1.2 -7.4zM1144.4 431l8.1 2.6l1.2 7.4l-6.8 4.8l-8 -2.6l-1.3 -7.4zM1162 428.4l8 2.6l1.3 7.4l-6.9 4.8l-8 -2.6l-1.2 -7.4zM1179.6 425.8l8 2.6l1.2 7.4l-6.8 4.8l-8 -2.6l-1.3 -7.4zM1197.1 423.3l8 2.6l1.3 7.4l-6.8 4.8l-8.1 -2.6l-1.2 -7.4zM1214.7 420.7l8 2.6l1.2 7.4l-6.8 4.8l-8 -2.6l-1.2 -7.4zM1232.2 418.1l8 2.7l1.3 7.4l-6.8 4.7l-8.1 -2.6l-1.2 -7.4zM1249.8 415.6l8 2.6l1.2 7.4l-6.8 4.8l-8 -2.6l-1.2 -7.4zM1267.3 413l8.1 2.6l1.2 7.4l-6.8 4.8l-8.1 -2.6l-1.2 -7.4zM1284.9 410.4l8 2.7l1.2 7.4l-6.8 4.7l-8 -2.6l-1.2 -7.4zM1302.4 407.9l8.1 2.6l1.2 7.4l-6.8 4.8l-8 -2.6l-1.3 -7.4zM1320 405.3l8 2.6l1.2 7.4l-6.8 4.8l-8 -2.6l-1.2 -7.4zM1337.5 402.7l8.1 2.7l1.2 7.4l-6.8 4.7l-8 -2.6l-1.3 -7.4zM1355.1 400.2l8 2.6l1.3 7.4l-6.9 4.8l-8 -2.6l-1.2 -7.4zM1372.7 397.6l8 2.6l1.2 7.4l-6.8 4.8l-8 -2.6l-1.3 -7.4zM1390.2 395l8 2.7l1.3 7.4l-6.8 4.7l-8.1 -2.6l-1.2 -7.4zM1407.8 392.5l8 2.6l1.2 7.4l-6.8 4.8l-8 -2.6l-1.2 -7.4zM1425.3 389.9l8.1 2.6l1.2 7.4l-6.8 4.8l-8.1 -2.6l-1.2 -7.4zM1442.9 387.3l8 2.7l1.2 7.4l-6.8 4.7l-8 -2.6l-1.2 -7.4zM1460.4 384.8l8.1 2.6l1.2 7.4l-6.8 4.8l-8.1 -2.6l-1.2 -7.4zM1478 382.2l8 2.6l1.2 7.4l-6.8 4.8l-8 -2.6l-1.2 -7.4zM1495.5 379.6l8.1 2.7l1.2 7.4l-6.8 4.7l-8 -2.6l-1.3 -7.4zM1513.1 377.1l8 2.6l1.3 7.4l-6.9 4.8l-8 -2.6l-1.2 -7.4zM1530.7 374.5l8 2.6l1.2 7.4l-6.8 4.8l-8 -2.6l-1.3 -7.4zM1548.2 371.9l8 2.7l1.3 7.4l-6.8 4.7l-8.1 -2.6l-1.2 -7.4zM1565.8 369.4l8 2.6l1.2 7.4l-6.8 4.8l-8 -2.6l-1.2 -7.4zM1583.3 366.8l8 2.6l1.3 7.4l-6.8 4.8l-8.1 -2.6l-1.2 -7.4zM1600.9 364.3l8 2.6l1.2 7.4l-6.8 4.7l-8 -2.6l-1.2 -7.4zM1618.4 361.7l8.1 2.6l1.2 7.4l-6.8 4.8l-8.1 -2.6l-1.2 -7.4zM1636 359.1l8 2.6l1.2 7.4l-6.8 4.8l-8 -2.6l-1.2 -7.4zM1653.5 356.6l8.1 2.6l1.2 7.4l-6.8 4.8l-8 -2.7l-1.3 -7.4zM1671.1 354l8 2.6l1.2 7.4l-6.8 4.8l-8 -2.6l-1.2 -7.4zM1688.6 351.4l8.1 2.6l1.2 7.4l-6.8 4.8l-8 -2.6l-1.3 -7.4zM1706.2 348.9l8 2.6l1.3 7.4l-6.9 4.8l-8 -2.7l-1.2 -7.4zM1723.8 346.3l8 2.6l1.2 7.4l-6.8 4.8l-8 -2.6l-1.3 -7.4zM1741.3 343.7l8 2.6l1.3 7.4l-6.8 4.8l-8.1 -2.6l-1.2 -7.4zM1758.9 341.2l8 2.6l1.2 7.4l-6.8 4.8l-8 -2.7l-1.2 -7.4zM1776.4 338.6l8.1 2.6l1.2 7.4l-6.8 4.8l-8.1 -2.6l-1.2 -7.4zM1794 336l8 2.6l1.2 7.4l-6.8 4.8l-8 -2.6l-1.2 -7.4zM807 496.5l8.1 2.6l1.2 7.4l-6.8 4.8l-8 -2.6l-1.3 -7.4zM824.6 493.9l8 2.7l1.2 7.4l-6.8 4.7l-8 -2.6l-1.2 -7.4zM842.1 491.4l8.1 2.6l1.2 7.4l-6.8 4.8l-8 -2.6l-1.3 -7.4zM859.7 488.8l8 2.6l1.3 7.4l-6.8 4.8l-8.1 -2.6l-1.2 -7.4zM877.3 486.2l8 2.7l1.2 7.4l-6.8 4.7l-8 -2.6l-1.3 -7.4zM894.8 483.7l8 2.6l1.3 7.4l-6.8 4.8l-8.1 -2.6l-1.2 -7.4zM912.4 481.1l8 2.6l1.2 7.4l-6.8 4.8l-8 -2.6l-1.2 -7.4zM929.9 478.6l8.1 2.6l1.2 7.4l-6.8 4.7l-8.1 -2.6l-1.2 -7.4zM947.5 476l8 2.6l1.2 7.4l-6.8 4.8l-8 -2.6l-1.2 -7.4zM965 473.4l8.1 2.6l1.2 7.4l-6.8 4.8l-8.1 -2.6l-1.2 -7.4zM982.6 470.9l8 2.6l1.2 7.4l-6.8 4.8l-8 -2.7l-1.2 -7.4zM1000.1 468.3l8.1 2.6l1.2 7.4l-6.8 4.8l-8 -2.6l-1.3 -7.4zM1017.7 465.7l8 2.6l1.3 7.4l-6.9 4.8l-8 -2.6l-1.2 -7.4zM1035.3 463.2l8 2.6l1.2 7.4l-6.8 4.8l-8 -2.7l-1.3 -7.4zM1052.8 460.6l8 2.6l1.3 7.4l-6.8 4.8l-8.1 -2.6l-1.2 -7.4zM1070.4 458l8 2.6l1.2 7.4l-6.8 4.8l-8 -2.6l-1.2 -7.4zM1087.9 455.5l8.1 2.6l1.2 7.4l-6.8 4.8l-8.1 -2.7l-1.2 -7.4zM1105.5 452.9l8 2.6l1.2 7.4l-6.8 4.8l-8 -2.6l-1.2 -7.4zM1123 450.3l8.1 2.6l1.2 7.4l-6.8 4.8l-8.1 -2.6l-1.2 -7.4zM1140.6 447.8l8 2.6l1.2 7.4l-6.8 4.8l-8 -2.7l-1.2 -7.4zM1158.1 445.2l8.1 2.6l1.2 7.4l-6.8 4.8l-8 -2.6l-1.3 -7.4zM1175.7 442.6l8 2.6l1.2 7.4l-6.8 4.8l-8 -2.6l-1.2 -7.4zM1193.2 440.1l8.1 2.6l1.2 7.4l-6.8 4.8l-8 -2.7l-1.3 -7.4zM1210.8 437.5l8 2.6l1.3 7.4l-6.8 4.8l-8.1 -2.6l-1.2 -7.4zM1228.4 434.9l8 2.6l1.2 7.4l-6.8 4.8l-8 -2.6l-1.3 -7.4zM1245.9 432.4l8 2.6l1.3 7.4l-6.8 4.8l-8.1 -2.7l-1.2 -7.4zM1263.5 429.8l8 2.6l1.2 7.4l-6.8 4.8l-8 -2.6l-1.2 -7.4zM1281 427.2l8.1 2.6l1.2 7.4l-6.8 4.8l-8.1 -2.6l-1.2 -7.4zM1298.6 424.7l8 2.6l1.2 7.4l-6.8 4.8l-8 -2.7l-1.2 -7.4zM1316.1 422.1l8.1 2.6l1.2 7.4l-6.8 4.8l-8.1 -2.6l-1.2 -7.4zM1333.7 419.5l8 2.6l1.2 7.4l-6.8 4.8l-8 -2.6l-1.2 -7.4zM1351.2 417l8.1 2.6l1.2 7.4l-6.8 4.8l-8 -2.6l-1.3 -7.4zM1368.8 414.4l8 2.6l1.3 7.4l-6.9 4.8l-8 -2.6l-1.2 -7.4zM1386.4 411.8l8 2.6l1.2 7.4l-6.8 4.8l-8 -2.6l-1.3 -7.4zM1403.9 409.3l8 2.6l1.3 7.4l-6.8 4.8l-8.1 -2.6l-1.2 -7.4zM1421.5 406.7l8 2.6l1.2 7.4l-6.8 4.8l-8 -2.6l-1.2 -7.4zM1439 404.1l8.1 2.7l1.2 7.4l-6.8 4.7l-8.1 -2.6l-1.2 -7.4zM1456.6 401.6l8 2.6l1.2 7.4l-6.8 4.8l-8 -2.6l-1.2 -7.4zM1474.1 399l8.1 2.6l1.2 7.4l-6.8 4.8l-8.1 -2.6l-1.2 -7.4zM1491.7 396.4l8 2.7l1.2 7.4l-6.8 4.7l-8 -2.6l-1.2 -7.4zM1509.2 393.9l8.1 2.6l1.2 7.4l-6.8 4.8l-8 -2.6l-1.3 -7.4zM1526.8 391.3l8 2.6l1.2 7.4l-6.8 4.8l-8 -2.6l-1.2 -7.4zM1544.3 388.7l8.1 2.7l1.2 7.4l-6.8 4.7l-8 -2.6l-1.3 -7.4zM1561.9 386.2l8 2.6l1.3 7.4l-6.8 4.8l-8.1 -2.6l-1.2 -7.4zM1579.5 383.6l8 2.6l1.2 7.4l-6.8 4.8l-8 -2.6l-1.3 -7.4zM1597 381l8 2.7l1.3 7.4l-6.8 4.7l-8.1 -2.6l-1.2 -7.4zM1614.6 378.5l8 2.6l1.2 7.4l-6.8 4.8l-8 -2.6l-1.2 -7.4zM1632.1 375.9l8.1 2.6l1.2 7.4l-6.8 4.8l-8.1 -2.6l-1.2 -7.4zM1649.7 373.3l8 2.7l1.2 7.4l-6.8 4.7l-8 -2.6l-1.2 -7.4zM1667.2 370.8l8.1 2.6l1.2 7.4l-6.8 4.8l-8.1 -2.6l-1.2 -7.4zM1684.8 368.2l8 2.6l1.2 7.4l-6.8 4.8l-8 -2.6l-1.2 -7.4zM1702.3 365.6l8.1 2.7l1.2 7.4l-6.8 4.7l-8 -2.6l-1.3 -7.4zM1719.9 363.1l8 2.6l1.3 7.4l-6.9 4.8l-8 -2.6l-1.2 -7.4zM1737.5 360.5l8 2.6l1.2 7.4l-6.8 4.8l-8 -2.6l-1.3 -7.4zM1755 357.9l8 2.7l1.3 7.4l-6.8 4.7l-8.1 -2.6l-1.2 -7.4zM1772.6 355.4l8 2.6l1.2 7.4l-6.8 4.8l-8 -2.6l-1.2 -7.4zM1790.1 352.8l8.1 2.6l1.2 7.4l-6.8 4.8l-8.1 -2.6l-1.2 -7.4zM816.5 513.5l8 2.6l1.2 7.4l-6.8 4.8l-8 -2.6l-1.2 -7.4zM834 510.9l8.1 2.7l1.2 7.4l-6.8 4.7l-8.1 -2.6l-1.2 -7.4zM851.6 508.4l8 2.6l1.2 7.4l-6.8 4.8l-8 -2.6l-1.2 -7.4zM869.1 505.8l8.1 2.6l1.2 7.4l-6.8 4.8l-8 -2.6l-1.3 -7.4zM886.7 503.2l8 2.7l1.3 7.4l-6.9 4.7l-8 -2.6l-1.2 -7.4zM904.3 500.7l8 2.6l1.2 7.4l-6.8 4.8l-8 -2.6l-1.3 -7.4zM921.8 498.1l8 2.6l1.3 7.4l-6.8 4.8l-8.1 -2.6l-1.2 -7.4zM939.4 495.5l8 2.7l1.2 7.4l-6.8 4.7l-8 -2.6l-1.2 -7.4zM956.9 493l8.1 2.6l1.2 7.4l-6.8 4.8l-8.1 -2.6l-1.2 -7.4zM974.5 490.4l8 2.6l1.2 7.4l-6.8 4.8l-8 -2.6l-1.2 -7.4zM992 487.8l8.1 2.7l1.2 7.4l-6.8 4.7l-8.1 -2.6l-1.2 -7.4zM1009.6 485.3l8 2.6l1.2 7.4l-6.8 4.8l-8 -2.6l-1.2 -7.4zM1027.1 482.7l8.1 2.6l1.2 7.4l-6.8 4.8l-8 -2.6l-1.3 -7.4zM1044.7 480.1l8 2.7l1.3 7.4l-6.9 4.7l-8 -2.6l-1.2 -7.4zM1062.3 477.6l8 2.6l1.2 7.4l-6.8 4.8l-8 -2.6l-1.3 -7.4zM1079.8 475l8 2.6l1.3 7.4l-6.8 4.8l-8.1 -2.6l-1.2 -7.4zM1097.4 472.4l8 2.7l1.2 7.4l-6.8 4.7l-8 -2.6l-1.2 -7.4zM1114.9 469.9l8 2.6l1.3 7.4l-6.8 4.8l-8.1 -2.6l-1.2 -7.4zM1132.5 467.3l8 2.6l1.2 7.4l-6.8 4.8l-8 -2.6l-1.2 -7.4zM1150 464.8l8.1 2.6l1.2 7.4l-6.8 4.7l-8.1 -2.6l-1.2 -7.4zM1167.6 462.2l8 2.6l1.2 7.4l-6.8 4.8l-8 -2.6l-1.2 -7.4zM1185.1 459.6l8.1 2.6l1.2 7.4l-6.8 4.8l-8.1 -2.6l-1.2 -7.4zM1202.7 457.1l8 2.6l1.2 7.4l-6.8 4.8l-8 -2.7l-1.2 -7.4zM1220.2 454.5l8.1 2.6l1.2 7.4l-6.8 4.8l-8 -2.6l-1.3 -7.4zM1237.8 451.9l8 2.6l1.3 7.4l-6.9 4.8l-8 -2.6l-1.2 -7.4zM1255.4 449.4l8 2.6l1.2 7.4l-6.8 4.8l-8 -2.7l-1.3 -7.4zM1272.9 446.8l8 2.6l1.3 7.4l-6.8 4.8l-8.1 -2.6l-1.2 -7.4zM1290.5 444.2l8 2.6l1.2 7.4l-6.8 4.8l-8 -2.6l-1.2 -7.4zM1308 441.7l8.1 2.6l1.2 7.4l-6.8 4.8l-8.1 -2.7l-1.2 -7.4zM1325.6 439.1l8 2.6l1.2 7.4l-6.8 4.8l-8 -2.6l-1.2 -7.4zM1343.1 436.5l8.1 2.6l1.2 7.4l-6.8 4.8l-8.1 -2.6l-1.2 -7.4zM1360.7 434l8 2.6l1.2 7.4l-6.8 4.8l-8 -2.7l-1.2 -7.4zM1378.2 431.4l8.1 2.6l1.2 7.4l-6.8 4.8l-8 -2.6l-1.3 -7.4zM1395.8 428.8l8 2.6l1.3 7.4l-6.9 4.8l-8 -2.6l-1.2 -7.4zM1413.4 426.3l8 2.6l1.2 7.4l-6.8 4.8l-8 -2.7l-1.3 -7.4zM1430.9 423.7l8 2.6l1.3 7.4l-6.8 4.8l-8.1 -2.6l-1.2 -7.4zM1448.5 421.1l8 2.6l1.2 7.4l-6.8 4.8l-8 -2.6l-1.2 -7.4zM1466 418.6l8 2.6l1.3 7.4l-6.8 4.8l-8.1 -2.7l-1.2 -7.4zM1483.6 416l8 2.6l1.2 7.4l-6.8 4.8l-8 -2.6l-1.2 -7.4zM1501.1 413.4l8.1 2.6l1.2 7.4l-6.8 4.8l-8.1 -2.6l-1.2 -7.4zM1518.7 410.9l8 2.6l1.2 7.4l-6.8 4.8l-8 -2.7l-1.2 -7.4zM1536.2 408.3l8.1 2.6l1.2 7.4l-6.8 4.8l-8.1 -2.6l-1.2 -7.4zM1553.8 405.7l8 2.6l1.2 7.4l-6.8 4.8l-8 -2.6l-1.2 -7.4zM1571.3 403.2l8.1 2.6l1.2 7.4l-6.8 4.8l-8 -2.6l-1.3 -7.4zM1588.9 400.6l8 2.6l1.3 7.4l-6.9 4.8l-8 -2.6l-1.2 -7.4zM1606.5 398l8 2.6l1.2 7.4l-6.8 4.8l-8 -2.6l-1.3 -7.4zM1624 395.5l8 2.6l1.3 7.4l-6.8 4.8l-8.1 -2.6l-1.2 -7.4zM1641.6 392.9l8 2.6l1.2 7.4l-6.8 4.8l-8 -2.6l-1.2 -7.4zM1659.1 390.3l8.1 2.7l1.2 7.4l-6.8 4.7l-8.1 -2.6l-1.2 -7.4zM1676.7 387.8l8 2.6l1.2 7.4l-6.8 4.8l-8 -2.6l-1.2 -7.4zM1694.2 385.2l8.1 2.6l1.2 7.4l-6.8 4.8l-8.1 -2.6l-1.2 -7.4zM1711.8 382.6l8 2.7l1.2 7.4l-6.8 4.7l-8 -2.6l-1.2 -7.4zM1729.3 380.1l8.1 2.6l1.2 7.4l-6.8 4.8l-8 -2.6l-1.3 -7.4zM1746.9 377.5l8 2.6l1.3 7.4l-6.9 4.8l-8 -2.6l-1.2 -7.4zM1764.5 374.9l8 2.7l1.2 7.4l-6.8 4.7l-8 -2.6l-1.3 -7.4zM1782 372.4l8 2.6l1.3 7.4l-6.8 4.8l-8.1 -2.6l-1.2 -7.4zM1799.6 369.8l8 2.6l1.2 7.4l-6.8 4.8l-8 -2.6l-1.2 -7.4zM812.6 530.3l8.1 2.6l1.2 7.4l-6.8 4.8l-8.1 -2.6l-1.2 -7.4zM830.2 527.7l8 2.6l1.2 7.4l-6.8 4.8l-8 -2.6l-1.2 -7.4zM847.7 525.2l8.1 2.6l1.2 7.4l-6.8 4.8l-8.1 -2.7l-1.2 -7.4zM865.3 522.6l8 2.6l1.2 7.4l-6.8 4.8l-8 -2.6l-1.2 -7.4zM882.8 520l8.1 2.6l1.2 7.4l-6.8 4.8l-8 -2.6l-1.3 -7.4zM900.4 517.5l8 2.6l1.3 7.4l-6.9 4.8l-8 -2.6l-1.2 -7.4zM918 514.9l8 2.6l1.2 7.4l-6.8 4.8l-8 -2.6l-1.3 -7.4zM935.5 512.3l8 2.6l1.3 7.4l-6.8 4.8l-8.1 -2.6l-1.2 -7.4zM953.1 509.8l8 2.6l1.2 7.4l-6.8 4.8l-8 -2.6l-1.2 -7.4zM970.6 507.2l8.1 2.6l1.2 7.4l-6.8 4.8l-8.1 -2.6l-1.2 -7.4zM988.2 504.6l8 2.7l1.2 7.4l-6.8 4.7l-8 -2.6l-1.2 -7.4zM1005.7 502.1l8.1 2.6l1.2 7.4l-6.8 4.8l-8.1 -2.6l-1.2 -7.4zM1023.3 499.5l8 2.6l1.2 7.4l-6.8 4.8l-8 -2.6l-1.2 -7.4zM1040.8 496.9l8.1 2.7l1.2 7.4l-6.8 4.7l-8 -2.6l-1.3 -7.4zM1058.4 494.4l8 2.6l1.2 7.4l-6.8 4.8l-8 -2.6l-1.2 -7.4zM1075.9 491.8l8.1 2.6l1.2 7.4l-6.8 4.8l-8 -2.6l-1.3 -7.4zM1093.5 489.2l8 2.7l1.3 7.4l-6.9 4.7l-8 -2.6l-1.2 -7.4zM1111.1 486.7l8 2.6l1.2 7.4l-6.8 4.8l-8 -2.6l-1.3 -7.4zM1128.6 484.1l8 2.6l1.3 7.4l-6.8 4.8l-8.1 -2.6l-1.2 -7.4zM1146.2 481.5l8 2.7l1.2 7.4l-6.8 4.7l-8 -2.6l-1.2 -7.4zM1163.7 479l8.1 2.6l1.2 7.4l-6.8 4.8l-8.1 -2.6l-1.2 -7.4zM1181.3 476.4l8 2.6l1.2 7.4l-6.8 4.8l-8 -2.6l-1.2 -7.4zM1198.8 473.8l8.1 2.7l1.2 7.4l-6.8 4.7l-8.1 -2.6l-1.2 -7.4zM1216.4 471.3l8 2.6l1.2 7.4l-6.8 4.8l-8 -2.6l-1.2 -7.4zM1233.9 468.7l8.1 2.6l1.2 7.4l-6.8 4.8l-8 -2.6l-1.3 -7.4zM1251.5 466.1l8 2.7l1.3 7.4l-6.9 4.7l-8 -2.6l-1.2 -7.4zM1269.1 463.6l8 2.6l1.2 7.4l-6.8 4.8l-8 -2.6l-1.3 -7.4zM1286.6 461l8 2.6l1.3 7.4l-6.8 4.8l-8.1 -2.6l-1.2 -7.4zM1304.2 458.4l8 2.7l1.2 7.4l-6.8 4.7l-8 -2.6l-1.2 -7.4zM1321.7 455.9l8.1 2.6l1.2 7.4l-6.8 4.8l-8.1 -2.6l-1.2 -7.4zM1339.3 453.3l8 2.6l1.2 7.4l-6.8 4.8l-8 -2.6l-1.2 -7.4zM1356.8 450.8l8.1 2.6l1.2 7.4l-6.8 4.7l-8.1 -2.6l-1.2 -7.4zM1374.4 448.2l8 2.6l1.2 7.4l-6.8 4.8l-8 -2.6l-1.2 -7.4zM1391.9 445.6l8.1 2.6l1.2 7.4l-6.8 4.8l-8 -2.6l-1.3 -7.4zM1409.5 443.1l8 2.6l1.2 7.4l-6.8 4.8l-8 -2.7l-1.2 -7.4zM1427 440.5l8.1 2.6l1.2 7.4l-6.8 4.8l-8 -2.6l-1.3 -7.4zM1444.6 437.9l8 2.6l1.3 7.4l-6.9 4.8l-8 -2.6l-1.2 -7.4zM1462.2 435.4l8 2.6l1.2 7.4l-6.8 4.8l-8 -2.7l-1.3 -7.4zM1479.7 432.8l8 2.6l1.3 7.4l-6.8 4.8l-8.1 -2.6l-1.2 -7.4zM1497.3 430.2l8 2.6l1.2 7.4l-6.8 4.8l-8 -2.6l-1.2 -7.4zM1514.8 427.7l8.1 2.6l1.2 7.4l-6.8 4.8l-8.1 -2.7l-1.2 -7.4zM1532.4 425.1l8 2.6l1.2 7.4l-6.8 4.8l-8 -2.6l-1.2 -7.4zM1549.9 422.5l8.1 2.6l1.2 7.4l-6.8 4.8l-8.1 -2.6l-1.2 -7.4zM1567.5 420l8 2.6l1.2 7.4l-6.8 4.8l-8 -2.7l-1.2 -7.4zM1585 417.4l8.1 2.6l1.2 7.4l-6.8 4.8l-8 -2.6l-1.3 -7.4zM1602.6 414.8l8 2.6l1.3 7.4l-6.9 4.8l-8 -2.6l-1.2 -7.4zM1620.2 412.3l8 2.6l1.2 7.4l-6.8 4.8l-8 -2.7l-1.3 -7.4zM1637.7 409.7l8 2.6l1.3 7.4l-6.8 4.8l-8.1 -2.6l-1.2 -7.4zM1655.3 407.1l8 2.6l1.2 7.4l-6.8 4.8l-8 -2.6l-1.2 -7.4zM1672.8 404.6l8.1 2.6l1.2 7.4l-6.8 4.8l-8.1 -2.7l-1.2 -7.4zM1690.4 402l8 2.6l1.2 7.4l-6.8 4.8l-8 -2.6l-1.2 -7.4zM1707.9 399.4l8.1 2.6l1.2 7.4l-6.8 4.8l-8.1 -2.6l-1.2 -7.4zM1725.5 396.9l8 2.6l1.2 7.4l-6.8 4.8l-8 -2.7l-1.2 -7.4zM1743 394.3l8.1 2.6l1.2 7.4l-6.8 4.8l-8 -2.6l-1.3 -7.4zM1760.6 391.7l8 2.6l1.2 7.4l-6.8 4.8l-8 -2.6l-1.2 -7.4zM1778.1 389.2l8.1 2.6l1.2 7.4l-6.8 4.8l-8 -2.6l-1.3 -7.4zM1795.7 386.6l8 2.6l1.3 7.4l-6.9 4.8l-8 -2.6l-1.2 -7.4zM822.1 547.3l8 2.6l1.2 7.4l-6.8 4.8l-8 -2.6l-1.2 -7.4zM839.6 544.7l8.1 2.6l1.2 7.4l-6.8 4.8l-8.1 -2.6l-1.2 -7.4zM857.2 542.2l8 2.6l1.2 7.4l-6.8 4.8l-8 -2.7l-1.2 -7.4zM874.7 539.6l8.1 2.6l1.2 7.4l-6.8 4.8l-8.1 -2.6l-1.2 -7.4zM892.3 537l8 2.6l1.2 7.4l-6.8 4.8l-8 -2.6l-1.2 -7.4zM909.8 534.5l8.1 2.6l1.2 7.4l-6.8 4.8l-8 -2.7l-1.3 -7.4zM927.4 531.9l8 2.6l1.3 7.4l-6.9 4.8l-8 -2.6l-1.2 -7.4zM944.9 529.3l8.1 2.6l1.2 7.4l-6.8 4.8l-8 -2.6l-1.3 -7.4zM962.5 526.8l8 2.6l1.3 7.4l-6.8 4.8l-8.1 -2.7l-1.2 -7.4zM980.1 524.2l8 2.6l1.2 7.4l-6.8 4.8l-8 -2.6l-1.2 -7.4zM997.6 521.6l8 2.6l1.3 7.4l-6.8 4.8l-8.1 -2.6l-1.2 -7.4zM1015.2 519.1l8 2.6l1.2 7.4l-6.8 4.8l-8 -2.7l-1.2 -7.4zM1032.7 516.5l8.1 2.6l1.2 7.4l-6.8 4.8l-8.1 -2.6l-1.2 -7.4zM1050.3 513.9l8 2.6l1.2 7.4l-6.8 4.8l-8 -2.6l-1.2 -7.4zM1067.8 511.4l8.1 2.6l1.2 7.4l-6.8 4.8l-8.1 -2.7l-1.2 -7.4zM1085.4 508.8l8 2.6l1.2 7.4l-6.8 4.8l-8 -2.6l-1.2 -7.4zM1102.9 506.2l8.1 2.6l1.2 7.4l-6.8 4.8l-8 -2.6l-1.3 -7.4zM1120.5 503.7l8 2.6l1.3 7.4l-6.9 4.8l-8 -2.6l-1.2 -7.4zM1138.1 501.1l8 2.6l1.2 7.4l-6.8 4.8l-8 -2.6l-1.3 -7.4zM1155.6 498.5l8 2.6l1.3 7.4l-6.8 4.8l-8.1 -2.6l-1.2 -7.4zM1173.2 496l8 2.6l1.2 7.4l-6.8 4.8l-8 -2.6l-1.2 -7.4zM1190.7 493.4l8.1 2.6l1.2 7.4l-6.8 4.8l-8.1 -2.6l-1.2 -7.4zM1208.3 490.8l8 2.7l1.2 7.4l-6.8 4.7l-8 -2.6l-1.2 -7.4zM1225.8 488.3l8.1 2.6l1.2 7.4l-6.8 4.8l-8.1 -2.6l-1.2 -7.4zM1243.4 485.7l8 2.6l1.2 7.4l-6.8 4.8l-8 -2.6l-1.2 -7.4zM1260.9 483.1l8.1 2.7l1.2 7.4l-6.8 4.7l-8 -2.6l-1.3 -7.4zM1278.5 480.6l8 2.6l1.3 7.4l-6.9 4.8l-8 -2.6l-1.2 -7.4zM1296 478l8.1 2.6l1.2 7.4l-6.8 4.8l-8 -2.6l-1.3 -7.4zM1313.6 475.4l8 2.7l1.3 7.4l-6.8 4.7l-8.1 -2.6l-1.2 -7.4zM1331.2 472.9l8 2.6l1.2 7.4l-6.8 4.8l-8 -2.6l-1.2 -7.4zM1348.7 470.3l8 2.6l1.3 7.4l-6.8 4.8l-8.1 -2.6l-1.2 -7.4zM1366.3 467.7l8 2.7l1.2 7.4l-6.8 4.7l-8 -2.6l-1.2 -7.4zM1383.8 465.2l8.1 2.6l1.2 7.4l-6.8 4.8l-8.1 -2.6l-1.2 -7.4zM1401.4 462.6l8 2.6l1.2 7.4l-6.8 4.8l-8 -2.6l-1.2 -7.4zM1418.9 460l8.1 2.7l1.2 7.4l-6.8 4.7l-8.1 -2.6l-1.2 -7.4zM1436.5 457.5l8 2.6l1.2 7.4l-6.8 4.8l-8 -2.6l-1.2 -7.4zM1454 454.9l8.1 2.6l1.2 7.4l-6.8 4.8l-8 -2.6l-1.3 -7.4zM1471.6 452.3l8 2.7l1.3 7.4l-6.9 4.7l-8 -2.6l-1.2 -7.4zM1489.2 449.8l8 2.6l1.2 7.4l-6.8 4.8l-8 -2.6l-1.3 -7.4zM1506.7 447.2l8 2.6l1.3 7.4l-6.8 4.8l-8.1 -2.6l-1.2 -7.4zM1524.3 444.6l8 2.7l1.2 7.4l-6.8 4.7l-8 -2.6l-1.2 -7.4zM1541.8 442.1l8.1 2.6l1.2 7.4l-6.8 4.8l-8.1 -2.6l-1.2 -7.4zM1559.4 439.5l8 2.6l1.2 7.4l-6.8 4.8l-8 -2.6l-1.2 -7.4zM1576.9 437l8.1 2.6l1.2 7.4l-6.8 4.7l-8.1 -2.6l-1.2 -7.4zM1594.5 434.4l8 2.6l1.2 7.4l-6.8 4.8l-8 -2.6l-1.2 -7.4zM1612 431.8l8.1 2.6l1.2 7.4l-6.8 4.8l-8 -2.6l-1.3 -7.4zM1629.6 429.3l8 2.6l1.3 7.4l-6.9 4.8l-8 -2.7l-1.2 -7.4zM1647.1 426.7l8.1 2.6l1.2 7.4l-6.8 4.8l-8 -2.6l-1.3 -7.4zM1664.7 424.1l8 2.6l1.3 7.4l-6.8 4.8l-8.1 -2.6l-1.2 -7.4zM1682.3 421.6l8 2.6l1.2 7.4l-6.8 4.8l-8 -2.7l-1.2 -7.4zM1699.8 419l8 2.6l1.3 7.4l-6.8 4.8l-8.1 -2.6l-1.2 -7.4zM1717.4 416.4l8 2.6l1.2 7.4l-6.8 4.8l-8 -2.6l-1.2 -7.4zM1734.9 413.9l8.1 2.6l1.2 7.4l-6.8 4.8l-8.1 -2.7l-1.2 -7.4zM1752.5 411.3l8 2.6l1.2 7.4l-6.8 4.8l-8 -2.6l-1.2 -7.4zM1770 408.7l8.1 2.6l1.2 7.4l-6.8 4.8l-8.1 -2.6l-1.2 -7.4zM1787.6 406.2l8 2.6l1.2 7.4l-6.8 4.8l-8 -2.7l-1.2 -7.4zM1805.1 403.6l8.1 2.6l1.2 7.4l-6.8 4.8l-8 -2.6l-1.3 -7.4zM818.2 564.1l8 2.6l1.3 7.4l-6.8 4.8l-8.1 -2.6l-1.2 -7.4zM835.8 561.5l8 2.6l1.2 7.4l-6.8 4.8l-8 -2.6l-1.2 -7.4zM853.3 558.9l8 2.7l1.3 7.4l-6.8 4.7l-8.1 -2.6l-1.2 -7.4zM870.9 556.4l8 2.6l1.2 7.4l-6.8 4.8l-8 -2.6l-1.2 -7.4zM888.4 553.8l8.1 2.6l1.2 7.4l-6.8 4.8l-8.1 -2.6l-1.2 -7.4zM906 551.3l8 2.6l1.2 7.4l-6.8 4.7l-8 -2.6l-1.2 -7.4zM923.5 548.7l8.1 2.6l1.2 7.4l-6.8 4.8l-8 -2.6l-1.3 -7.4zM941.1 546.1l8 2.6l1.2 7.4l-6.8 4.8l-8 -2.6l-1.2 -7.4zM958.6 543.6l8.1 2.6l1.2 7.4l-6.8 4.8l-8 -2.7l-1.3 -7.4zM976.2 541l8 2.6l1.3 7.4l-6.9 4.8l-8 -2.6l-1.2 -7.4zM993.8 538.4l8 2.6l1.2 7.4l-6.8 4.8l-8 -2.6l-1.3 -7.4zM1011.3 535.9l8 2.6l1.3 7.4l-6.8 4.8l-8.1 -2.7l-1.2 -7.4zM1028.9 533.3l8 2.6l1.2 7.4l-6.8 4.8l-8 -2.6l-1.2 -7.4zM1046.4 530.7l8.1 2.6l1.2 7.4l-6.8 4.8l-8.1 -2.6l-1.2 -7.4zM1064 528.2l8 2.6l1.2 7.4l-6.8 4.8l-8 -2.7l-1.2 -7.4zM1081.5 525.6l8.1 2.6l1.2 7.4l-6.8 4.8l-8.1 -2.6l-1.2 -7.4zM1099.1 523l8 2.6l1.2 7.4l-6.8 4.8l-8 -2.6l-1.2 -7.4zM1116.6 520.5l8.1 2.6l1.2 7.4l-6.8 4.8l-8 -2.7l-1.3 -7.4zM1134.2 517.9l8 2.6l1.3 7.4l-6.9 4.8l-8 -2.6l-1.2 -7.4zM1151.8 515.3l8 2.6l1.2 7.4l-6.8 4.8l-8 -2.6l-1.3 -7.4zM1169.3 512.8l8 2.6l1.3 7.4l-6.8 4.8l-8.1 -2.7l-1.2 -7.4zM1186.9 510.2l8 2.6l1.2 7.4l-6.8 4.8l-8 -2.6l-1.2 -7.4zM1204.4 507.6l8 2.6l1.3 7.4l-6.8 4.8l-8.1 -2.6l-1.2 -7.4zM1222 505.1l8 2.6l1.2 7.4l-6.8 4.8l-8 -2.7l-1.2 -7.4zM1239.5 502.5l8.1 2.6l1.2 7.4l-6.8 4.8l-8.1 -2.6l-1.2 -7.4zM1257.1 499.9l8 2.6l1.2 7.4l-6.8 4.8l-8 -2.6l-1.2 -7.4zM1274.6 497.4l8.1 2.6l1.2 7.4l-6.8 4.8l-8 -2.7l-1.3 -7.4zM1292.2 494.8l8 2.6l1.2 7.4l-6.8 4.8l-8 -2.6l-1.2 -7.4zM1309.7 492.2l8.1 2.6l1.2 7.4l-6.8 4.8l-8 -2.6l-1.3 -7.4zM1327.3 489.7l8 2.6l1.3 7.4l-6.9 4.8l-8 -2.6l-1.2 -7.4zM1344.9 487.1l8 2.6l1.2 7.4l-6.8 4.8l-8 -2.6l-1.3 -7.4zM1362.4 484.5l8 2.6l1.3 7.4l-6.8 4.8l-8.1 -2.6l-1.2 -7.4zM1380 482l8 2.6l1.2 7.4l-6.8 4.8l-8 -2.6l-1.2 -7.4zM1397.5 479.4l8.1 2.6l1.2 7.4l-6.8 4.8l-8.1 -2.6l-1.2 -7.4zM1415.1 476.8l8 2.7l1.2 7.4l-6.8 4.7l-8 -2.6l-1.2 -7.4zM1432.6 474.3l8.1 2.6l1.2 7.4l-6.8 4.8l-8.1 -2.6l-1.2 -7.4zM1450.2 471.7l8 2.6l1.2 7.4l-6.8 4.8l-8 -2.6l-1.2 -7.4zM1467.7 469.1l8.1 2.7l1.2 7.4l-6.8 4.7l-8 -2.6l-1.3 -7.4zM1485.3 466.6l8 2.6l1.3 7.4l-6.9 4.8l-8 -2.6l-1.2 -7.4zM1502.9 464l8 2.6l1.2 7.4l-6.8 4.8l-8 -2.6l-1.3 -7.4zM1520.4 461.4l8 2.7l1.3 7.4l-6.8 4.7l-8.1 -2.6l-1.2 -7.4zM1538 458.9l8 2.6l1.2 7.4l-6.8 4.8l-8 -2.6l-1.2 -7.4zM1555.5 456.3l8 2.6l1.3 7.4l-6.8 4.8l-8.1 -2.6l-1.2 -7.4zM1573.1 453.7l8 2.7l1.2 7.4l-6.8 4.7l-8 -2.6l-1.2 -7.4zM1590.6 451.2l8.1 2.6l1.2 7.4l-6.8 4.8l-8.1 -2.6l-1.2 -7.4zM1608.2 448.6l8 2.6l1.2 7.4l-6.8 4.8l-8 -2.6l-1.2 -7.4zM1625.7 446l8.1 2.7l1.2 7.4l-6.8 4.7l-8 -2.6l-1.3 -7.4zM1643.3 443.5l8 2.6l1.2 7.4l-6.8 4.8l-8 -2.6l-1.2 -7.4zM1660.8 440.9l8.1 2.6l1.2 7.4l-6.8 4.8l-8 -2.6l-1.3 -7.4zM1678.4 438.3l8 2.7l1.3 7.4l-6.9 4.7l-8 -2.6l-1.2 -7.4zM1696 435.8l8 2.6l1.2 7.4l-6.8 4.8l-8 -2.6l-1.3 -7.4zM1713.5 433.2l8 2.6l1.3 7.4l-6.8 4.8l-8.1 -2.6l-1.2 -7.4zM1731.1 430.6l8 2.7l1.2 7.4l-6.8 4.7l-8 -2.6l-1.2 -7.4zM1748.6 428.1l8.1 2.6l1.2 7.4l-6.8 4.8l-8.1 -2.6l-1.2 -7.4zM1766.2 425.5l8 2.6l1.2 7.4l-6.8 4.8l-8 -2.6l-1.2 -7.4zM1783.7 423l8.1 2.6l1.2 7.4l-6.8 4.7l-8.1 -2.6l-1.2 -7.4zM1801.3 420.4l8 2.6l1.2 7.4l-6.8 4.8l-8 -2.6l-1.2 -7.4zM827.6 581.1l8.1 2.6l1.2 7.4l-6.8 4.8l-8 -2.6l-1.3 -7.4zM845.2 578.5l8 2.6l1.3 7.4l-6.8 4.8l-8.1 -2.6l-1.2 -7.4zM862.8 575.9l8 2.7l1.2 7.4l-6.8 4.7l-8 -2.6l-1.3 -7.4zM880.3 573.4l8 2.6l1.3 7.4l-6.8 4.8l-8.1 -2.6l-1.2 -7.4zM897.9 570.8l8 2.6l1.2 7.4l-6.8 4.8l-8 -2.6l-1.2 -7.4zM915.4 568.2l8.1 2.7l1.2 7.4l-6.8 4.7l-8.1 -2.6l-1.2 -7.4zM933 565.7l8 2.6l1.2 7.4l-6.8 4.8l-8 -2.6l-1.2 -7.4zM950.5 563.1l8.1 2.6l1.2 7.4l-6.8 4.8l-8.1 -2.6l-1.2 -7.4zM968.1 560.5l8 2.7l1.2 7.4l-6.8 4.7l-8 -2.6l-1.2 -7.4zM985.6 558l8.1 2.6l1.2 7.4l-6.8 4.8l-8 -2.6l-1.3 -7.4zM1003.2 555.4l8 2.6l1.3 7.4l-6.9 4.8l-8 -2.6l-1.2 -7.4zM1020.8 552.8l8 2.7l1.2 7.4l-6.8 4.7l-8 -2.6l-1.3 -7.4zM1038.3 550.3l8 2.6l1.3 7.4l-6.8 4.8l-8.1 -2.6l-1.2 -7.4zM1055.9 547.7l8 2.6l1.2 7.4l-6.8 4.8l-8 -2.6l-1.2 -7.4zM1073.4 545.1l8.1 2.7l1.2 7.4l-6.8 4.7l-8.1 -2.6l-1.2 -7.4zM1091 542.6l8 2.6l1.2 7.4l-6.8 4.8l-8 -2.6l-1.2 -7.4zM1108.5 540l8.1 2.6l1.2 7.4l-6.8 4.8l-8.1 -2.6l-1.2 -7.4zM1126.1 537.5l8 2.6l1.2 7.4l-6.8 4.7l-8 -2.6l-1.2 -7.4zM1143.6 534.9l8.1 2.6l1.2 7.4l-6.8 4.8l-8 -2.6l-1.3 -7.4zM1161.2 532.3l8 2.6l1.2 7.4l-6.8 4.8l-8 -2.6l-1.2 -7.4zM1178.7 529.8l8.1 2.6l1.2 7.4l-6.8 4.8l-8 -2.7l-1.3 -7.4zM1196.3 527.2l8 2.6l1.3 7.4l-6.8 4.8l-8.1 -2.6l-1.2 -7.4zM1213.9 524.6l8 2.6l1.2 7.4l-6.8 4.8l-8 -2.6l-1.3 -7.4zM1231.4 522.1l8 2.6l1.3 7.4l-6.8 4.8l-8.1 -2.7l-1.2 -7.4zM1249 519.5l8 2.6l1.2 7.4l-6.8 4.8l-8 -2.6l-1.2 -7.4zM1266.5 516.9l8.1 2.6l1.2 7.4l-6.8 4.8l-8.1 -2.6l-1.2 -7.4zM1284.1 514.4l8 2.6l1.2 7.4l-6.8 4.8l-8 -2.7l-1.2 -7.4zM1301.6 511.8l8.1 2.6l1.2 7.4l-6.8 4.8l-8.1 -2.6l-1.2 -7.4zM1319.2 509.2l8 2.6l1.2 7.4l-6.8 4.8l-8 -2.6l-1.2 -7.4zM1336.7 506.7l8.1 2.6l1.2 7.4l-6.8 4.8l-8 -2.7l-1.3 -7.4zM1354.3 504.1l8 2.6l1.3 7.4l-6.9 4.8l-8 -2.6l-1.2 -7.4zM1371.9 501.5l8 2.6l1.2 7.4l-6.8 4.8l-8 -2.6l-1.3 -7.4zM1389.4 499l8 2.6l1.3 7.4l-6.8 4.8l-8.1 -2.7l-1.2 -7.4zM1407 496.4l8 2.6l1.2 7.4l-6.8 4.8l-8 -2.6l-1.2 -7.4zM1424.5 493.8l8.1 2.6l1.2 7.4l-6.8 4.8l-8.1 -2.6l-1.2 -7.4zM1442.1 491.3l8 2.6l1.2 7.4l-6.8 4.8l-8 -2.7l-1.2 -7.4zM1459.6 488.7l8.1 2.6l1.2 7.4l-6.8 4.8l-8.1 -2.6l-1.2 -7.4zM1477.2 486.1l8 2.6l1.2 7.4l-6.8 4.8l-8 -2.6l-1.2 -7.4zM1494.7 483.6l8.1 2.6l1.2 7.4l-6.8 4.8l-8 -2.7l-1.3 -7.4zM1512.3 481l8 2.6l1.2 7.4l-6.8 4.8l-8 -2.6l-1.2 -7.4zM1529.8 478.4l8.1 2.6l1.2 7.4l-6.8 4.8l-8 -2.6l-1.3 -7.4zM1547.4 475.9l8 2.6l1.3 7.4l-6.8 4.8l-8.1 -2.6l-1.2 -7.4zM1565 473.3l8 2.6l1.2 7.4l-6.8 4.8l-8 -2.6l-1.3 -7.4zM1582.5 470.7l8 2.6l1.3 7.4l-6.8 4.8l-8.1 -2.6l-1.2 -7.4zM1600.1 468.2l8 2.6l1.2 7.4l-6.8 4.8l-8 -2.6l-1.2 -7.4zM1617.6 465.6l8.1 2.6l1.2 7.4l-6.8 4.8l-8.1 -2.6l-1.2 -7.4zM1635.2 463l8 2.7l1.2 7.4l-6.8 4.7l-8 -2.6l-1.2 -7.4zM1652.7 460.5l8.1 2.6l1.2 7.4l-6.8 4.8l-8.1 -2.6l-1.2 -7.4zM1670.3 457.9l8 2.6l1.2 7.4l-6.8 4.8l-8 -2.6l-1.2 -7.4zM1687.8 455.3l8.1 2.7l1.2 7.4l-6.8 4.7l-8 -2.6l-1.3 -7.4zM1705.4 452.8l8 2.6l1.3 7.4l-6.9 4.8l-8 -2.6l-1.2 -7.4zM1723 450.2l8 2.6l1.2 7.4l-6.8 4.8l-8 -2.6l-1.3 -7.4zM1740.5 447.6l8 2.7l1.3 7.4l-6.8 4.7l-8.1 -2.6l-1.2 -7.4zM1758.1 445.1l8 2.6l1.2 7.4l-6.8 4.8l-8 -2.6l-1.2 -7.4zM1775.6 442.5l8.1 2.6l1.2 7.4l-6.8 4.8l-8.1 -2.6l-1.2 -7.4zM1793.2 439.9l8 2.7l1.2 7.4l-6.8 4.7l-8 -2.6l-1.2 -7.4zM1810.7 437.4l8.1 2.6l1.2 7.4l-6.8 4.8l-8.1 -2.6l-1.2 -7.4zM823.8 597.9l8 2.6l1.2 7.4l-6.8 4.8l-8 -2.7l-1.2 -7.4zM841.3 595.3l8.1 2.6l1.2 7.4l-6.8 4.8l-8 -2.6l-1.3 -7.4zM858.9 592.7l8 2.6l1.3 7.4l-6.9 4.8l-8 -2.6l-1.2 -7.4zM876.5 590.2l8 2.6l1.2 7.4l-6.8 4.8l-8 -2.6l-1.3 -7.4zM894 587.6l8 2.6l1.3 7.4l-6.8 4.8l-8.1 -2.6l-1.2 -7.4zM911.6 585l8 2.6l1.2 7.4l-6.8 4.8l-8 -2.6l-1.2 -7.4zM929.1 582.5l8.1 2.6l1.2 7.4l-6.8 4.8l-8.1 -2.6l-1.2 -7.4zM946.7 579.9l8 2.6l1.2 7.4l-6.8 4.8l-8 -2.6l-1.2 -7.4zM964.2 577.3l8.1 2.7l1.2 7.4l-6.8 4.7l-8.1 -2.6l-1.2 -7.4zM981.8 574.8l8 2.6l1.2 7.4l-6.8 4.8l-8 -2.6l-1.2 -7.4zM999.3 572.2l8.1 2.6l1.2 7.4l-6.8 4.8l-8 -2.6l-1.3 -7.4zM1016.9 569.6l8 2.7l1.3 7.4l-6.9 4.7l-8 -2.6l-1.2 -7.4zM1034.5 567.1l8 2.6l1.2 7.4l-6.8 4.8l-8 -2.6l-1.3 -7.4zM1052 564.5l8 2.6l1.3 7.4l-6.8 4.8l-8.1 -2.6l-1.2 -7.4zM1069.6 561.9l8 2.7l1.2 7.4l-6.8 4.7l-8 -2.6l-1.2 -7.4zM1087.1 559.4l8 2.6l1.3 7.4l-6.8 4.8l-8.1 -2.6l-1.2 -7.4zM1104.7 556.8l8 2.6l1.2 7.4l-6.8 4.8l-8 -2.6l-1.2 -7.4zM1122.2 554.2l8.1 2.7l1.2 7.4l-6.8 4.7l-8.1 -2.6l-1.2 -7.4zM1139.8 551.7l8 2.6l1.2 7.4l-6.8 4.8l-8 -2.6l-1.2 -7.4zM1157.3 549.1l8.1 2.6l1.2 7.4l-6.8 4.8l-8.1 -2.6l-1.2 -7.4zM1174.9 546.5l8 2.7l1.2 7.4l-6.8 4.7l-8 -2.6l-1.2 -7.4zM1192.4 544l8.1 2.6l1.2 7.4l-6.8 4.8l-8 -2.6l-1.3 -7.4zM1210 541.4l8 2.6l1.3 7.4l-6.9 4.8l-8 -2.6l-1.2 -7.4zM1227.6 538.8l8 2.7l1.2 7.4l-6.8 4.7l-8 -2.6l-1.3 -7.4zM1245.1 536.3l8 2.6l1.3 7.4l-6.8 4.8l-8.1 -2.6l-1.2 -7.4zM1262.7 533.7l8 2.6l1.2 7.4l-6.8 4.8l-8 -2.6l-1.2 -7.4zM1280.2 531.1l8.1 2.7l1.2 7.4l-6.8 4.7l-8.1 -2.6l-1.2 -7.4zM1297.8 528.6l8 2.6l1.2 7.4l-6.8 4.8l-8 -2.6l-1.2 -7.4zM1315.3 526l8.1 2.6l1.2 7.4l-6.8 4.8l-8.1 -2.6l-1.2 -7.4zM1332.9 523.5l8 2.6l1.2 7.4l-6.8 4.7l-8 -2.6l-1.2 -7.4zM1350.4 520.9l8.1 2.6l1.2 7.4l-6.8 4.8l-8 -2.6l-1.3 -7.4zM1368 518.3l8 2.6l1.3 7.4l-6.9 4.8l-8 -2.6l-1.2 -7.4zM1385.6 515.8l8 2.6l1.2 7.4l-6.8 4.8l-8 -2.7l-1.3 -7.4zM1403.1 513.2l8 2.6l1.3 7.4l-6.8 4.8l-8.1 -2.6l-1.2 -7.4zM1420.7 510.6l8 2.6l1.2 7.4l-6.8 4.8l-8 -2.6l-1.2 -7.4zM1438.2 508.1l8 2.6l1.3 7.4l-6.8 4.8l-8.1 -2.7l-1.2 -7.4zM1455.8 505.5l8 2.6l1.2 7.4l-6.8 4.8l-8 -2.6l-1.2 -7.4zM1473.3 502.9l8.1 2.6l1.2 7.4l-6.8 4.8l-8.1 -2.6l-1.2 -7.4zM1490.9 500.4l8 2.6l1.2 7.4l-6.8 4.8l-8 -2.7l-1.2 -7.4zM1508.4 497.8l8.1 2.6l1.2 7.4l-6.8 4.8l-8.1 -2.6l-1.2 -7.4zM1526 495.2l8 2.6l1.2 7.4l-6.8 4.8l-8 -2.6l-1.2 -7.4zM1543.5 492.7l8.1 2.6l1.2 7.4l-6.8 4.8l-8 -2.7l-1.3 -7.4zM1561.1 490.1l8 2.6l1.3 7.4l-6.9 4.8l-8 -2.6l-1.2 -7.4zM1578.7 487.5l8 2.6l1.2 7.4l-6.8 4.8l-8 -2.6l-1.3 -7.4zM1596.2 485l8 2.6l1.3 7.4l-6.8 4.8l-8.1 -2.7l-1.2 -7.4zM1613.8 482.4l8 2.6l1.2 7.4l-6.8 4.8l-8 -2.6l-1.2 -7.4zM1631.3 479.8l8.1 2.6l1.2 7.4l-6.8 4.8l-8.1 -2.6l-1.2 -7.4zM1648.9 477.3l8 2.6l1.2 7.4l-6.8 4.8l-8 -2.7l-1.2 -7.4zM1666.4 474.7l8.1 2.6l1.2 7.4l-6.8 4.8l-8.1 -2.6l-1.2 -7.4zM1684 472.1l8 2.6l1.2 7.4l-6.8 4.8l-8 -2.6l-1.2 -7.4zM1701.5 469.6l8.1 2.6l1.2 7.4l-6.8 4.8l-8 -2.7l-1.3 -7.4zM1719.1 467l8 2.6l1.3 7.4l-6.9 4.8l-8 -2.6l-1.2 -7.4zM1736.7 464.4l8 2.6l1.2 7.4l-6.8 4.8l-8 -2.6l-1.3 -7.4zM1754.2 461.9l8 2.6l1.3 7.4l-6.8 4.8l-8.1 -2.6l-1.2 -7.4zM1771.8 459.3l8 2.6l1.2 7.4l-6.8 4.8l-8 -2.6l-1.2 -7.4zM1789.3 456.7l8 2.6l1.3 7.4l-6.8 4.8l-8.1 -2.6l-1.2 -7.4zM1806.9 454.2l8 2.6l1.2 7.4l-6.8 4.8l-8 -2.6l-1.2 -7.4zM833.2 614.9l8.1 2.6l1.2 7.4l-6.8 4.8l-8.1 -2.7l-1.2 -7.4zM850.8 612.3l8 2.6l1.2 7.4l-6.8 4.8l-8 -2.6l-1.2 -7.4zM868.3 609.7l8.1 2.6l1.2 7.4l-6.8 4.8l-8 -2.6l-1.3 -7.4zM885.9 607.2l8 2.6l1.3 7.4l-6.9 4.8l-8 -2.7l-1.2 -7.4zM903.5 604.6l8 2.6l1.2 7.4l-6.8 4.8l-8 -2.6l-1.3 -7.4zM921 602l8 2.6l1.3 7.4l-6.8 4.8l-8.1 -2.6l-1.2 -7.4zM938.6 599.5l8 2.6l1.2 7.4l-6.8 4.8l-8 -2.7l-1.2 -7.4zM956.1 596.9l8.1 2.6l1.2 7.4l-6.8 4.8l-8.1 -2.6l-1.2 -7.4zM973.7 594.3l8 2.6l1.2 7.4l-6.8 4.8l-8 -2.6l-1.2 -7.4zM991.2 591.8l8.1 2.6l1.2 7.4l-6.8 4.8l-8.1 -2.7l-1.2 -7.4zM1008.8 589.2l8 2.6l1.2 7.4l-6.8 4.8l-8 -2.6l-1.2 -7.4zM1026.3 586.6l8.1 2.6l1.2 7.4l-6.8 4.8l-8 -2.6l-1.3 -7.4zM1043.9 584.1l8 2.6l1.2 7.4l-6.8 4.8l-8 -2.7l-1.2 -7.4zM1061.4 581.5l8.1 2.6l1.2 7.4l-6.8 4.8l-8 -2.6l-1.3 -7.4zM1079 578.9l8 2.6l1.3 7.4l-6.9 4.8l-8 -2.6l-1.2 -7.4zM1096.6 576.4l8 2.6l1.2 7.4l-6.8 4.8l-8 -2.6l-1.3 -7.4zM1114.1 573.8l8 2.6l1.3 7.4l-6.8 4.8l-8.1 -2.6l-1.2 -7.4zM1131.7 571.2l8 2.6l1.2 7.4l-6.8 4.8l-8 -2.6l-1.2 -7.4zM1149.2 568.7l8.1 2.6l1.2 7.4l-6.8 4.8l-8.1 -2.6l-1.2 -7.4zM1166.8 566.1l8 2.6l1.2 7.4l-6.8 4.8l-8 -2.6l-1.2 -7.4zM1184.3 563.5l8.1 2.7l1.2 7.4l-6.8 4.7l-8.1 -2.6l-1.2 -7.4zM1201.9 561l8 2.6l1.2 7.4l-6.8 4.8l-8 -2.6l-1.2 -7.4zM1219.4 558.4l8.1 2.6l1.2 7.4l-6.8 4.8l-8 -2.6l-1.3 -7.4zM1237 555.8l8 2.7l1.3 7.4l-6.9 4.7l-8 -2.6l-1.2 -7.4zM1254.6 553.3l8 2.6l1.2 7.4l-6.8 4.8l-8 -2.6l-1.3 -7.4zM1272.1 550.7l8 2.6l1.3 7.4l-6.8 4.8l-8.1 -2.6l-1.2 -7.4zM1289.7 548.1l8 2.7l1.2 7.4l-6.8 4.7l-8 -2.6l-1.2 -7.4zM1307.2 545.6l8.1 2.6l1.2 7.4l-6.8 4.8l-8.1 -2.6l-1.2 -7.4zM1324.8 543l8 2.6l1.2 7.4l-6.8 4.8l-8 -2.6l-1.2 -7.4zM1342.3 540.4l8.1 2.7l1.2 7.4l-6.8 4.7l-8.1 -2.6l-1.2 -7.4zM1359.9 537.9l8 2.6l1.2 7.4l-6.8 4.8l-8 -2.6l-1.2 -7.4zM1377.4 535.3l8.1 2.6l1.2 7.4l-6.8 4.8l-8 -2.6l-1.3 -7.4zM1395 532.7l8 2.7l1.2 7.4l-6.8 4.7l-8 -2.6l-1.2 -7.4zM1412.5 530.2l8.1 2.6l1.2 7.4l-6.8 4.8l-8 -2.6l-1.3 -7.4zM1430.1 527.6l8 2.6l1.3 7.4l-6.9 4.8l-8 -2.6l-1.2 -7.4zM1447.7 525l8 2.7l1.2 7.4l-6.8 4.7l-8 -2.6l-1.3 -7.4zM1465.2 522.5l8 2.6l1.3 7.4l-6.8 4.8l-8.1 -2.6l-1.2 -7.4zM1482.8 519.9l8 2.6l1.2 7.4l-6.8 4.8l-8 -2.6l-1.2 -7.4zM1500.3 517.3l8.1 2.7l1.2 7.4l-6.8 4.7l-8.1 -2.6l-1.2 -7.4zM1517.9 514.8l8 2.6l1.2 7.4l-6.8 4.8l-8 -2.6l-1.2 -7.4zM1535.4 512.2l8.1 2.6l1.2 7.4l-6.8 4.8l-8.1 -2.6l-1.2 -7.4zM1553 509.7l8 2.6l1.2 7.4l-6.8 4.7l-8 -2.6l-1.2 -7.4zM1570.5 507.1l8.1 2.6l1.2 7.4l-6.8 4.8l-8 -2.6l-1.3 -7.4zM1588.1 504.5l8 2.6l1.3 7.4l-6.9 4.8l-8 -2.6l-1.2 -7.4zM1605.7 502l8 2.6l1.2 7.4l-6.8 4.8l-8 -2.7l-1.3 -7.4zM1623.2 499.4l8 2.6l1.3 7.4l-6.8 4.8l-8.1 -2.6l-1.2 -7.4zM1640.8 496.8l8 2.6l1.2 7.4l-6.8 4.8l-8 -2.6l-1.2 -7.4zM1658.3 494.3l8.1 2.6l1.2 7.4l-6.8 4.8l-8.1 -2.7l-1.2 -7.4zM1675.9 491.7l8 2.6l1.2 7.4l-6.8 4.8l-8 -2.6l-1.2 -7.4zM1693.4 489.1l8.1 2.6l1.2 7.4l-6.8 4.8l-8.1 -2.6l-1.2 -7.4zM1711 486.6l8 2.6l1.2 7.4l-6.8 4.8l-8 -2.7l-1.2 -7.4zM1728.5 484l8.1 2.6l1.2 7.4l-6.8 4.8l-8 -2.6l-1.3 -7.4zM1746.1 481.4l8 2.6l1.2 7.4l-6.8 4.8l-8 -2.6l-1.2 -7.4zM1763.6 478.9l8.1 2.6l1.2 7.4l-6.8 4.8l-8 -2.7l-1.3 -7.4zM1781.2 476.3l8 2.6l1.3 7.4l-6.9 4.8l-8 -2.6l-1.2 -7.4zM1798.8 473.7l8 2.6l1.2 7.4l-6.8 4.8l-8 -2.6l-1.3 -7.4zM1816.3 471.2l8 2.6l1.3 7.4l-6.8 4.8l-8.1 -2.7l-1.2 -7.4zM829.4 631.6l8 2.7l1.2 7.4l-6.8 4.7l-8 -2.6l-1.2 -7.4zM846.9 629.1l8.1 2.6l1.2 7.4l-6.8 4.8l-8.1 -2.6l-1.2 -7.4zM864.5 626.5l8 2.6l1.2 7.4l-6.8 4.8l-8 -2.6l-1.2 -7.4zM882 624l8.1 2.6l1.2 7.4l-6.8 4.7l-8 -2.6l-1.3 -7.4zM899.6 621.4l8 2.6l1.3 7.4l-6.9 4.8l-8 -2.6l-1.2 -7.4zM917.1 618.8l8.1 2.6l1.2 7.4l-6.8 4.8l-8 -2.6l-1.3 -7.4zM934.7 616.3l8 2.6l1.3 7.4l-6.8 4.8l-8.1 -2.7l-1.2 -7.4zM952.3 613.7l8 2.6l1.2 7.4l-6.8 4.8l-8 -2.6l-1.2 -7.4zM969.8 611.1l8 2.6l1.3 7.4l-6.8 4.8l-8.1 -2.6l-1.2 -7.4zM987.4 608.6l8 2.6l1.2 7.4l-6.8 4.8l-8 -2.7l-1.2 -7.4zM1004.9 606l8.1 2.6l1.2 7.4l-6.8 4.8l-8.1 -2.6l-1.2 -7.4zM1022.5 603.4l8 2.6l1.2 7.4l-6.8 4.8l-8 -2.6l-1.2 -7.4zM1040 600.9l8.1 2.6l1.2 7.4l-6.8 4.8l-8.1 -2.7l-1.2 -7.4zM1057.6 598.3l8 2.6l1.2 7.4l-6.8 4.8l-8 -2.6l-1.2 -7.4zM1075.1 595.7l8.1 2.6l1.2 7.4l-6.8 4.8l-8 -2.6l-1.3 -7.4zM1092.7 593.2l8 2.6l1.3 7.4l-6.9 4.8l-8 -2.7l-1.2 -7.4zM1110.3 590.6l8 2.6l1.2 7.4l-6.8 4.8l-8 -2.6l-1.3 -7.4zM1127.8 588l8 2.6l1.3 7.4l-6.8 4.8l-8.1 -2.6l-1.2 -7.4zM1145.4 585.5l8 2.6l1.2 7.4l-6.8 4.8l-8 -2.7l-1.2 -7.4zM1162.9 582.9l8.1 2.6l1.2 7.4l-6.8 4.8l-8.1 -2.6l-1.2 -7.4zM1180.5 580.3l8 2.6l1.2 7.4l-6.8 4.8l-8 -2.6l-1.2 -7.4zM1198 577.8l8.1 2.6l1.2 7.4l-6.8 4.8l-8.1 -2.7l-1.2 -7.4zM1215.6 575.2l8 2.6l1.2 7.4l-6.8 4.8l-8 -2.6l-1.2 -7.4zM1233.1 572.6l8.1 2.6l1.2 7.4l-6.8 4.8l-8 -2.6l-1.3 -7.4zM1250.7 570.1l8 2.6l1.3 7.4l-6.9 4.8l-8 -2.7l-1.2 -7.4zM1268.2 567.5l8.1 2.6l1.2 7.4l-6.8 4.8l-8 -2.6l-1.3 -7.4zM1285.8 564.9l8 2.6l1.3 7.4l-6.8 4.8l-8.1 -2.6l-1.2 -7.4zM1303.4 562.4l8 2.6l1.2 7.4l-6.8 4.8l-8 -2.6l-1.2 -7.4zM1320.9 559.8l8 2.6l1.3 7.4l-6.8 4.8l-8.1 -2.6l-1.2 -7.4zM1338.5 557.2l8 2.6l1.2 7.4l-6.8 4.8l-8 -2.6l-1.2 -7.4zM1356 554.7l8.1 2.6l1.2 7.4l-6.8 4.8l-8.1 -2.6l-1.2 -7.4zM1373.6 552.1l8 2.6l1.2 7.4l-6.8 4.8l-8 -2.6l-1.2 -7.4zM1391.1 549.5l8.1 2.7l1.2 7.4l-6.8 4.7l-8.1 -2.6l-1.2 -7.4zM1408.7 547l8 2.6l1.2 7.4l-6.8 4.8l-8 -2.6l-1.2 -7.4zM1426.2 544.4l8.1 2.6l1.2 7.4l-6.8 4.8l-8 -2.6l-1.3 -7.4zM1443.8 541.8l8 2.7l1.3 7.4l-6.9 4.7l-8 -2.6l-1.2 -7.4zM1461.4 539.3l8 2.6l1.2 7.4l-6.8 4.8l-8 -2.6l-1.3 -7.4zM1478.9 536.7l8 2.6l1.3 7.4l-6.8 4.8l-8.1 -2.6l-1.2 -7.4zM1496.5 534.1l8 2.7l1.2 7.4l-6.8 4.7l-8 -2.6l-1.2 -7.4zM1514 531.6l8.1 2.6l1.2 7.4l-6.8 4.8l-8.1 -2.6l-1.2 -7.4zM1531.6 529l8 2.6l1.2 7.4l-6.8 4.8l-8 -2.6l-1.2 -7.4zM1549.1 526.4l8.1 2.7l1.2 7.4l-6.8 4.7l-8.1 -2.6l-1.2 -7.4zM1566.7 523.9l8 2.6l1.2 7.4l-6.8 4.8l-8 -2.6l-1.2 -7.4zM1584.2 521.3l8.1 2.6l1.2 7.4l-6.8 4.8l-8 -2.6l-1.3 -7.4zM1601.8 518.7l8 2.7l1.3 7.4l-6.9 4.7l-8 -2.6l-1.2 -7.4zM1619.3 516.2l8.1 2.6l1.2 7.4l-6.8 4.8l-8 -2.6l-1.3 -7.4zM1636.9 513.6l8 2.6l1.3 7.4l-6.8 4.8l-8.1 -2.6l-1.2 -7.4zM1654.5 511l8 2.7l1.2 7.4l-6.8 4.7l-8 -2.6l-1.2 -7.4zM1672 508.5l8 2.6l1.3 7.4l-6.8 4.8l-8.1 -2.6l-1.2 -7.4zM1689.6 505.9l8 2.6l1.2 7.4l-6.8 4.8l-8 -2.6l-1.2 -7.4zM1707.1 503.3l8.1 2.7l1.2 7.4l-6.8 4.7l-8.1 -2.6l-1.2 -7.4zM1724.7 500.8l8 2.6l1.2 7.4l-6.8 4.8l-8 -2.6l-1.2 -7.4zM1742.2 498.2l8.1 2.6l1.2 7.4l-6.8 4.8l-8.1 -2.6l-1.2 -7.4zM1759.8 495.7l8 2.6l1.2 7.4l-6.8 4.7l-8 -2.6l-1.2 -7.4zM1777.3 493.1l8.1 2.6l1.2 7.4l-6.8 4.8l-8 -2.6l-1.3 -7.4zM1794.9 490.5l8 2.6l1.3 7.4l-6.9 4.8l-8 -2.6l-1.2 -7.4zM1812.5 488l8 2.6l1.2 7.4l-6.8 4.8l-8 -2.7l-1.3 -7.4zM838.8 648.6l8 2.7l1.3 7.4l-6.8 4.7l-8.1 -2.6l-1.2 -7.4zM856.4 646.1l8 2.6l1.2 7.4l-6.8 4.8l-8 -2.6l-1.2 -7.4zM873.9 643.5l8.1 2.6l1.2 7.4l-6.8 4.8l-8.1 -2.6l-1.2 -7.4zM891.5 640.9l8 2.7l1.2 7.4l-6.8 4.7l-8 -2.6l-1.2 -7.4zM909 638.4l8.1 2.6l1.2 7.4l-6.8 4.8l-8 -2.6l-1.3 -7.4zM926.6 635.8l8 2.6l1.2 7.4l-6.8 4.8l-8 -2.6l-1.2 -7.4zM944.1 633.2l8.1 2.7l1.2 7.4l-6.8 4.7l-8 -2.6l-1.3 -7.4zM961.7 630.7l8 2.6l1.3 7.4l-6.9 4.8l-8 -2.6l-1.2 -7.4zM979.3 628.1l8 2.6l1.2 7.4l-6.8 4.8l-8 -2.6l-1.3 -7.4zM996.8 625.5l8 2.7l1.3 7.4l-6.8 4.7l-8.1 -2.6l-1.2 -7.4zM1014.4 623l8 2.6l1.2 7.4l-6.8 4.8l-8 -2.6l-1.2 -7.4zM1031.9 620.4l8.1 2.6l1.2 7.4l-6.8 4.8l-8.1 -2.6l-1.2 -7.4zM1049.5 617.8l8 2.7l1.2 7.4l-6.8 4.7l-8 -2.6l-1.2 -7.4zM1067 615.3l8.1 2.6l1.2 7.4l-6.8 4.8l-8.1 -2.6l-1.2 -7.4zM1084.6 612.7l8 2.6l1.2 7.4l-6.8 4.8l-8 -2.6l-1.2 -7.4zM1102.1 610.2l8.1 2.6l1.2 7.4l-6.8 4.7l-8 -2.6l-1.3 -7.4zM1119.7 607.6l8 2.6l1.3 7.4l-6.9 4.8l-8 -2.6l-1.2 -7.4zM1137.3 605l8 2.6l1.2 7.4l-6.8 4.8l-8 -2.6l-1.3 -7.4zM1154.8 602.5l8 2.6l1.3 7.4l-6.8 4.8l-8.1 -2.7l-1.2 -7.4zM1172.4 599.9l8 2.6l1.2 7.4l-6.8 4.8l-8 -2.6l-1.2 -7.4zM1189.9 597.3l8 2.6l1.3 7.4l-6.8 4.8l-8.1 -2.6l-1.2 -7.4zM1207.5 594.8l8 2.6l1.2 7.4l-6.8 4.8l-8 -2.7l-1.2 -7.4zM1225 592.2l8.1 2.6l1.2 7.4l-6.8 4.8l-8.1 -2.6l-1.2 -7.4zM1242.6 589.6l8 2.6l1.2 7.4l-6.8 4.8l-8 -2.6l-1.2 -7.4zM1260.1 587.1l8.1 2.6l1.2 7.4l-6.8 4.8l-8 -2.7l-1.3 -7.4zM1277.7 584.5l8 2.6l1.2 7.4l-6.8 4.8l-8 -2.6l-1.2 -7.4zM1295.2 581.9l8.1 2.6l1.2 7.4l-6.8 4.8l-8 -2.6l-1.3 -7.4zM1312.8 579.4l8 2.6l1.3 7.4l-6.9 4.8l-8 -2.7l-1.2 -7.4zM1330.4 576.8l8 2.6l1.2 7.4l-6.8 4.8l-8 -2.6l-1.3 -7.4zM1347.9 574.2l8 2.6l1.3 7.4l-6.8 4.8l-8.1 -2.6l-1.2 -7.4zM1365.5 571.7l8 2.6l1.2 7.4l-6.8 4.8l-8 -2.7l-1.2 -7.4zM1383 569.1l8.1 2.6l1.2 7.4l-6.8 4.8l-8.1 -2.6l-1.2 -7.4zM1400.6 566.5l8 2.6l1.2 7.4l-6.8 4.8l-8 -2.6l-1.2 -7.4zM1418.1 564l8.1 2.6l1.2 7.4l-6.8 4.8l-8.1 -2.7l-1.2 -7.4zM1435.7 561.4l8 2.6l1.2 7.4l-6.8 4.8l-8 -2.6l-1.2 -7.4zM1453.2 558.8l8.1 2.6l1.2 7.4l-6.8 4.8l-8 -2.6l-1.3 -7.4zM1470.8 556.3l8 2.6l1.3 7.4l-6.9 4.8l-8 -2.7l-1.2 -7.4zM1488.4 553.7l8 2.6l1.2 7.4l-6.8 4.8l-8 -2.6l-1.3 -7.4zM1505.9 551.1l8 2.6l1.3 7.4l-6.8 4.8l-8.1 -2.6l-1.2 -7.4zM1523.5 548.6l8 2.6l1.2 7.4l-6.8 4.8l-8 -2.6l-1.2 -7.4zM1541 546l8 2.6l1.3 7.4l-6.8 4.8l-8.1 -2.6l-1.2 -7.4zM1558.6 543.4l8 2.6l1.2 7.4l-6.8 4.8l-8 -2.6l-1.2 -7.4zM1576.1 540.9l8.1 2.6l1.2 7.4l-6.8 4.8l-8.1 -2.6l-1.2 -7.4zM1593.7 538.3l8 2.6l1.2 7.4l-6.8 4.8l-8 -2.6l-1.2 -7.4zM1611.2 535.7l8.1 2.7l1.2 7.4l-6.8 4.7l-8 -2.6l-1.3 -7.4zM1628.8 533.2l8 2.6l1.2 7.4l-6.8 4.8l-8 -2.6l-1.2 -7.4zM1646.3 530.6l8.1 2.6l1.2 7.4l-6.8 4.8l-8 -2.6l-1.3 -7.4zM1663.9 528l8 2.7l1.3 7.4l-6.9 4.7l-8 -2.6l-1.2 -7.4zM1681.5 525.5l8 2.6l1.2 7.4l-6.8 4.8l-8 -2.6l-1.3 -7.4zM1699 522.9l8 2.6l1.3 7.4l-6.8 4.8l-8.1 -2.6l-1.2 -7.4zM1716.6 520.3l8 2.7l1.2 7.4l-6.8 4.7l-8 -2.6l-1.2 -7.4zM1734.1 517.8l8.1 2.6l1.2 7.4l-6.8 4.8l-8.1 -2.6l-1.2 -7.4zM1751.7 515.2l8 2.6l1.2 7.4l-6.8 4.8l-8 -2.6l-1.2 -7.4zM1769.2 512.6l8.1 2.7l1.2 7.4l-6.8 4.7l-8.1 -2.6l-1.2 -7.4zM1786.8 510.1l8 2.6l1.2 7.4l-6.8 4.8l-8 -2.6l-1.2 -7.4zM1804.3 507.5l8.1 2.6l1.2 7.4l-6.8 4.8l-8 -2.6l-1.3 -7.4zM1821.9 504.9l8 2.7l1.3 7.4l-6.9 4.7l-8 -2.6l-1.2 -7.4zM835 665.4l8 2.6l1.2 7.4l-6.8 4.8l-8 -2.6l-1.3 -7.4zM852.5 662.9l8 2.6l1.3 7.4l-6.8 4.8l-8.1 -2.6l-1.2 -7.4zM870.1 660.3l8 2.6l1.2 7.4l-6.8 4.8l-8 -2.6l-1.2 -7.4zM887.6 657.7l8.1 2.6l1.2 7.4l-6.8 4.8l-8.1 -2.6l-1.2 -7.4zM905.2 655.2l8 2.6l1.2 7.4l-6.8 4.8l-8 -2.6l-1.2 -7.4zM922.7 652.6l8.1 2.6l1.2 7.4l-6.8 4.8l-8.1 -2.6l-1.2 -7.4zM940.3 650l8 2.7l1.2 7.4l-6.8 4.7l-8 -2.6l-1.2 -7.4zM957.8 647.5l8.1 2.6l1.2 7.4l-6.8 4.8l-8 -2.6l-1.3 -7.4zM975.4 644.9l8 2.6l1.3 7.4l-6.9 4.8l-8 -2.6l-1.2 -7.4zM993 642.3l8 2.7l1.2 7.4l-6.8 4.7l-8 -2.6l-1.3 -7.4zM1010.5 639.8l8 2.6l1.3 7.4l-6.8 4.8l-8.1 -2.6l-1.2 -7.4zM1028.1 637.2l8 2.6l1.2 7.4l-6.8 4.8l-8 -2.6l-1.2 -7.4zM1045.6 634.6l8.1 2.7l1.2 7.4l-6.8 4.7l-8.1 -2.6l-1.2 -7.4zM1063.2 632.1l8 2.6l1.2 7.4l-6.8 4.8l-8 -2.6l-1.2 -7.4zM1080.7 629.5l8.1 2.6l1.2 7.4l-6.8 4.8l-8.1 -2.6l-1.2 -7.4zM1098.3 626.9l8 2.7l1.2 7.4l-6.8 4.7l-8 -2.6l-1.2 -7.4zM1115.8 624.4l8.1 2.6l1.2 7.4l-6.8 4.8l-8 -2.6l-1.3 -7.4zM1133.4 621.8l8 2.6l1.2 7.4l-6.8 4.8l-8 -2.6l-1.2 -7.4zM1150.9 619.2l8.1 2.7l1.2 7.4l-6.8 4.7l-8 -2.6l-1.3 -7.4zM1168.5 616.7l8 2.6l1.3 7.4l-6.8 4.8l-8.1 -2.6l-1.2 -7.4zM1186.1 614.1l8 2.6l1.2 7.4l-6.8 4.8l-8 -2.6l-1.3 -7.4zM1203.6 611.5l8 2.7l1.3 7.4l-6.8 4.7l-8.1 -2.6l-1.2 -7.4zM1221.2 609l8 2.6l1.2 7.4l-6.8 4.8l-8 -2.6l-1.2 -7.4zM1238.7 606.4l8.1 2.6l1.2 7.4l-6.8 4.8l-8.1 -2.6l-1.2 -7.4zM1256.3 603.8l8 2.7l1.2 7.4l-6.8 4.7l-8 -2.6l-1.2 -7.4zM1273.8 601.3l8.1 2.6l1.2 7.4l-6.8 4.8l-8.1 -2.6l-1.2 -7.4zM1291.4 598.7l8 2.6l1.2 7.4l-6.8 4.8l-8 -2.6l-1.2 -7.4zM1308.9 596.2l8.1 2.6l1.2 7.4l-6.8 4.7l-8 -2.6l-1.3 -7.4zM1326.5 593.6l8 2.6l1.3 7.4l-6.9 4.8l-8 -2.6l-1.2 -7.4zM1344.1 591l8 2.6l1.2 7.4l-6.8 4.8l-8 -2.6l-1.3 -7.4zM1361.6 588.5l8 2.6l1.3 7.4l-6.8 4.8l-8.1 -2.7l-1.2 -7.4zM1379.2 585.9l8 2.6l1.2 7.4l-6.8 4.8l-8 -2.6l-1.2 -7.4zM1396.7 583.3l8.1 2.6l1.2 7.4l-6.8 4.8l-8.1 -2.6l-1.2 -7.4zM1414.3 580.8l8 2.6l1.2 7.4l-6.8 4.8l-8 -2.7l-1.2 -7.4zM1431.8 578.2l8.1 2.6l1.2 7.4l-6.8 4.8l-8.1 -2.6l-1.2 -7.4zM1449.4 575.6l8 2.6l1.2 7.4l-6.8 4.8l-8 -2.6l-1.2 -7.4zM1466.9 573.1l8.1 2.6l1.2 7.4l-6.8 4.8l-8 -2.7l-1.3 -7.4zM1484.5 570.5l8 2.6l1.2 7.4l-6.8 4.8l-8 -2.6l-1.2 -7.4zM1502 567.9l8.1 2.6l1.2 7.4l-6.8 4.8l-8 -2.6l-1.3 -7.4zM1519.6 565.4l8 2.6l1.3 7.4l-6.8 4.8l-8.1 -2.7l-1.2 -7.4zM1537.2 562.8l8 2.6l1.2 7.4l-6.8 4.8l-8 -2.6l-1.3 -7.4zM1554.7 560.2l8 2.6l1.3 7.4l-6.8 4.8l-8.1 -2.6l-1.2 -7.4zM1572.3 557.7l8 2.6l1.2 7.4l-6.8 4.8l-8 -2.7l-1.2 -7.4zM1589.8 555.1l8.1 2.6l1.2 7.4l-6.8 4.8l-8.1 -2.6l-1.2 -7.4zM1607.4 552.5l8 2.6l1.2 7.4l-6.8 4.8l-8 -2.6l-1.2 -7.4zM1624.9 550l8.1 2.6l1.2 7.4l-6.8 4.8l-8.1 -2.7l-1.2 -7.4zM1642.5 547.4l8 2.6l1.2 7.4l-6.8 4.8l-8 -2.6l-1.2 -7.4zM1660 544.8l8.1 2.6l1.2 7.4l-6.8 4.8l-8 -2.6l-1.3 -7.4zM1677.6 542.3l8 2.6l1.3 7.4l-6.9 4.8l-8 -2.7l-1.2 -7.4zM1695.2 539.7l8 2.6l1.2 7.4l-6.8 4.8l-8 -2.6l-1.3 -7.4zM1712.7 537.1l8 2.6l1.3 7.4l-6.8 4.8l-8.1 -2.6l-1.2 -7.4zM1730.3 534.6l8 2.6l1.2 7.4l-6.8 4.8l-8 -2.6l-1.2 -7.4zM1747.8 532l8.1 2.6l1.2 7.4l-6.8 4.8l-8.1 -2.6l-1.2 -7.4zM1765.4 529.4l8 2.6l1.2 7.4l-6.8 4.8l-8 -2.6l-1.2 -7.4zM1782.9 526.9l8.1 2.6l1.2 7.4l-6.8 4.8l-8.1 -2.6l-1.2 -7.4zM1800.5 524.3l8 2.6l1.2 7.4l-6.8 4.8l-8 -2.6l-1.2 -7.4zM1818 521.7l8.1 2.7l1.2 7.4l-6.8 4.7l-8 -2.6l-1.3 -7.4zM844.4 682.4l8 2.6l1.3 7.4l-6.9 4.8l-8 -2.6l-1.2 -7.4zM862 679.9l8 2.6l1.2 7.4l-6.8 4.8l-8 -2.7l-1.3 -7.4zM879.5 677.3l8 2.6l1.3 7.4l-6.8 4.8l-8.1 -2.6l-1.2 -7.4zM897.1 674.7l8 2.6l1.2 7.4l-6.8 4.8l-8 -2.6l-1.2 -7.4zM914.6 672.2l8.1 2.6l1.2 7.4l-6.8 4.8l-8.1 -2.7l-1.2 -7.4zM932.2 669.6l8 2.6l1.2 7.4l-6.8 4.8l-8 -2.6l-1.2 -7.4zM949.7 667l8.1 2.6l1.2 7.4l-6.8 4.8l-8.1 -2.6l-1.2 -7.4zM967.3 664.5l8 2.6l1.2 7.4l-6.8 4.8l-8 -2.7l-1.2 -7.4zM984.8 661.9l8.1 2.6l1.2 7.4l-6.8 4.8l-8 -2.6l-1.3 -7.4zM1002.4 659.3l8 2.6l1.3 7.4l-6.9 4.8l-8 -2.6l-1.2 -7.4zM1020 656.8l8 2.6l1.2 7.4l-6.8 4.8l-8 -2.7l-1.3 -7.4zM1037.5 654.2l8 2.6l1.3 7.4l-6.8 4.8l-8.1 -2.6l-1.2 -7.4zM1055.1 651.6l8 2.6l1.2 7.4l-6.8 4.8l-8 -2.6l-1.2 -7.4zM1072.6 649.1l8 2.6l1.3 7.4l-6.8 4.8l-8.1 -2.6l-1.2 -7.4zM1090.2 646.5l8 2.6l1.2 7.4l-6.8 4.8l-8 -2.6l-1.2 -7.4zM1107.7 643.9l8.1 2.6l1.2 7.4l-6.8 4.8l-8.1 -2.6l-1.2 -7.4zM1125.3 641.4l8 2.6l1.2 7.4l-6.8 4.8l-8 -2.6l-1.2 -7.4zM1142.8 638.8l8.1 2.6l1.2 7.4l-6.8 4.8l-8.1 -2.6l-1.2 -7.4zM1160.4 636.2l8 2.7l1.2 7.4l-6.8 4.7l-8 -2.6l-1.2 -7.4zM1177.9 633.7l8.1 2.6l1.2 7.4l-6.8 4.8l-8 -2.6l-1.3 -7.4zM1195.5 631.1l8 2.6l1.3 7.4l-6.9 4.8l-8 -2.6l-1.2 -7.4zM1213.1 628.5l8 2.7l1.2 7.4l-6.8 4.7l-8 -2.6l-1.3 -7.4zM1230.6 626l8 2.6l1.3 7.4l-6.8 4.8l-8.1 -2.6l-1.2 -7.4zM1248.2 623.4l8 2.6l1.2 7.4l-6.8 4.8l-8 -2.6l-1.2 -7.4zM1265.7 620.8l8.1 2.7l1.2 7.4l-6.8 4.7l-8.1 -2.6l-1.2 -7.4zM1283.3 618.3l8 2.6l1.2 7.4l-6.8 4.8l-8 -2.6l-1.2 -7.4zM1300.8 615.7l8.1 2.6l1.2 7.4l-6.8 4.8l-8.1 -2.6l-1.2 -7.4zM1318.4 613.1l8 2.7l1.2 7.4l-6.8 4.7l-8 -2.6l-1.2 -7.4zM1335.9 610.6l8.1 2.6l1.2 7.4l-6.8 4.8l-8 -2.6l-1.3 -7.4zM1353.5 608l8 2.6l1.3 7.4l-6.9 4.8l-8 -2.6l-1.2 -7.4zM1371.1 605.4l8 2.7l1.2 7.4l-6.8 4.7l-8 -2.6l-1.3 -7.4zM1388.6 602.9l8 2.6l1.3 7.4l-6.8 4.8l-8.1 -2.6l-1.2 -7.4zM1406.2 600.3l8 2.6l1.2 7.4l-6.8 4.8l-8 -2.6l-1.2 -7.4zM1423.7 597.7l8 2.7l1.3 7.4l-6.8 4.7l-8.1 -2.6l-1.2 -7.4zM1441.3 595.2l8 2.6l1.2 7.4l-6.8 4.8l-8 -2.6l-1.2 -7.4zM1458.8 592.6l8.1 2.6l1.2 7.4l-6.8 4.8l-8.1 -2.6l-1.2 -7.4zM1476.4 590l8 2.7l1.2 7.4l-6.8 4.7l-8 -2.6l-1.2 -7.4zM1493.9 587.5l8.1 2.6l1.2 7.4l-6.8 4.8l-8.1 -2.6l-1.2 -7.4zM1511.5 584.9l8 2.6l1.2 7.4l-6.8 4.8l-8 -2.6l-1.2 -7.4zM1529 582.4l8.1 2.6l1.2 7.4l-6.8 4.7l-8 -2.6l-1.3 -7.4zM1546.6 579.8l8 2.6l1.3 7.4l-6.9 4.8l-8 -2.6l-1.2 -7.4zM1564.2 577.2l8 2.6l1.2 7.4l-6.8 4.8l-8 -2.6l-1.3 -7.4zM1581.7 574.7l8 2.6l1.3 7.4l-6.8 4.8l-8.1 -2.7l-1.2 -7.4zM1599.3 572.1l8 2.6l1.2 7.4l-6.8 4.8l-8 -2.6l-1.2 -7.4zM1616.8 569.5l8.1 2.6l1.2 7.4l-6.8 4.8l-8.1 -2.6l-1.2 -7.4zM1634.4 567l8 2.6l1.2 7.4l-6.8 4.8l-8 -2.7l-1.2 -7.4zM1651.9 564.4l8.1 2.6l1.2 7.4l-6.8 4.8l-8.1 -2.6l-1.2 -7.4zM1669.5 561.8l8 2.6l1.2 7.4l-6.8 4.8l-8 -2.6l-1.2 -7.4zM1687 559.3l8.1 2.6l1.2 7.4l-6.8 4.8l-8 -2.7l-1.3 -7.4zM1704.6 556.7l8 2.6l1.3 7.4l-6.9 4.8l-8 -2.6l-1.2 -7.4zM1722.2 554.1l8 2.6l1.2 7.4l-6.8 4.8l-8 -2.6l-1.3 -7.4zM1739.7 551.6l8 2.6l1.3 7.4l-6.8 4.8l-8.1 -2.7l-1.2 -7.4zM1757.3 549l8 2.6l1.2 7.4l-6.8 4.8l-8 -2.6l-1.2 -7.4zM1774.8 546.4l8 2.6l1.3 7.4l-6.8 4.8l-8.1 -2.6l-1.2 -7.4zM1792.4 543.9l8 2.6l1.2 7.4l-6.8 4.8l-8 -2.7l-1.2 -7.4zM1809.9 541.3l8.1 2.6l1.2 7.4l-6.8 4.8l-8.1 -2.6l-1.2 -7.4zM1827.5 538.7l8 2.6l1.2 7.4l-6.8 4.8l-8 -2.6l-1.2 -7.4zM840.5 699.2l8.1 2.6l1.2 7.4l-6.8 4.8l-8 -2.6l-1.3 -7.4zM858.1 696.7l8 2.6l1.3 7.4l-6.9 4.7l-8 -2.6l-1.2 -7.4zM875.7 694.1l8 2.6l1.2 7.4l-6.8 4.8l-8 -2.6l-1.3 -7.4zM893.2 691.5l8 2.6l1.3 7.4l-6.8 4.8l-8.1 -2.6l-1.2 -7.4zM910.8 689l8 2.6l1.2 7.4l-6.8 4.8l-8 -2.7l-1.2 -7.4zM928.3 686.4l8.1 2.6l1.2 7.4l-6.8 4.8l-8.1 -2.6l-1.2 -7.4zM945.9 683.8l8 2.6l1.2 7.4l-6.8 4.8l-8 -2.6l-1.2 -7.4zM963.4 681.3l8.1 2.6l1.2 7.4l-6.8 4.8l-8.1 -2.7l-1.2 -7.4zM981 678.7l8 2.6l1.2 7.4l-6.8 4.8l-8 -2.6l-1.2 -7.4zM998.5 676.1l8.1 2.6l1.2 7.4l-6.8 4.8l-8 -2.6l-1.3 -7.4zM1016.1 673.6l8 2.6l1.2 7.4l-6.8 4.8l-8 -2.7l-1.2 -7.4zM1033.6 671l8.1 2.6l1.2 7.4l-6.8 4.8l-8 -2.6l-1.3 -7.4zM1051.2 668.4l8 2.6l1.3 7.4l-6.9 4.8l-8 -2.6l-1.2 -7.4zM1068.8 665.9l8 2.6l1.2 7.4l-6.8 4.8l-8 -2.7l-1.3 -7.4zM1086.3 663.3l8 2.6l1.3 7.4l-6.8 4.8l-8.1 -2.6l-1.2 -7.4zM1103.9 660.7l8 2.6l1.2 7.4l-6.8 4.8l-8 -2.6l-1.2 -7.4zM1121.4 658.2l8.1 2.6l1.2 7.4l-6.8 4.8l-8.1 -2.7l-1.2 -7.4zM1139 655.6l8 2.6l1.2 7.4l-6.8 4.8l-8 -2.6l-1.2 -7.4zM1156.5 653l8.1 2.6l1.2 7.4l-6.8 4.8l-8.1 -2.6l-1.2 -7.4zM1174.1 650.5l8 2.6l1.2 7.4l-6.8 4.8l-8 -2.7l-1.2 -7.4zM1191.6 647.9l8.1 2.6l1.2 7.4l-6.8 4.8l-8 -2.6l-1.3 -7.4zM1209.2 645.3l8 2.6l1.3 7.4l-6.9 4.8l-8 -2.6l-1.2 -7.4zM1226.8 642.8l8 2.6l1.2 7.4l-6.8 4.8l-8 -2.7l-1.3 -7.4zM1244.3 640.2l8 2.6l1.3 7.4l-6.8 4.8l-8.1 -2.6l-1.2 -7.4zM1261.9 637.6l8 2.6l1.2 7.4l-6.8 4.8l-8 -2.6l-1.2 -7.4zM1279.4 635.1l8.1 2.6l1.2 7.4l-6.8 4.8l-8.1 -2.6l-1.2 -7.4zM1297 632.5l8 2.6l1.2 7.4l-6.8 4.8l-8 -2.6l-1.2 -7.4zM1314.5 629.9l8.1 2.6l1.2 7.4l-6.8 4.8l-8.1 -2.6l-1.2 -7.4zM1332.1 627.4l8 2.6l1.2 7.4l-6.8 4.8l-8 -2.6l-1.2 -7.4zM1349.6 624.8l8.1 2.6l1.2 7.4l-6.8 4.8l-8 -2.6l-1.3 -7.4zM1367.2 622.2l8 2.7l1.2 7.4l-6.8 4.7l-8 -2.6l-1.2 -7.4zM1384.7 619.7l8.1 2.6l1.2 7.4l-6.8 4.8l-8 -2.6l-1.3 -7.4zM1402.3 617.1l8 2.6l1.3 7.4l-6.9 4.8l-8 -2.6l-1.2 -7.4zM1419.9 614.5l8 2.7l1.2 7.4l-6.8 4.7l-8 -2.6l-1.3 -7.4zM1437.4 612l8 2.6l1.3 7.4l-6.8 4.8l-8.1 -2.6l-1.2 -7.4zM1455 609.4l8 2.6l1.2 7.4l-6.8 4.8l-8 -2.6l-1.2 -7.4zM1472.5 606.8l8.1 2.7l1.2 7.4l-6.8 4.7l-8.1 -2.6l-1.2 -7.4zM1490.1 604.3l8 2.6l1.2 7.4l-6.8 4.8l-8 -2.6l-1.2 -7.4zM1507.6 601.7l8.1 2.6l1.2 7.4l-6.8 4.8l-8.1 -2.6l-1.2 -7.4zM1525.2 599.1l8 2.7l1.2 7.4l-6.8 4.7l-8 -2.6l-1.2 -7.4zM1542.7 596.6l8.1 2.6l1.2 7.4l-6.8 4.8l-8 -2.6l-1.3 -7.4zM1560.3 594l8 2.6l1.3 7.4l-6.9 4.8l-8 -2.6l-1.2 -7.4zM1577.9 591.4l8 2.7l1.2 7.4l-6.8 4.7l-8 -2.6l-1.3 -7.4zM1595.4 588.9l8 2.6l1.3 7.4l-6.8 4.8l-8.1 -2.6l-1.2 -7.4zM1613 586.3l8 2.6l1.2 7.4l-6.8 4.8l-8 -2.6l-1.2 -7.4zM1630.5 583.7l8.1 2.7l1.2 7.4l-6.8 4.7l-8.1 -2.6l-1.2 -7.4zM1648.1 581.2l8 2.6l1.2 7.4l-6.8 4.8l-8 -2.6l-1.2 -7.4zM1665.6 578.6l8.1 2.6l1.2 7.4l-6.8 4.8l-8.1 -2.6l-1.2 -7.4zM1683.2 576l8 2.7l1.2 7.4l-6.8 4.7l-8 -2.6l-1.2 -7.4zM1700.7 573.5l8.1 2.6l1.2 7.4l-6.8 4.8l-8 -2.6l-1.3 -7.4zM1718.3 570.9l8 2.6l1.2 7.4l-6.8 4.8l-8 -2.6l-1.2 -7.4zM1735.8 568.4l8.1 2.6l1.2 7.4l-6.8 4.7l-8 -2.6l-1.3 -7.4zM1753.4 565.8l8 2.6l1.3 7.4l-6.9 4.8l-8 -2.6l-1.2 -7.4zM1771 563.2l8 2.6l1.2 7.4l-6.8 4.8l-8 -2.6l-1.3 -7.4zM1788.5 560.7l8 2.6l1.3 7.4l-6.8 4.8l-8.1 -2.7l-1.2 -7.4zM1806.1 558.1l8 2.6l1.2 7.4l-6.8 4.8l-8 -2.6l-1.2 -7.4zM1823.6 555.5l8.1 2.6l1.2 7.4l-6.8 4.8l-8.1 -2.6l-1.2 -7.4zM850 716.2l8 2.6l1.2 7.4l-6.8 4.8l-8 -2.6l-1.2 -7.4zM867.5 713.6l8.1 2.7l1.2 7.4l-6.8 4.7l-8 -2.6l-1.3 -7.4zM885.1 711.1l8 2.6l1.3 7.4l-6.9 4.8l-8 -2.6l-1.2 -7.4zM902.6 708.5l8.1 2.6l1.2 7.4l-6.8 4.8l-8 -2.6l-1.3 -7.4zM920.2 705.9l8 2.7l1.3 7.4l-6.8 4.7l-8.1 -2.6l-1.2 -7.4zM937.8 703.4l8 2.6l1.2 7.4l-6.8 4.8l-8 -2.6l-1.2 -7.4zM955.3 700.8l8 2.6l1.3 7.4l-6.8 4.8l-8.1 -2.6l-1.2 -7.4zM972.9 698.2l8 2.7l1.2 7.4l-6.8 4.7l-8 -2.6l-1.2 -7.4zM990.4 695.7l8.1 2.6l1.2 7.4l-6.8 4.8l-8.1 -2.6l-1.2 -7.4zM1008 693.1l8 2.6l1.2 7.4l-6.8 4.8l-8 -2.6l-1.2 -7.4zM1025.5 690.5l8.1 2.7l1.2 7.4l-6.8 4.7l-8.1 -2.6l-1.2 -7.4zM1043.1 688l8 2.6l1.2 7.4l-6.8 4.8l-8 -2.6l-1.2 -7.4zM1060.6 685.4l8.1 2.6l1.2 7.4l-6.8 4.8l-8 -2.6l-1.3 -7.4zM1078.2 682.9l8 2.6l1.3 7.4l-6.9 4.7l-8 -2.6l-1.2 -7.4zM1095.8 680.3l8 2.6l1.2 7.4l-6.8 4.8l-8 -2.6l-1.3 -7.4zM1113.3 677.7l8 2.6l1.3 7.4l-6.8 4.8l-8.1 -2.6l-1.2 -7.4zM1130.9 675.2l8 2.6l1.2 7.4l-6.8 4.8l-8 -2.7l-1.2 -7.4zM1148.4 672.6l8.1 2.6l1.2 7.4l-6.8 4.8l-8.1 -2.6l-1.2 -7.4zM1166 670l8 2.6l1.2 7.4l-6.8 4.8l-8 -2.6l-1.2 -7.4zM1183.5 667.5l8.1 2.6l1.2 7.4l-6.8 4.8l-8.1 -2.7l-1.2 -7.4zM1201.1 664.9l8 2.6l1.2 7.4l-6.8 4.8l-8 -2.6l-1.2 -7.4zM1218.6 662.3l8.1 2.6l1.2 7.4l-6.8 4.8l-8 -2.6l-1.3 -7.4zM1236.2 659.8l8 2.6l1.3 7.4l-6.9 4.8l-8 -2.7l-1.2 -7.4zM1253.7 657.2l8.1 2.6l1.2 7.4l-6.8 4.8l-8 -2.6l-1.3 -7.4zM1271.3 654.6l8 2.6l1.3 7.4l-6.8 4.8l-8.1 -2.6l-1.2 -7.4zM1288.9 652.1l8 2.6l1.2 7.4l-6.8 4.8l-8 -2.7l-1.2 -7.4zM1306.4 649.5l8 2.6l1.3 7.4l-6.8 4.8l-8.1 -2.6l-1.2 -7.4zM1324 646.9l8 2.6l1.2 7.4l-6.8 4.8l-8 -2.6l-1.2 -7.4zM1341.5 644.4l8.1 2.6l1.2 7.4l-6.8 4.8l-8.1 -2.7l-1.2 -7.4zM1359.1 641.8l8 2.6l1.2 7.4l-6.8 4.8l-8 -2.6l-1.2 -7.4zM1376.6 639.2l8.1 2.6l1.2 7.4l-6.8 4.8l-8.1 -2.6l-1.2 -7.4zM1394.2 636.7l8 2.6l1.2 7.4l-6.8 4.8l-8 -2.7l-1.2 -7.4zM1411.7 634.1l8.1 2.6l1.2 7.4l-6.8 4.8l-8 -2.6l-1.3 -7.4zM1429.3 631.5l8 2.6l1.3 7.4l-6.9 4.8l-8 -2.6l-1.2 -7.4zM1446.9 629l8 2.6l1.2 7.4l-6.8 4.8l-8 -2.7l-1.3 -7.4zM1464.4 626.4l8 2.6l1.3 7.4l-6.8 4.8l-8.1 -2.6l-1.2 -7.4zM1482 623.8l8 2.6l1.2 7.4l-6.8 4.8l-8 -2.6l-1.2 -7.4zM1499.5 621.3l8.1 2.6l1.2 7.4l-6.8 4.8l-8.1 -2.6l-1.2 -7.4zM1517.1 618.7l8 2.6l1.2 7.4l-6.8 4.8l-8 -2.6l-1.2 -7.4zM1534.6 616.1l8.1 2.6l1.2 7.4l-6.8 4.8l-8.1 -2.6l-1.2 -7.4zM1552.2 613.6l8 2.6l1.2 7.4l-6.8 4.8l-8 -2.6l-1.2 -7.4zM1569.7 611l8.1 2.6l1.2 7.4l-6.8 4.8l-8 -2.6l-1.3 -7.4zM1587.3 608.4l8 2.7l1.3 7.4l-6.9 4.7l-8 -2.6l-1.2 -7.4zM1604.8 605.9l8.1 2.6l1.2 7.4l-6.8 4.8l-8 -2.6l-1.3 -7.4zM1622.4 603.3l8 2.6l1.3 7.4l-6.8 4.8l-8.1 -2.6l-1.2 -7.4zM1640 600.7l8 2.7l1.2 7.4l-6.8 4.7l-8 -2.6l-1.2 -7.4zM1657.5 598.2l8 2.6l1.3 7.4l-6.8 4.8l-8.1 -2.6l-1.2 -7.4zM1675.1 595.6l8 2.6l1.2 7.4l-6.8 4.8l-8 -2.6l-1.2 -7.4zM1692.6 593l8.1 2.7l1.2 7.4l-6.8 4.7l-8.1 -2.6l-1.2 -7.4zM1710.2 590.5l8 2.6l1.2 7.4l-6.8 4.8l-8 -2.6l-1.2 -7.4zM1727.7 587.9l8.1 2.6l1.2 7.4l-6.8 4.8l-8.1 -2.6l-1.2 -7.4zM1745.3 585.3l8 2.7l1.2 7.4l-6.8 4.7l-8 -2.6l-1.2 -7.4zM1762.8 582.8l8.1 2.6l1.2 7.4l-6.8 4.8l-8 -2.6l-1.3 -7.4zM1780.4 580.2l8 2.6l1.3 7.4l-6.9 4.8l-8 -2.6l-1.2 -7.4zM1798 577.6l8 2.7l1.2 7.4l-6.8 4.7l-8 -2.6l-1.3 -7.4zM1815.5 575.1l8 2.6l1.3 7.4l-6.8 4.8l-8.1 -2.6l-1.2 -7.4zM1833.1 572.5l8 2.6l1.2 7.4l-6.8 4.8l-8 -2.6l-1.2 -7.4zM846.1 733l8.1 2.6l1.2 7.4l-6.8 4.8l-8.1 -2.6l-1.2 -7.4zM863.7 730.4l8 2.6l1.2 7.4l-6.8 4.8l-8 -2.6l-1.2 -7.4zM881.2 727.9l8.1 2.6l1.2 7.4l-6.8 4.8l-8 -2.6l-1.3 -7.4zM898.8 725.3l8 2.6l1.2 7.4l-6.8 4.8l-8 -2.6l-1.2 -7.4zM916.3 722.7l8.1 2.7l1.2 7.4l-6.8 4.7l-8 -2.6l-1.3 -7.4zM933.9 720.2l8 2.6l1.3 7.4l-6.9 4.8l-8 -2.6l-1.2 -7.4zM951.5 717.6l8 2.6l1.2 7.4l-6.8 4.8l-8 -2.6l-1.3 -7.4zM969 715l8 2.7l1.3 7.4l-6.8 4.7l-8.1 -2.6l-1.2 -7.4zM986.6 712.5l8 2.6l1.2 7.4l-6.8 4.8l-8 -2.6l-1.2 -7.4zM1004.1 709.9l8.1 2.6l1.2 7.4l-6.8 4.8l-8.1 -2.6l-1.2 -7.4zM1021.7 707.3l8 2.7l1.2 7.4l-6.8 4.7l-8 -2.6l-1.2 -7.4zM1039.2 704.8l8.1 2.6l1.2 7.4l-6.8 4.8l-8.1 -2.6l-1.2 -7.4zM1056.8 702.2l8 2.6l1.2 7.4l-6.8 4.8l-8 -2.6l-1.2 -7.4zM1074.3 699.6l8.1 2.7l1.2 7.4l-6.8 4.7l-8 -2.6l-1.3 -7.4zM1091.9 697.1l8 2.6l1.3 7.4l-6.9 4.8l-8 -2.6l-1.2 -7.4zM1109.5 694.5l8 2.6l1.2 7.4l-6.8 4.8l-8 -2.6l-1.3 -7.4zM1127 691.9l8 2.7l1.3 7.4l-6.8 4.7l-8.1 -2.6l-1.2 -7.4zM1144.6 689.4l8 2.6l1.2 7.4l-6.8 4.8l-8 -2.6l-1.2 -7.4zM1162.1 686.8l8 2.6l1.3 7.4l-6.8 4.8l-8.1 -2.6l-1.2 -7.4zM1179.7 684.2l8 2.7l1.2 7.4l-6.8 4.7l-8 -2.6l-1.2 -7.4zM1197.2 681.7l8.1 2.6l1.2 7.4l-6.8 4.8l-8.1 -2.6l-1.2 -7.4zM1214.8 679.1l8 2.6l1.2 7.4l-6.8 4.8l-8 -2.6l-1.2 -7.4zM1232.3 676.5l8.1 2.7l1.2 7.4l-6.8 4.7l-8 -2.6l-1.3 -7.4zM1249.9 674l8 2.6l1.2 7.4l-6.8 4.8l-8 -2.6l-1.2 -7.4zM1267.4 671.4l8.1 2.6l1.2 7.4l-6.8 4.8l-8 -2.6l-1.3 -7.4zM1285 668.9l8 2.6l1.3 7.4l-6.9 4.7l-8 -2.6l-1.2 -7.4zM1302.6 666.3l8 2.6l1.2 7.4l-6.8 4.8l-8 -2.6l-1.3 -7.4zM1320.1 663.7l8 2.6l1.3 7.4l-6.8 4.8l-8.1 -2.6l-1.2 -7.4zM1337.7 661.2l8 2.6l1.2 7.4l-6.8 4.8l-8 -2.7l-1.2 -7.4zM1355.2 658.6l8.1 2.6l1.2 7.4l-6.8 4.8l-8.1 -2.6l-1.2 -7.4zM1372.8 656l8 2.6l1.2 7.4l-6.8 4.8l-8 -2.6l-1.2 -7.4zM1390.3 653.5l8.1 2.6l1.2 7.4l-6.8 4.8l-8.1 -2.7l-1.2 -7.4zM1407.9 650.9l8 2.6l1.2 7.4l-6.8 4.8l-8 -2.6l-1.2 -7.4zM1425.4 648.3l8.1 2.6l1.2 7.4l-6.8 4.8l-8 -2.6l-1.3 -7.4zM1443 645.8l8 2.6l1.3 7.4l-6.9 4.8l-8 -2.7l-1.2 -7.4zM1460.6 643.2l8 2.6l1.2 7.4l-6.8 4.8l-8 -2.6l-1.3 -7.4zM1478.1 640.6l8 2.6l1.3 7.4l-6.8 4.8l-8.1 -2.6l-1.2 -7.4zM1495.7 638.1l8 2.6l1.2 7.4l-6.8 4.8l-8 -2.7l-1.2 -7.4zM1513.2 635.5l8 2.6l1.3 7.4l-6.8 4.8l-8.1 -2.6l-1.2 -7.4zM1530.8 632.9l8 2.6l1.2 7.4l-6.8 4.8l-8 -2.6l-1.2 -7.4zM1548.3 630.4l8.1 2.6l1.2 7.4l-6.8 4.8l-8.1 -2.7l-1.2 -7.4zM1565.9 627.8l8 2.6l1.2 7.4l-6.8 4.8l-8 -2.6l-1.2 -7.4zM1583.4 625.2l8.1 2.6l1.2 7.4l-6.8 4.8l-8 -2.6l-1.3 -7.4zM1601 622.7l8 2.6l1.2 7.4l-6.8 4.8l-8 -2.7l-1.2 -7.4zM1618.5 620.1l8.1 2.6l1.2 7.4l-6.8 4.8l-8 -2.6l-1.3 -7.4zM1636.1 617.5l8 2.6l1.3 7.4l-6.9 4.8l-8 -2.6l-1.2 -7.4zM1653.7 615l8 2.6l1.2 7.4l-6.8 4.8l-8 -2.7l-1.3 -7.4zM1671.2 612.4l8 2.6l1.3 7.4l-6.8 4.8l-8.1 -2.6l-1.2 -7.4zM1688.8 609.8l8 2.6l1.2 7.4l-6.8 4.8l-8 -2.6l-1.2 -7.4zM1706.3 607.3l8.1 2.6l1.2 7.4l-6.8 4.8l-8.1 -2.6l-1.2 -7.4zM1723.9 604.7l8 2.6l1.2 7.4l-6.8 4.8l-8 -2.6l-1.2 -7.4zM1741.4 602.1l8.1 2.6l1.2 7.4l-6.8 4.8l-8.1 -2.6l-1.2 -7.4zM1759 599.6l8 2.6l1.2 7.4l-6.8 4.8l-8 -2.6l-1.2 -7.4zM1776.5 597l8.1 2.6l1.2 7.4l-6.8 4.8l-8 -2.6l-1.3 -7.4zM1794.1 594.4l8 2.7l1.3 7.4l-6.9 4.7l-8 -2.6l-1.2 -7.4zM1811.7 591.9l8 2.6l1.2 7.4l-6.8 4.8l-8 -2.6l-1.3 -7.4zM1829.2 589.3l8 2.6l1.3 7.4l-6.8 4.8l-8.1 -2.6l-1.2 -7.4zM855.6 750l8 2.6l1.2 7.4l-6.8 4.8l-8 -2.6l-1.2 -7.4zM873.1 747.4l8.1 2.6l1.2 7.4l-6.8 4.8l-8.1 -2.6l-1.2 -7.4zM890.7 744.9l8 2.6l1.2 7.4l-6.8 4.8l-8 -2.7l-1.2 -7.4zM908.2 742.3l8.1 2.6l1.2 7.4l-6.8 4.8l-8.1 -2.6l-1.2 -7.4zM925.8 739.7l8 2.6l1.2 7.4l-6.8 4.8l-8 -2.6l-1.2 -7.4zM943.3 737.2l8.1 2.6l1.2 7.4l-6.8 4.8l-8 -2.7l-1.3 -7.4zM960.9 734.6l8 2.6l1.3 7.4l-6.9 4.8l-8 -2.6l-1.2 -7.4zM978.5 732l8 2.6l1.2 7.4l-6.8 4.8l-8 -2.6l-1.3 -7.4zM996 729.5l8 2.6l1.3 7.4l-6.8 4.8l-8.1 -2.7l-1.2 -7.4zM1013.6 726.9l8 2.6l1.2 7.4l-6.8 4.8l-8 -2.6l-1.2 -7.4zM1031.1 724.3l8.1 2.6l1.2 7.4l-6.8 4.8l-8.1 -2.6l-1.2 -7.4zM1048.7 721.8l8 2.6l1.2 7.4l-6.8 4.8l-8 -2.6l-1.2 -7.4zM1066.2 719.2l8.1 2.6l1.2 7.4l-6.8 4.8l-8.1 -2.6l-1.2 -7.4zM1083.8 716.6l8 2.6l1.2 7.4l-6.8 4.8l-8 -2.6l-1.2 -7.4zM1101.3 714.1l8.1 2.6l1.2 7.4l-6.8 4.8l-8 -2.6l-1.3 -7.4zM1118.9 711.5l8 2.6l1.2 7.4l-6.8 4.8l-8 -2.6l-1.2 -7.4zM1136.4 708.9l8.1 2.7l1.2 7.4l-6.8 4.7l-8 -2.6l-1.3 -7.4zM1154 706.4l8 2.6l1.3 7.4l-6.8 4.8l-8.1 -2.6l-1.2 -7.4zM1171.6 703.8l8 2.6l1.2 7.4l-6.8 4.8l-8 -2.6l-1.3 -7.4zM1189.1 701.2l8 2.7l1.3 7.4l-6.8 4.7l-8.1 -2.6l-1.2 -7.4zM1206.7 698.7l8 2.6l1.2 7.4l-6.8 4.8l-8 -2.6l-1.2 -7.4zM1224.2 696.1l8.1 2.6l1.2 7.4l-6.8 4.8l-8.1 -2.6l-1.2 -7.4zM1241.8 693.5l8 2.7l1.2 7.4l-6.8 4.7l-8 -2.6l-1.2 -7.4zM1259.3 691l8.1 2.6l1.2 7.4l-6.8 4.8l-8.1 -2.6l-1.2 -7.4zM1276.9 688.4l8 2.6l1.2 7.4l-6.8 4.8l-8 -2.6l-1.2 -7.4zM1294.4 685.8l8.1 2.7l1.2 7.4l-6.8 4.7l-8 -2.6l-1.3 -7.4zM1312 683.3l8 2.6l1.3 7.4l-6.9 4.8l-8 -2.6l-1.2 -7.4zM1329.6 680.7l8 2.6l1.2 7.4l-6.8 4.8l-8 -2.6l-1.3 -7.4zM1347.1 678.1l8 2.7l1.3 7.4l-6.8 4.7l-8.1 -2.6l-1.2 -7.4zM1364.7 675.6l8 2.6l1.2 7.4l-6.8 4.8l-8 -2.6l-1.2 -7.4zM1382.2 673l8.1 2.6l1.2 7.4l-6.8 4.8l-8.1 -2.6l-1.2 -7.4zM1399.8 670.4l8 2.7l1.2 7.4l-6.8 4.7l-8 -2.6l-1.2 -7.4zM1417.3 667.9l8.1 2.6l1.2 7.4l-6.8 4.8l-8.1 -2.6l-1.2 -7.4zM1434.9 665.3l8 2.6l1.2 7.4l-6.8 4.8l-8 -2.6l-1.2 -7.4zM1452.4 662.7l8.1 2.7l1.2 7.4l-6.8 4.7l-8 -2.6l-1.3 -7.4zM1470 660.2l8 2.6l1.2 7.4l-6.8 4.8l-8 -2.6l-1.2 -7.4zM1487.5 657.6l8.1 2.6l1.2 7.4l-6.8 4.8l-8 -2.6l-1.3 -7.4zM1505.1 655.1l8 2.6l1.3 7.4l-6.8 4.7l-8.1 -2.6l-1.2 -7.4zM1522.7 652.5l8 2.6l1.2 7.4l-6.8 4.8l-8 -2.6l-1.3 -7.4zM1540.2 649.9l8 2.6l1.3 7.4l-6.8 4.8l-8.1 -2.6l-1.2 -7.4zM1557.8 647.4l8 2.6l1.2 7.4l-6.8 4.8l-8 -2.7l-1.2 -7.4zM1575.3 644.8l8.1 2.6l1.2 7.4l-6.8 4.8l-8.1 -2.6l-1.2 -7.4zM1592.9 642.2l8 2.6l1.2 7.4l-6.8 4.8l-8 -2.6l-1.2 -7.4zM1610.4 639.7l8.1 2.6l1.2 7.4l-6.8 4.8l-8.1 -2.7l-1.2 -7.4zM1628 637.1l8 2.6l1.2 7.4l-6.8 4.8l-8 -2.6l-1.2 -7.4zM1645.5 634.5l8.1 2.6l1.2 7.4l-6.8 4.8l-8 -2.6l-1.3 -7.4zM1663.1 632l8 2.6l1.3 7.4l-6.9 4.8l-8 -2.7l-1.2 -7.4zM1680.7 629.4l8 2.6l1.2 7.4l-6.8 4.8l-8 -2.6l-1.3 -7.4zM1698.2 626.8l8 2.6l1.3 7.4l-6.8 4.8l-8.1 -2.6l-1.2 -7.4zM1715.8 624.3l8 2.6l1.2 7.4l-6.8 4.8l-8 -2.7l-1.2 -7.4zM1733.3 621.7l8.1 2.6l1.2 7.4l-6.8 4.8l-8.1 -2.6l-1.2 -7.4zM1750.9 619.1l8 2.6l1.2 7.4l-6.8 4.8l-8 -2.6l-1.2 -7.4zM1768.4 616.6l8.1 2.6l1.2 7.4l-6.8 4.8l-8.1 -2.7l-1.2 -7.4zM1786 614l8 2.6l1.2 7.4l-6.8 4.8l-8 -2.6l-1.2 -7.4zM1803.5 611.4l8.1 2.6l1.2 7.4l-6.8 4.8l-8 -2.6l-1.3 -7.4zM1821.1 608.9l8 2.6l1.2 7.4l-6.8 4.8l-8 -2.7l-1.2 -7.4zM1838.6 606.3l8.1 2.6l1.2 7.4l-6.8 4.8l-8 -2.6l-1.3 -7.4zM851.7 766.8l8 2.6l1.3 7.4l-6.8 4.8l-8.1 -2.6l-1.2 -7.4zM869.3 764.2l8 2.6l1.2 7.4l-6.8 4.8l-8 -2.6l-1.2 -7.4zM886.8 761.7l8.1 2.6l1.2 7.4l-6.8 4.8l-8.1 -2.7l-1.2 -7.4zM904.4 759.1l8 2.6l1.2 7.4l-6.8 4.8l-8 -2.6l-1.2 -7.4zM921.9 756.5l8.1 2.6l1.2 7.4l-6.8 4.8l-8.1 -2.6l-1.2 -7.4zM939.5 754l8 2.6l1.2 7.4l-6.8 4.8l-8 -2.7l-1.2 -7.4zM957 751.4l8.1 2.6l1.2 7.4l-6.8 4.8l-8 -2.6l-1.3 -7.4zM974.6 748.8l8 2.6l1.3 7.4l-6.9 4.8l-8 -2.6l-1.2 -7.4zM992.2 746.3l8 2.6l1.2 7.4l-6.8 4.8l-8 -2.7l-1.3 -7.4zM1009.7 743.7l8 2.6l1.3 7.4l-6.8 4.8l-8.1 -2.6l-1.2 -7.4zM1027.3 741.1l8 2.6l1.2 7.4l-6.8 4.8l-8 -2.6l-1.2 -7.4zM1044.8 738.6l8 2.6l1.3 7.4l-6.8 4.8l-8.1 -2.7l-1.2 -7.4zM1062.4 736l8 2.6l1.2 7.4l-6.8 4.8l-8 -2.6l-1.2 -7.4zM1079.9 733.4l8.1 2.6l1.2 7.4l-6.8 4.8l-8.1 -2.6l-1.2 -7.4zM1097.5 730.9l8 2.6l1.2 7.4l-6.8 4.8l-8 -2.7l-1.2 -7.4zM1115 728.3l8.1 2.6l1.2 7.4l-6.8 4.8l-8.1 -2.6l-1.2 -7.4zM1132.6 725.7l8 2.6l1.2 7.4l-6.8 4.8l-8 -2.6l-1.2 -7.4zM1150.1 723.2l8.1 2.6l1.2 7.4l-6.8 4.8l-8 -2.7l-1.3 -7.4zM1167.7 720.6l8 2.6l1.3 7.4l-6.9 4.8l-8 -2.6l-1.2 -7.4zM1185.3 718l8 2.6l1.2 7.4l-6.8 4.8l-8 -2.6l-1.3 -7.4zM1202.8 715.5l8 2.6l1.3 7.4l-6.8 4.8l-8.1 -2.7l-1.2 -7.4zM1220.4 712.9l8 2.6l1.2 7.4l-6.8 4.8l-8 -2.6l-1.2 -7.4zM1237.9 710.3l8.1 2.6l1.2 7.4l-6.8 4.8l-8.1 -2.6l-1.2 -7.4zM1255.5 707.8l8 2.6l1.2 7.4l-6.8 4.8l-8 -2.6l-1.2 -7.4zM1273 705.2l8.1 2.6l1.2 7.4l-6.8 4.8l-8.1 -2.6l-1.2 -7.4zM1290.6 702.6l8 2.6l1.2 7.4l-6.8 4.8l-8 -2.6l-1.2 -7.4zM1308.1 700.1l8.1 2.6l1.2 7.4l-6.8 4.8l-8 -2.6l-1.3 -7.4zM1325.7 697.5l8 2.6l1.3 7.4l-6.9 4.8l-8 -2.6l-1.2 -7.4zM1343.3 694.9l8 2.7l1.2 7.4l-6.8 4.7l-8 -2.6l-1.3 -7.4zM1360.8 692.4l8 2.6l1.3 7.4l-6.8 4.8l-8.1 -2.6l-1.2 -7.4zM1378.4 689.8l8 2.6l1.2 7.4l-6.8 4.8l-8 -2.6l-1.2 -7.4zM1395.9 687.2l8 2.7l1.3 7.4l-6.8 4.7l-8.1 -2.6l-1.2 -7.4zM1413.5 684.7l8 2.6l1.2 7.4l-6.8 4.8l-8 -2.6l-1.2 -7.4zM1431 682.1l8.1 2.6l1.2 7.4l-6.8 4.8l-8.1 -2.6l-1.2 -7.4zM1448.6 679.5l8 2.7l1.2 7.4l-6.8 4.7l-8 -2.6l-1.2 -7.4zM1466.1 677l8.1 2.6l1.2 7.4l-6.8 4.8l-8.1 -2.6l-1.2 -7.4zM1483.7 674.4l8 2.6l1.2 7.4l-6.8 4.8l-8 -2.6l-1.2 -7.4zM1501.2 671.8l8.1 2.7l1.2 7.4l-6.8 4.7l-8 -2.6l-1.3 -7.4zM1518.8 669.3l8 2.6l1.3 7.4l-6.9 4.8l-8 -2.6l-1.2 -7.4zM1536.4 666.7l8 2.6l1.2 7.4l-6.8 4.8l-8 -2.6l-1.3 -7.4zM1553.9 664.1l8 2.7l1.3 7.4l-6.8 4.7l-8.1 -2.6l-1.2 -7.4zM1571.5 661.6l8 2.6l1.2 7.4l-6.8 4.8l-8 -2.6l-1.2 -7.4zM1589 659l8.1 2.6l1.2 7.4l-6.8 4.8l-8.1 -2.6l-1.2 -7.4zM1606.6 656.4l8 2.7l1.2 7.4l-6.8 4.7l-8 -2.6l-1.2 -7.4zM1624.1 653.9l8.1 2.6l1.2 7.4l-6.8 4.8l-8.1 -2.6l-1.2 -7.4zM1641.7 651.3l8 2.6l1.2 7.4l-6.8 4.8l-8 -2.6l-1.2 -7.4zM1659.2 648.7l8.1 2.7l1.2 7.4l-6.8 4.7l-8 -2.6l-1.3 -7.4zM1676.8 646.2l8 2.6l1.3 7.4l-6.9 4.8l-8 -2.6l-1.2 -7.4zM1694.4 643.6l8 2.6l1.2 7.4l-6.8 4.8l-8 -2.6l-1.3 -7.4zM1711.9 641.1l8 2.6l1.3 7.4l-6.8 4.7l-8.1 -2.6l-1.2 -7.4zM1729.5 638.5l8 2.6l1.2 7.4l-6.8 4.8l-8 -2.6l-1.2 -7.4zM1747 635.9l8 2.6l1.3 7.4l-6.8 4.8l-8.1 -2.6l-1.2 -7.4zM1764.6 633.4l8 2.6l1.2 7.4l-6.8 4.8l-8 -2.7l-1.2 -7.4zM1782.1 630.8l8.1 2.6l1.2 7.4l-6.8 4.8l-8.1 -2.6l-1.2 -7.4zM1799.7 628.2l8 2.6l1.2 7.4l-6.8 4.8l-8 -2.6l-1.2 -7.4zM1817.2 625.7l8.1 2.6l1.2 7.4l-6.8 4.8l-8.1 -2.7l-1.2 -7.4zM1834.8 623.1l8 2.6l1.2 7.4l-6.8 4.8l-8 -2.6l-1.2 -7.4z" fill="#0c0c0e"/></g></g><rect x="0" y="146" width="634" height="22" fill="#f7f7f7" /><rect x="63.8" y="145.5" width="56.2" height="21.5" fill="#dcdcdc" stroke="#8e8e8e" stroke-width="1" /><text x="74.2" y="160.8" font-size="11.5" fill="#222" stroke="#222" stroke-width="0.25" textLength="34.1" lengthAdjust="spacingAndGlyphs">Sketch</text><rect x="120.0" y="145.5" width="75.80000000000001" height="21.5" fill="#dcdcdc" stroke="#8e8e8e" stroke-width="1" /><text x="128.3" y="160.8" font-size="11.5" fill="#222" stroke="#222" stroke-width="0.25" textLength="59.2" lengthAdjust="spacingAndGlyphs">Weldments</text><rect x="195.8" y="145.5" width="60.0" height="21.5" fill="#dcdcdc" stroke="#8e8e8e" stroke-width="1" /><text x="204.2" y="160.8" font-size="11.5" fill="#222" stroke="#222" stroke-width="0.25" textLength="43.8" lengthAdjust="spacingAndGlyphs">Evaluate</text><rect x="255.8" y="145.5" width="66.69999999999999" height="21.5" fill="#dcdcdc" stroke="#8e8e8e" stroke-width="1" /><text x="264.2" y="160.8" font-size="11.5" fill="#222" stroke="#222" stroke-width="0.25" textLength="49.5" lengthAdjust="spacingAndGlyphs">DimXpert</text><rect x="322.5" y="145.5" width="72.69999999999999" height="21.5" fill="#dcdcdc" stroke="#8e8e8e" stroke-width="1" /><text x="330.5" y="160.8" font-size="11.5" fill="#222" stroke="#222" stroke-width="0.25" textLength="56.0" lengthAdjust="spacingAndGlyphs">Simulation</text><rect x="395.2" y="145.5" width="117.0" height="21.5" fill="#dcdcdc" stroke="#8e8e8e" stroke-width="1" /><text x="403.5" y="160.8" font-size="11.5" fill="#222" stroke="#222" stroke-width="0.25" textLength="100.0" lengthAdjust="spacingAndGlyphs">SOLIDWORKS MBD</text><rect x="512.2" y="145.5" width="122.30000000000001" height="21.5" fill="#dcdcdc" stroke="#8e8e8e" stroke-width="1" /><text x="520.7" y="160.8" font-size="11.5" fill="#222" stroke="#222" stroke-width="0.25">Analysis Preparation</text><text x="8.3" y="160.8" font-size="11.8" font-weight="bold" fill="#333" textLength="47.9" lengthAdjust="spacingAndGlyphs">Features</text><line x1="0" y1="167.5" x2="63" y2="167.5" stroke="#9a9a9a" stroke-width="1" /><line x1="322.5" y1="168" x2="322.5" y2="973" stroke="#8c8c8c" stroke-width="1" /><rect x="320" y="541" width="10" height="37" fill="#f7f7f7" /><path d="M322.5 540.5h8v38h-8" fill="none" stroke="#8c8c8c"/><circle cx="326" cy="559" r="2.6" fill="#c4c4c4" stroke="#8a8a8a" stroke-width=".7"/><g transform="translate(943.8 151)"><path d="M7.5 12.5l-5.5 6" stroke="#2d5f86" stroke-width="3.4" stroke-linecap="round"/><path d="M7.5 12.5l-5.5 6" stroke="#6fa8d0" stroke-width="1.8" stroke-linecap="round"/><circle cx="12" cy="8" r="6" fill="#eef3f6" stroke="#3a3a3a" stroke-width="1.2"/><path d="M12 3.6l1.3 1.6h-2.6zM12 12.4l1.3-1.6h-2.6zM7.6 8l1.6-1.3v2.6zM16.4 8l-1.6-1.3v2.6z" fill="#444"/></g><g transform="translate(969.5 151)"><g transform="translate(-1.5 1.5)"><path d="M7.5 12.5l-5.5 6" stroke="#2d5f86" stroke-width="3.4" stroke-linecap="round"/><path d="M7.5 12.5l-5.5 6" stroke="#6fa8d0" stroke-width="1.8" stroke-linecap="round"/><circle cx="12" cy="8" r="6" fill="#eef3f6" stroke="#3a3a3a" stroke-width="1.2"/></g><path d="M13 1h6v6" fill="none" stroke="#555" stroke-dasharray="1.5 1.2" stroke-width="1"/><path d="M9 1h2M19 9v2" stroke="#555"/></g><g transform="translate(996 151)"><path d="M2 13l11-9 4 3.5-10 9.5z" fill="#e2e2e2" stroke="#555" stroke-width="1"/><ellipse cx="3.5" cy="14.5" rx="2.5" ry="3.5" transform="rotate(-40 3.5 14.5)" fill="#f4f4f4" stroke="#555"/><path d="M10 15.5h8M13 12.5l-3 3 3 3" fill="none" stroke="#2f79b5" stroke-width="1.8"/></g><g transform="translate(1022 151)"><path d="M2 5q8-5 16 0v11q-8 4-16 0z" fill="#f2f2f2" stroke="#333" stroke-width="1"/><path d="M2 5.5l6 1.5v11l-6-2zM12 7l6-1.5v10.5l-6 2z" fill="#4a8fc4" stroke="#333" stroke-width=".8"/><path d="M3 8l4 5M3 11l4 5M13 9l4-3M13 13l4-4" stroke="#bfe0f3" stroke-width=".8"/></g><g transform="translate(1047.7 151)"><path d="M2 14l10-10 4 3.5-10 9.5z" fill="#e2e2e2" stroke="#555" stroke-width="1"/><path d="M5 8l7-5 2 2-7 5z" fill="#f2c14b" stroke="#8a6a00" stroke-width=".6"/><text x="9.5" y="19.5" font-size="10" font-family="Liberation Serif" fill="#2f6ea3" font-weight="bold">A</text></g><g transform="translate(1074.5 151)"><path d="M3 7h11v11H3z" fill="#5aa6dc" stroke="#333"/><path d="M3 7l4-4h11l-4 4zM14 7l4-4v11l-4 4z" fill="#f4f8fb" stroke="#333"/><path d="M16 5v4M15 8l1 1 1-1" stroke="#333" stroke-width=".7" fill="none"/></g><g transform="translate(1115 151)"><path d="M4 5l7-2 6 2v12l-6 2-7-2z" fill="#7eb8e0" stroke="#333"/><path d="M11 7v12" stroke="#333"/><path d="M11 7l6-2v12l-6 2z" fill="#f3f3f3" stroke="#333"/></g><g transform="translate(1154.6 151)"><path d="M1 10q9-9 18 0q-9 9-18 0z" fill="#ededed" stroke="#777"/><circle cx="10" cy="10" r="3.5" fill="#555"/><path d="M10 2v16" stroke="#666" stroke-width="1.2"/></g><g transform="translate(1194 151)"><circle cx="9" cy="9" r="7" fill="#3c9a3c"/><path d="M9 2a7 7 0 0 1 7 7H9z" fill="#2a6fd0"/><path d="M2 9a7 7 0 0 1 7-7v7z" fill="#e03a2a"/><path d="M10 17l7-7 2 2-7 7z" fill="#f0c040" stroke="#555" stroke-width=".7"/></g><g transform="translate(1219 151)"><circle cx="10" cy="8" r="6.5" fill="#3c9a3c"/><path d="M10 1.5a6.5 6.5 0 0 1 6.5 6.5H10z" fill="#2a6fd0"/><path d="M3.5 8a6.5 6.5 0 0 1 6.5-6.5V8z" fill="#e03a2a"/><path d="M2 14h16v5H2z" fill="#222"/><path d="M4 14h3v2.5H4zM10 14h3v2.5h-3zM7 16.5h3V19H7zM13 16.5h3V19h-3z" fill="#fff"/></g><g transform="translate(1259.6 151)"><rect x="2" y="3" width="16" height="11" fill="#e6e6e6" stroke="#555" stroke-width="1.2"/><path d="M10 14v3M6 18h8" stroke="#444" stroke-width="1.5"/></g><path d="M1100.5 159.75h5.0l-2.5 2.5z" fill="#777"/><path d="M1141.0 159.75h5.0l-2.5 2.5z" fill="#777"/><path d="M1181.0 159.75h5.0l-2.5 2.5z" fill="#777"/><path d="M1246.5 159.75h5.0l-2.5 2.5z" fill="#777"/><path d="M1286.5 159.75h5.0l-2.5 2.5z" fill="#777"/><rect x="1789.5" y="155.5" width="12" height="12" fill="none" stroke="#777" stroke-width="1" /><path d="M1799 158v7l-3-3.5z" fill="#777"/><rect x="1816.5" y="155.5" width="11" height="12" fill="none" stroke="#777" stroke-width="1" /><path d="M1820 158v7l3-3.5z" fill="#777"/><rect x="1843.5" y="164" width="9" height="2" fill="#888" /><path d="M1870.5 155.5h8.5v7h-8.5zM1867.5 158.5h8.5v7h-8.5z" fill="#eef0f3" stroke="#999" stroke-width="1.1"/><path d="M1895 156l9 10M1904 156l-9 10" stroke="#888" stroke-width="1.2"/><rect x="1894.5" y="197.5" width="26" height="167" fill="#dedede" stroke="#9a9a9a" stroke-width="1" /><rect x="1895" y="198" width="25" height="22" fill="#f4f4f4" /><line x1="1894.5" y1="220.5" x2="1920" y2="220.5" stroke="#9a9a9a" stroke-width="1" /><line x1="1894.5" y1="244.5" x2="1920" y2="244.5" stroke="#9a9a9a" stroke-width="1" /><line x1="1894.5" y1="268.5" x2="1920" y2="268.5" stroke="#9a9a9a" stroke-width="1" /><line x1="1894.5" y1="292.5" x2="1920" y2="292.5" stroke="#9a9a9a" stroke-width="1" /><line x1="1894.5" y1="316.5" x2="1920" y2="316.5" stroke="#9a9a9a" stroke-width="1" /><line x1="1894.5" y1="340.5" x2="1920" y2="340.5" stroke="#9a9a9a" stroke-width="1" /><g transform="translate(1897 199)"><path d="M5 9v8.5h10V9" fill="none" stroke="#222" stroke-width="1.2"/><rect x="8.5" y="11.5" width="3" height="6" fill="none" stroke="#222" stroke-width="1"/><path d="M1.5 10l8.5-8 8.5 8" fill="none" stroke="#2b5d7e" stroke-width="2.2"/></g><g transform="translate(1897 222.5)"><path d="M3 6l4-3v13l-4 3zM7 3l4 0v13H7zM11 3l3 3v13l-3-3z" fill="#f1f1f1" stroke="#444" stroke-width="1"/></g><g transform="translate(1897 246.5)"><path d="M1 16V4h5l2 2h8v3" fill="#f4f4f4" stroke="#444"/><path d="M1 16l4-7h14l-4 7z" fill="#f8f8f8" stroke="#444"/></g><g transform="translate(1897 270.5)"><rect x="1" y="2" width="17" height="15" fill="#f2c14b" stroke="#6d5200"/><rect x="3" y="4" width="6" height="4" fill="#fff" stroke="#444" stroke-width=".7"/><rect x="11" y="4" width="5" height="4" fill="#fff" stroke="#444" stroke-width=".7"/><rect x="11" y="10" width="5" height="5" fill="#fff" stroke="#444" stroke-width=".7"/><path d="M3 11h6M6 11v4" stroke="#6d5200" stroke-width="1.5"/></g><g transform="translate(1897 294.5)"><circle cx="10" cy="10" r="8" fill="#2e9a2e"/><path d="M10 2a8 8 0 0 1 8 8H10z" fill="#2a6fd0"/><path d="M2 10a8 8 0 0 1 8-8v8z" fill="#e0322a"/><circle cx="10" cy="10" r="4" fill="#fff" opacity=".6"/></g><g transform="translate(1897 318.5)"><rect x="2" y="2" width="16" height="16" fill="#fff" stroke="#2f5f8a" stroke-width="1.2"/><rect x="2" y="2" width="16" height="3" fill="#3b79b0"/><path d="M5 8h2M9 8h7M5 12h2M9 12h7M5 15h2M9 15h7" stroke="#2f5f8a" stroke-width="1.2"/></g><g transform="translate(1897 342.5)"><path d="M1 3h11v7H6l-3 3v-3H1z" fill="#4a9ad2" stroke="#1d4e7a"/><path d="M7 8h11v7h-2v3l-3-3H7z" fill="#f4f4f4" stroke="#444"/></g><g><path d="M363 906L360 894" stroke="#1f5e1f" stroke-width="3.6"/><path d="M363 906L360 894" stroke="#3a8a3a" stroke-width="1.6"/><path d="M355.5 896L359.5 886 364 896z" fill="#2b6e2b"/><text x="354" y="884.5" font-size="9" fill="#2b7a2b" textLength="7" lengthAdjust="spacingAndGlyphs">Y</text><path d="M366 912.5L386 910.5" stroke="#a82020" stroke-width="3.4"/><path d="M366 912.5L386 910.5" stroke="#e04848" stroke-width="1.5"/><path d="M385 905L394.5 910 385.5 916z" fill="#c62828"/><text x="393" y="913.5" font-size="9" fill="#d33" textLength="6" lengthAdjust="spacingAndGlyphs">X</text><ellipse cx="363.5" cy="910" rx="4.6" ry="5.6" fill="#1a2aa8"/></g><rect x="0" y="973" width="1920" height="72" fill="#f7f7f7" /><line x1="82" y1="973.5" x2="1918.5" y2="973.5" stroke="#8a8a8a" stroke-width="1" /><line x1="1918.5" y1="973" x2="1918.5" y2="988" stroke="#8a8a8a" stroke-width="1" /><rect x="82" y="973.5" width="65.5" height="14.5" fill="#cbcbcb" /><path d="M82.5 988V973.5H147" fill="none" stroke="#333"/><line x1="98.5" y1="974" x2="98.5" y2="988" stroke="#b4b4b4" stroke-width="1" /><line x1="114.5" y1="974" x2="114.5" y2="988" stroke="#b4b4b4" stroke-width="1" /><line x1="130.5" y1="974" x2="130.5" y2="988" stroke="#b4b4b4" stroke-width="1" /><g fill="#a9a9a9"><rect x="88" y="977" width="1.5" height="8"/><path d="M95 977v8l-5-4z"/><path d="M111 977v8l-5-4z"/><path d="M121 977v8l5-4z"/><path d="M136 977v8l5-4z"/><rect x="142" y="977" width="1.5" height="8"/></g><text x="160.0" y="984.0" font-size="11.8" font-weight="bold" textLength="35.0" lengthAdjust="spacingAndGlyphs">Model</text><rect x="205.5" y="973.5" width="67" height="14.5" fill="#d6d6d6" stroke="#8e8e8e" stroke-width="1" /><text x="215.0" y="984.0" font-size="11.5" stroke="#000" stroke-width="0.25" textLength="46.5" lengthAdjust="spacingAndGlyphs">3D Views</text><rect x="272.5" y="973.5" width="107.5" height="14.5" fill="#d6d6d6" stroke="#8e8e8e" stroke-width="1" /><text x="282.5" y="984.0" font-size="11.5" stroke="#000" stroke-width="0.25" textLength="80.0" lengthAdjust="spacingAndGlyphs">Motion Study 1</text><rect x="4" y="993" width="1" height="1" fill="#888"/><rect x="4" y="996" width="1" height="1" fill="#888"/><rect x="4" y="999" width="1" height="1" fill="#888"/><rect x="4" y="1002" width="1" height="1" fill="#888"/><rect x="4" y="1005" width="1" height="1" fill="#888"/><rect x="4" y="1008" width="1" height="1" fill="#888"/><rect x="4" y="1011" width="1" height="1" fill="#888"/><rect x="4" y="1014" width="1" height="1" fill="#888"/><rect x="4" y="1017" width="1" height="1" fill="#888"/><rect x="16" y="992.5" width="97.5" height="26" fill="#d5d5d5" /><path d="M100 1004l4 4 4-4" fill="none" stroke="#aaa" stroke-width="1.1"/><g transform="translate(117 997)"><path d="M2 9l7-5 8 3-7 5z" fill="#eee" stroke="#bbb"/><path d="M2 9v3l8 4 7-5V7" fill="none" stroke="#bbb"/></g><line x1="148.5" y1="990" x2="148.5" y2="1020" stroke="#8a8a8a" stroke-width="1" /><line x1="0" y1="1021.5" x2="1920" y2="1021.5" stroke="#8a8a8a" stroke-width="1" /><text x="1.0" y="1035.5" font-size="11.5" stroke="#000" stroke-width="0.25" textLength="210.5" lengthAdjust="spacingAndGlyphs">SOLIDWORKS Premium 2017 x64 Edition</text><line x1="1647.5" y1="1023" x2="1647.5" y2="1040" stroke="#cfcfcf" stroke-width="1" /><line x1="1655.5" y1="1023" x2="1655.5" y2="1040" stroke="#cfcfcf" stroke-width="1" /><line x1="1726.5" y1="1023" x2="1726.5" y2="1040" stroke="#cfcfcf" stroke-width="1" /><line x1="1742.5" y1="1023" x2="1742.5" y2="1040" stroke="#cfcfcf" stroke-width="1" /><text x="1659.0" y="1035.5" font-size="11.5" stroke="#000" stroke-width="0.25" textLength="61.0" lengthAdjust="spacingAndGlyphs">Editing Part</text><text x="1774.0" y="1035.5" font-size="11.5" stroke="#000" stroke-width="0.25">MMGS</text><path d="M1828 1034l3.5-3.5 3.5 3.5z" fill="#333"/><g transform="translate(1898 1023)"><path d="M1 7l9-5 9 4-9 6z" fill="#f4f4f4" stroke="#333"/><path d="M1 7v4l9 5 9-6V6" fill="none" stroke="#333"/><path d="M5 7l9-4M7 9l9-4" stroke="#333" stroke-width=".8"/></g><rect x="0" y="1040" width="1920" height="5" fill="#000" /><rect x="47" y="1040" width="345" height="5" fill="#e8e8e8" /></svg></body></html>
